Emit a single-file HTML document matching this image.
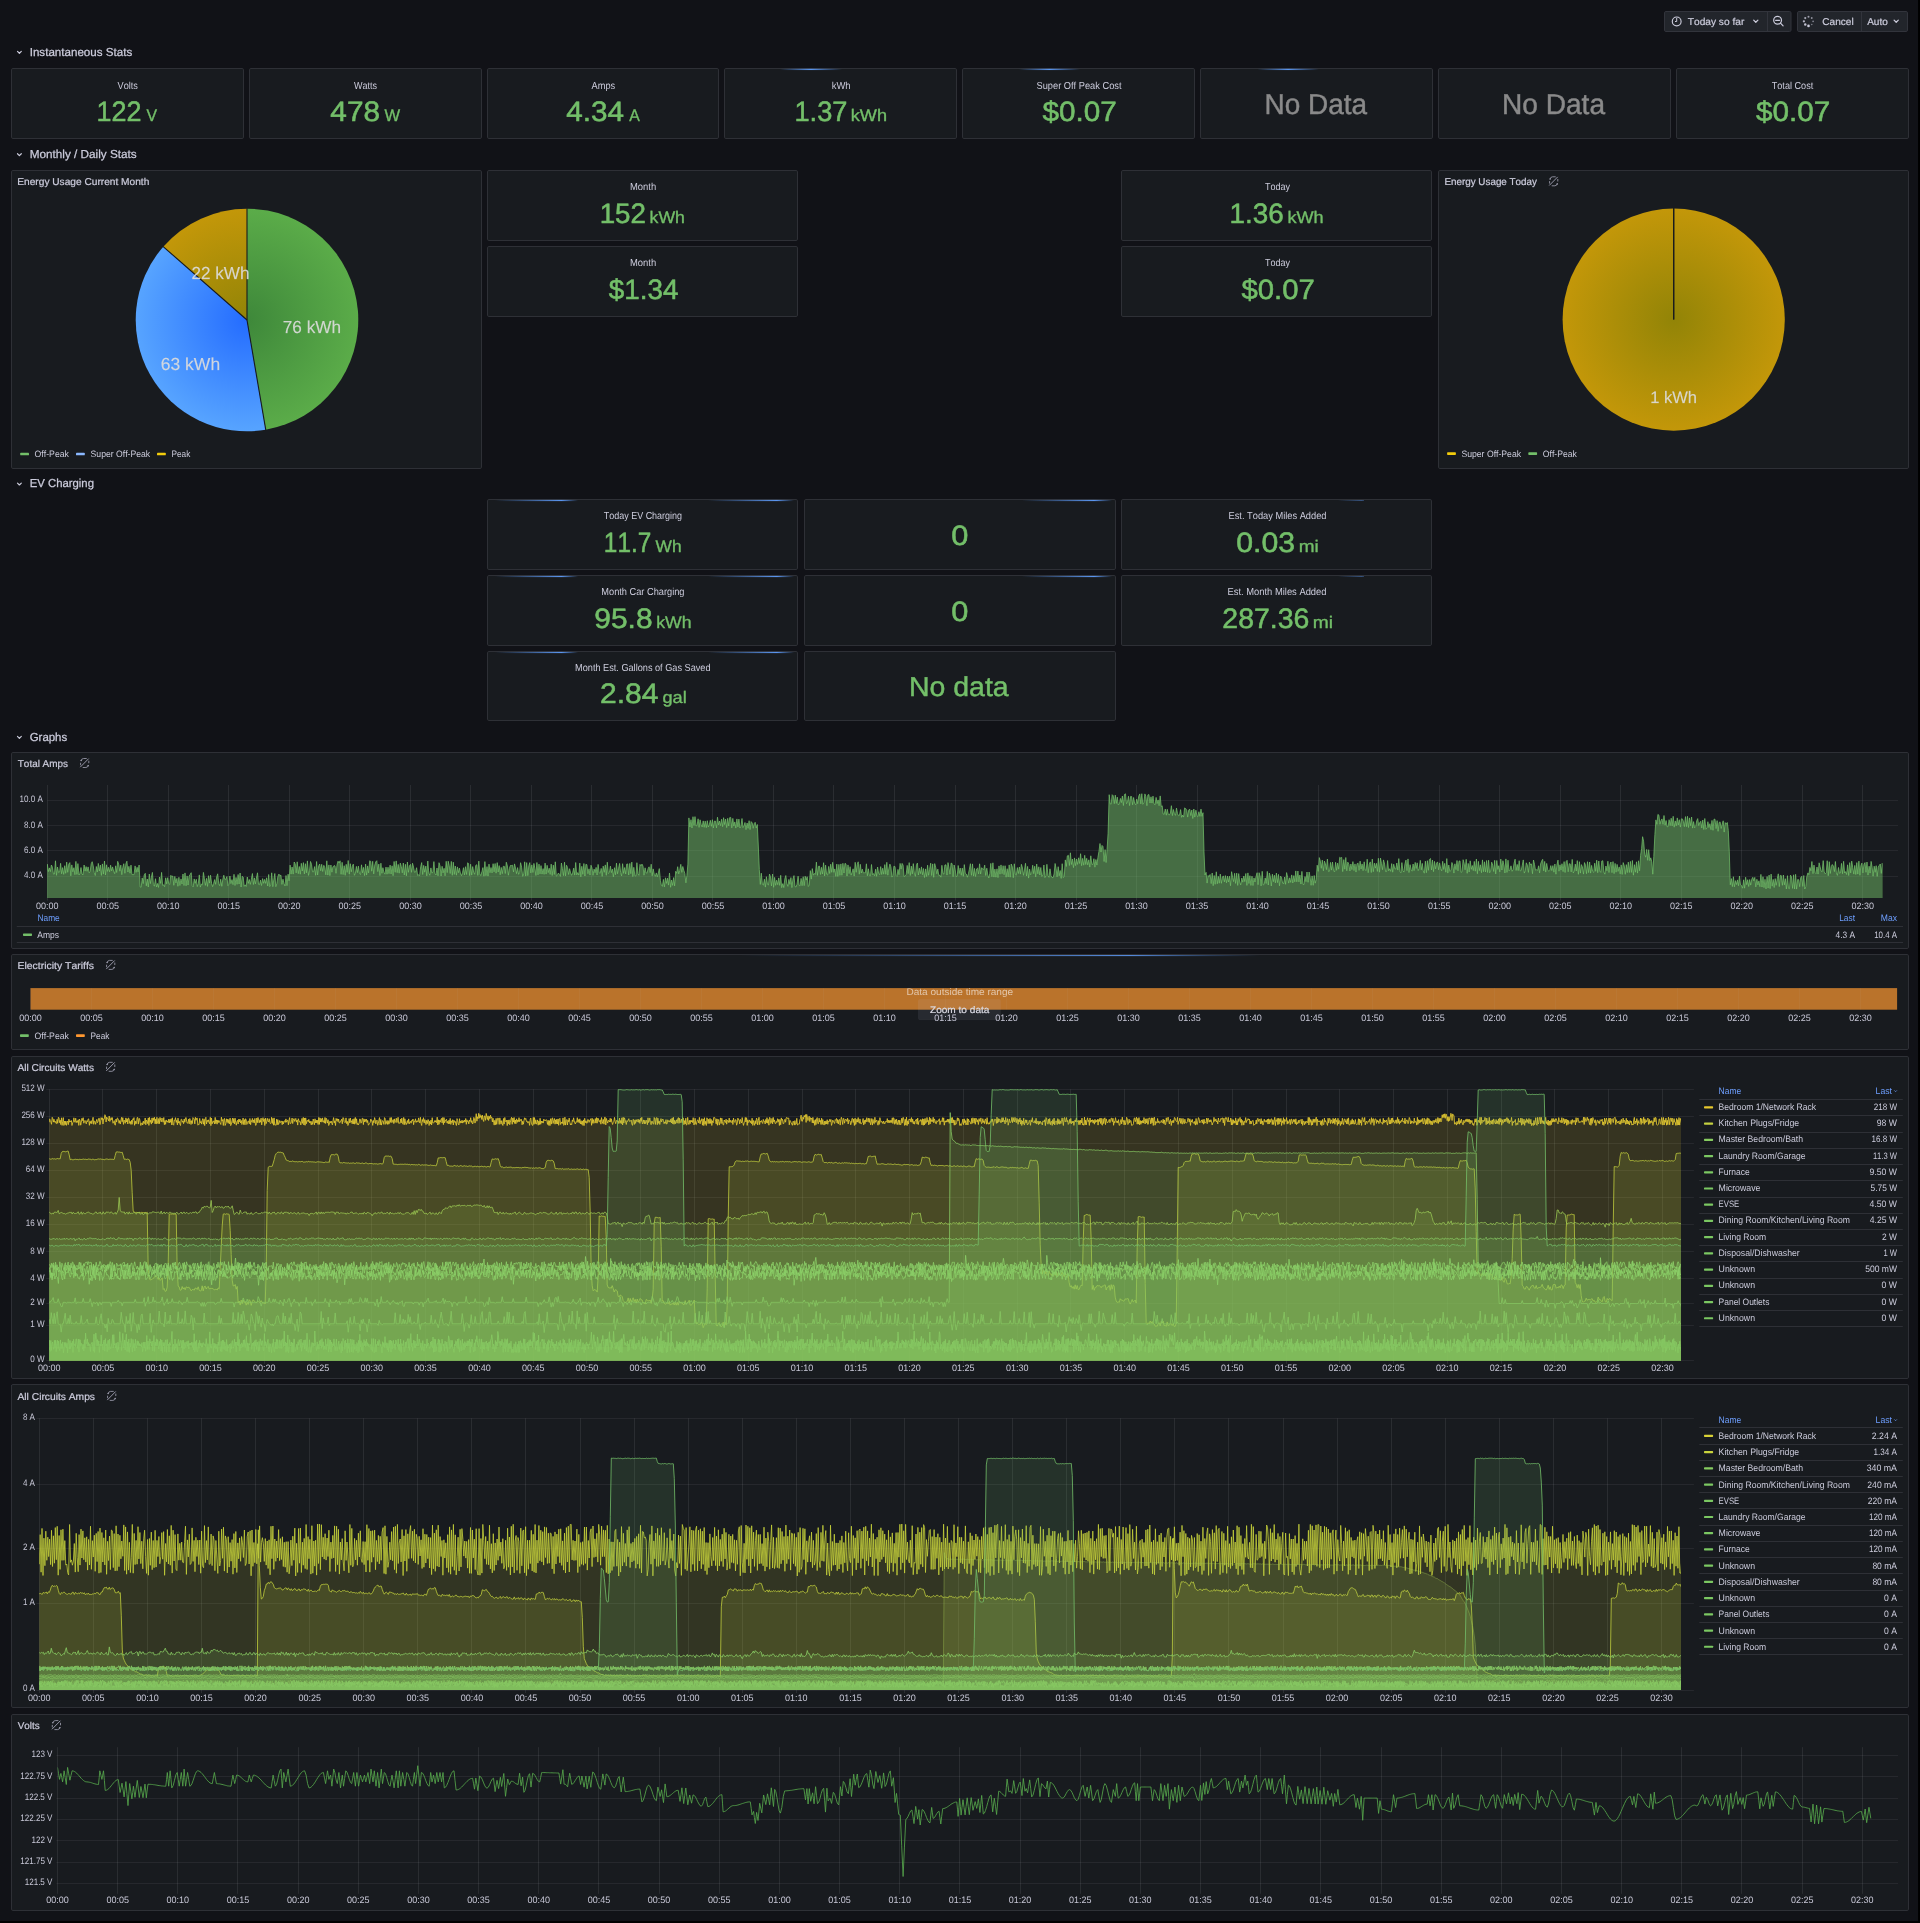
<!DOCTYPE html>
<html><head><meta charset="utf-8"><title>Energy Dashboard</title>
<style>
html,body{margin:0;padding:0;background:#111217;overflow:hidden}
body{width:1920px;height:1923px;position:relative;font-family:"Liberation Sans",sans-serif}
svg{display:block;position:absolute;left:0;top:0;will-change:transform}
svg text{font-family:"Liberation Sans",sans-serif;white-space:pre;text-rendering:geometricPrecision;font-kerning:none}
</style></head><body>
<svg width="1920" height="1923" viewBox="0 0 1920 1923">
<defs>
<linearGradient id="lb" x1="0" x2="1" y1="0" y2="0"><stop offset="0" stop-color="#5794f2" stop-opacity="0"/><stop offset="0.5" stop-color="#5b96f0" stop-opacity="1"/><stop offset="1" stop-color="#5794f2" stop-opacity="0"/></linearGradient>
<linearGradient id="lb2" x1="0" x2="1" y1="0" y2="0"><stop offset="0" stop-color="#5794f2" stop-opacity="0"/><stop offset="0.8" stop-color="#5b96f0" stop-opacity="1"/><stop offset="1" stop-color="#5794f2" stop-opacity="0"/></linearGradient>
<linearGradient id="lb3" x1="0" x2="1" y1="0" y2="0"><stop offset="0" stop-color="#5794f2" stop-opacity="0"/><stop offset="0.9" stop-color="#5b96f0" stop-opacity="0.45"/><stop offset="1" stop-color="#5794f2" stop-opacity="0.3"/></linearGradient>
<linearGradient id="lb4" x1="0" x2="1" y1="0" y2="0"><stop offset="0" stop-color="#5794f2" stop-opacity="0"/><stop offset="0.75" stop-color="#5b96f0" stop-opacity="0.9"/><stop offset="0.9" stop-color="#5794f2" stop-opacity="0.3"/><stop offset="1" stop-color="#5794f2" stop-opacity="0"/></linearGradient>
<linearGradient id="lb5" x1="0" x2="1" y1="0" y2="0"><stop offset="0" stop-color="#5b8fe8" stop-opacity="0.95"/><stop offset="0.45" stop-color="#5b8fe8" stop-opacity="0.95"/><stop offset="0.75" stop-color="#5b8fe8" stop-opacity="0.3"/><stop offset="1" stop-color="#5b8fe8" stop-opacity="0"/></linearGradient>
</defs>
<rect x="0" y="0" width="1920" height="1923" fill="#111217"/>
<rect x="1664.5" y="11.5" width="126.5" height="20" rx="1.4" fill="#22252b" stroke="#32343c" stroke-width="1"/>
<path d="M1767.5 11.5v20" stroke="#32343c" stroke-width="1"/>
<circle cx="1676.7" cy="21.4" r="4.4" fill="none" stroke="#ccccdc" stroke-width="1.15"/>
<path d="M1676.7 18.4v3.1h-1.3" fill="none" stroke="#ccccdc" stroke-width="1" stroke-linecap="round" stroke-linejoin="round"/>
<text x="1687.8" y="25" font-size="9.9" fill="#ccccdc" textLength="56.5" lengthAdjust="spacingAndGlyphs" stroke="#ccccdc" stroke-width="0.2">Today so far</text>
<path d="M1753.7 20.15 l2.1 2.1 l2.1 -2.1" fill="none" stroke="#ccccdc" stroke-width="1.25" stroke-linecap="round" stroke-linejoin="round"/>
<circle cx="1777.6" cy="20.3" r="3.9" fill="none" stroke="#ccccdc" stroke-width="1.2"/>
<path d="M1775.6 20.3h4M1780.5 23.2l2.6 2.6" fill="none" stroke="#ccccdc" stroke-width="1.2" stroke-linecap="round"/>
<rect x="1797.5" y="11.5" width="110" height="20" rx="1.4" fill="#22252b" stroke="#32343c" stroke-width="1"/>
<path d="M1861.5 11.5v20" stroke="#32343c" stroke-width="1"/>
<circle cx="1808.5" cy="25.9" r="1.3" fill="#ccccdc" opacity="1"/>
<circle cx="1805.25" cy="24.55" r="1.23" fill="#ccccdc" opacity="0.93"/>
<circle cx="1803.9" cy="21.3" r="1.16" fill="#ccccdc" opacity="0.86"/>
<circle cx="1805.25" cy="18.05" r="1.09" fill="#ccccdc" opacity="0.79"/>
<circle cx="1808.5" cy="16.7" r="1.02" fill="#ccccdc" opacity="0.72"/>
<circle cx="1811.75" cy="18.05" r="0.95" fill="#ccccdc" opacity="0.65"/>
<circle cx="1813.1" cy="21.3" r="0.88" fill="#ccccdc" opacity="0.58"/>
<circle cx="1811.75" cy="24.55" r="0.81" fill="#ccccdc" opacity="0.51"/>
<text x="1822.3" y="25" font-size="9.9" fill="#ccccdc" textLength="31.4" lengthAdjust="spacingAndGlyphs" stroke="#ccccdc" stroke-width="0.2">Cancel</text>
<text x="1867.2" y="25" font-size="9.9" fill="#ccccdc" textLength="20.6" lengthAdjust="spacingAndGlyphs" stroke="#ccccdc" stroke-width="0.2">Auto</text>
<path d="M1894.1 20.15 l2.1 2.1 l2.1 -2.1" fill="none" stroke="#ccccdc" stroke-width="1.25" stroke-linecap="round" stroke-linejoin="round"/>
<path d="M17.5 51.35 l1.9 1.9 l1.9 -1.9" fill="none" stroke="#ccccdc" stroke-width="1.2" stroke-linecap="round" stroke-linejoin="round"/>
<text x="29.7" y="55.5" font-size="11.6" fill="#ccccdc" textLength="102.5" lengthAdjust="spacingAndGlyphs" stroke="#ccccdc" stroke-width="0.25">Instantaneous Stats</text>
<path d="M17.5 153.75 l1.9 1.9 l1.9 -1.9" fill="none" stroke="#ccccdc" stroke-width="1.2" stroke-linecap="round" stroke-linejoin="round"/>
<text x="29.7" y="157.9" font-size="11.6" fill="#ccccdc" textLength="107" lengthAdjust="spacingAndGlyphs" stroke="#ccccdc" stroke-width="0.25">Monthly / Daily Stats</text>
<path d="M17.5 483.08 l1.9 1.9 l1.9 -1.9" fill="none" stroke="#ccccdc" stroke-width="1.2" stroke-linecap="round" stroke-linejoin="round"/>
<text x="29.7" y="487.23" font-size="11.6" fill="#ccccdc" textLength="64.3" lengthAdjust="spacingAndGlyphs" stroke="#ccccdc" stroke-width="0.25">EV Charging</text>
<path d="M17.5 736.42 l1.9 1.9 l1.9 -1.9" fill="none" stroke="#ccccdc" stroke-width="1.2" stroke-linecap="round" stroke-linejoin="round"/>
<text x="29.7" y="740.57" font-size="11.6" fill="#ccccdc" textLength="37.5" lengthAdjust="spacingAndGlyphs" stroke="#ccccdc" stroke-width="0.25">Graphs</text>
<rect x="11.5" y="68.5" width="232" height="70" rx="1.4" fill="#181b1f" stroke="#2e3036" stroke-width="1"/>
<rect x="249.5" y="68.5" width="232" height="70" rx="1.4" fill="#181b1f" stroke="#2e3036" stroke-width="1"/>
<rect x="487.5" y="68.5" width="231" height="70" rx="1.4" fill="#181b1f" stroke="#2e3036" stroke-width="1"/>
<rect x="724.5" y="68.5" width="232" height="70" rx="1.4" fill="#181b1f" stroke="#2e3036" stroke-width="1"/>
<rect x="962.5" y="68.5" width="232" height="70" rx="1.4" fill="#181b1f" stroke="#2e3036" stroke-width="1"/>
<rect x="1200.5" y="68.5" width="232" height="70" rx="1.4" fill="#181b1f" stroke="#2e3036" stroke-width="1"/>
<rect x="1438.5" y="68.5" width="232" height="70" rx="1.4" fill="#181b1f" stroke="#2e3036" stroke-width="1"/>
<rect x="1676.5" y="68.5" width="232" height="70" rx="1.4" fill="#181b1f" stroke="#2e3036" stroke-width="1"/>
<text x="127.75" y="89.3" font-size="10.2" fill="#ccccdc" text-anchor="middle" textLength="20.3" lengthAdjust="spacingAndGlyphs">Volts</text>
<text x="96.5" y="120.6" font-size="28.1" fill="#73bf69" textLength="44.9" lengthAdjust="spacingAndGlyphs" stroke="#73bf69" stroke-width="0.55">122</text>
<text x="146.48" y="120.6" font-size="16.8" fill="#73bf69" textLength="10.54" lengthAdjust="spacingAndGlyphs" stroke="#73bf69" stroke-width="0.35">V</text>
<text x="365.57" y="89.3" font-size="10.2" fill="#ccccdc" text-anchor="middle" textLength="23" lengthAdjust="spacingAndGlyphs">Watts</text>
<text x="330.39" y="120.6" font-size="28.1" fill="#73bf69" textLength="49.68" lengthAdjust="spacingAndGlyphs" stroke="#73bf69" stroke-width="0.55">478</text>
<text x="384.5" y="120.6" font-size="16.8" fill="#73bf69" textLength="15.63" lengthAdjust="spacingAndGlyphs" stroke="#73bf69" stroke-width="0.35">W</text>
<text x="603.39" y="89.3" font-size="10.2" fill="#ccccdc" text-anchor="middle" textLength="23.6" lengthAdjust="spacingAndGlyphs">Amps</text>
<text x="566.21" y="120.6" font-size="28.1" fill="#73bf69" textLength="57.75" lengthAdjust="spacingAndGlyphs" stroke="#73bf69" stroke-width="0.55">4.34</text>
<text x="629.36" y="120.6" font-size="16.8" fill="#73bf69" textLength="10.56" lengthAdjust="spacingAndGlyphs" stroke="#73bf69" stroke-width="0.35">A</text>
<text x="841.21" y="89.3" font-size="10.2" fill="#ccccdc" text-anchor="middle" textLength="18.8" lengthAdjust="spacingAndGlyphs">kWh</text>
<text x="794.49" y="120.6" font-size="28.1" fill="#73bf69" textLength="52.94" lengthAdjust="spacingAndGlyphs" stroke="#73bf69" stroke-width="0.55">1.37</text>
<text x="850.84" y="120.6" font-size="16.8" fill="#73bf69" textLength="36.19" lengthAdjust="spacingAndGlyphs" stroke="#73bf69" stroke-width="0.35">kWh</text>
<text x="1079.03" y="89.3" font-size="10.2" fill="#ccccdc" text-anchor="middle" textLength="85" lengthAdjust="spacingAndGlyphs">Super Off Peak Cost</text>
<text x="1042.46" y="120.6" font-size="28.1" fill="#73bf69" textLength="74.31" lengthAdjust="spacingAndGlyphs" stroke="#73bf69" stroke-width="0.55">$0.07</text>
<text x="1264.51" y="114.3" font-size="28.9" fill="#8a8a8a" textLength="102.49" lengthAdjust="spacingAndGlyphs" stroke="#8a8a8a" stroke-width="0.45">No Data</text>
<text x="1502" y="114.3" font-size="28.9" fill="#8a8a8a" textLength="103" lengthAdjust="spacingAndGlyphs" stroke="#8a8a8a" stroke-width="0.45">No Data</text>
<text x="1792.49" y="89.3" font-size="10.2" fill="#ccccdc" text-anchor="middle" textLength="41.5" lengthAdjust="spacingAndGlyphs">Total Cost</text>
<text x="1755.92" y="120.6" font-size="28.1" fill="#73bf69" textLength="74.31" lengthAdjust="spacingAndGlyphs" stroke="#73bf69" stroke-width="0.55">$0.07</text>
<rect x="780" y="68.75" width="62" height="1.3" fill="url(#lb)"/>
<rect x="1019" y="68.75" width="61" height="1.3" fill="url(#lb)"/>
<rect x="1257.5" y="68.75" width="61.3" height="1.3" fill="url(#lb)"/>
<rect x="11.5" y="170.5" width="470" height="298" rx="1.4" fill="#181b1f" stroke="#2e3036" stroke-width="1"/>
<text x="17.3" y="184.8" font-size="10" fill="#ccccdc" textLength="132" lengthAdjust="spacingAndGlyphs" stroke="#ccccdc" stroke-width="0.22">Energy Usage Current Month</text>
<radialGradient id="pa0" gradientUnits="userSpaceOnUse" cx="247" cy="320" r="111.3"><stop offset="0" stop-color="rgb(62,136,58)"/><stop offset="1" stop-color="rgb(91,172,73)"/></radialGradient>
<radialGradient id="pa1" gradientUnits="userSpaceOnUse" cx="247" cy="320" r="111.3"><stop offset="0" stop-color="rgb(36,108,255)"/><stop offset="1" stop-color="rgb(87,164,255)"/></radialGradient>
<radialGradient id="pa2" gradientUnits="userSpaceOnUse" cx="247" cy="320" r="111.3"><stop offset="0" stop-color="rgb(146,132,7)"/><stop offset="1" stop-color="rgb(195,151,9)"/></radialGradient>
<path d="M247 320 L247 208.7 A111.3 111.3 0 0 1 265.72 429.71 Z" fill="url(#pa0)"/>
<path d="M247 320 L265.72 429.71 A111.3 111.3 0 0 1 163.28 246.66 Z" fill="url(#pa1)"/>
<path d="M247 320 L163.28 246.66 A111.3 111.3 0 0 1 247 208.7 Z" fill="url(#pa2)"/>
<path d="M247 320 L247 208.2" stroke="#181b1f" stroke-width="1.1"/>
<path d="M247 320 L265.81 430.21" stroke="#181b1f" stroke-width="1.1"/>
<path d="M247 320 L162.91 246.33" stroke="#181b1f" stroke-width="1.1"/>
<text x="282.82" y="333.3" font-size="17.4" fill="#dcdcdc" textLength="58.3" lengthAdjust="spacingAndGlyphs" fill-opacity="0.92" stroke="#dcdcdc" stroke-opacity="0.5" stroke-width="0.25">76 kWh</text>
<text x="160.81" y="370" font-size="17.4" fill="#dcdcdc" textLength="59.33" lengthAdjust="spacingAndGlyphs" fill-opacity="0.92" stroke="#dcdcdc" stroke-opacity="0.5" stroke-width="0.25">63 kWh</text>
<text x="191.44" y="279" font-size="17.4" fill="#dcdcdc" textLength="57.97" lengthAdjust="spacingAndGlyphs" fill-opacity="0.92" stroke="#dcdcdc" stroke-opacity="0.5" stroke-width="0.25">22 kWh</text>
<rect x="20.2" y="452.65" width="8.8" height="2.7" rx="0.7" fill="#73bf69"/>
<text x="34.6" y="457" font-size="9.3" fill="#ccccdc" textLength="34.3" lengthAdjust="spacingAndGlyphs">Off-Peak</text>
<rect x="76" y="452.65" width="8.8" height="2.7" rx="0.7" fill="#8ab8ff"/>
<text x="90.6" y="457" font-size="9.3" fill="#ccccdc" textLength="59.6" lengthAdjust="spacingAndGlyphs">Super Off-Peak</text>
<rect x="157" y="452.65" width="8.8" height="2.7" rx="0.7" fill="#f2cc0c"/>
<text x="171.5" y="457" font-size="9.3" fill="#ccccdc" textLength="18.8" lengthAdjust="spacingAndGlyphs">Peak</text>
<rect x="487.5" y="170.5" width="310" height="70" rx="1.4" fill="#181b1f" stroke="#2e3036" stroke-width="1"/>
<rect x="487.5" y="246.5" width="310" height="70" rx="1.4" fill="#181b1f" stroke="#2e3036" stroke-width="1"/>
<text x="643.1" y="190" font-size="10.2" fill="#ccccdc" text-anchor="middle" textLength="26.2" lengthAdjust="spacingAndGlyphs">Month</text>
<text x="599.69" y="223" font-size="28.1" fill="#73bf69" textLength="46.31" lengthAdjust="spacingAndGlyphs" stroke="#73bf69" stroke-width="0.55">152</text>
<text x="649.61" y="223" font-size="16.8" fill="#73bf69" textLength="35.34" lengthAdjust="spacingAndGlyphs" stroke="#73bf69" stroke-width="0.35">kWh</text>
<text x="643.1" y="265.8" font-size="10.2" fill="#ccccdc" text-anchor="middle" textLength="26.2" lengthAdjust="spacingAndGlyphs">Month</text>
<text x="608.75" y="298.8" font-size="28.1" fill="#73bf69" textLength="69.61" lengthAdjust="spacingAndGlyphs" stroke="#73bf69" stroke-width="0.55">$1.34</text>
<rect x="1121.5" y="170.5" width="310" height="70" rx="1.4" fill="#181b1f" stroke="#2e3036" stroke-width="1"/>
<rect x="1121.5" y="246.5" width="310" height="70" rx="1.4" fill="#181b1f" stroke="#2e3036" stroke-width="1"/>
<text x="1277.5" y="190" font-size="10.2" fill="#ccccdc" text-anchor="middle" textLength="25" lengthAdjust="spacingAndGlyphs">Today</text>
<text x="1229.58" y="223" font-size="28.1" fill="#73bf69" textLength="54.14" lengthAdjust="spacingAndGlyphs" stroke="#73bf69" stroke-width="0.55">1.36</text>
<text x="1287.48" y="223" font-size="16.8" fill="#73bf69" textLength="36.19" lengthAdjust="spacingAndGlyphs" stroke="#73bf69" stroke-width="0.35">kWh</text>
<text x="1277.5" y="265.8" font-size="10.2" fill="#ccccdc" text-anchor="middle" textLength="25" lengthAdjust="spacingAndGlyphs">Today</text>
<text x="1241.44" y="298.8" font-size="28.1" fill="#73bf69" textLength="73.29" lengthAdjust="spacingAndGlyphs" stroke="#73bf69" stroke-width="0.55">$0.07</text>
<rect x="1438.5" y="170.5" width="470" height="298" rx="1.4" fill="#181b1f" stroke="#2e3036" stroke-width="1"/>
<text x="1444.4" y="185" font-size="10" fill="#ccccdc" textLength="92.6" lengthAdjust="spacingAndGlyphs" stroke="#ccccdc" stroke-width="0.22">Energy Usage Today</text>
<g fill="none" stroke="#9d9dae" stroke-width="0.85" stroke-linecap="round" stroke-linejoin="round">
<path d="M1549.5 185.2L1557.4 177.2" stroke-width="0.95"/>
<path d="M1550 178.9Q1550.5 176.9 1552.5 176.8H1555.3"/>
<path d="M1557.8 179.4V181.1"/>
<path d="M1557.4 183.7Q1556.9 185.7 1554.9 185.8H1552.1"/>
<path d="M1549.6 183.2V181.5"/>
<circle cx="1550.2" cy="178.9" r="0.75" fill="#9d9dae" stroke="none"/>
<circle cx="1557.1" cy="184" r="0.75" fill="#9d9dae" stroke="none"/>
</g>
<radialGradient id="pb0" gradientUnits="userSpaceOnUse" cx="1673.7" cy="319.6" r="111.1"><stop offset="0" stop-color="rgb(146,132,7)"/><stop offset="1" stop-color="rgb(195,151,9)"/></radialGradient>
<circle cx="1673.7" cy="319.6" r="111.1" fill="url(#pb0)"/>
<path d="M1673.7 319.6 L1673.7 208" stroke="#181b1f" stroke-width="1.1"/>
<path d="M1673.7 319.6 V208" stroke="#181b1f" stroke-width="1.2"/>
<text x="1650.24" y="402.5" font-size="16.7" fill="#dcdcdc" textLength="46.83" lengthAdjust="spacingAndGlyphs" fill-opacity="0.92" stroke="#dcdcdc" stroke-opacity="0.5" stroke-width="0.25">1 kWh</text>
<rect x="1447.1" y="452.35" width="8.8" height="2.7" rx="0.7" fill="#f2cc0c"/>
<text x="1461.4" y="456.7" font-size="9.3" fill="#ccccdc" textLength="59.7" lengthAdjust="spacingAndGlyphs">Super Off-Peak</text>
<rect x="1528.3" y="452.35" width="8.8" height="2.7" rx="0.7" fill="#73bf69"/>
<text x="1542.8" y="456.7" font-size="9.3" fill="#ccccdc" textLength="34" lengthAdjust="spacingAndGlyphs">Off-Peak</text>
<rect x="487.5" y="499.5" width="310" height="70" rx="1.4" fill="#181b1f" stroke="#2e3036" stroke-width="1"/>
<rect x="804.5" y="499.5" width="311" height="70" rx="1.4" fill="#181b1f" stroke="#2e3036" stroke-width="1"/>
<rect x="1121.5" y="499.5" width="310" height="70" rx="1.4" fill="#181b1f" stroke="#2e3036" stroke-width="1"/>
<rect x="487.5" y="575.5" width="310" height="70" rx="1.4" fill="#181b1f" stroke="#2e3036" stroke-width="1"/>
<rect x="804.5" y="575.5" width="311" height="70" rx="1.4" fill="#181b1f" stroke="#2e3036" stroke-width="1"/>
<rect x="1121.5" y="575.5" width="310" height="70" rx="1.4" fill="#181b1f" stroke="#2e3036" stroke-width="1"/>
<rect x="487.5" y="651.5" width="310" height="69" rx="1.4" fill="#181b1f" stroke="#2e3036" stroke-width="1"/>
<rect x="804.5" y="651.5" width="311" height="69" rx="1.4" fill="#181b1f" stroke="#2e3036" stroke-width="1"/>
<rect x="495" y="499.9" width="83" height="1.2" fill="url(#lb2)"/>
<rect x="708" y="499.9" width="86" height="1.2" fill="url(#lb2)"/>
<rect x="495" y="575.9" width="83" height="1.2" fill="url(#lb2)"/>
<rect x="708" y="575.9" width="86" height="1.2" fill="url(#lb2)"/>
<rect x="495" y="651.9" width="83" height="1.2" fill="url(#lb2)"/>
<rect x="708" y="651.9" width="86" height="1.2" fill="url(#lb2)"/>
<rect x="1022" y="499.9" width="90" height="1.2" fill="url(#lb2)"/>
<rect x="1338" y="500" width="26" height="1" fill="url(#lb3)"/>
<rect x="1022" y="575.9" width="90" height="1.2" fill="url(#lb2)"/>
<rect x="1338" y="576" width="26" height="1" fill="url(#lb3)"/>
<text x="642.9" y="519.2" font-size="10.2" fill="#ccccdc" text-anchor="middle" textLength="78.3" lengthAdjust="spacingAndGlyphs">Today EV Charging</text>
<text x="603.85" y="551.8" font-size="28.1" fill="#73bf69" textLength="47.38" lengthAdjust="spacingAndGlyphs" stroke="#73bf69" stroke-width="0.55">11.7</text>
<text x="655.62" y="551.8" font-size="16.8" fill="#73bf69" textLength="26" lengthAdjust="spacingAndGlyphs" stroke="#73bf69" stroke-width="0.35">Wh</text>
<text x="642.9" y="595.2" font-size="10.2" fill="#ccccdc" text-anchor="middle" textLength="83.2" lengthAdjust="spacingAndGlyphs">Month Car Charging</text>
<text x="594.35" y="627.8" font-size="28.1" fill="#73bf69" textLength="58.2" lengthAdjust="spacingAndGlyphs" stroke="#73bf69" stroke-width="0.55">95.8</text>
<text x="656.26" y="627.8" font-size="16.8" fill="#73bf69" textLength="35.34" lengthAdjust="spacingAndGlyphs" stroke="#73bf69" stroke-width="0.35">kWh</text>
<text x="642.8" y="671" font-size="10.2" fill="#ccccdc" text-anchor="middle" textLength="135.5" lengthAdjust="spacingAndGlyphs">Month Est. Gallons of Gas Saved</text>
<text x="599.99" y="703.3" font-size="28.1" fill="#73bf69" textLength="58.39" lengthAdjust="spacingAndGlyphs" stroke="#73bf69" stroke-width="0.55">2.84</text>
<text x="662.44" y="703.3" font-size="16.8" fill="#73bf69" textLength="24.28" lengthAdjust="spacingAndGlyphs" stroke="#73bf69" stroke-width="0.35">gal</text>
<text x="951.35" y="544.7" font-size="28.1" fill="#73bf69" textLength="17.1" lengthAdjust="spacingAndGlyphs" stroke="#73bf69" stroke-width="0.55">0</text>
<text x="951.35" y="620.5" font-size="28.1" fill="#73bf69" textLength="17.1" lengthAdjust="spacingAndGlyphs" stroke="#73bf69" stroke-width="0.55">0</text>
<text x="908.96" y="696.3" font-size="27.3" fill="#73bf69" textLength="99.74" lengthAdjust="spacingAndGlyphs" stroke="#73bf69" stroke-width="0.45">No data</text>
<text x="1277.5" y="519.2" font-size="10.2" fill="#ccccdc" text-anchor="middle" textLength="98" lengthAdjust="spacingAndGlyphs">Est. Today Miles Added</text>
<text x="1236.32" y="551.8" font-size="28.1" fill="#73bf69" textLength="58.81" lengthAdjust="spacingAndGlyphs" stroke="#73bf69" stroke-width="0.55">0.03</text>
<text x="1298.74" y="551.8" font-size="16.8" fill="#73bf69" textLength="20.04" lengthAdjust="spacingAndGlyphs" stroke="#73bf69" stroke-width="0.35">mi</text>
<text x="1277" y="595.2" font-size="10.2" fill="#ccccdc" text-anchor="middle" textLength="99" lengthAdjust="spacingAndGlyphs">Est. Month Miles Added</text>
<text x="1222.37" y="627.8" font-size="28.1" fill="#73bf69" textLength="86.98" lengthAdjust="spacingAndGlyphs" stroke="#73bf69" stroke-width="0.55">287.36</text>
<text x="1312.82" y="627.8" font-size="16.8" fill="#73bf69" textLength="20.27" lengthAdjust="spacingAndGlyphs" stroke="#73bf69" stroke-width="0.35">mi</text>
<rect x="11.5" y="752.5" width="1897" height="196" rx="1.4" fill="#181b1f" stroke="#2e3036" stroke-width="1"/>
<text x="17.8" y="766.7" font-size="10" fill="#ccccdc" textLength="50.2" lengthAdjust="spacingAndGlyphs" stroke="#ccccdc" stroke-width="0.22">Total Amps</text>
<g fill="none" stroke="#9d9dae" stroke-width="0.85" stroke-linecap="round" stroke-linejoin="round">
<path d="M80.5 766.9L88.4 758.9" stroke-width="0.95"/>
<path d="M81 760.6Q81.5 758.6 83.5 758.5H86.3"/>
<path d="M88.8 761.1V762.8"/>
<path d="M88.4 765.4Q87.9 767.4 85.9 767.5H83.1"/>
<path d="M80.6 764.9V763.2"/>
<circle cx="81.2" cy="760.6" r="0.75" fill="#9d9dae" stroke="none"/>
<circle cx="88.1" cy="765.7" r="0.75" fill="#9d9dae" stroke="none"/>
</g>
<path d="M47.5 785V900.6M107.5 785V900.6M168.5 785V900.6M228.5 785V900.6M289.5 785V900.6M349.5 785V900.6M410.5 785V900.6M470.5 785V900.6M531.5 785V900.6M591.5 785V900.6M652.5 785V900.6M712.5 785V900.6M773.5 785V900.6M833.5 785V900.6M894.5 785V900.6M955.5 785V900.6M1015.5 785V900.6M1076.5 785V900.6M1136.5 785V900.6M1197.5 785V900.6M1257.5 785V900.6M1318.5 785V900.6M1378.5 785V900.6M1439.5 785V900.6M1499.5 785V900.6M1560.5 785V900.6M1620.5 785V900.6M1681.5 785V900.6M1741.5 785V900.6M1802.5 785V900.6M1862.5 785V900.6" stroke="#ccccdc" stroke-opacity="0.1" stroke-width="1" fill="none"/>
<path d="M47.3 800.5H1898M47.3 825.5H1898M47.3 850.5H1898M47.3 876.5H1898" stroke="#ccccdc" stroke-opacity="0.08" stroke-width="1" fill="none"/>
<text x="19.47" y="802.18" font-size="9.3" fill="#c7c7d6" textLength="23.33" lengthAdjust="spacingAndGlyphs">10.0 A</text>
<text x="23.96" y="827.52" font-size="9.3" fill="#c7c7d6" textLength="18.84" lengthAdjust="spacingAndGlyphs">8.0 A</text>
<text x="23.96" y="852.86" font-size="9.3" fill="#c7c7d6" textLength="18.84" lengthAdjust="spacingAndGlyphs">6.0 A</text>
<text x="23.96" y="878.2" font-size="9.3" fill="#c7c7d6" textLength="18.84" lengthAdjust="spacingAndGlyphs">4.0 A</text>
<text x="47.3" y="908.8" font-size="9.3" fill="#c7c7d6" text-anchor="middle" textLength="22.52" lengthAdjust="spacingAndGlyphs">00:00</text>
<text x="107.81" y="908.8" font-size="9.3" fill="#c7c7d6" text-anchor="middle" textLength="22.52" lengthAdjust="spacingAndGlyphs">00:05</text>
<text x="168.33" y="908.8" font-size="9.3" fill="#c7c7d6" text-anchor="middle" textLength="22.52" lengthAdjust="spacingAndGlyphs">00:10</text>
<text x="228.84" y="908.8" font-size="9.3" fill="#c7c7d6" text-anchor="middle" textLength="22.52" lengthAdjust="spacingAndGlyphs">00:15</text>
<text x="289.36" y="908.8" font-size="9.3" fill="#c7c7d6" text-anchor="middle" textLength="22.52" lengthAdjust="spacingAndGlyphs">00:20</text>
<text x="349.88" y="908.8" font-size="9.3" fill="#c7c7d6" text-anchor="middle" textLength="22.52" lengthAdjust="spacingAndGlyphs">00:25</text>
<text x="410.39" y="908.8" font-size="9.3" fill="#c7c7d6" text-anchor="middle" textLength="22.52" lengthAdjust="spacingAndGlyphs">00:30</text>
<text x="470.91" y="908.8" font-size="9.3" fill="#c7c7d6" text-anchor="middle" textLength="22.52" lengthAdjust="spacingAndGlyphs">00:35</text>
<text x="531.42" y="908.8" font-size="9.3" fill="#c7c7d6" text-anchor="middle" textLength="22.52" lengthAdjust="spacingAndGlyphs">00:40</text>
<text x="591.93" y="908.8" font-size="9.3" fill="#c7c7d6" text-anchor="middle" textLength="22.52" lengthAdjust="spacingAndGlyphs">00:45</text>
<text x="652.45" y="908.8" font-size="9.3" fill="#c7c7d6" text-anchor="middle" textLength="22.52" lengthAdjust="spacingAndGlyphs">00:50</text>
<text x="712.96" y="908.8" font-size="9.3" fill="#c7c7d6" text-anchor="middle" textLength="22.52" lengthAdjust="spacingAndGlyphs">00:55</text>
<text x="773.48" y="908.8" font-size="9.3" fill="#c7c7d6" text-anchor="middle" textLength="22.52" lengthAdjust="spacingAndGlyphs">01:00</text>
<text x="833.99" y="908.8" font-size="9.3" fill="#c7c7d6" text-anchor="middle" textLength="22.52" lengthAdjust="spacingAndGlyphs">01:05</text>
<text x="894.51" y="908.8" font-size="9.3" fill="#c7c7d6" text-anchor="middle" textLength="22.52" lengthAdjust="spacingAndGlyphs">01:10</text>
<text x="955.02" y="908.8" font-size="9.3" fill="#c7c7d6" text-anchor="middle" textLength="22.52" lengthAdjust="spacingAndGlyphs">01:15</text>
<text x="1015.54" y="908.8" font-size="9.3" fill="#c7c7d6" text-anchor="middle" textLength="22.52" lengthAdjust="spacingAndGlyphs">01:20</text>
<text x="1076.05" y="908.8" font-size="9.3" fill="#c7c7d6" text-anchor="middle" textLength="22.52" lengthAdjust="spacingAndGlyphs">01:25</text>
<text x="1136.57" y="908.8" font-size="9.3" fill="#c7c7d6" text-anchor="middle" textLength="22.52" lengthAdjust="spacingAndGlyphs">01:30</text>
<text x="1197.09" y="908.8" font-size="9.3" fill="#c7c7d6" text-anchor="middle" textLength="22.52" lengthAdjust="spacingAndGlyphs">01:35</text>
<text x="1257.6" y="908.8" font-size="9.3" fill="#c7c7d6" text-anchor="middle" textLength="22.52" lengthAdjust="spacingAndGlyphs">01:40</text>
<text x="1318.12" y="908.8" font-size="9.3" fill="#c7c7d6" text-anchor="middle" textLength="22.52" lengthAdjust="spacingAndGlyphs">01:45</text>
<text x="1378.63" y="908.8" font-size="9.3" fill="#c7c7d6" text-anchor="middle" textLength="22.52" lengthAdjust="spacingAndGlyphs">01:50</text>
<text x="1439.14" y="908.8" font-size="9.3" fill="#c7c7d6" text-anchor="middle" textLength="22.52" lengthAdjust="spacingAndGlyphs">01:55</text>
<text x="1499.66" y="908.8" font-size="9.3" fill="#c7c7d6" text-anchor="middle" textLength="22.52" lengthAdjust="spacingAndGlyphs">02:00</text>
<text x="1560.17" y="908.8" font-size="9.3" fill="#c7c7d6" text-anchor="middle" textLength="22.52" lengthAdjust="spacingAndGlyphs">02:05</text>
<text x="1620.69" y="908.8" font-size="9.3" fill="#c7c7d6" text-anchor="middle" textLength="22.52" lengthAdjust="spacingAndGlyphs">02:10</text>
<text x="1681.2" y="908.8" font-size="9.3" fill="#c7c7d6" text-anchor="middle" textLength="22.52" lengthAdjust="spacingAndGlyphs">02:15</text>
<text x="1741.72" y="908.8" font-size="9.3" fill="#c7c7d6" text-anchor="middle" textLength="22.52" lengthAdjust="spacingAndGlyphs">02:20</text>
<text x="1802.23" y="908.8" font-size="9.3" fill="#c7c7d6" text-anchor="middle" textLength="22.52" lengthAdjust="spacingAndGlyphs">02:25</text>
<text x="1862.75" y="908.8" font-size="9.3" fill="#c7c7d6" text-anchor="middle" textLength="22.52" lengthAdjust="spacingAndGlyphs">02:30</text>
<clipPath id="cta"><rect x="47" y="783" width="1835.5" height="115"/></clipPath>
<path d="M45.3 901V865.7l1 8.7 1-10.2 1.1 7.4 1-3.7 1 3.7 1-6.6 1 2.2 1.1 7 1-.2 1-13.2 1 14.5 1-8.3 1.1 5.7 1-.6 1-8.8 1 10.5 1-6.2 1.1 6.8 1-8.7 1 7.6 1-11.2 1 10.2 1.1-8.2 1-1.5 1 13.2 1-10.9 1 6.9 1.1-4.1 1 7 1-13.3 1 13 1-10.8 1.1 11.4 1-1.7 1-5.8 1 6.6 1 .8 1.1-9.9 1 6.1 1-4.5 1 4.7 1-4.4 1.1 5.9 1-1.4 1-7.7 1-2 1 4.1 1.1 6.9 1 2.8 1-9 1 5.5 1-8.6 1.1 7.6 1-6 1 10.4 1-11.5 1 10.2 1.1-13.1 1 14 1-10.2 1 6.6 1-4.1 1.1 4.5 1-6.6 1 5.7 1-4 1 4.1 1.1 2.7 1-7.9 1 6.7 1-11.2 1 2.9 1.1 7 1-6.1 1 9.6 1-7.2 1-3.8 1.1 9.6 1-9.6 1-2.5 1 10.8 1-5.7 1.1 6.9 1-8.1 1 9.4 1 .2 1-.1 1.1-8.7 1 6.5 1-5.1 1 4.6 1-6.9 1.1 22.1 1 .1 1-9.3 1 5.7 1-8.7 1.1-1.6 1 12.5 1-6.8 1 8 1-13 1.1 9.6 1-6.5 1-4.7 1 12.2 1 1.6 1.1-7.5 1 8.3 1-3.5 1 3.9 1-10.4 1.1 6.4 1-11 1 12.9 1-.5 1 1.9 1.1-8.9 1 6.1 1-6.2 1 5.7 1 1.1 1.1-9.2 1 1.3 1-.6 1 9.3 1-8.9 1.1 6.5 1-4.5 1 7.9 1-9 1 8.2 1.1-6.6 1 5.1 1-10 1 11.5 1-12.6 1.1 12.9 1-9.9 1 9.1 1-8.8 1-1.6 1.1-1.9 1 12.9 1 1.3 1-8 1 4.4 1.1-4 1 7.3 1-2.9 1-8.8 1 12.2 1.1-3.1 1 .8 1-12.4 1 6.2 1 6.8 1.1-7 1 8 1-10.7 1 7.4 1-7.9 1.1 8.1 1 3.4 1-3.2 1-3.9 1 4.7 1.1-7.6 1-2.9 1 9.9 1 2 1-6.5 1.1 7.1 1-6.9 1-4.2 1 4.1 1 .1 1.1-2.9 1 9.2 1-1.4 1-8.3 1 7.6 1.1-4 1 5 1-10.3 1 11.2 1-8.1 1.1 6.9 1-9.8 1 9.5 1-11 1 14 1.1-10.7 1 .8 1 9.3 1-1.6 1 1.7 1.1-9.5 1 6.4 1-3.9 1 4.9 1-5 1.1-5.9 1 11 1-6.6 1 6 1-5.8 1.1-5.3 1 11.6 1 .3 1-4.6 1 5.4 1.1-6.9 1 4.7 1-3.9 1 4 1-5.6 1.1 8.2 1-11.5 1 12.1 1-1.5 1-12.3 1.1 13.9 1-6.9 1-6.3 1 13.2 1-2.8 1.1-7.5 1-2.3 1 1.7 1-.7 1 9.3 1.1-5.2 1 4.6 1 2.2 1-10.5 1 10.1 1.1-11.4 1 6.6 1-15.7 1 9 1-7.1 1.1 7.1 1-12.1 1 1.9 1 9 1-11.1 1.1 11.9 1-7.2 1 7.7 1-10.9 1 7.7 1.1-8.4 1 11.3 1-10.2 1 9.2 1-12 1.1 14.5 1-4.6 1-9.3 1 2.8 1 7.5 1.1 0 1-5.2 1 8.7 1-13.8 1 13.5 1.1-9.1 1-1.9 1 6.8 1-6.5 1 7.2 1.1-6.2 1 2.4 1 7.1 1-14 1 14.3 1.1-10.2 1 10.7 1-10.6 1 7.2 1-5.2 1.1-1.4 1 .3 1 7.4 1-8.3 1-3.8 1.1 1.9 1-2.3 1 13.5 1-12 1 12.2 1.1-8.8 1 9.6 1-11 1 8.1 1-11.9 1.1 13.6 1-10.4 1 8.1 1-5.5 1-2.2 1.1 11.2 1-2.2 1-6.7 1 6.2 1-6.5 1.1 7.6 1 .9 1-9.8 1 8 1-5.4 1.1 8.2 1-11.5 1 11 1-9.2 1 7 1.1-12.1 1 .6 1 9.8 1-9.9 1 12.6 1.1-8.9 1-3.2 1-1.1 1 10.9 1-7.5 1.1 11.5 1-12.4 1 10.1 1-5.6 1 4.5 1.1 2 1-7.1 1 7.1 1-7 1 6.4 1.1-8.5 1 8.9 1-8.2 1 9.9 1-14.2 1.1 10.8 1-11.4 1 11.8 1-8.3 1 8.8 1.1-10.1 1 3.3 1 6.4 1-9.8 1 12 1.1-10.7 1 11.5 1-13.8 1 10.3 1-6.4 1.1-1.5 1 7.9 1-9.1 1 3.9 1 5.2 1.1-.3 1-4.3 1 7.8 1-.7 1 .9 1.1-8.9 1-4.2 1 11.9 1-9.1 1 6.8 1.1-6.1 1 9.8 1-14.9 1 12.1 1 2.2 1.1-7.4 1 5.2 1-.8 1-10.7 1 11.7 1.1 1.7 1-7 1 7.8 1-13.1 1 3.1 1.1 10.2 1-9.7 1 6.6 1-4.6 1 7.5 1.1-14.5 1 11.3 1-11.4 1 4.3 1 8 1.1-12.1 1 13.9 1-13.1 1 12.2 1-8.4 1.1 9.2 1-8.3 1 5.8 1-4.6 1 5 1.1 2.6 1-2.9 1-5.1 1 7.2 1-8.2 1.1 7.8 1-11.7 1 .7 1 12 1-11.3 1.1 10.9 1-8.5 1 5.7 1 2 1-8.8 1.1-.8 1 10.7 1-14.3 1 12.8 1 1.7 1.1-3.8 1-4.2 1 8.6 1-14.6 1 14.1 1.1-9.1 1 9.5 1-12 1 8.6 1-5.2 1.1 5.4 1-9.2 1 8.1 1-8.3 1 9.7 1.1-10.6 1 9.4 1-6.4 1 9.2 1-7.4 1.1 6.3 1-7.4 1 0 1 7.2 1-11.3 1.1 3.7 1 9.3 1-6.6 1-3.1 1 .1 1.1-.4 1 6.7 1-8 1 4.1 1 5.6 1.1-6 1 6.7 1-1.9 1-9.7 1 4.5 1.1 9.1 1-2.2 1-12.3 1 14.3 1-13.5 1.1 13 1-9.9 1-3.1 1 10.3 1-8 1.1 7.6 1-9.1 1 5.1 1 7 1-13 1.1 12.3 1-10.7 1 9.8 1-8.3 1 8.5 1.1-5.5 1 5.7 1-11.2 1 11 1-8.8 1.1 7.3 1-4.4 1 6.2 1-10.3 1 11.4 1.1-10.4 1 9.3 1-12.6 1 14.3 1-.6 1.1-2.5 1 1.4 1 2 1-13.4 1 5.4 1.1 7.2 1-13.4 1 13.7 1-10.7 1 2.2 1.1 7.1 1-5.8 1 4.2 1 2.4 1-2.4 1.1-4.8 1 7 1-12.6 1 12.4 1-2.3 1.1 2.5 1-12 1 13.7 1-10.5 1 8 1.1-10.8 1 12.5 1-11.7 1 .4 1 9 1.1-4.9 1 6.3 1-9.9 1 2.9 1 7.2 1.1-6.2 1 3.6 1-5.3 1 7.6 1-10.6 1.1 8.5 1 .5 1-5 1 8 1-10.3 1.1 6.2 1-7.4 1 10.4 1-13.1 1 11.3 1.1-1 1-6.4 1 6.5 1-3.5 1 7.7 1.1-9.1 1 7 1-11.6 1 10.7 1-5 1.1-5.4 1 9 1 3.5 1-12.2 1 9.7 1.1-5.9 1 6.5 1-9.9 1-.2 1 11.1 1.1-11.6 1 10.3 1-11.6 1 14.5 1-9.3 1.1 8.6 1 .1 1-13.3 1 10.9 1 1.8 1.1-11 1 1.4 1-1.7 1 2 1 9.1 1.1-7.4 1 5.1 1 .3 1-4.6 1-1.8 1.1 5.8 1-8.4 1 11.6 1-6.9 1 5.3 1.1 2.2 1-3.5 1 4 1-3.8 1-4.5 1.1 11.8 1 5 1 .9 1-6.9 1 7.5 1.1-9.1 1 5.6 1-5.3 1 7 1-12.1 1.1 14.3 1-7.3 1 5.4 1-7.8 1 8.3 1.1-14.6 1 2 1-6.6 1 7.2 1-3.2 1.1-6.4 1 8.1 1-5.9 1 3.8 1 3.1 1.1 9.4 1-7.2 1-11.5 1-46.2 1 9.1 1.1-7.3 1 8.3 1-11.3 1 8.7 1-8.8 1.1 9.4 1-.6 1-6.6 1 8.6 1-7.6 1.1 5.2 1 2 1-6.1 1 6.4 1-6.2 1.1 6.6 1-7 1 6.3 1-2.1 1-4.6 1.1 6 1-6.6 1 8.2 1-6.8 1 0 1.1 6.8 1-10.7 1 7.7 1-3.9 1 4.6 1.1-6.4 1 7.5 1-9 1 6.9 1-5.5 1.1 8.5 1-9.3 1 7.7 1-8.4 1-.2 1.1 10.5 1-9.5 1 7.7 1-4.2 1 6.2 1.1-9.2 1 8 1-7.8 1 8.9 1-1.7 1.1-7.8 1 9.1 1-1.6 1-3.5 1 7.1 1.1-6.6 1 5.3 1-7.6 1 8.9 1-8 1.1 1.3 1 5.4 1-4.7 1-1.3 1 5.8 1.1-3.6 1 21.5 1 23.5 1 14.9 1-11.2 1.1 11.2 1 .8 1-6 1 7.9 1-10.4 1.1 7.7 1 .6 1-10.9 1 2.6 1 9.2 1.1-11.9 1 13.3 1-9.9 1 7.9 1-5.1 1.1 4.5 1-6.8 1 7.5 1-10.1 1 12.4 1.1-4.1 1 4 1-8.5 1-3.6 1 7.9 1.1 3 1-7 1 5 1-6.8 1 10 1.1-8.7 1-3.3 1 10.9 1 .5 1-2.7 1.1-8.1 1 9.2 1 .5 1-7.5 1 7.3 1.1-9 1 8.9 1-9.4 1 3.9 1-3.4 1.1 9.8 1-1.4 1-14.5 1 8.5 1-10.5 1.1 6.6 1-1.7 1 .9 1-12.3 1 13.3 1.1-9.1 1-.2 1 8.4 1-7.2 1 6.7 1.1-11.3 1 13.2 1-10.8 1 9.3 1 .7 1.1-8.7 1 7.1 1-9.3 1 8.1 1-10 1.1 10 1-3.4 1 7.5 1-12.3 1 12.3 1.1-12 1 11 1-11.5 1 11.4 1-12 1.1 9.7 1-9.7 1 .8 1 12 1-11.2 1.1 8.7 1-6.9 1 8.5 1-2.7 1-3.7 1.1 7.3 1-13.8 1 10 1-7.6 1-2.9 1.1 12.4 1-9.9 1 8.7 1-3.9 1 3.8 1.1-.2 1 .2 1-9.1 1 12 1-7 1.1 6.9 1 .1 1-11.3 1 10.1 1-1 1.1 2.2 1-6.6 1 7.1 1-9.3 1 6.2 1.1 1.5 1-8.1 1 7.9 1-6.3 1 6 1.1-9.6 1 9.7 1-12 1 12.9 1-6.3 1.1-4.8 1 2.8 1 10.2 1-1.7 1-9.2 1.1 .4 1 8.8 1 1 1-7 1 5.2 1.1-11.2 1 5.7 1-5.7 1 1.8 1 11.4 1.1-.7 1-1.6 1-8.9 1 8.2 1-11 1.1 12.9 1-9.4 1 7.8 1-10.3 1 9.5 1.1 3.2 1-11.1 1-2.2 1 12 1-6.8 1.1 5.4 1-6.7 1 7.8 1-6.2 1 9 1.1-8.6 1 7.6 1-11.3 1 10.1 1-5.9 1.1-6.2 1 12.3 1-11.6 1 13.4 1-13.7 1.1 4.2 1 6 1-4.7 1 6.4 1-.4 1.1 2.1 1-11.9 1 8.2 1 .6 1-9.1 1.1-.2 1 10.3 1-12.5 1 5.6 1 6 1.1-11.1 1 .5 1 13.1 1-11.7 1 4.4 1.1 7.2 1-.4 1-10.7 1 8 1-5.5 1.1 7.3 1-7.2 1 8.2 1-11.7 1 8.7 1.1 .8 1 3.1 1-3.4 1-4.6 1-5.5 1.1 11.6 1-11.4 1 12.2 1-7.7 1 8.1 1.1-7.6 1-.9 1 5.9 1-10.1 1 10.2 1.1-6.3 1 1.5 1 .5 1-4.6 1 10.4 1.1-7.3 1 6.8 1 3 1-4.3 1-10.3 1.1 13.3 1-13.9 1 14.3 1-8 1 8.1 1.1-8.4 1 8.8 1-11.7 1 8.3 1-9.3 1.1 8.8 1-8 1 9 1-9 1 11.5 1.1-8.5 1 8.2 1-12 1 12.3 1-13.2 1.1 2.6 1 11.1 1-13.9 1 10.5 1 .9 1.1-7.6 1 5.9 1-6.5 1 7.1 1-9.8 1.1 3.7 1 7.3 1-5.4 1-6.6 1 12.7 1.1-9.6 1 11.7 1-9 1 5.7 1-1.1 1.1-8.5 1 8.5 1-7.5 1 10.7 1-12.9 1.1 9.8 1-7 1 8.2 1-7.5 1 9 1.1-2.1 1-9.4 1 12.6 1-2.1 1-11.2 1.1 11.3 1 1.8 1-8.6 1 7 1 1.7 1.1 .1 1-3.6 1-10.5 1 5.3 1 8 1.1-10.1 1 9.1 1-5.3 1 7.9 1-14.7 1.1 13.9 1-1.1 1-16.6 1 6.6 1-10.6 1.1-.6 1 10.2 1-12.7 1 11.7 1-5.5 1.1 8.6 1-9.7 1 7.7 1-6.6 1 5.4 1.1-6.6 1 5.7 1-9.8 1 12 1-7.3 1.1 6.8 1-9.9 1 9.2 1-6.2 1 6.6 1.1-5.1 1 7.3 1-11.3 1 8.6 1 .1 1.1-5.8 1 8.5 1-7.7 1 5.6 1-7.5 1.1-6.4 1-7.7 1 8.6 1-6.7 1 1.1 1.1 15 1-11.9 1 12.9 1-13.3 1-16.1 1.1-38.4 1 9.1 1 .3 1-9.4 1 1 1.1 8 1-8.6 1 8.3 1-6.3 1 7.9 1.1-1.1 1-5.5 1 4.2 1-6.6 1 9.5 1.1-11.1 1-.6 1 9.9 1-1.6 1-5.9 1.1 9.4 1-9.2 1 .1 1 8.3 1-7.3 1.1 6 1 1.3 1-5.7 1 4.6 1-7.5 1.1-2.3 1 10 1-10.2 1 10.6 1-1.4 1.1-9 1 2.8 1 9 1-10.8 1-.4 1.1 8.5 1-6.2 1 6.3 1-7 1 7.7 1.1 1 1-7.4 1 6.2 1-3.7 1 5.8 1.1-9.8 1 10.6 1-.7 1 8.3 1 .2 1.1-5.3 1 6.2 1-5.9 1 5.2 1 .5 1.1-2 1-7.3 1 9.9 1-6.1 1 4 1.1 1.9 1-7.3 1 5.5 1 2.1 1-.4 1.1-5.7 1 7.7 1-2.2 1 2 1-9.2 1.1 .7 1 1.7 1 6.8 1-7 1-1 1.1 6.5 1-5.6 1 8.5 1-9.5 1 8.1 1.1-6.9 1 5.5 1 .9 1-4.9 1 4.7 1.1-7.3 1 7.2 1-3.6 1 39.2 1 23.1 1.1-2.7 1 10.8 1-7.6 1 1.2 1-2.2 1.1 9.1 1-10.6 1 12.7 1-10.2 1 8.8 1.1-12.5 1 12 1-7.5 1 6.9 1-9.1 1.1 9.2 1-6.3 1-1.1 1 6 1-6.3 1.1 7.2 1-6.8 1 6 1-5.8 1 9.5 1.1-14 1 5.6 1 4.3 1-8.3 1 10.1 1.1-10.3 1 12.3 1-11.8 1 8.4 1 2.9 1.1-6.9 1 4.2 1-6.2 1 5.6 1-8.1 1.1 11.9 1-12.5 1 10.6 1-7.8 1 9.7 1.1-9.2 1 9.3 1-7.6 1 4.1 1-5.3 1.1-4 1 12 1-12 1 3.5 1 9.7 1.1-14.6 1 13.6 1-.5 1-6.5 1 5.6 1.1-12.1 1 13.6 1-12 1 3.3 1 9.7 1.1-11.8 1 7.5 1-6.5 1 7.7 1-9.9 1.1 9.6 1-8.2 1 11.4 1-9.7 1 1.1 1.1 5.8 1 1 1-7 1 7.3 1-11.7 1.1 4.8 1 5.7 1-5.3 1 4.6 1-7.5 1.1 8.1 1-7.4 1 6.2 1-10.9 1 10.9 1.1-10.8 1 10.9 1-6.9 1 9 1-12.6 1.1 13 1 .1 1-8 1 5.1 1-9.6 1.1 10.3 1-10.3 1 5 1 8.3 1-9.4 1.1 9.4 1-9.8 1 7.7 1-3.7 1-14.3 1.1 6.2 1-13.8 1 3.1 1 7.6 1-8.2 1.1 10.7 1-9.7 1 2.7 1 5.8 1-10.6 1.1 12.6 1-.3 1-8.9 1 7.7 1-8.1 1.1 8.8 1 1.1 1-9.6 1 8 1-7.2 1.1 6.1 1-11.9 1 .8 1-.7 1 14.2 1.1-12 1 9.6 1-11.7 1 13.3 1-8.7 1.1 2.3 1 6.6 1-7 1 5.6 1-8 1.1 8.9 1-6.6 1 8.2 1-8.2 1-1 1.1 7.5 1-9.3 1 7.9 1-5.1 1 6.8 1.1-8.9 1 8.2 1 .6 1-11.4 1 13.5 1.1-8.6 1-2.2 1 10.6 1-13.4 1 12.6 1.1-8.6 1 5 1-4.8 1 8.1 1-13.1 1.1 13.9 1-14.1 1 5.6 1 6 1-9.8 1.1 4.2 1 7.5 1 0 1-11.1 1 10.3 1.1-2.1 1 2.7 1-7.8 1 8.6 1-8 1.1 4.6 1 .3 1-6.1 1 7.1 1-11.5 1.1 12.9 1 1.3 1-10.2 1 8.1 1 1.4 1.1-8.3 1-3.7 1 10.5 1-11.7 1 13.6 1.1-7.8 1 4.7 1 1.8 1-7.2 1 6.6 1.1-8.2 1 6.1 1-5.7 1 7.8 1-1.9 1.1-8.4 1 9.5 1-6.4 1 7.6 1 2.2 1.1-12 1 11.5 1-12 1 9.6 1-10.8 1.1-1 1 11.5 1-10 1 11.6 1-10.2 1.1 7.5 1-5.8 1-1.2 1 7.9 1-6.9 1.1 5.8 1 2.1 1-9.5 1 8.2 1-6.2 1.1 8.9 1-13.6 1 14.5 1-8.1 1 6.5 1.1-1 1-8 1 2.7 1 7.9 1-9.3 1.1 5.8 1-9.1 1 10.3 1-9.6 1-.3 1.1 11.5 1-.7 1-12 1 3.5 1 6.6 1.1-10.5 1 14 1-9.9 1 8.6 1-11.2 1.1 8.5 1-3.8 1 5.1 1-9.2 1 9.8 1.1-12.2 1 14.7 1-12.4 1 9.3 1-5.8 1.1 7.9 1-12.8 1 11.8 1-9.9 1 10.2 1.1-11.5 1 12 1-12.3 1 12.6 1-1.5 1.1-9.1 1 2.9 1 6.4 1-11.2 1 13.6 1.1-13.4 1 8.9 1-3.7 1 6.2 1-12.8 1.1 10.9 1-9.3 1 4.3 1 8 1-14.1 1.1 13.5 1-12.2 1 10.7 1-1 1-4.1 1.1 5.5 1-1.6 1-6.5 1-4 1 11.3 1.1-6.1 1 6.2 1-9.9 1 10.2 1-.4 1.1-5.3 1-5.3 1 13.2 1-2.2 1-8.1 1.1 2.4 1 7.2 1-10.3 1 2.8 1-1.1 1.1 9.9 1-13.7 1 4.3 1 5.9 1-.5 1.1 .7 1-4.6 1 7.1 1-8.9 1-2.8 1.1-1.9 1 11.5 1-9.4 1 10.7 1-8.7 1.1 6.4 1 1.5 1-1 1-4.7 1 5 1.1-5 1 6.6 1-8.2 1 10.2 1-9.1 1.1-5 1 11.1 1-6.4 1 5.3 1-6.4 1.1 7.9 1-10 1 10.9 1-10.9 1-1.3 1.1 11.5 1-8.1 1 .2 1 8 1-12.5 1.1 13.5 1-1.7 1-7.1 1 6.9 1-10.4 1.1 13.7 1-12.6 1 11.4 1-8.5 1 2.3 1.1 7.2 1-11.5 1 2.6 1 8.4 1-11.9 1.1 10.9 1-10.6 1 11.1 1-7.7 1 6 1.1 1 1-9.2 1 8.1 1-11.1 1 12.5 1.1-11.7 1 10.1 1 1.3 1-11.4 1-.3 1.1 11.4 1 2.1 1-8.2 1 4.8 1-9.6 1.1 11.3 1-8.2 1-2.3 1 10.6 1-11 1.1 12 1-10.2 1 8.8 1-7.8 1 7 1.1-4.5 1 7 1-9 1 9.5 1-11.8 1.1 3.3 1 8.4 1-9.7 1 8 1-10.5 1.1 10.4 1-11.1 1 11 1-11.9 1 14.7 1.1-10.5 1 7.5 1-10.4 1 11.3 1-12.3 1.1 10 1-15.5 1-6.6 1-12 1 4.5 1.1 13.1 1 2.9 1-7.8 1 10.9 1-10.6 1.1 10.9 1-2.8 1 4.1 1 12.3 1-17.6 1.1-22.2 1-14.5 1 4.5 1-10 1 .8 1.1 9.1 1-3.8 1-1.6 1 5.4 1-8.8 1.1 9.7 1-4.7 1 6.2 1 0 1-7 1.1 5.9 1-7.4 1 7.6 1-9.5 1 10.9 1.1-6.3 1 4.9 1-7.9 1 7.1 1-5.3 1.1 7.4 1-8.3 1 .1 1 2.4 1 5.4 1.1-10.1 1 10 1-10.3 1 11.2 1-9.6 1.1 7.8 1-8.7 1 11.1 1-6.5 1 6.2 1.1-1.3 1-5.5 1-2.4 1 7 1-2.9 1.1-1.4 1 6.7 1-8 1 9.5 1-11 1.1 10.8 1-1.4 1-6.2 1 5.8 1-3.8 1.1 6 1-9.3 1 9.9 1-11.1 1 0 1.1 9.4 1-8 1 10.7 1-8.8 1-.6 1.1 6.6 1-4.3 1-3.4 1 11.3 1-9.5 1.1 1.6 1-1.7 1 7.9 1 21.5 1 32.9 1.1-6.2 1 8 1-9.9 1 10.1 1-6.2 1.1 3.9 1-4.6 1 5.8 1-9.7 1 8.9 1.1 .7 1 2.6 1-8.4 1 8.4 1-11 1.1 7.5 1-5 1 6.8 1-7 1 5.6 1.1-5.9 1-1.9 1 3.6 1-3.5 1 9.5 1.1-7.6 1 5.6 1-4.1 1 5.9 1-12.3 1.1 12.6 1-10.3 1 10.9 1-8.3 1 9.6 1.1-12.4 1 11.6 1-13 1 13.5 1-14.5 1.1 12.1 1-6.8 1 8.1 1-8.9 1 6.7 1.1-6.6 1-4.9 1 12.8 1-11.2 1 .2 1.1 9.7 1-10.3 1 9.8 1-6.1 1 10.3 1.1-13.3 1 12.7 1 .3 1-13.6 1 1.8 1.1 11.5 1-13.6 1 14.2 1-14.7 1 14.8 1.1-9.6 1 .2 1 7 1-9 1-1.4 1.1 10.1 1-10.9 1 13.5 1-2.5 1-9.9 1.1-3.7 1 1.8 1-7.2 1 3.3 1-9.3 1.1 12.1 1-8.5 1 7.3 1 1.3 1-6.7 1.1 7.1 1-11.3 1 4 1 4.3 1 .7 1.1-11.2 1 11.4 1 1.8 1-1 1-12.1 1.1 15 1-14 1 11.8 1-6.9 1-2.1 1.1 1.6 1 5.5 1-10.1 1 11.4 1 2.5 1.1-7.9 1 5.8 1-.4 1-9.5 1 10.3 1.1-12.4 1 11.7 1-1.4 1 2.9 1-9.7 1.1 10.7 1-12.9 1 10.3 1-11.8 1 6.1 1.1 6.9 1-8.7 1 9.1 1-11.9 1 11.5 1.1-13 1 14.2 1-9.7 1-2.5 1 9.8 1.1-8.7 1-1.6 1 9.7 1-10.3 1 13.1 1.1-8.9 1 6.9 1-11.7 1 5.8 1 9 1.1-10 1 6.1 1-6.6 1 10.7 1-9.2 1.1-1.8 1-1.4 1 9.4 1-10.3 1 11.5V901Z" fill="#73bf69" fill-opacity="0.5" stroke="#73bf69" stroke-width="0.75" stroke-opacity="1" stroke-linejoin="round" clip-path="url(#cta)"/>
<text x="37.5" y="920.8" font-size="9.3" fill="#6e9fff" textLength="22.2" lengthAdjust="spacingAndGlyphs">Name</text>
<text x="1839.2" y="920.8" font-size="9.3" fill="#6e9fff" textLength="15.8" lengthAdjust="spacingAndGlyphs">Last</text>
<text x="1880.8" y="920.8" font-size="9.3" fill="#6e9fff" textLength="16.2" lengthAdjust="spacingAndGlyphs">Max</text>
<path d="M16.8 926.5H1903M16.8 942.5H1903" stroke="#ccccdc" stroke-opacity="0.12" stroke-width="1"/>
<rect x="23" y="933.4" width="9" height="2.6" rx="0.7" fill="#73bf69"/>
<text x="37.3" y="937.8" font-size="9.3" fill="#ccccdc" textLength="21.7" lengthAdjust="spacingAndGlyphs">Amps</text>
<text x="1835.5" y="937.8" font-size="9.3" fill="#ccccdc" textLength="19.5" lengthAdjust="spacingAndGlyphs">4.3 A</text>
<text x="1874.2" y="937.8" font-size="9.3" fill="#ccccdc" textLength="22.8" lengthAdjust="spacingAndGlyphs">10.4 A</text>
<rect x="11.5" y="954.5" width="1897" height="95" rx="1.4" fill="#181b1f" stroke="#2e3036" stroke-width="1"/>
<text x="17.5" y="968.6" font-size="10" fill="#ccccdc" textLength="76.5" lengthAdjust="spacingAndGlyphs" stroke="#ccccdc" stroke-width="0.22">Electricity Tariffs</text>
<g fill="none" stroke="#9d9dae" stroke-width="0.85" stroke-linecap="round" stroke-linejoin="round">
<path d="M106.5 968.8L114.4 960.8" stroke-width="0.95"/>
<path d="M107 962.5Q107.5 960.5 109.5 960.4H112.3"/>
<path d="M114.8 963V964.7"/>
<path d="M114.4 967.3Q113.9 969.3 111.9 969.4H109.1"/>
<path d="M106.6 966.8V965.1"/>
<circle cx="107.2" cy="962.5" r="0.75" fill="#9d9dae" stroke="none"/>
<circle cx="114.1" cy="967.6" r="0.75" fill="#9d9dae" stroke="none"/>
</g>
<rect x="740" y="955" width="520" height="1.1" fill="url(#lb4)"/>
<rect x="30.5" y="988.1" width="1866.6" height="21.6" fill="#ff9830" fill-opacity="0.7"/>
<path d="M30.5 988.1V1009.7M91.5 988.1V1009.7M152.5 988.1V1009.7M213.5 988.1V1009.7M274.5 988.1V1009.7M335.5 988.1V1009.7M396.5 988.1V1009.7M457.5 988.1V1009.7M518.5 988.1V1009.7M579.5 988.1V1009.7M640.5 988.1V1009.7M701.5 988.1V1009.7M762.5 988.1V1009.7M823.5 988.1V1009.7M884.5 988.1V1009.7M945.5 988.1V1009.7M1006.5 988.1V1009.7M1067.5 988.1V1009.7M1128.5 988.1V1009.7M1189.5 988.1V1009.7M1250.5 988.1V1009.7M1311.5 988.1V1009.7M1372.5 988.1V1009.7M1433.5 988.1V1009.7M1494.5 988.1V1009.7M1555.5 988.1V1009.7M1616.5 988.1V1009.7M1677.5 988.1V1009.7M1738.5 988.1V1009.7M1799.5 988.1V1009.7M1860.5 988.1V1009.7" stroke="#ccccdc" stroke-opacity="0.05" stroke-width="1" fill="none"/>
<text x="30.5" y="1020.9" font-size="9.3" fill="#c7c7d6" text-anchor="middle" textLength="22.52" lengthAdjust="spacingAndGlyphs">00:00</text>
<text x="91.5" y="1020.9" font-size="9.3" fill="#c7c7d6" text-anchor="middle" textLength="22.52" lengthAdjust="spacingAndGlyphs">00:05</text>
<text x="152.5" y="1020.9" font-size="9.3" fill="#c7c7d6" text-anchor="middle" textLength="22.52" lengthAdjust="spacingAndGlyphs">00:10</text>
<text x="213.5" y="1020.9" font-size="9.3" fill="#c7c7d6" text-anchor="middle" textLength="22.52" lengthAdjust="spacingAndGlyphs">00:15</text>
<text x="274.5" y="1020.9" font-size="9.3" fill="#c7c7d6" text-anchor="middle" textLength="22.52" lengthAdjust="spacingAndGlyphs">00:20</text>
<text x="335.5" y="1020.9" font-size="9.3" fill="#c7c7d6" text-anchor="middle" textLength="22.52" lengthAdjust="spacingAndGlyphs">00:25</text>
<text x="396.5" y="1020.9" font-size="9.3" fill="#c7c7d6" text-anchor="middle" textLength="22.52" lengthAdjust="spacingAndGlyphs">00:30</text>
<text x="457.5" y="1020.9" font-size="9.3" fill="#c7c7d6" text-anchor="middle" textLength="22.52" lengthAdjust="spacingAndGlyphs">00:35</text>
<text x="518.5" y="1020.9" font-size="9.3" fill="#c7c7d6" text-anchor="middle" textLength="22.52" lengthAdjust="spacingAndGlyphs">00:40</text>
<text x="579.5" y="1020.9" font-size="9.3" fill="#c7c7d6" text-anchor="middle" textLength="22.52" lengthAdjust="spacingAndGlyphs">00:45</text>
<text x="640.5" y="1020.9" font-size="9.3" fill="#c7c7d6" text-anchor="middle" textLength="22.52" lengthAdjust="spacingAndGlyphs">00:50</text>
<text x="701.5" y="1020.9" font-size="9.3" fill="#c7c7d6" text-anchor="middle" textLength="22.52" lengthAdjust="spacingAndGlyphs">00:55</text>
<text x="762.5" y="1020.9" font-size="9.3" fill="#c7c7d6" text-anchor="middle" textLength="22.52" lengthAdjust="spacingAndGlyphs">01:00</text>
<text x="823.5" y="1020.9" font-size="9.3" fill="#c7c7d6" text-anchor="middle" textLength="22.52" lengthAdjust="spacingAndGlyphs">01:05</text>
<text x="884.5" y="1020.9" font-size="9.3" fill="#c7c7d6" text-anchor="middle" textLength="22.52" lengthAdjust="spacingAndGlyphs">01:10</text>
<text x="945.5" y="1020.9" font-size="9.3" fill="#c7c7d6" text-anchor="middle" textLength="22.52" lengthAdjust="spacingAndGlyphs">01:15</text>
<text x="1006.5" y="1020.9" font-size="9.3" fill="#c7c7d6" text-anchor="middle" textLength="22.52" lengthAdjust="spacingAndGlyphs">01:20</text>
<text x="1067.5" y="1020.9" font-size="9.3" fill="#c7c7d6" text-anchor="middle" textLength="22.52" lengthAdjust="spacingAndGlyphs">01:25</text>
<text x="1128.5" y="1020.9" font-size="9.3" fill="#c7c7d6" text-anchor="middle" textLength="22.52" lengthAdjust="spacingAndGlyphs">01:30</text>
<text x="1189.5" y="1020.9" font-size="9.3" fill="#c7c7d6" text-anchor="middle" textLength="22.52" lengthAdjust="spacingAndGlyphs">01:35</text>
<text x="1250.5" y="1020.9" font-size="9.3" fill="#c7c7d6" text-anchor="middle" textLength="22.52" lengthAdjust="spacingAndGlyphs">01:40</text>
<text x="1311.5" y="1020.9" font-size="9.3" fill="#c7c7d6" text-anchor="middle" textLength="22.52" lengthAdjust="spacingAndGlyphs">01:45</text>
<text x="1372.5" y="1020.9" font-size="9.3" fill="#c7c7d6" text-anchor="middle" textLength="22.52" lengthAdjust="spacingAndGlyphs">01:50</text>
<text x="1433.5" y="1020.9" font-size="9.3" fill="#c7c7d6" text-anchor="middle" textLength="22.52" lengthAdjust="spacingAndGlyphs">01:55</text>
<text x="1494.5" y="1020.9" font-size="9.3" fill="#c7c7d6" text-anchor="middle" textLength="22.52" lengthAdjust="spacingAndGlyphs">02:00</text>
<text x="1555.5" y="1020.9" font-size="9.3" fill="#c7c7d6" text-anchor="middle" textLength="22.52" lengthAdjust="spacingAndGlyphs">02:05</text>
<text x="1616.5" y="1020.9" font-size="9.3" fill="#c7c7d6" text-anchor="middle" textLength="22.52" lengthAdjust="spacingAndGlyphs">02:10</text>
<text x="1677.5" y="1020.9" font-size="9.3" fill="#c7c7d6" text-anchor="middle" textLength="22.52" lengthAdjust="spacingAndGlyphs">02:15</text>
<text x="1738.5" y="1020.9" font-size="9.3" fill="#c7c7d6" text-anchor="middle" textLength="22.52" lengthAdjust="spacingAndGlyphs">02:20</text>
<text x="1799.5" y="1020.9" font-size="9.3" fill="#c7c7d6" text-anchor="middle" textLength="22.52" lengthAdjust="spacingAndGlyphs">02:25</text>
<text x="1860.5" y="1020.9" font-size="9.3" fill="#c7c7d6" text-anchor="middle" textLength="22.52" lengthAdjust="spacingAndGlyphs">02:30</text>
<rect x="20" y="1034.25" width="8.8" height="2.7" rx="0.7" fill="#73bf69"/>
<text x="34.6" y="1038.6" font-size="9.3" fill="#ccccdc" textLength="34.3" lengthAdjust="spacingAndGlyphs">Off-Peak</text>
<rect x="76" y="1034.25" width="8.8" height="2.7" rx="0.7" fill="#ff9830"/>
<text x="90.6" y="1038.6" font-size="9.3" fill="#ccccdc" textLength="18.8" lengthAdjust="spacingAndGlyphs">Peak</text>
<text x="906.5" y="995" font-size="9.6" fill="#e9d3c0" textLength="106.6" lengthAdjust="spacingAndGlyphs" fill-opacity="0.85">Data outside time range</text>
<rect x="918.5" y="999.4" width="81.9" height="20.3" rx="1.3" fill="#ccccdc" fill-opacity="0.09" stroke="#ccccdc" stroke-opacity="0.08" stroke-width="0.7"/>
<text x="930" y="1012.5" font-size="9.6" fill="#dcdce6" textLength="59.4" lengthAdjust="spacingAndGlyphs" stroke="#dcdce6" stroke-width="0.2">Zoom to data</text>
<rect x="11.5" y="1056.5" width="1897" height="322" rx="1.4" fill="#181b1f" stroke="#2e3036" stroke-width="1"/>
<text x="17.5" y="1070.5" font-size="10" fill="#ccccdc" textLength="76.5" lengthAdjust="spacingAndGlyphs" stroke="#ccccdc" stroke-width="0.22">All Circuits Watts</text>
<g fill="none" stroke="#9d9dae" stroke-width="0.85" stroke-linecap="round" stroke-linejoin="round">
<path d="M106.5 1070.7L114.4 1062.7" stroke-width="0.95"/>
<path d="M107 1064.4Q107.5 1062.4 109.5 1062.3H112.3"/>
<path d="M114.8 1064.9V1066.6"/>
<path d="M114.4 1069.2Q113.9 1071.2 111.9 1071.3H109.1"/>
<path d="M106.6 1068.7V1067"/>
<circle cx="107.2" cy="1064.4" r="0.75" fill="#9d9dae" stroke="none"/>
<circle cx="114.1" cy="1069.5" r="0.75" fill="#9d9dae" stroke="none"/>
</g>
<rect x="11.5" y="1385" width="710" height="1.2" fill="url(#lb5)"/>
<rect x="1285" y="1385" width="80" height="1.1" fill="#5b8fe8" fill-opacity="0.3"/>
<path d="M49.5 1089.3V1363.8M102.5 1089.3V1363.8M156.5 1089.3V1363.8M210.5 1089.3V1363.8M264.5 1089.3V1363.8M318.5 1089.3V1363.8M371.5 1089.3V1363.8M425.5 1089.3V1363.8M479.5 1089.3V1363.8M533.5 1089.3V1363.8M586.5 1089.3V1363.8M640.5 1089.3V1363.8M694.5 1089.3V1363.8M748.5 1089.3V1363.8M802.5 1089.3V1363.8M855.5 1089.3V1363.8M909.5 1089.3V1363.8M963.5 1089.3V1363.8M1017.5 1089.3V1363.8M1070.5 1089.3V1363.8M1124.5 1089.3V1363.8M1178.5 1089.3V1363.8M1232.5 1089.3V1363.8M1286.5 1089.3V1363.8M1339.5 1089.3V1363.8M1393.5 1089.3V1363.8M1447.5 1089.3V1363.8M1501.5 1089.3V1363.8M1554.5 1089.3V1363.8M1608.5 1089.3V1363.8M1662.5 1089.3V1363.8" stroke="#ccccdc" stroke-opacity="0.1" stroke-width="1" fill="none"/>
<path d="M46.2 1089.5H1693.9M46.2 1116.5H1693.9M46.2 1143.5H1693.9M46.2 1170.5H1693.9M46.2 1197.5H1693.9M46.2 1224.5H1693.9M46.2 1251.5H1693.9M46.2 1278.5H1693.9M46.2 1303.5H1693.9M46.2 1325.5H1693.9M46.2 1360.5H1693.9" stroke="#ccccdc" stroke-opacity="0.08" stroke-width="1" fill="none"/>
<text x="21.38" y="1091.2" font-size="9.3" fill="#c7c7d6" textLength="23.32" lengthAdjust="spacingAndGlyphs">512 W</text>
<text x="21.38" y="1118.2" font-size="9.3" fill="#c7c7d6" textLength="23.32" lengthAdjust="spacingAndGlyphs">256 W</text>
<text x="21.38" y="1145.2" font-size="9.3" fill="#c7c7d6" textLength="23.32" lengthAdjust="spacingAndGlyphs">128 W</text>
<text x="25.87" y="1172.4" font-size="9.3" fill="#c7c7d6" textLength="18.83" lengthAdjust="spacingAndGlyphs">64 W</text>
<text x="25.87" y="1199.4" font-size="9.3" fill="#c7c7d6" textLength="18.83" lengthAdjust="spacingAndGlyphs">32 W</text>
<text x="25.87" y="1226.4" font-size="9.3" fill="#c7c7d6" textLength="18.83" lengthAdjust="spacingAndGlyphs">16 W</text>
<text x="30.35" y="1253.6" font-size="9.3" fill="#c7c7d6" textLength="14.35" lengthAdjust="spacingAndGlyphs">8 W</text>
<text x="30.35" y="1280.6" font-size="9.3" fill="#c7c7d6" textLength="14.35" lengthAdjust="spacingAndGlyphs">4 W</text>
<text x="30.35" y="1305.2" font-size="9.3" fill="#c7c7d6" textLength="14.35" lengthAdjust="spacingAndGlyphs">2 W</text>
<text x="30.35" y="1327.4" font-size="9.3" fill="#c7c7d6" textLength="14.35" lengthAdjust="spacingAndGlyphs">1 W</text>
<text x="30.35" y="1361.8" font-size="9.3" fill="#c7c7d6" textLength="14.35" lengthAdjust="spacingAndGlyphs">0 W</text>
<text x="49.2" y="1370.8" font-size="9.3" fill="#c7c7d6" text-anchor="middle" textLength="22.52" lengthAdjust="spacingAndGlyphs">00:00</text>
<text x="102.98" y="1370.8" font-size="9.3" fill="#c7c7d6" text-anchor="middle" textLength="22.52" lengthAdjust="spacingAndGlyphs">00:05</text>
<text x="156.75" y="1370.8" font-size="9.3" fill="#c7c7d6" text-anchor="middle" textLength="22.52" lengthAdjust="spacingAndGlyphs">00:10</text>
<text x="210.53" y="1370.8" font-size="9.3" fill="#c7c7d6" text-anchor="middle" textLength="22.52" lengthAdjust="spacingAndGlyphs">00:15</text>
<text x="264.3" y="1370.8" font-size="9.3" fill="#c7c7d6" text-anchor="middle" textLength="22.52" lengthAdjust="spacingAndGlyphs">00:20</text>
<text x="318.07" y="1370.8" font-size="9.3" fill="#c7c7d6" text-anchor="middle" textLength="22.52" lengthAdjust="spacingAndGlyphs">00:25</text>
<text x="371.85" y="1370.8" font-size="9.3" fill="#c7c7d6" text-anchor="middle" textLength="22.52" lengthAdjust="spacingAndGlyphs">00:30</text>
<text x="425.62" y="1370.8" font-size="9.3" fill="#c7c7d6" text-anchor="middle" textLength="22.52" lengthAdjust="spacingAndGlyphs">00:35</text>
<text x="479.4" y="1370.8" font-size="9.3" fill="#c7c7d6" text-anchor="middle" textLength="22.52" lengthAdjust="spacingAndGlyphs">00:40</text>
<text x="533.18" y="1370.8" font-size="9.3" fill="#c7c7d6" text-anchor="middle" textLength="22.52" lengthAdjust="spacingAndGlyphs">00:45</text>
<text x="586.95" y="1370.8" font-size="9.3" fill="#c7c7d6" text-anchor="middle" textLength="22.52" lengthAdjust="spacingAndGlyphs">00:50</text>
<text x="640.73" y="1370.8" font-size="9.3" fill="#c7c7d6" text-anchor="middle" textLength="22.52" lengthAdjust="spacingAndGlyphs">00:55</text>
<text x="694.5" y="1370.8" font-size="9.3" fill="#c7c7d6" text-anchor="middle" textLength="22.52" lengthAdjust="spacingAndGlyphs">01:00</text>
<text x="748.28" y="1370.8" font-size="9.3" fill="#c7c7d6" text-anchor="middle" textLength="22.52" lengthAdjust="spacingAndGlyphs">01:05</text>
<text x="802.05" y="1370.8" font-size="9.3" fill="#c7c7d6" text-anchor="middle" textLength="22.52" lengthAdjust="spacingAndGlyphs">01:10</text>
<text x="855.83" y="1370.8" font-size="9.3" fill="#c7c7d6" text-anchor="middle" textLength="22.52" lengthAdjust="spacingAndGlyphs">01:15</text>
<text x="909.6" y="1370.8" font-size="9.3" fill="#c7c7d6" text-anchor="middle" textLength="22.52" lengthAdjust="spacingAndGlyphs">01:20</text>
<text x="963.38" y="1370.8" font-size="9.3" fill="#c7c7d6" text-anchor="middle" textLength="22.52" lengthAdjust="spacingAndGlyphs">01:25</text>
<text x="1017.15" y="1370.8" font-size="9.3" fill="#c7c7d6" text-anchor="middle" textLength="22.52" lengthAdjust="spacingAndGlyphs">01:30</text>
<text x="1070.92" y="1370.8" font-size="9.3" fill="#c7c7d6" text-anchor="middle" textLength="22.52" lengthAdjust="spacingAndGlyphs">01:35</text>
<text x="1124.7" y="1370.8" font-size="9.3" fill="#c7c7d6" text-anchor="middle" textLength="22.52" lengthAdjust="spacingAndGlyphs">01:40</text>
<text x="1178.48" y="1370.8" font-size="9.3" fill="#c7c7d6" text-anchor="middle" textLength="22.52" lengthAdjust="spacingAndGlyphs">01:45</text>
<text x="1232.25" y="1370.8" font-size="9.3" fill="#c7c7d6" text-anchor="middle" textLength="22.52" lengthAdjust="spacingAndGlyphs">01:50</text>
<text x="1286.03" y="1370.8" font-size="9.3" fill="#c7c7d6" text-anchor="middle" textLength="22.52" lengthAdjust="spacingAndGlyphs">01:55</text>
<text x="1339.8" y="1370.8" font-size="9.3" fill="#c7c7d6" text-anchor="middle" textLength="22.52" lengthAdjust="spacingAndGlyphs">02:00</text>
<text x="1393.58" y="1370.8" font-size="9.3" fill="#c7c7d6" text-anchor="middle" textLength="22.52" lengthAdjust="spacingAndGlyphs">02:05</text>
<text x="1447.35" y="1370.8" font-size="9.3" fill="#c7c7d6" text-anchor="middle" textLength="22.52" lengthAdjust="spacingAndGlyphs">02:10</text>
<text x="1501.13" y="1370.8" font-size="9.3" fill="#c7c7d6" text-anchor="middle" textLength="22.52" lengthAdjust="spacingAndGlyphs">02:15</text>
<text x="1554.9" y="1370.8" font-size="9.3" fill="#c7c7d6" text-anchor="middle" textLength="22.52" lengthAdjust="spacingAndGlyphs">02:20</text>
<text x="1608.68" y="1370.8" font-size="9.3" fill="#c7c7d6" text-anchor="middle" textLength="22.52" lengthAdjust="spacingAndGlyphs">02:25</text>
<text x="1662.45" y="1370.8" font-size="9.3" fill="#c7c7d6" text-anchor="middle" textLength="22.52" lengthAdjust="spacingAndGlyphs">02:30</text>
<clipPath id="cw"><rect x="49.2" y="1083.3" width="1631.8" height="277.5"/></clipPath>
<path d="M47.2 1364.8V1119.5l.6 5.8 .6-6 .7 2.9 .6-3.4 .6 2.2 .6 .8 .6 2.5 .7-7 .6 1.4 .6 3.4 .6-2.9 .6 3 .7-.9 .6 2 .6 .3 .6-4.3 .6 4 .7-6.1 .6 .7 .6 4.8 .6-2.5 .6 4.4 .7-6.8 .6 7.6 .6-4 .6-3.8 .6 7.9 .7-4.4 .6 3.6 .6-3.7 .6 4.4 .6-3.5 .7-.9 .6 3.7 .6-5.6 .6 3.1 .6-1.4 .7 1.1 .6-1.4 .6 5 .6-2.8 .6-.4 .7-4.5 .6 4 .6 .5 .6-4.1 .6 4.4 .7-1.6 .6 1.4 .6-2.6 .6 5.6 .6-6.4 .7 1.6 .6 4.6 .6-2.8 .6-4.1 .6 2.3 .7-2.9 .6 5.5 .6-2 .6-.8 .6 2.1 .7 1.4 .6-3.2 .6 1 .6-2.6 .6-.3 .7 6.5 .6-4 .6 2 .6-2.6 .6 3.1 .7-3.9 .6-2.6 .6 7 .6-3.5 .6 .7 .7 2.8 .6-2.8 .6-2.1 .6 3.3 .6-1 .7-3.4 .6 0 .6 6.4 .6-1.8 .6-5.3 .7 2 .6-1.8 .6 6.2 .6-5 .6 .2 .7-4.5 .6 1.1 .6 6.2 .6-5 .6 1.5 .7 .3 .6 2.1 .6-4.9 .6 5.5 .6-1.5 .7-2.4 .6 2.2 .6-2.2 .6 5.7 .6-.5 .7-2.2 .6 4.2 .6 .3 .6-6.1 .6 3 .7-4.1 .6 .5 .6 1.8 .6 3.1 .6-2.8 .7 3.5 .6-3.9 .6-2.8 .6 4.4 .6-4 .7 6.7 .6-4.3 .6 1.2 .6 2 .6-5.4 .7 4.1 .6-3.2 .6 5.2 .6-6 .6 .5 .7 4.9 .6-2 .6 3 .6-4.1 .6 4 .7-5.5 .6 .9 .6-2.1 .6 7.7 .6-4.4 .7 3.1 .6-1 .6-5.3 .6-.3 .6 6.7 .7-5.7 .6 .3 .6 3.6 .6 3.2 .6-1.8 .7-1 .6 2.3 .6-3.9 .6 2.6 .6-.3 .7-5.4 .6 6.8 .6-4.8 .6 .8 .6 2.8 .7-5.7 .6 7.5 .6-8 .6 4.9 .6-2.1 .7 3.9 .6-6.2 .6 4.8 .6-4.9 .6 2.7 .7-3.2 .6 6.5 .6-4.7 .6 4.8 .6-6.6 .7 5.8 .6 .7 .6-5.3 .6 5.2 .6-6.3 .7 2.9 .6 1.6 .6-3.9 .6 1.4 .6 2.8 .7-4.7 .6 7.2 .6-4.1 .6 3.7 .6-4.4 .7 1.9 .6-.9 .6 1.6 .6-3.3 .6 3.8 .7-3.8 .6 3.1 .6-3.6 .6 6.3 .6-7.2 .7 6.7 .6 .7 .6-5.1 .6 .4 .6-2.8 .7 4.7 .6-2.1 .6 4.6 .6-6.8 .6 5 .7-1.8 .6 3 .6 1.2 .6-6.2 .6 0 .7 2.9 .6-1.2 .6 2.7 .6-4.7 .6 3.2 .7-4.3 .6-.4 .6 4.2 .6 1.6 .6-.5 .7-3.6 .6 4.7 .6-5.4 .6 2.1 .6 3.9 .7-3.9 .6 3 .6-6 .6 .8 .6 .4 .7 5.1 .6-6.6 .6 3 .6-2 .6-.3 .7 7.2 .6-.9 .6 .3 .6-6.2 .6 4.4 .7-1.4 .6 2.7 .6-3.7 .6-1.8 .6 5.6 .7-5 .6 6.4 .6-7.1 .6-1.2 .6 6.7 .7-3.7 .6 1.3 .6-1.8 .6 2.7 .6 1.2 .7-6.4 .6 8.3 .6-7.6 .6 5.9 .6-2.3 .7 .5 .6-1.4 .6 3.3 .6-6.6 .6 6.2 .7-3.7 .6 4.3 .6-4 .6 2.4 .6-2.2 .7 1.7 .6 .9 .6 1.5 .6-7.3 .6 3.9 .7-1.5 .6 5.9 .6-6.3 .6-.8 .6 7.1 .7-1.6 .6-5.1 .6 3.5 .6-3.1 .6 4.1 .7-3.8 .6 4.3 .6-5.7 .6 7.5 .6-1.1 .7-3.6 .6-2.8 .6 4.8 .6-4.4 .6 5.4 .7-5.7 .6 4.2 .6 2.8 .6-3.6 .6-1.3 .7 3.7 .6-4.9 .6 2.7 .6-2.7 .6 3.9 .7-2.5 .6 4 .6-2.8 .6-3.7 .6 6.6 .7-5 .6 5.2 .6-6.1 .6 1.3 .6 4.5 .7-1.3 .6-2.2 .6 .1 .6 2.7 .6-5.3 .7 6.2 .6-4.2 .6 1.2 .6-3.3 .6 4.2 .7-2.7 .6 3 .6-4.5 .6 6.9 .6-.1 .7-7.2 .6 4.7 .6-5.2 .6 2.9 .6 2.5 .7-3.2 .6 2.5 .6-4.1 .6 6.8 .6-4.2 .7-3 .6 3.8 .6-2.4 .6 6.4 .6-7.5 .7 5.7 .6-1.9 .6-3.5 .6 2.7 .6 1 .7-3.3 .6 3.6 .6 1.3 .6-.5 .6-5.8 .7 6.2 .6-5.1 .6 6.8 .6-7.3 .6 7.1 .7-.1 .6 .5 .6-6.2 .6 5.6 .6-5.2 .7 4.9 .6-1.5 .6-2.5 .6 2.1 .6-1 .7-.7 .6 3.8 .6-3.6 .6 2.8 .6-2.3 .7-1 .6 1.8 .6-3.5 .6 3.3 .6-1.5 .7-.6 .6 4.7 .6-4.5 .6-2.7 .6 6.1 .7-.3 .6-2.2 .6-3.2 .6 5.6 .6-3.4 .7-1.6 .6 2.8 .6-1.6 .6-1.4 .6 3.7 .7-2.1 .6 5.1 .6-6.4 .6 1.6 .6 1.7 .7-.6 .6 3.6 .6-3.3 .6-3.3 .6 5 .7-6 .6 7.6 .6-6.9 .6 7.2 .6-7.4 .7 5.8 .6-3 .6-.6 .6 1.6 .6-2.3 .7 3.5 .6-1.9 .6 2.3 .6 1.6 .6-3.6 .7 3.1 .6-5.4 .6 2.4 .6 3.4 .6-6 .7 4.2 .6-2.9 .6 2.9 .6-2.7 .6 4.2 .7-7.1 .6 7 .6-6.5 .6 4.1 .6-3.4 .7 3.6 .6-4.3 .6 3.9 .6-1.1 .6 2.4 .7-5.6 .6 6 .6-5.3 .6 1.6 .6 3.3 .7-3.4 .6 5.8 .6-1.3 .6-2.9 .6 1.5 .7-1.8 .6 2.5 .6 1.4 .6-4.2 .6-3.1 .7 5.3 .6-2.1 .6 4.7 .6-7.1 .6 2.2 .7-1.8 .6 2.9 .6-2.7 .6 3.8 .6 .1 .7-2 .6-.1 .6-1.7 .6 4.7 .6-6.2 .7 .4 .6 3.9 .6 .7 .6-.2 .6-4.5 .7 5.8 .6-2.4 .6 4.2 .6-1.3 .6-5.6 .7 4.4 .6-5 .6 4.2 .6-1.4 .6 3 .7-4.6 .6 4.6 .6-5.1 .6 5.5 .6-6.8 .7 6 .6-4.6 .6 5.8 .6-1.2 .6 1.5 .7-1.8 .6-4.1 .6 .2 .6 4 .6-.5 .7-4.3 .6-.1 .6 6.3 .6-5.7 .6 3 .7-2.6 .6 2.3 .6-2.4 .6 3.5 .6-2.3 .7 4.8 .6-1 .6-1 .6-.9 .6-3.3 .7 2 .6-.1 .6 4.5 .6-5 .6 2.4 .7-5.2 .6 2.1 .6 4.2 .6-2.6 .6-1.2 .7 5.2 .6-1.9 .6-3.2 .6-2.6 .6 7.3 .7-5.5 .6 5.7 .6-2.9 .6-1.6 .6 .6 .7 3.2 .6-6.8 .6 .8 .6 5.9 .6-1 .7-2.8 .6 3.9 .6-3.8 .6 3.6 .6-1.2 .7-5.3 .6 4.7 .6-4.9 .6 5.1 .6-1.6 .7-1.4 .6 4 .6-4.7 .6 3.6 .6-.7 .7-3.6 .6 4.4 .6-2 .6-3.3 .6 6 .7-.3 .6 .5 .6-4.4 .6 3.8 .6-4.8 .7 5.4 .6 .8 .6-6.9 .6 7.3 .6-5.9 .7 4.4 .6 1.5 .6-2.3 .6-1.9 .6 3 .7-4.6 .6 4.9 .6-1.6 .6-.9 .6 1.9 .7-2.9 .6 .8 .6-2.1 .6 5.7 .6-3.9 .7 .8 .6-2.8 .6 3.7 .6-1.5 .6-.3 .7 1.4 .6-4.2 .6 3.2 .6 1.8 .6-5.6 .7 6.2 .6 2 .6-6 .6 2.1 .6-3.9 .7 5.4 .6-3.5 .6 1.9 .6 3.1 .6-4.2 .7 3.3 .6-4.2 .6 .4 .6 5.6 .6-4.3 .7 2.9 .6-4.1 .6 5 .6-7.3 .6 5.4 .7-.1 .6-.7 .6-1.7 .6 1.5 .6-1.6 .7 2.2 .6-5.5 .6 7.8 .6-5.2 .6 4.5 .7-4.1 .6 2 .6-2.5 .6-1.3 .6 4.5 .7-5.4 .6 7.1 .6-7 .6 5.2 .6-1.7 .7-1.1 .6-.8 .6 3.9 .6-1.9 .6 2.7 .7-3.8 .6 3.6 .6-5.3 .6 6 .6-3.6 .7 1.8 .6-2.9 .6 5.3 .6-4.8 .6 2.1 .7-1 .6 2.5 .6 1.7 .6-6.9 .6 1.9 .7 3.7 .6 .8 .6-6.3 .6 4.5 .6-2.1 .7 1.7 .6-2.6 .6 2.9 .6-2.4 .6 1.7 .7-2.4 .6 2 .6-3.5 .6 5.8 .6-4.5 .7 1.9 .6-.5 .6 2.7 .6-3.9 .6 1.5 .7-3.8 .6 4.8 .6-1.9 .6 3.4 .6-1.1 .7-5.5 .6 1.4 .6 4.3 .6-2.9 .6-6.5 .7 7.5 .6-4.4 .6 1.9 .6-5.4 .6 4.9 .7-3.7 .6 2.9 .6-1.7 .6 3.8 .6-4.4 .7 4.7 .6 1.7 .6-5.6 .6 .2 .6 4.2 .7-6.9 .6 3.3 .6 2.8 .6-3.7 .6 4.7 .7-4.1 .6 2.4 .6-3.6 .6 2.5 .6-.7 .7 4.9 .6-3.7 .6 3.9 .6 3 .6-4.8 .7 4.4 .6-6.3 .6 6 .6-4.4 .6-2.1 .7 1.1 .6 5.4 .6-6.5 .6 3 .6 3.3 .7-3.6 .6 3.3 .6 1.6 .6-7 .6 5.6 .7-6.6 .6 3.7 .6 .7 .6-1.7 .6 5.4 .7-5.6 .6 3.7 .6-3.9 .6 5 .6-2.2 .7-3.8 .6-1.5 .6 7 .6-6.3 .6 4.1 .7-4.6 .6 6 .6-3.5 .6 3.8 .6-5 .7 3.6 .6-2.5 .6 1.7 .6-3.9 .6 4 .7-2.3 .6 1.2 .6-1.2 .6 5.4 .6-3.6 .7 3 .6-4 .6-2.4 .6 1.7 .6-1.1 .7 3.1 .6-.6 .6 2 .6-.2 .6-1.3 .7 4 .6-6.2 .6-1.1 .6 5 .6 1.8 .7 .6 .6-8.1 .6 7 .6-6.8 .6 6.2 .7-4 .6 4.4 .6-1.3 .6-3 .6 5.3 .7-4.2 .6 3.5 .6-6.2 .6 6 .6-3.3 .7 1.9 .6-1.5 .6 1.7 .6-4 .6 1.4 .7-.4 .6 .8 .6-1.3 .6 .9 .6 3.9 .7-4.1 .6 5.1 .6-4.8 .6 5 .6-6.9 .7 5.4 .6-5.3 .6-1 .6 5.7 .6-2.6 .7-2.4 .6 5.7 .6-4.4 .6 4.1 .6-4.7 .7 4.8 .6-5.1 .6 6.4 .6-5.9 .6-1.1 .7 6.2 .6-1.4 .6-1.2 .6 1.6 .6-5.6 .7 7.4 .6-.5 .6-7.6 .6 7.9 .6-4.8 .7-.8 .6 5.5 .6-4.8 .6 1.5 .6-3.6 .7 4.3 .6 2.6 .6-1.3 .6 1 .6-4.8 .7 1.7 .6-3.8 .6 3.1 .6 2.1 .6 1 .7-2.3 .6 .6 .6-4.6 .6 4.5 .6-2.6 .7 3.2 .6-4 .6 5.1 .6-3.3 .6 3.7 .7-3.4 .6 4.5 .6-5.5 .6 5.7 .6-7.3 .7 4.4 .6-1.9 .6 2.4 .6-.1 .6-3.8 .7 .6 .6 2.5 .6-2.2 .6 0 .6-1.6 .7 6.7 .6-7 .6 5 .6-3.7 .6 3.7 .7-.7 .6-4 .6 4.5 .6-5.5 .6 5.6 .7-5.2 .6 .9 .6 2.9 .6 0 .6-2 .7 4.4 .6-6.6 .6 3.7 .6 2.1 .6-4 .7 4.8 .6-6.9 .6-.1 .6 7.7 .6-6.4 .7 2.6 .6 2 .6-2.6 .6 0 .6 1.5 .7-3.7 .6 3.8 .6-3.3 .6 3.7 .6 2 .7-2.6 .6-.6 .6-3.9 .6 3.9 .6 2.4 .7-2.8 .6-.8 .6 1.8 .6-1 .6 2.7 .7-5.5 .6 5 .6-2.6 .6 3.2 .6-5.9 .7 7.2 .6-7.7 .6 5.8 .6-5.3 .6 1.9 .7 2.3 .6 2.5 .6-3.8 .6 .8 .6-1.4 .7-1.4 .6 2.5 .6 .5 .6-.8 .6-.9 .7 4.1 .6 1.3 .6-6.1 .6 .4 .6 4.8 .7-4.6 .6 3.5 .6-3.8 .6 2 .6 .1 .7-2.6 .6 3.2 .6-2.5 .6 3.6 .6-5.1 .7 3.1 .6-4.1 .6 6.6 .6-1 .6-3 .7 4.1 .6-3.9 .6 3.5 .6-2 .6-1.3 .7 4.4 .6-6.9 .6 4.8 .6-1.6 .6-3.1 .7 4.8 .6 2 .6-3.5 .6 0 .6 2.5 .7 .4 .6-6.6 .6 1.5 .6 5.5 .6-6 .7-1 .6 7.2 .6-6.5 .6 5.1 .6-2.4 .7 3.6 .6-3.6 .6-2.3 .6 3.3 .6-1.8 .7-1.1 .6 1.5 .6 3.2 .6-1.8 .6 1.5 .7-3.8 .6 4.6 .6-.7 .6-3.7 .6 1.2 .7 1.1 .6-1.5 .6 1.5 .6-3.2 .6 4.1 .7-5.1 .6 6 .6-6.6 .6 7 .6-4 .7 3.5 .6-2.7 .6-1.3 .6 3.4 .6-4.2 .7-1.4 .6 5.8 .6-5.2 .6 4.5 .6-1.2 .7-2.5 .6 3.8 .6-5.4 .6 .6 .6 6.7 .7-4.1 .6 3.4 .6-5.8 .6 7 .6-.9 .7-6.9 .6 5.2 .6 1.9 .6-4.1 .6 3.3 .7-3.5 .6 1.8 .6-1.7 .6 2.3 .6-4.9 .7 7.3 .6-1 .6-5.7 .6 5.9 .6 .5 .7-3.5 .6-1.3 .6 .5 .6 2.6 .6-5.6 .7 6.4 .6-3.4 .6 .5 .6-2.3 .6 6.6 .7-6.2 .6 6.6 .6-7.9 .6 6.5 .6-2.9 .7 4.2 .6-7.7 .6 1.4 .6 4.4 .6-4.4 .7 4.3 .6-5.1 .6 5 .6-4 .6 6.1 .7-4.7 .6 2 .6-5.3 .6-.1 .6 .4 .7 3.5 .6 2.6 .6-5.1 .6 6.5 .6-6.1 .7 2.1 .6 3.8 .6-3.6 .6-3.6 .6 5.7 .7-5.4 .6 3.2 .6 3.3 .6 .2 .6-4.9 .7 1.5 .6 1 .6-3.3 .6 5 .6-3.8 .7 .3 .6 1.8 .6-4.4 .6 4.3 .6-2.1 .7 2.2 .6-.3 .6-2.1 .6 4.4 .6-6.4 .7 3.6 .6 .7 .6-2.7 .6 .1 .6 5.4 .7-2.2 .6-4.9 .6 1.9 .6-.2 .6 4.1 .7-4.5 .6 1.9 .6 1.7 .6-5.4 .6 4.7 .7 3.1 .6-2.6 .6-.8 .6-4.6 .6 4.6 .7-4.3 .6 7.7 .6-5.6 .6 2.7 .6-.8 .7-1.8 .6 2.8 .6-1.8 .6 2.8 .6-5.5 .7 7.2 .6-4.9 .6 2.2 .6 2.6 .6-4.6 .7 3.1 .6-5.7 .6 1.4 .6 5.5 .6-4.4 .7-3.3 .6 7.3 .6-3.4 .6 .9 .6-1.6 .7 1.8 .6 1.2 .6-4.1 .6 2.1 .6-.3 .7 2.8 .6-4.6 .6 3.3 .6-5 .6 5.5 .7-3.7 .6 5.7 .6-7.7 .6 .2 .6 5.8 .7-.9 .6-4.2 .6 5.5 .6-6.5 .6 4.4 .7-1.9 .6 3.6 .6 .1 .6-2.2 .6 1.1 .7-3.8 .6 3.1 .6-2.4 .6 6.1 .6-6 .7 5.3 .6-6.9 .6 2.4 .6-1 .6 4.4 .7-.2 .6-3.3 .6-.9 .6 2.9 .6-4.3 .7-.6 .6 1.2 .6-.1 .6-.4 .6 6.8 .7-4.4 .6 .9 .6 1.5 .6 1.2 .6 1.3 .7-4.2 .6 .8 .6 3.2 .6-4.5 .6 4 .7-.6 .6-5.7 .6 6.7 .6-.3 .6-.9 .7 .3 .6-4.3 .6-1.3 .6-3.4 .6 6 .7 .2 .6-4.2 .6 2.1 .6-3.7 .6 1.5 .7-2.4 .6 7.8 .6-8 .6 2.6 .6 3.6 .7-2.3 .6-2.1 .6 5.3 .6-3.9 .6 1.8 .7-1.3 .6 4.8 .6-5.5 .6 5.7 .6-2.7 .7 5 .6-5.8 .6 5 .6-5.9 .6-1.1 .7 6.1 .6-.1 .6-5.4 .6 3.8 .6-1.7 .7 4.2 .6-6.3 .6 6.2 .6-4.8 .6 3.8 .7 1.7 .6-4 .6 3.2 .6-3.4 .6 2.9 .7-4.1 .6 4.6 .6-3.1 .6 .7 .6-2.5 .7 2.3 .6-2.3 .6 6 .6-2 .6-3.3 .7 .8 .6 1.4 .6 1.2 .6-3.8 .6 .6 .7-1.9 .6 4.5 .6-3.4 .6 4.5 .6-3.9 .7-.6 .6 5.6 .6-5.3 .6-2.5 .6 2.4 .7 4.8 .6-6.1 .6 .2 .6 4.6 .6-2.7 .7-1.4 .6 .9 .6 1.5 .6-3.3 .6 5.8 .7-4.3 .6 .9 .6 .5 .6 3.7 .6-1.8 .7-4.6 .6-.1 .6 4.2 .6-3.5 .6 6.5 .7-7.4 .6 6.4 .6-1.9 .6-3.4 .6 2.9 .7-4.5 .6 5 .6 .6 .6-4.3 .6 4.7 .7 .2 .6-.9 .6-1.2 .6-3.2 .6 6.4 .7-4.6 .6 3.4 .6-3.9 .6 2.2 .6-4.3 .7 2.7 .6 1.5 .6-3.8 .6 4.4 .6-4 .7 6.3 .6-2.5 .6-3.8 .6 6.6 .6-5.7 .7 3.9 .6 .5 .6-6.5 .6 5 .6-1.5 .7-.8 .6 3.2 .6 2 .6-4.5 .6 3.7 .7-6.7 .6 2.7 .6 2 .6-1.2 .6 .5 .7 2 .6-2.7 .6 1.9 .6 1 .6-2.2 .7-.4 .6 .8 .6-3.5 .6 4.2 .6-2.6 .7 2.7 .6-2.5 .6 2.1 .6-2.4 .6 2.4 .7-4.7 .6 5.7 .6-5.8 .6 1.1 .6 5.5 .7-4.6 .6 3.8 .6-4.3 .6 5.5 .6-2.4 .7-2.2 .6 4.6 .6-4.5 .6 4.8 .6-.7 .7-6 .6 4.8 .6-5.4 .6-.2 .6 3.6 .7 4.4 .6-6.3 .6 5.8 .6-7.8 .6 8.4 .7-4.8 .6 3.3 .6-5.1 .6 .6 .6-.7 .7 3.2 .6-4.5 .6 4.7 .6-3.2 .6 4.7 .7-2.5 .6 2.9 .6-3.1 .6-1.1 .6-.9 .7 5 .6-6.1 .6 6.6 .6-3.3 .6-.5 .7 .7 .6-2.1 .6 .7 .6 4.8 .6-6.2 .7 6.6 .6-6.3 .6 5.9 .6-6.5 .6 5.1 .7-1.1 .6-4.9 .6 4.2 .6-1.3 .6 4.5 .7-7.6 .6 6.7 .6-5.6 .6 3.2 .6-1.8 .7 1.8 .6-4.3 .6 5.5 .6-3.9 .6 1.7 .7 2.9 .6 .3 .6-3.2 .6 1.1 .6-.2 .7-2.1 .6-.6 .6 5.8 .6-3.4 .6-.4 .7 .8 .6-3.9 .6 4.1 .6-4 .6 7.4 .7-4.3 .6 1.3 .6-1.6 .6 1.5 .6-2.9 .7 2.8 .6-2.7 .6 4.1 .6-4.6 .6 4 .7-5.1 .6 5.3 .6-5.5 .6 5.5 .6-3.2 .7 5.4 .6-5 .6 4.4 .6-.3 .6-2.1 .7-4.4 .6 3.1 .6-2.6 .6 1.6 .6 5.5 .7-1.6 .6 1.8 .6-1.4 .6-2.2 .6-3 .7 5.7 .6-5.9 .6 4 .6-2.2 .6 4.4 .7-2.5 .6-4 .6 6.5 .6-5.9 .6 2.3 .7 0 .6 1.2 .6 1.5 .6-5.7 .6 5 .7-5.6 .6 1.8 .6 3.5 .6-4.8 .6 6 .7-6.2 .6 2.4 .6 1.6 .6-2.4 .6 4.8 .7-5.9 .6 2.6 .6 .4 .6-3.7 .6 5.8 .7-.7 .6-4.3 .6 3.7 .6-1.7 .6 2.9 .7-4.7 .6 1.1 .6 4.2 .6-6.5 .6 6.1 .7 .4 .6-1.6 .6 1.5 .6-2.7 .6 1.1 .7-3.2 .6 2.3 .6-2.7 .6 6.7 .6-3 .7-3.3 .6 .4 .6-.3 .6 4 .6-6.2 .7 5.9 .6-4.5 .6 3.4 .6-3.1 .6 .6 .7 3.4 .6-.6 .6-4.6 .6 4.3 .6-4.3 .7 4 .6-1.2 .6 3.4 .6-6.4 .6 4.5 .7-.1 .6-3.2 .6 6.5 .6-2.9 .6-3.4 .7 3.8 .6-.4 .6-1.2 .6-3.7 .6 5.3 .7-5.1 .6 3.6 .6 .8 .6-4.6 .6 3 .7 2.3 .6-4.4 .6 1.7 .6 4.3 .6-4.8 .7 2.3 .6-3.9 .6 6.2 .6-4.2 .6 5.6 .7-4.6 .6 3 .6-5.7 .6 6.9 .6-2 .7-3.3 .6 3.1 .6-3 .6 5.1 .6-.8 .7-1.2 .6-2.7 .6 1.5 .6 3.5 .6-5.5 .7 2.2 .6-4.3 .6 4.8 .6-.2 .6 .6 .7-2.3 .6 2.6 .6-4.9 .6 5.8 .6-1.3 .7-1.9 .6 3.8 .6-3.4 .6 2.6 .6-2.6 .7 1.6 .6 0 .6 2.1 .6-4.1 .6 .1 .7 .8 .6-2.1 .6 5.9 .6-8 .6 .6 .7 5.2 .6 .8 .6-5 .6 4.4 .6-5.1 .7 6.2 .6-2.9 .6-.6 .6 4.2 .6-5.8 .7 4.2 .6-5.7 .6 6.9 .6-3.6 .6-.4 .7 .1 .6 3.5 .6-6 .6 5 .6-4.1 .7 4.7 .6-3.4 .6 2.8 .6-2.2 .6-3.5 .7 4.2 .6 3.4 .6-7.3 .6-.7 .6 4.4 .7-1.5 .6-2.8 .6 4.3 .6-1.5 .6 4 .7-1.2 .6-3.8 .6 3.9 .6-4.9 .6 5.4 .7-2.6 .6 1.7 .6-1.8 .6 4.3 .6-3.9 .7-1.6 .6 2.1 .6-4.1 .6 4.2 .6-.8 .7-.9 .6 4.3 .6-4.1 .6 4 .6-4.5 .7 2.8 .6-4.8 .6 6.7 .6-.9 .6 1.4 .7-8.1 .6 7.6 .6-4.7 .6 4.8 .6-4.4 .7-2.7 .6 3.8 .6-1.4 .6 5.2 .6-7.4 .7 4.4 .6-2.4 .6 1.7 .6-2 .6 3.4 .7-2.9 .6 4 .6-4.9 .6 3.2 .6-2.3 .7 1.7 .6-2.5 .6 5.7 .6-5.6 .6 2 .7-3.4 .6 5.4 .6-5.3 .6 6.5 .6 .5 .7-6.6 .6 5 .6-4.4 .6-1.4 .6 6.8 .7-5.7 .6 2.3 .6 1.8 .6-.9 .6-1.3 .7-1.5 .6 3.4 .6-1.3 .6-3.1 .6-.2 .7 3.6 .6-3.4 .6 7 .6-4 .6 1.5 .7-5.1 .6 3.2 .6 1.6 .6-1.6 .6 2.2 .7-3.5 .6 5.7 .6-.1 .6-2.8 .6-2.9 .7 4.4 .6-6.7 .6 4.3 .6-1 .6 4.4 .7-4.5 .6 4.3 .6-2.2 .6-5.2 .6 1.1 .7 6.1 .6-1 .6-4.3 .6 3.6 .6-2 .7-.3 .6 4.9 .6-.1 .6-.3 .6-1.2 .7-5.5 .6-.4 .6 3.8 .6-2.3 .6-2.2 .7 7 .6-5.7 .6 5.6 .6-6.5 .6 7.2 .7-4.3 .6 3.8 .6-3.4 .6 2.2 .6-2.7 .7 2.7 .6-5.5 .6 3.9 .6 2.5 .6-5.2 .7 4 .6-4.2 .6 5.7 .6-.1 .6-6.2 .7 0 .6 1.5 .6 4.5 .6-6.2 .6 5.1 .7-5 .6 7.6 .6-7.7 .6-.6 .6 8 .7-3.8 .6 1.5 .6 .2 .6-4.6 .6 4.2 .7-1.8 .6 2.3 .6-.4 .6-.6 .6-1.8 .7 2.3 .6-.1 .6-3.4 .6 4.4 .6-3.7 .7 4.9 .6-.5 .6-6.5 .6 3.8 .6-3.3 .7-1.1 .6 3.5 .6 3.3 .6-3.2 .6-1.5 .7 6.2 .6-4.4 .6 1.4 .6-2.4 .6 2.6 .7-5.1 .6 .1 .6 2.6 .6 .7 .6 .7 .7-4.3 .6 7 .6-3 .6-.3 .6-3.1 .7 5.3 .6-4.8 .6 5.1 .6 .6 .6-5.8 .7 4.4 .6 1 .6-4.6 .6 3.4 .6 .3 .7 0 .6-1.5 .6-3.2 .6 .7 .6 3.2 .7-3.3 .6 6.6 .6-5 .6 1.6 .6-2.7 .7 3.6 .6-.2 .6 .9 .6-2.3 .6 3.8 .7-6.6 .6 5.8 .6 .2 .6-3.8 .6-3.1 .7 1.5 .6 3.8 .6-1.2 .6-.5 .6-1.3 .7 3 .6-3.3 .6 4.6 .6-5 .6 4.1 .7-.8 .6-.1 .6-4.3 .6 5.6 .6-5.3 .7 .1 .6 3.7 .6-2 .6 1.6 .6-2.1 .7 2.2 .6 3.1 .6-2 .6-.9 .6-4.7 .7 4 .6-.4 .6-2.1 .6 3 .6-1.1 .7 3.1 .6-5.9 .6 2.8 .6 1.2 .6-.7 .7-2.8 .6 .8 .6-1.4 .6 .1 .6 4.9 .7-4.7 .6 7.3 .6-5.9 .6-2.3 .6 .4 .7 2.6 .6 1.4 .6-4.3 .6 4.6 .6-.9 .7 .6 .6-3.7 .6 7 .6-5.5 .6 5.2 .7-5 .6 3.6 .6-2.4 .6 2.3 .6-5.3 .7 7.1 .6-4.3 .6 4.2 .6-6.2 .6 2.9 .7-2 .6-2.2 .6 5.1 .6-3.4 .6 6.2 .7-4.8 .6 1 .6 3.6 .6-3.8 .6 1.1 .7-4.8 .6 5 .6-2.4 .6 .1 .6-1.7 .7 1.3 .6-.9 .6 5.1 .6-3.2 .6 3.1 .7-3 .6-.2 .6-.5 .6 5 .6-.4 .7-1 .6 .1 .6-4 .6 3.8 .6-5.1 .7-.3 .6 3.1 .6-1.9 .6-.5 .6 4.8 .7-5.3 .6 5.1 .6-2.8 .6 4.2 .6-2.5 .7-3.4 .6 2.9 .6-.3 .6-1.6 .6 2 .7-3 .6 4.9 .6-5.3 .6 5.2 .6-4.5 .7 2.8 .6-3.4 .6-.1 .6 5.8 .6-4.8 .7 4.7 .6-3.9 .6-3.3 .6 8.3 .6-5.8 .7 1.7 .6-3.1 .6 6.3 .6-6.4 .6 5.8 .7-5.5 .6 3.2 .6-3.4 .6 7.1 .6-4.8 .7 2.2 .6-5.2 .6 6.7 .6-5.2 .6 1.8 .7 .4 .6-3.8 .6 6.5 .6-3.4 .6 2.6 .7-1.4 .6-2.5 .6 5.3 .6-4.7 .6-1.1 .7 4.8 .6-2.1 .6-2.2 .6 2.7 .6-2.5 .7 4.3 .6-5.1 .6 5.9 .6-2.3 .6 1.3 .7-3.4 .6 2.9 .6-2.9 .6 0 .6-.7 .7 4.2 .6-4.7 .6 6.3 .6-4.4 .6 .3 .7 3.5 .6-3.5 .6 2.2 .6-2 .6-.2 .7 1.4 .6-5.4 .6 7.7 .6-7.4 .6 4.8 .7-3 .6 5.9 .6-4.7 .6 4.2 .6-5.9 .7 3.5 .6-3.1 .6 3.1 .6-3.5 .6-1.7 .7 8.4 .6-6.3 .6 2.5 .6-.8 .6 .8 .7-1.2 .6 4 .6-3.8 .6 4.8 .6-6.1 .7 4.9 .6 .3 .6-6.6 .6 3.8 .6-1.3 .7 2 .6 .6 .6 2.2 .6-7.2 .6 4.9 .7-4.5 .6-.1 .6 5.1 .6-3.8 .6 1.6 .7 2.1 .6-5.2 .6 4.8 .6-4.2 .6 5.4 .7-6.2 .6 3.7 .6-1.5 .6 5.1 .6-7.1 .7 5.7 .6-3.5 .6 1 .6 4 .6-4.2 .7 2.9 .6-6 .6 4.2 .6 2.2 .6-5.3 .7-.4 .6 3.3 .6-1.6 .6 3.3 .6-5.2 .7 5.4 .6-6.2 .6 7.2 .6-.2 .6-.6 .7-3.9 .6 3.8 .6-5.4 .6 5.2 .6-3.6 .7 3.9 .6-1.6 .6-3.2 .6 4.6 .6 .5 .7-.2 .6-1.1 .6-4.6 .6 6.2 .6-5.8 .7 3.8 .6-2.7 .6 5.2 .6-7.8 .6 .5 .7 3.4 .6 .2 .6-4.2 .6 7.4 .6-2.8 .7-1.1 .6 2.5 .6-.9 .6-1.8 .6 .8 .7-2.7 .6 4.3 .6 1.2 .6-6.7 .6 4.9 .7-3.7 .6-.4 .6 6.9 .6-4.9 .6-1.7 .7 .3 .6 4.3 .6-3.5 .6 2.1 .6-1.1 .7 2.7 .6-3.9 .6-.9 .6 3.8 .6 .3 .7-.5 .6 1.9 .6-6 .6 4.7 .6-3 .7 2.1 .6-1.1 .6-1.1 .6 3.3 .6 1.9 .7-7.2 .6-.4 .6 6.4 .6-4 .6 4.1 .7-5.8 .6 5 .6-5.3 .6 4.1 .6-1.6 .7 2.7 .6 .2 .6-3.2 .6-.2 .6 3.7 .7-6.2 .6 5.4 .6-3.5 .6 4.9 .6-3 .7 1.5 .6-2.5 .6 1.3 .6-3.3 .6 3.6 .7-.7 .6 2.4 .6-5.4 .6 5.5 .6-2.3 .7-1.5 .6 1.2 .6 2.7 .6-2.6 .6-3.6 .7 1.6 .6 4.8 .6-3.2 .6 2.6 .6-2.1 .7 .7 .6 1.5 .6-5.3 .6 4.5 .6-1.2 .7 .2 .6 3.5 .6-7.7 .6 6.9 .6-4.7 .7 3.5 .6-3.1 .6 2.3 .6-2.7 .6 2 .7-3.2 .6 5 .6 .6 .6-5.8 .6 1.6 .7 4.8 .6-5.2 .6 4.3 .6-5.9 .6 6.5 .7-5.7 .6 .2 .6 4.7 .6-2.9 .6 4.1 .7-3.5 .6 3.7 .6-4.3 .6 0 .6 2.7 .7-3 .6 1.8 .6-3.4 .6 3.8 .6 .7 .7-5.7 .6 5.9 .6-5.1 .6 3.4 .6-3.4 .7 3.6 .6-1.2 .6-5.9 .6 2.9 .6-3.4 .7 3.3 .6-3.8 .6 4.6 .6-4.5 .6 .6 .7 6.1 .6-3.9 .6 4.7 .6-4.7 .6 3.9 .7-3.5 .6-3.8 .6 1.7 .6 5.5 .6-6.6 .7 1.4 .6 .2 .6 8.6 .6-.2 .6-1.4 .7 2.6 .6-3.8 .6 2.7 .6-.3 .6-5.5 .7 6 .6-3.7 .6 2.4 .6-3.8 .6 2.5 .7 3 .6 .1 .6-4.5 .6 2.4 .6-.3 .7-2.8 .6 2 .6-2.6 .6 2.8 .6-2.5 .7 3.1 .6-2.9 .6 4.5 .6-3.7 .6 2.3 .7-2 .6 4 .6-.9 .6 1.9 .6-2.6 .7-4.1 .6 3.3 .6-3.4 .6 6.6 .6-1.7 .7-3.5 .6 1.8 .6 .8 .6-5.4 .6 7.4 .7-7.4 .6 6.1 .6-2.1 .6-1.3 .6 1.7 .7-.7 .6-3.6 .6 1.8 .6 5.5 .6-6.6 .7 5.7 .6-3 .6 2.4 .6-5.8 .6 7.2 .7-3.6 .6-.5 .6 3.4 .6-4 .6 4.4 .7-5.4 .6 2.2 .6 1.8 .6 1.1 .6-4.5 .7 4.1 .6-2.8 .6 2.9 .6-4.8 .6 5.5 .7-6.5 .6 4.2 .6-3.3 .6 6.4 .6-5.5 .7 3.6 .6-1.1 .6-3.1 .6 2.9 .6-3.1 .7 2.6 .6-3.7 .6 0 .6 4.9 .6-3.9 .7 4.9 .6-3.3 .6 1.2 .6-.6 .6-3.6 .7 8.1 .6-4.1 .6 1.5 .6-1.8 .6 .4 .7-2.1 .6 5.9 .6-1.8 .6-.6 .6 1.8 .7-6.4 .6 3.8 .6-1.2 .6 1.6 .6-4.5 .7 7.2 .6-6.7 .6 5.8 .6-.4 .6-4.8 .7 6.3 .6-4.8 .6 2.1 .6-4 .6 3.6 .7-2.6 .6 3.7 .6-4.9 .6 2.5 .6 3 .7-4.7 .6 6.3 .6-2.4 .6 1 .6 1.4 .7-5.1 .6 4.3 .6-2.4 .6-4.7 .6 6.2 .7 1.4 .6-8 .6 6.7 .6-1.4 .6-5 .7-.3 .6 6.7 .6-6.6 .6 5.2 .6-1.9 .7 3.1 .6-3 .6 3.5 .6-2.4 .6-4.6 .7 6.3 .6-2.1 .6 3.2 .6-4.7 .6 5.4 .7-4.3 .6 4.3 .6-4.8 .6 4.1 .6-6.1 .7 3.6 .6-3.8 .6 3.4 .6-2.1 .6 2.4 .7-3.4 .6 0 .6 2.2 .6 2 .6 1 .7-6.3 .6 3.2 .6 1 .6-1.3 .6 2.4 .7-5.2 .6 4.8 .6-1.3 .6-2.8 .6 5.6 .7-4.8 .6 3.4 .6-3.5 .6 6.2 .6-5.4 .7 4.6 .6-4 .6 2.7 .6 0 .6 .2 .7-3.1 .6 4.1 .6-4.9 .6 3.1 .6-2 .7 1 .6-1.3 .6 4.6 .6-7.2 .6 4.5 .7-2.9 .6-1.4 .6 3.4 .6 1.5 .6-1.4 .7 .5 .6 .4 .6-1.6 .6 .2 .6 1.4 .7-5.1 .6 7.3 .6-7.2 .6 1.4 .6 2.9 .7-2.2 .6-2.2 .6 3.2 .6-1.6 .6 3.5 .7 2.4 .6-6.1 .6 6.7 .6-7.1 .6 5.3 .7-6 .6 2.2 .6 1 .6 2 .6-3 .7 5.8 .6-2.1 .6-3.1 .6-.1 .6 3 .7-2.3 .6 2.8 .6-4 .6 .6 .6 .8 .7-2 .6 5.7 .6-2.9 .6 3.5 .6-7.3 .7 5.7 .6-3.7 .6-2 .6 3 .6 3.3 .7-3.1 .6-3.2 .6 4.7 .6-4.8 .6 6.4 .7-4.9 .6-.8 .6 1.9 .6 2 .6-4.4 .7-.6 .6-.3 .6 7.2 .6-4.8 .6 2.1 .7 1.2 .6-1.9 .6 1.7 .6 1.3 .6-3.4 .7 3.6 .6-5 .6 3.8 .6-1.5 .6-3.5 .7 4.7 .6-2.6 .6 .8 .6 3.4 .6-6.1 .7 5.7 .6-3.9 .6 3.9 .6-2.8 .6 3.8 .7-4.5 .6 1.9 .6-1.3 .6 4 .6-1.2 .7 1.1 .6-5.2 .6-2.4 .6 6.6 .6-3 .7 1.4 .6-3.8 .6 6.6 .6-4.7 .6 2.5 .7 .4 .6-1.2 .6-4.2 .6 6.5 .6-5.9 .7 4.3 .6 .1 .6-5.8 .6 7.1 .6-5.5 .7 3.8 .6-2.2 .6 1.4 .6-2.5 .6-1.2 .7 6.4 .6-5.2 .6 4.3 .6-2.7 .6 2 .7-2.4 .6 1.4 .6 3.6 .6-3.5 .6-4.3 .7 4.3 .6-4.7 .6 .6 .6 6.6 .6 .7 .7-.6 .6-.3 .6-5.3 .6 0 .6 4.3 .7 1.1 .6-6.9 .6 3 .6 4.6 .6-7.6 .7 7.5 .6-4.9 .6 2.2 .6-4.2 .6 7.1 .7-5 .6 4.5 .6-7.5 .6 2 .6 5.6 .7-6.3 .6-.6 .6 3.6 .6-3.5 .6 7 .7-2.9 .6-3.5 .6 3.5 .6 .2 .6 3.1 .7-6.9 .6 6.7 .6-5.5 .6 5.3 .6-7.4 .7 7.5 .6-6.7 .6 1.6 .6 3.1 .6-5.2 .7 6.9 .6-4.1 .6 4.1V1364.8Z" fill="#e3c931" fill-opacity="0.15" stroke="#e3c931" stroke-width="0.85" stroke-opacity="1" stroke-linejoin="round" clip-path="url(#cw)"/>
<path d="M47.2 1364.8V1158.3l1 .4 1 0 1 .4 1 .1 1-.7 1 .5 1-.3 1 .4 1-.1 1-.6 1 .4 1-.1 1 .1 1-5.4 1-1.7 1-.3 1 .1 1 .3 1-.1 1-.5 1-.1 1 3.8 1 4.9 1-.6 1 .5 1 .1 1-.3 1-.3 1 .3 1-.2 1 .5 1-.5 1 .1 1 .1 1-.1 1-.4 1 .4 1-.2 1 .3 1 .1 1-.6 1 .2 1-.1 1 .7 1-.5 1-.1 1 .6 1-.2 1 .1 1-.4 1-.4 1 .3 1-.3 1 .3 1 .1 1 0 1 .5 1-.5 1-.3 1 0 1 .5 1-.2 1-.1 1 .1 1-.1 1 .3 1-.1 1-4 1-3.4 1-.2 1 .3 1-.1 1 .3 1 .2 1-.3 1 3.3 1 3.8 1-.3 1 .6 1-.5 1 .2 1 .3 1 2.7 1 8.1 1 22.4 1 18.4 1 .8 1 .5 1-.2 1 .3 1 0 1 0 1 .3 1-.5 1 0 1 .3 1-.1 1-.3 1 .6 1-.7 1 56.8 1 8.7 1 2.3 1-.4 1-.2 1-1.2 1-.6 1-1.4 1-.7 1 1.7 1 2.3 1-1.7 1 2.6 1-1.1 1-1.5 1 11.7 1-1 1 2.9 1-.4 1-3.9 1-22.7 1-50.2 1-.3 1 .3 1-.3 1 .3 1-.2 1 .1 1 .3 1 56.6 1 15 1 1 1 3.3 1-.3 1-3.5 1 2.5 1-1.4 1 2.2 1-3 1 .8 1-.3 1 .1 1 1.7 1 1.8 1-1.4 1 0 1 .7 1-2.2 1 .2 1 1.3 1-2.7 1 3.2 1 1 1-.3 1-4.9 1 5.1 1-4.2 1-.6 1 2.9 1-1.6 1-1 1 2.5 1-.4 1-.1 1-.1 1 .6 1 .9 1-.4 1-.1 1 .7 1-2.1 1 .9 1-19.9 1-22.1 1-20.8 1-11.8 1-.5 1 .8 1-.7 1 .2 1 0 1 .5 1 16 1 24.1 1 25.6 1 5.7 1-.1 1-1.3 1 4.7 1-2.8 1 16.6 1-2 1 4.1 1-5 1 3.6 1-3.8 1 2.8 1-1.2 1 3.7 1-3.1 1 2.4 1-4.8 1 1.2 1 4.5 1-3.7 1-2 1 1.4 1 .6 1 1 1-.9 1-.5 1 1 1 0 1-1.7 1 2 1 .4 1-.1 1 1 1-33.6 1-79.7 1-23.3 1-.9 1 0 1 0 1-.1 1-3.2 1-3.4 1-4.3 1-1.8 1-1 1-.5 1 .3 1-.3 1 .4 1 .2 1 .2 1 2.5 1 2 1 2.6 1 .6 1 0 1 .9 1-.2 1 .4 1-.8 1 .4 1 .3 1 .2 1-.3 1 .4 1-.1 1-.3 1 .3 1-.2 1-.3 1 .8 1-.1 1 .1 1-.6 1 .6 1-.8 1 .5 1-.1 1 .2 1-.1 1 .2 1-.1 1 .4 1-.1 1-.4 1 0 1 .1 1 .1 1 .1 1 .1 1 .3 1 .2 1-.7 1 .1 1 .3 1-.5 1 .6 1-5.4 1-2.4 1 0 1-.2 1 .6 1-.7 1-.3 1 .1 1 2 1 5.3 1 1.5 1-.4 1 .6 1-.7 1 .1 1 .3 1 0 1 .3 1-.5 1 .7 1-.3 1 .1 1-.1 1-.3 1 .4 1 .4 1-.9 1 .3 1 0 1 0 1 .5 1-.1 1-.5 1 .6 1 .2 1-.7 1-.1 1 .6 1 .4 1-.4 1 0 1 0 1 .1 1 .4 1-.3 1 .2 1-.2 1 .4 1-.1 1-.2 1-.2 1 0 1 .7 1-1.3 1-5.4 1-1.5 1-.1 1 .2 1-.3 1 .6 1-.4 1 .3 1 2.3 1 5.4 1 .1 1 .1 1-.1 1 .5 1-.3 1 0 1-.2 1 .1 1-.1 1 .2 1-.2 1-.1 1 .3 1-.3 1 .6 1-.5 1 .8 1-.5 1 0 1 .3 1-.3 1 .5 1-.4 1 .6 1-.8 1 0 1 .9 1-.2 1-.4 1 .4 1-.2 1 .1 1-.2 1 .3 1 .2 1 .2 1-.6 1 .4 1 0 1 .3 1-.3 1 .4 1 .1 1-3 1-4.9 1 .1 1-.4 1 0 1 .2 1-.2 1 0 1 .1 1 3.9 1 3.9 1-.3 1 .7 1 .2 1-.1 1 .3 1-.2 1-.7 1 .3 1 .6 1-.8 1 .8 1 0 1-.7 1 .1 1 .6 1-.1 1-.6 1 .6 1-.3 1 .6 1-.2 1-.5 1 .4 1-.4 1 .9 1 0 1-.1 1-.7 1 1 1-.7 1 .4 1 .2 1-.2 1-.4 1 .1 1 .6 1-.6 1 .3 1 .5 1-.5 1-.2 1 .5 1-.2 1-4.5 1-3.3 1 .4 1 0 1-.6 1 .4 1-.1 1-.4 1 2.7 1 4.2 1 1.7 1-.5 1 .9 1 .1 1-.3 1-.5 1 .6 1-.2 1 0 1-.2 1 0 1 .7 1-.2 1 .1 1 0 1-.3 1 .2 1-.2 1 .4 1-.2 1 .4 1-.5 1 .1 1-.3 1 0 1 .2 1-.1 1 .4 1 0 1 .5 1-.8 1 1 1-.9 1 .8 1-.5 1-.1 1 .4 1-.2 1-.3 1 .1 1 .6 1 .1 1 .3 1-.8 1-.4 1-5.3 1-1.8 1-.2 1 .1 1 .5 1-.6 1 .1 1 .5 1 2.4 1 5.2 1 .2 1-.2 1 .4 1 0 1-.3 1 .7 1-.9 1 .8 1-.1 1 0 1-.2 1 .3 1-.7 1 .7 1 .2 1-.5 1 .4 1 0 1-.2 1 .3 1-.2 1-.4 1 .4 1 .3 1-.6 1 .4 1 .4 1-.8 1 .8 1-.4 1 0 1 .4 1-.1 1 7.9 1 35 1 57 1 16.3 1 5 1-1.2 1 .3 1 .4 1 1.8 1-16.4 1-59.8 1 .7 1-.8 1 .5 1-.1 1 .5 1-.3 1 20 1 48.5 1 2.5 1 .6 1-.4 1 .8 1-2.8 1 2.7 1 3.7 1-2.3 1 .3 1 .9 1 5.5 1 .5 1-1.9 1 .5 1 1.1 1 4 1 1.1 1 1 1-.5 1-1 1-3.3 1 5.1 1-4.6 1 3.5 1-2.2 1-1.9 1 3.8 1-2.3 1 3.8 1-4.1 1 2.9 1-1.3 1-2.2 1 1.4 1 .3 1 2.8 1 .1 1 1.1 1-4.6 1 .4 1 1 1-.2 1-.7 1 3.4 1-4.4 1-9.8 1-65.6 1-6.3 1 0 1 .2 1 .4 1-.2 1-.3 1 28.9 1 54.7 1-.4 1 2.7 1 .8 1-.3 1-1.3 1 1.3 1-2.3 1 3.7 1-1.3 1 .4 1-1.6 1 2.3 1-2.7 1 2.9 1-3 1 3 1-3.8 1 1.2 1 .3 1-.1 1 1.8 1 0 1-4 1 3.1 1-1 1-.8 1-1.7 1 4.8 1 .4 1-1.6 1-.9 1-2.9 1 17.2 1 6.8 1-1.5 1 1.8 1-.1 1 .3 1-2.1 1 .4 1 4.9 1-2.4 1-1.9 1 1.3 1-35.9 1-70 1-.3 1 .5 1 .2 1-.3 1 .4 1-.2 1 57.1 1 48.9 1 1 1-1.9 1-1.7 1 2.2 1 2.2 1-.9 1-3.8 1 4.8 1-4.7 1 2.8 1-19.6 1-86 1-52.8 1 .1 1-.1 1 0 1-.5 1-1.3 1-3.1 1-.9 1 0 1 .1 1 .1 1-.1 1 .7 1-.5 1 .1 1 .3 1-.6 1 .3 1-.5 1 .5 1 .4 1-.3 1-.3 1 .3 1-.1 1 0 1 .1 1 .1 1 .2 1 .1 1 0 1-4.9 1-2.9 1 .1 1-.6 1 0 1 .6 1-.4 1-.4 1 2.6 1 4 1 1.5 1 .6 1-.7 1 .7 1-.6 1 .6 1-.4 1 .2 1 .1 1 .1 1-.5 1 .4 1-.5 1 .1 1 .6 1-.6 1 .3 1-.3 1 .4 1-.3 1 .2 1 .6 1-.5 1 0 1-.4 1 .2 1-.1 1 .5 1-.4 1 0 1 0 1 .6 1-.1 1-.3 1 0 1 0 1 .3 1 0 1-.4 1 0 1 .5 1-.3 1 .4 1-1.4 1-4.8 1-1.9 1 .8 1-.3 1-.6 1 .4 1 .2 1-.4 1 3.4 1 3.8 1 1 1 0 1-.3 1 .8 1-.4 1-.4 1 .7 1-.7 1 .6 1 .2 1-.2 1-.5 1 0 1 .8 1 .1 1-.6 1 .7 1-.1 1-.7 1 .8 1-.8 1 .3 1-.1 1 .1 1 .3 1-.4 1 .9 1-.7 1 .5 1-.3 1 .6 1-.4 1 0 1 .3 1-.2 1-.1 1-.2 1 .6 1-.1 1-.2 1 .6 1-.5 1 .3 1-2.9 1-4.5 1-.2 1-.4 1 .8 1 0 1-.4 1 .1 1-.5 1 4.7 1 3.7 1-.3 1 .1 1 .1 1-.4 1-.1 1 .1 1 .4 1 .1 1 .3 1-.6 1-.1 1 .3 1-.2 1 .1 1 .3 1 .2 1-.6 1 .1 1 .4 1 0 1-.3 1 .5 1 0 1 .4 1 0 1-.3 1-.5 1 .4 1-.2 1 .1 1-.2 1 .6 1 0 1-.3 1-.1 1 .8 1-.4 1 .2 1-.4 1 .7 1-.2 1-.2 1-.4 1-2.9 1-4.6 1 .1 1 .6 1-.7 1 .1 1 .2 1 .6 1-.3 1 4.8 1 2.9 1-.5 1 .6 1-.5 1 .3 1 0 1 .7 1-.5 1-.1 1 0 1 0 1-.1 1 .2 1 .4 1-.3 1-.1 1-.2 1 .8 1-.5 1 0 1 .6 1 .2 1-.4 1-.5 1 .8 1 0 1-.7 1 .3 1 .5 1-.3 1-.3 1 .9 1-.8 1 0 1 .5 1 .4 1-.3 1-.6 1 0 1 .2 1 .5 1 .3 1-.8 1 .6 1-4.7 1-3.5 1 .9 1-.6 1 .1 1 .4 1-.3 1 .1 1 1.3 1 5.1 1 1 1 .7 1-.1 1-.1 1 .1 1 .3 1-.1 1-.1 1-.3 1-.3 1 1 1-.9 1 0 1 .6 1 .4 1-.5 1-.3 1-.1 1 .2 1 .2 1 0 1-.1 1 .7 1 .1 1 0 1-.7 1 .5 1-.5 1 .3 1 .1 1-.2 1 .5 1-.5 1 .6 1 0 1-.1 1-.6 1 .1 1 .7 1 .2 1-.7 1 .5 1 .1 1 .1 1-4 1-4.1 1-.2 1 .7 1-.4 1 .4 1-.6 1 .5 1 .1 1 4.7 1 37.4 1 41.9 1 20.9 1 8.5 1-4.3 1 .8 1 3.2 1-3.6 1 4.6 1 .3 1-4 1 3 1-.3 1 2.1 1-2.9 1-.7 1 3.1 1-3.6 1 4 1-3.3 1 .3 1 2.7 1-.5 1-3.3 1 2.9 1 2 1-3.5 1 1 1 .7 1 .4 1 7.5 1 4 1-1.2 1 2.7 1-1.8 1 2.7 1-4.4 1 4.3 1-3.6 1 4.2 1-.3 1-2.8 1-1.5 1 .7 1-44.7 1-25.6 1-.2 1-.8 1 0 1 .6 1-.1 1 .1 1 24.4 1 50 1-4.2 1 5 1-3 1 0 1-1.9 1 .5 1-.3 1 .6 1 1.6 1-1.8 1 .1 1-.9 1-.3 1 5.1 1-2.9 1 .1 1-1.9 1 5.1 1-5.8 1 4.6 1-4.4 1 1.4 1 10.9 1 3.9 1 1.5 1-.8 1 .8 1-3.8 1 1.4 1-.2 1 1.3 1-.4 1-1.9 1 .2 1-.4 1-.1 1 3.6 1 1.9 1-2.2 1-2.4 1 2.5 1-.7 1-1.3 1 3.1 1-55.7 1-30.6 1-.3 1 .2 1 .7 1-.4 1 .2 1-.2 1 66.6 1 39.3 1 1 1-1.2 1 1.2 1-2.9 1 2.1 1-1.6 1 2.2 1 .3 1 2.3 1-.3 1 .2 1-2.7 1-.9 1 3.3 1-4.4 1 1.6 1-1.9 1 4.5 1-.4 1 1.1 1-4.5 1 3.9 1-.8 1-.9 1-.6 1 2.1 1-2 1 2.9 1-.1 1-3.4 1-72.1 1-83.5 1 .3 1-.3 1-.6 1-.3 1-.9 1-3.1 1-1 1-.1 1-.1 1 .2 1-.7 1 .5 1-5.2 1-2.2 1 .1 1-.6 1 .7 1 .1 1-.4 1 .2 1 2.2 1 4.6 1 .5 1 .3 1 .4 1-.6 1 .6 1-.1 1-.8 1 0 1 .9 1-.5 1 .3 1 .1 1-.6 1-.3 1 .9 1 0 1-.5 1 .2 1-.6 1 .9 1-.3 1 .3 1-.3 1-.3 1-.2 1 .3 1 .4 1-.4 1 0 1-.3 1-.1 1 .1 1 .1 1 .1 1 .5 1-.7 1 0 1 .5 1 .2 1-.7 1 0 1 .1 1-.3 1 0 1-3.9 1-3.6 1 0 1 .6 1-.3 1 .1 1 .1 1 0 1 2.1 1 4.7 1 .5 1 .7 1-.7 1 .1 1 .2 1-.1 1 0 1 .1 1 .6 1 .1 1-.3 1 .1 1 .2 1-.1 1-.5 1 .4 1-.2 1 .3 1 .5 1-.8 1 .2 1 .3 1 .1 1-.3 1 .1 1 .1 1 .5 1-.9 1 .9 1-.3 1 .4 1-.5 1 .2 1-.6 1 .3 1 .4 1-.3 1 .2 1 .5 1-.4 1 .2 1-.1 1-.3 1-1.4 1-6 1-.4 1 .4 1 0 1-.2 1 .2 1-.3 1 .8 1 4.2 1 3.1 1 .3 1 .1 1-.2 1 .4 1-.3 1 .5 1-.1 1 0 1-.5 1 .5 1 .4 1-.2 1-.7 1 .3 1-.3 1 .7 1 .3 1-.2 1 0 1-.1 1 .3 1-.2 1 .3 1-.6 1 .3 1 .2 1-.5 1 .5 1 .4 1-.8 1 .7 1 0 1 .2 1 .2 1-.3 1 0 1-.1 1 0 1 .2 1-.3 1 .5 1-.2 1-.1 1-4.2 1-3.1 1 .1 1 0 1-.1 1-.4 1-.3 1 .1 1 1.8 1 5.1 1 1 1 .4 1 .4 1-.3 1 .4 1-.4 1 .1 1-.2 1-.1 1 .5 1-.4 1 .1 1 .1 1 .5 1 .3 1-.7 1 0 1 .8 1-.4 1 .3 1 .2 1-.3 1-.3 1 .7 1 0 1-.9 1 1 1-.3 1-.4 1 .3 1-.1 1 .5 1-.3 1-.3 1 .8 1-.5 1-.1 1 .5 1-.5 1 .5 1-.1 1-.3 1 .9 1-5.7 1-2.8 1 .8 1-.2 1 .1 1 0 1-.6 1 .1 1 2.7 1 5.3 1 .6 1-.4 1 .2 1 .3 1-.4 1 0 1-.2 1 .8 1-.9 1 .1 1 .7 1-.7 1 .2 1 .3 1-.2 1 .1 1-.3 1 .7 1-.6 1 .3 1-.2 1 .7 1-.5 1 .4 1-.5 1 .6 1-.2 1 .6 1-.7 1 .2 1 .6 1-.8 1 .5 1 0 1-.2 1-.1 1 .4 1-.4 1 0 1 .3 1 .1 1-.1 1 .5 1-.2 1-4.2 1-3.3 1 .2 1 .2 1-.4 1 .1 1-.1 1-.5 1 2.6 1 4.4 1 .9 1 .8 1-.1 1 .5 1-.5 1 .1 1 19.1 1 43.4 1 42.6 1-1.7 1 .2 1 2.1 1 1.3 1-2.4 1 1.8 1-.6 1 .2 1-1.7 1 .7 1 .1 1 4.7 1-5.5 1 1.5 1 .2 1 3.9 1-.6 1-1.9 1-.9 1 3.7 1 .7 1-.3 1 .7 1-.4 1-3.1 1 4.8 1 .8 1-4 1 1.6 1 3.9 1 .3 1-.7 1 .4 1-7.9 1-17.5 1-29.3 1-14.8 1 .7 1-.1 1 .1 1 0 1-.8 1 .1 1 24.8 1 46.1 1 1.1 1 2.6 1 .3 1-2.6 1 .1 1 1.7 1 1.8 1-2.2 1-1.7 1-.7 1-.3 1 2.6 1 .6 1-3 1 3.2 1-.9 1-.2 1-.2 1-.7 1-2.4 1 3.1 1 .8 1 1.3 1 .5 1-1.9 1-2.9 1 4.2 1-2.7 1 3.3 1-.1 1-5.2 1-.2 1 0 1 3.8 1-1.1 1 .7 1-1.8 1 1.7 1-3 1 .6 1 3.2 1-3 1-.7 1-57 1-12.8 1-.1 1 0 1-.2 1-.7 1 .2 1 .4 1-.1 1 67.8 1 1.8 1 3.6 1-3.4 1 4.1 1-4 1 11.1 1 5.4 1 1.3 1-1.1 1-.1 1-2.9 1 2 1-.6 1-.2 1 .6 1-.9 1-.4 1 2.3 1-.7 1 2 1-.3 1-.8 1-4.1 1 2.3 1 0 1 1.7 1 .8 1-4.3 1-1.1 1 5.1 1 .7 1-3.9 1 1.6 1-1.3 1 0 1 1.5 1 .4 1-72.3 1-61.7 1 .1 1 0 1 .5 1-.5 1-1.4 1-9.1 1-3.7 1 .8 1-.7 1 .4 1 .1 1-.5 1 .5 1 1.1 1 4.8 1 1.7 1-.1 1-.2 1 .1 1 .7 1-.3 1-.1 1 .3 1 0 1-.1 1-.3 1 .1 1-.2 1-.2 1 .8 1-.8 1 .3 1 .5 1-.6 1 .6 1-.8 1 .1 1 .3 1 .2 1 .2 1 .1 1-.1 1-.6 1 .8 1-1 1 .5 1-.1 1-.4 1 .2 1 .8 1 0 1-.6 1 .6 1-.2 1-.7 1 .6 1-.4 1 .1 1 .4 1-.5 1-1 1-6.1 1-.3 1 0 1-.2 1 0 1 .3 1-.3 1 .8V1364.8Z" fill="#bfcb3d" fill-opacity="0.15" stroke="#bfcb3d" stroke-width="0.8" stroke-opacity="1" stroke-linejoin="round" clip-path="url(#cw)"/>
<path d="M47.2 1364.8V1212.4l1-.5 1 .3 1 .5 1 1.4 1-.9 1 .8 1-1.7 1-.2 1 .3 1 0 1-2 1 3.4 1-.8 1-.6 1 .4 1 .8 1-.3 1 .9 1-.4 1-.6 1-.1 1-.7 1 .1 1-.4 1 1.9 1-1.8 1 1.2 1 .1 1-.2 1-.2 1-1.4 1 2.5 1-.5 1-1.9 1 2.5 1-1.8 1 .9 1 .5 1-1 1-.4 1-.5 1 .6 1 .7 1 0 1 .7 1 0 1-.3 1-1.5 1-.3 1 1.8 1-.8 1 .5 1-1.5 1 2.1 1 .1 1-2.4 1 2 1 .2 1-2 1 .7 1-.9 1 1.2 1 .3 1-1.5 1 1.1 1 1.2 1-.4 1-1.3 1 2 1-2 1-2.3 1-12.6 1 12.8 1 1.7 1 0 1 .4 1-.5 1 2.4 1-1.6 1-.3 1 1.9 1-2.4 1 2 1-.6 1 .3 1-.5 1-.8 1 1.1 1 1 1-1.9 1 .7 1-1.2 1 2.2 1-.1 1-1 1 1.7 1-.5 1-1.6 1 1.4 1-.8 1 .8 1-.9 1-.5 1 .8 1-1.5 1-.1 1 .4 1 .1 1 .5 1-.4 1-.4 1 .8 1 .9 1-2.7 1 3.1 1-1.3 1-.9 1 2 1-1.4 1 0 1 1.2 1-1.3 1-.2 1 .8 1 .1 1 .6 1-.9 1 1.2 1-1.4 1-.2 1 1.7 1-.2 1-.9 1-1 1 1.9 1-1.5 1-.3 1 1.6 1-1.2 1 .1 1 1.2 1-.1 1-1.3 1 1 1-.6 1-.9 1 1.2 1-1.3 1 .1 1 1.8 1-1.4 1 .2 1-2.1 1-.6 1-2.6 1 1 1-1.9 1 .7 1-.5 1-.5 1 1.2 1 .6 1-.4 1-7 1 12.1 1-1.8 1-3.5 1-1.1 1 1.7 1-1.4 1 .9 1-1.1 1 1.3 1-.4 1-.5 1 1.7 1-.4 1-1.5 1 .3 1 .4 1-1.1 1 1.7 1 .6 1-.5 1-2 1 4.4 1 4.3 1-.6 1-1.5 1-.2 1 1.6 1 .5 1-4.2 1 2.5 1 1.1 1-1 1-.6 1 .1 1-.4 1 2.5 1-1.4 1 1 1 .2 1-1.7 1 1.8 1 .1 1-.8 1-.7 1-.5 1 .5 1 1 1-.2 1 .2 1-1.2 1 .3 1 .3 1-1.1 1 0 1 .2 1 0 1 1.5 1-1.8 1 1.6 1 .6 1-1.6 1 0 1-.6 1 1.7 1 .6 1-1.6 1-.2 1 .5 1 .8 1-1.9 1 .8 1 1.4 1-1.9 1 .4 1-.8 1 1.1 1-.6 1 1.8 1-1.5 1 .1 1 .9 1-.4 1-.5 1 .2 1 1.3 1-.6 1-1.4 1 1.6 1 .4 1-1 1 0 1-.3 1 .2 1 .6 1 .1 1-.3 1 .3 1 1.8 1-2.1 1-.1 1-.1 1 .8 1-.6 1-.3 1-1.3 1 2.5 1-2.1 1 0 1 1.6 1-2 1 1.8 1-1.5 1 1.6 1-1.5 1 0 1 0 1-.2 1 .6 1-.4 1-.3 1 0 1 .2 1 0 1 2.2 1-2.3 1 .2 1-.2 1 1.8 1-.9 1-.2 1 .3 1-.1 1 .4 1-.4 1 1.3 1-1.4 1 .6 1 .1 1-1 1-.5 1 0 1 1.6 1-.3 1-.3 1-.3 1 .6 1 1 1-.9 1-.1 1 .7 1-1.2 1 1.3 1-2.1 1 .9 1 1.1 1-1.7 1 .2 1 .5 1 .4 1 .6 1 1.7 1-1.9 1-.1 1-1.3 1 1.5 1-.7 1-.8 1 .4 1 .6 1-1.5 1 .3 1 1.7 1-.8 1 .4 1-.2 1-1.3 1 1.2 1 1 1-2.3 1 1.7 1-.6 1 .6 1 .3 1-.9 1 .5 1-.4 1-.8 1 1.5 1-1.6 1 1.3 1 .5 1-.1 1 .4 1-1.1 1-.5 1-.1 1-.2 1 .9 1 .7 1 .3 1-2.1 1 2.1 1-3.7 1 3.8 1-4.1 1 2.3 1-3 1-.4 1 1.3 1-1.3 1 1.7 1 .4 1 2.1 1 0 1-.5 1 1.5 1-.8 1-1 1-.5 1 2.2 1-1.4 1 0 1 .8 1 .7 1-1.8 1 1.7 1-.2 1-2.1 1 .5 1 1.2 1-2.9 1-1.4 1 .1 1-1.5 1-.4 1 1.1 1-1.4 1-.9 1-.6 1 1.8 1-1.8 1 .1 1-.3 1 .3 1 .6 1-1.7 1 1.2 1-1.5 1 1.6 1-.5 1-.3 1 .3 1-.4 1 .2 1 1 1-1.2 1 .1 1 .5 1-1 1 1.4 1 .1 1-.8 1-.6 1 .3 1-.4 1 .1 1 0 1 .7 1-.5 1 0 1 1.2 1 .4 1-1.5 1 2.2 1 .2 1-2 1 2.1 1-2 1 1.9 1-.4 1-.1 1 2.5 1 2.8 1 0 1 .4 1-.9 1 2.6 1-2 1-.7 1 1.5 1 .4 1-1.6 1 1.8 1-.4 1-1.2 1 1.4 1-.5 1 1.2 1-1.5 1 1.5 1-1.3 1 .1 1-.7 1-.6 1 2.3 1-.1 1-1.3 1-.8 1 .8 1 .9 1 .7 1-.1 1-1.9 1 .2 1 1.4 1-.4 1 .3 1-.5 1-.4 1-.2 1 .4 1 .1 1 .4 1 .9 1-.2 1-1.3 1 .8 1-1.1 1-.5 1 .5 1 .6 1-1.2 1 .3 1 .2 1-.1 1 1.3 1 0 1 .4 1-1.3 1-.9 1 .5 1 1.3 1 0 1-.3 1-1.7 1 2.3 1 0 1-1.6 1 .4 1-.8 1 2.2 1-1.4 1 .2 1 .3 1 0 1-.9 1 .8 1 .8 1-1.1 1 .8 1-1.7 1 0 1 1.7 1-1.9 1-.1 1 2 1-.1 1-1.5 1 .2 1 1.8 1-1.2 1-.2 1 1 1 0 1-1.4 1-.3 1 1 1 1.2 1-1.6 1-.2 1 .6 1-.1 1-.3 1 .4 1 .3 1-.7 1-.4 1-.2 1 1.9 1-.4 1-1.2 1 1.6 1-1.9 1-.1 1 .7 1 3.2 1 7.4 1 .3 1 .3 1 .2 1-1.4 1 .2 1-.5 1-.3 1 2.1 1-1.7 1-.5 1 1.9 1-1.1 1 .8 1 2.8 1-3.5 1 .2 1 1.1 1-1 1 .3 1-1.4 1 .3 1 .1 1-.2 1 .6 1 .7 1 .3 1 .1 1-1.2 1 1.4 1-1 1-.8 1 .2 1 .2 1 1.3 1-2.3 1 1.5 1-5.7 1-1.7 1 .5 1-1.5 1 .3 1 4.1 1 4.6 1-.7 1 .9 1-2 1 .1 1 .5 1-.7 1 .7 1-.4 1 1.4 1-.6 1-1.2 1 1.9 1-1.8 1 2.1 1-.7 1 .1 1-.5 1 .8 1-1.3 1 .4 1-.1 1-.4 1-.6 1 .3 1 .8 1-.8 1 1.8 1-.2 1 .2 1-1.3 1 1.2 1 .2 1-.6 1 .7 1-1.9 1 .7 1-.3 1 0 1 1.5 1-.8 1-1.1 1 .1 1 1.7 1-1 1 1.2 1-.2 1-.9 1-.6 1 .2 1 1.1 1-.5 1 0 1-.8 1-.5 1 .9 1 .7 1-.8 1 1.5 1-.4 1-.8 1-1.2 1 2.5 1-1.1 1-1.2 1 .7 1-1 1 2.4 1-1.1 1 .6 1-.1 1-1.3 1 1 1-.3 1-2.5 1 .1 1-3.1 1-1.2 1 1.2 1-.5 1 1.2 1 .4 1 .2 1-1.5 1 0 1 1.2 1 .1 1-.7 1 1.4 1-1.7 1-1 1-1.2 1 .3 1-.5 1 .3 1-.3 1-.1 1-1 1 .3 1 .1 1-.9 1 0 1 .6 1 .1 1-1.8 1 1.8 1-2.3 1 .3 1-.1 1-.3 1-.5 1 1.5 1-1.6 1-.2 1 2.1 1-1.5 1 .3 1 2.9 1 5.9 1 1.9 1 .7 1-.8 1 .4 1-.4 1 1.4 1 .4 1 0 1-1.7 1 .9 1-.7 1 .6 1-1.7 1 2.3 1-.1 1 0 1 0 1-1.7 1 .1 1 1.9 1-2.1 1 1.6 1-2 1 .5 1 1.8 1-2 1 2.2 1-.1 1 0 1-.6 1 .3 1 .1 1 .2 1-.1 1-1.4 1-.9 1 2.3 1-1 1-1 1 2.1 1-.7 1-.5 1 .7 1-1 1-7.9 1-.3 1-1.2 1 .3 1 .3 1-.7 1 1.3 1-.4 1 .6 1 .2 1-2.4 1 1.9 1 3.3 1 6.3 1 .2 1-1.9 1 1.8 1 0 1-1.3 1-.5 1-.2 1 .1 1-.3 1 1.5 1-1 1 .7 1-1.2 1 1.1 1-.7 1 .9 1-1.3 1 1.1 1-.5 1-.6 1 1.2 1 1.2 1-1.3 1 .2 1-.2 1 1 1-2 1 .6 1 .3 1-.1 1 1.4 1-.1 1-2.1 1 .5 1 1.6 1-.5 1-.3 1 .9 1-1.9 1 1.1 1 .9 1-.2 1-1.7 1-.5 1 .7 1 .8 1 .5 1 0 1-1 1 .1 1 .2 1 .5 1-1.8 1 1 1 3 1-3.2 1 .7 1 .9 1-1.3 1 1.1 1-1.5 1 1.4 1-.6 1 .3 1 0 1-1.8 1 1.4 1-.7 1-.4 1 .8 1 .7 1-.9 1-1 1 1.9 1-1.9 1 .9 1-.7 1 1.7 1-.4 1-.6 1 0 1 1.5 1-.6 1-4.7 1-6.5 1 2.2 1-1.2 1 .3 1-.3 1 .5 1-1.4 1 1 1-.7 1 4.9 1 4.9 1-.2 1-.1 1 1.7 1-.9 1-.4 1-.6 1 .8 1-.8 1 .2 1-.3 1 0 1 1.1 1 .4 1 .3 1-.3 1 .1 1-1.3 1 1.6 1-2 1 1.2 1 .7 1 .1 1-1.4 1 .5 1 1.1 1-.9 1 1.6 1-1.6 1 .9 1-.9 1-.7 1 .1 1 .9 1-1.3 1 .8 1 1.3 1-2.2 1 2.2 1-1.3 1 .5 1-1.5 1 1.2 1 .8 1-.5 1-1.6 1 .5 1 .1 1 0 1-.1 1 1.1 1-1.2 1 1.3 1-.2 1-.1 1-.5 1-.8 1 2.3 1-.6 1-.9 1 .2 1-1.1 1 .5 1 1.5 1-1.1 1-.9 1 .3 1 .9 1-1.1 1 1.8 1 .5 1-.9 1 .7 1-1 1-.3 1-.7 1 1.1 1-.9 1 .5 1 0 1 .7 1 1 1-2.6 1 1.9 1 .4 1-2.1 1 2.3 1-.6 1-1.9 1 .8 1-.6 1-.1 1 1.1 1 1.4 1-.8 1-.3 1 .4 1-.2 1-.3 1 .9 1-1.3 1 .6 1 0 1-1.4 1 1.2 1-.4 1 1.5 1-2 1 .4 1 1.2 1 .3 1-2.3 1 1.7 1-.1 1 1.1 1-2.3 1 2 1-2.3 1 1.9 1-.7 1 .3 1-1.3 1 .9 1-1 1 2.3 1-1.8 1 1.8 1-1 1-1.2 1 .6 1-.5 1 .9 1-1 1 .7 1 1.4 1-2 1 .1 1 .5 1 .3 1-.2 1-1 1 2.2 1-.5 1-.6 1-.4 1 .3 1-.2 1 .7 1-.4 1-1 1 .1 1 .8 1-.4 1-.1 1-.5 1 .6 1 .8 1-.1 1-.7 1 1 1-1 1-.3 1-.4 1 1.1 1 1.4 1-.8 1 .8 1-.3 1-1 1 .7 1-1.1 1-.8 1 0 1 2.3 1-2.3 1-.3 1 1.2 1-.8 1 .4 1-.5 1 2.4 1 .1 1-1.7 1-.8 1 .1 1 .5 1-.5 1 0 1 2.1 1-2 1 .2 1-.3 1 1 1 .2 1 1 1-.9 1-.8 1-.1 1 2 1-2.2 1 .8 1-.2 1-.1 1 .5 1 .3 1 .8 1-2 1 1.5 1 .4 1-1 1 .1 1-1.4 1 2.3 1-1.1 1-1.1 1-1.2 1 3.2 1-.4 1 .7 1-1.5 1 0 1 .1 1 1 1-.4 1 .1 1-1.2 1-.2 1 1.5 1-.6 1 .5 1-.6 1 .3 1-1 1 .9 1-.5 1 1.1 1-.6 1-.4 1 .4 1-1.2 1 0 1 1 1-.2 1 .4 1 1 1-2.1 1 2.2 1-.2 1 0 1-1.4 1 1.3 1-.5 1 .2 1 .7 1-2.2 1 .7 1 1.4 1-.6 1-.4 1 .8 1-1 1-.9 1 1.2 1 .3 1 .6 1-1.4 1-.4 1 .2 1-.7 1 .2 1 0 1 0 1 1.3 1 .2 1 0 1-.6 1-.9 1 1 1-1.1 1 .5 1 .3 1-.1 1 .2 1 .8 1-.7 1 .4 1-1.3 1 1.9 1-1.8 1 .5 1 .4 1 .2 1-.6 1 1.5 1-.6 1-.5 1 .4 1 .5 1-2 1 .3 1-.2 1 1 1 .9 1 .1 1-1.9 1 1.2 1-.6 1-.3 1 1.3 1-1.3 1-1.4 1-9.9 1-.5 1 .7 1-2.2 1 1.6 1 0 1 .1 1 .9 1 2.6 1 6.5 1-3.6 1-1.8 1-2.5 1-.3 1 .7 1-.6 1-.3 1 1.5 1 .5 1-.4 1-.1 1-.4 1 1.5 1-1.5 1 4 1 1.3 1-1.6 1-1.8 1-.8 1-2.4 1 .4 1 1.2 1-.1 1-1.3 1 .7 1 .5 1 1.9 1-1.6 1 0 1-1 1 1.7 1 0 1-1.2 1 .5 1-1.7 1 .3 1 9.4 1 2.3 1-2 1 1.4 1-1.4 1 1.9 1-.3 1-1.7 1 .5 1 .4 1 1.1 1 .3 1-.3 1 .3 1-1.6 1-.6 1 1.7 1-2 1 2.1 1 .6 1-1 1-.5 1 1.3 1-.2 1-1.5 1-.7 1 .6 1 1.4 1-.3 1-1.3 1-.1 1 .3 1 1.3 1 .4 1-.7 1-1.2 1 .3 1 .3 1 .6 1-.8 1 1.3 1-1.1 1-.7 1 .2 1 1.7 1-1.5 1 .7 1-1.3 1 .2 1 .5 1 1.2 1-.4 1-.6 1-.6 1 1.3 1 .4 1-1.5 1-.5 1 .8 1-.4 1 .7 1 .1 1 .4 1-.3 1-.4 1 1.1 1-2.1 1 0 1 .9 1 .1 1 .6 1-.7 1-.1 1 1.5 1 1.1 1-3.5 1 .9 1-.3 1 .7 1 1.1 1-1.9 1-.3 1 1.8 1 .3 1-.9 1 .4 1-1 1 .7 1-1 1 1.2 1 .7 1 0 1-.2 1-2.2 1 2.1 1-1.9 1 .2 1 .4 1-.1 1 .4 1-1.1 1 2.3 1-2.3 1 .4 1 1.8 1-2.1 1 .7 1-.6 1 .9 1-1.1 1 .2 1 2 1-1.4 1 .6 1 .1 1 .6 1-.7 1-1.4 1 1 1 1.1 1-2 1 .3 1-.2 1 1.4 1 .5 1-1.9 1 .9 1-.8 1 1.6 1-1 1-.3 1 .3 1-.7 1 3.1 1-1.2 1-1.9 1-3.1 1-8.9 1-2.3 1 2.2 1 2.3 1-.8 1 1 1 .3 1-1.4 1 .8 1-.2 1-.6 1 .1 1-1 1 2.1 1-1.1 1 2.1 1 3.7 1 3.6 1 1.5 1 2 1-1.5 1 .7 1 .3 1-1.2 1 0 1 1.4 1-1.7 1-.2 1-.1 1 2.1 1 0 1-.8 1-2.5 1 2.3 1-.9 1-2 1 4 1-1.8 1 .4 1-.5 1 .5 1 0 1-.9 1 1.2 1 1.1 1-2 1 2 1-1 1-.7 1-.3 1 1.5 1 .2 1-.1 1 .2 1-1.5 1 1.1 1 .6 1 .1 1-1.3 1 1.2 1-.2 1-1.3 1-.7 1 .8 1-.6 1-.4 1 .3 1 .3 1-.5 1-.2 1 .8 1 1.6 1-.2 1 0 1-1.2 1 0 1 1.6 1-1.5 1 .8 1 .6 1-2.3 1 0 1 .6 1 .2 1 .2 1 .2 1-1.3 1 .3 1 2.1 1-1.3 1-1.1 1 .4 1 1.6 1 .2 1-.8 1 .5 1-1.1 1 .2 1 1.5 1-.8 1 .8 1-.9 1-.2 1-.2 1 1.2 1-.9 1-.8 1-.8 1 .6 1-.5 1 1.4 1 1 1-1.4 1 1.3 1-1.7 1-.6 1 1.3 1-1.1 1 .6 1 1.3 1 0 1-1.5 1-.1 1-.4 1 .2 1 .3 1 .7 1-.3 1 1.1 1-.6 1-.7 1 .5 1-.9 1 .3 1 1.2 1-1.6 1 1.1 1-.4 1 1.3 1-1.6 1-4.6 1-8.5 1 0 1 3 1-.2 1 1 1-2 1 .7 1 1.5 1 .2 1 7.3 1 2.8 1-1.4 1 .3 1-.6 1 0 1 0 1 1.3 1-1.4 1-.1 1 .6 1 .2 1 .3 1 .9 1-.5 1-1.4 1 .7 1-.8 1 1.8 1 .3 1-1.7 1 1 1-1.4 1 .9 1 1.1 1 1 1-.9 1-2.1 1 2.5 1-1.8 1 .5 1 .8 1-.5 1-1.3 1 .8 1 1.3 1-1.2 1-.3 1 1.2 1 2.8 1-4.1 1 1.6 1-1.2 1 2.2 1-3.2 1 .9 1 .8 1 .3 1-1.4 1 .3 1-1 1 2.5 1-.1 1-2 1 1.6 1-1.4 1 1.1 1 .4 1 .2 1-.9 1 0 1-1.4 1 2.2 1-1.3 1-1.9 1-3.1 1 4.4 1 .6 1 .5 1 .8 1-1.7 1 .9 1-1 1 0 1 .8 1 .4 1-1.7 1 1.2 1 .4 1-1.4 1 .1 1 0 1 .9 1 .6 1-1.7 1 .5 1 .4 1 0 1 1 1-1 1 0 1 .1 1-1.3 1 2.3 1-.9 1-.9 1 .4 1 .3 1-.1 1-.6 1 2.1 1-.8 1-.3 1-.8 1 .1 1 .1 1-.2 1 .4 1-.4 1 0 1 .2 1-.4 1 .4 1 .3 1 .4 1-.8 1-.1 1 .3V1364.8Z" fill="#9bc653" fill-opacity="0.15" stroke="#9bc653" stroke-width="0.8" stroke-opacity="1" stroke-linejoin="round" clip-path="url(#cw)"/>
<path d="M47.2 1364.8V1238.6l1 .7 1-.7 1 .6 1 .2 1-.4 1-.4 1-.2 1 1.2 1-.9 1-.1 1 .9 1-1 1 .8 1 0 1-.5 1 .6 1-1.3 1 1.4 1-1.1 1 .2 1 .7 1 0 1-.9 1 .4 1 .5 1-.7 1-.3 1 2.5 1-1.8 1 .4 1-.9 1-.5 1 1.7 1-.7 1 .8 1-.3 1-1.4 1 1.3 1 .3 1-1.2 1 .5 1-.9 1-.1 1 .2 1 .6 1-.2 1 .1 1-.1 1-.2 1 1.3 1-.9 1 .6 1 .3 1-.2 1-.6 1-.2 1 1 1 0 1-1.2 1-.1 1-.5 1 1.2 1-1.3 1 0 1 1 1-.8 1 .1 1 1.4 1 .1 1 0 1-1.8 1 0 1 .9 1-.1 1 0 1 .2 1 .4 1-.7 1 1 1-1.6 1 1.4 1-1.2 1 .5 1-.1 1 .1 1 1.9 1-1.9 1-.1 1 .2 1 .6 1-.5 1-.9 1 .1 1 .5 1 1.3 1-1.5 1-.1 1 .6 1-.1 1-.6 1 .5 1-.7 1 .4 1 1.4 1-1.8 1 1.1 1-.1 1-.6 1 1 1-.1 1-.8 1 .9 1 0 1-.3 1 .7 1-.9 1-.7 1-.1 1 .9 1 .8 1-.2 1 .6 1-.6 1-.4 1-.7 1 .9 1-1.1 1 .9 1 .3 1-1.5 1 .1 1 .2 1-.2 1 .8 1 .4 1-1.1 1 .1 1 .5 1 .2 1 0 1-.1 1 0 1-.2 1 .4 1-.3 1-.8 1 .4 1 .8 1 .3 1-.9 1 .3 1-.7 1 1.1 1-.1 1-1.2 1 1.2 1-1 1 .4 1 .4 1 .5 1-1 1-.1 1 1.5 1-.7 1 .6 1-.7 1 .6 1-1 1 1.1 1-.8 1 1.3 1-.6 1-.9 1 .2 1 .4 1-1.1 1-.1 1 .8 1-.6 1 .7 1-1 1 0 1 1.5 1-.4 1-1 1 1.6 1 0 1-.3 1-1.5 1 1.4 1-1.1 1 1.3 1-.9 1 .8 1-.4 1 0 1 .4 1-1.4 1 .8 1-.6 1 .5 1 1 1-1.3 1-.2 1 .9 1-.9 1 .2 1 0 1 1.1 1-1 1-.1 1 .9 1-.1 1-.5 1-.7 1 .8 1-.5 1 .6 1 .7 1-.7 1 .5 1-1 1 1.2 1-.1 1-.2 1 .2 1-.7 1-.4 1-.4 1 .1 1 1.3 1 .2 1-.1 1-.2 1-.7 1 1 1-.3 1 .4 1 .6 1-.8 1-1 1 .5 1-.8 1 .2 1 1.1 1-.4 1-.2 1-.2 1-.6 1 .6 1 .9 1-1.7 1-.1 1 .3 1 1 1 .2 1 .2 1-.1 1-1.6 1 1 1 .5 1-.6 1 .2 1-.9 1 .2 1-.3 1 .9 1 .2 1-.3 1-.4 1-.4 1 .5 1-.4 1 1.1 1-1.1 1 1.3 1-.4 1 .8 1-.9 1-.8 1 1.1 1-.1 1-.5 1 .8 1 .3 1-1.6 1 1.7 1-.4 1 .4 1-1.8 1-.1 1 1.5 1-.6 1-.2 1-.6 1 0 1 1.7 1 .2 1 0 1-1.1 1 .8 1-1.2 1 1.2 1-.5 1 .1 1 .2 1 .1 1-.3 1-1.2 1 .7 1 .1 1-.9 1 1.2 1-.8 1 .5 1 .9 1-.3 1 .2 1-.8 1-.5 1-.2 1 .7 1 0 1 .5 1 .6 1-1.6 1 .1 1 1.4 1-1.5 1 1.5 1-1 1-.5 1 1.5 1-1.3 1 .8 1-.2 1 .5 1-1.4 1 .1 1 .2 1-.1 1 .1 1 1 1-1.1 1 .8 1 0 1-1.1 1 1.5 1-1.1 1-.2 1 1 1-.1 1-.2 1 0 1-.6 1 1.3 1-1 1-.3 1 .7 1 .1 1 .6 1-1.8 1 1.7 1-1.7 1 1.3 1-1.2 1 1.7 1 0 1-1.2 1 .9 1-1.2 1-.4 1 1.1 1-.1 1 1 1-.4 1-1.5 1 .1 1 .3 1 .1 1 .3 1 .1 1-.8 1 1.8 1-1.8 1 1 1-.8 1 .9 1-1 1 1.2 1-.9 1 1 1-1.1 1 .1 1 1.2 1-.4 1-1.3 1 1.1 1-.6 1-.2 1 1.1 1-1.1 1 .9 1 .2 1-.8 1-.6 1 .4 1 .2 1 .3 1-.4 1-.2 1 .1 1 1.4 1-.6 1-.2 1-.8 1 1.4 1-1.6 1 1.3 1 .5 1 0 1 0 1 .7 1-2 1-.4 1 .9 1 .9 1-1 1 .4 1 .3 1 0 1-.9 1-.5 1 1.4 1 .2 1-1.7 1 .9 1 .4 1-.4 1-.8 1-.2 1 .5 1 .3 1-.6 1 1 1-.7 1 1.4 1 0 1-1.5 1 .3 1 0 1-.1 1-1 1 2.2 1-1.1 1-.2 1 .1 1 1.2 1-.9 1 .2 1-.3 1 .7 1 .1 1-.2 1-1.1 1 .8 1-.8 1 .2 1 1.2 1-.3 1-.2 1 .2 1 .2 1 .2 1-.4 1-1 1 1.2 1-.1 1 0 1 .3 1-.4 1-1.1 1 1.4 1-1.2 1 .4 1-.1 1 .8 1-.1 1-1.5 1 1.5 1-1.3 1-.1 1 .2 1 1.2 1-.2 1 .6 1-.9 1-.7 1 .4 1-.1 1 .1 1 .6 1-1.1 1-.3 1 1.8 1-.4 1-.2 1 .4 1-.2 1-1.2 1-.1 1 1.1 1 .1 1 .4 1-.8 1-.1 1-.2 1 1.2 1-1.7 1 1.4 1-.5 1 .5 1 .5 1-.6 1-.4 1-.8 1-.6 1 .9 1 .7 1-.4 1 1 1-1.1 1 .4 1-1 1 .1 1 .7 1-.1 1 .2 1-.4 1 .9 1 0 1-.7 1 .7 1 0 1-.7 1-.3 1 1.3 1-.4 1-.6 1 .9 1 0 1-.5 1 .2 1 .5 1-1.1 1 .2 1 .4 1-.1 1-1.1 1 1.6 1-1.2 1 .9 1-1.3 1 1.5 1-.5 1 0 1-.5 1 1.7 1-1.7 1 1 1-.8 1-.8 1 .8 1-.2 1 1.1 1-.1 1 0 1-1 1 .6 1-1.1 1 1.6 1-1.2 1 .7 1-.1 1-.1 1-.4 1 .4 1 .2 1-.3 1 1 1-1.2 1 .9 1 .6 1-1.8 1 1.4 1-.6 1 .1 1 .3 1 0 1-.9 1 .1 1-.8 1 .1 1 2.8 1-1.8 1-.2 1-.4 1 1.4 1-.2 1-1.5 1 0 1 1.3 1-1.1 1-.4 1 1.1 1-1 1 1.1 1-.7 1-.4 1 .5 1 .8 1-.9 1 1.3 1-1 1 .5 1 .4 1-.8 1-.4 1 .7 1 .6 1-1.1 1 .7 1-1.1 1 1.3 1 .5 1-1.5 1-.5 1 .4 1 .2 1-.9 1 1.7 1-.8 1 1.1 1-1.8 1 1.7 1-1.3 1 1.4 1-.4 1-1.4 1 .7 1 .7 1-.8 1 .1 1-.5 1 .6 1 .4 1-.4 1-.4 1-.2 1-.2 1 .4 1 .9 1 .6 1-.5 1-.4 1-.3 1-.7 1 1.7 1-.9 1 .6 1-.7 1 1.1 1-.2 1-1.2 1 .3 1-.1 1 .6 1-1.1 1 1.6 1 0 1-.6 1-.8 1 .2 1 .2 1 .6 1 .4 1-1.5 1 1 1-1.4 1 1.8 1-1.3 1-.3 1 .8 1-.3 1 .3 1 .5 1 .1 1-.5 1-.4 1-.5 1 1.9 1-.8 1-.9 1 .1 1 1.4 1-.9 1 1 1-.2 1 .9 1-.6 1-.7 1 .5 1 .2 1-1.6 1-.4 1 .1 1 .1 1 .2 1 .3 1 .7 1 .3 1-1.4 1 1.6 1-1.7 1 1.3 1-.7 1-.7 1 0 1 1.8 1-1 1 .1 1-.2 1 .8 1-1 1 .3 1 .3 1 .7 1-1.4 1 .7 1-.7 1 .4 1-.3 1-.2 1 1 1 .2 1 0 1 .1 1-.9 1-.3 1 1.3 1-.7 1-.4 1 1.1 1-1.3 1 0 1-.5 1 .7 1 .5 1-.4 1 .3 1-.7 1 .9 1-.2 1-.7 1 1 1-.6 1-.5 1-.3 1 1.4 1 .2 1-.4 1-.3 1-.4 1 1.1 1-1.5 1 .9 1 .2 1-.5 1 1.2 1-1.6 1 .1 1 1 1-.2 1 .3 1 .2 1-.6 1 .1 1-.6 1 .1 1 0 1 0 1 .5 1 .3 1-1.4 1 .9 1 .7 1-1.3 1-.5 1 1.6 1 0 1-1.2 1 .6 1-.2 1-.5 1 .7 1-.3 1-.2 1 .4 1-.1 1 1.3 1-1.3 1-.7 1 .1 1 1.2 1 .2 1-.5 1-.6 1 .7 1 .9 1-.6 1-.5 1-.2 1-.1 1 .6 1 .5 1 0 1-1 1 0 1-.2 1 1.5 1-1.5 1 .4 1 .4 1-1.1 1 .6 1 .1 1-.2 1-.5 1 .1 1-.1 1 1 1-1 1 .6 1 .4 1-.1 1 .5 1-.5 1 .7 1-1.7 1 .1 1 0 1 .6 1-.8 1 1.2 1-.5 1 .3 1 .8 1 .2 1-.7 1-1.3 1 1.4 1-.9 1 .9 1-.2 1-.9 1 1.5 1-1.6 1 .2 1 1.1 1-.2 1-.8 1 .1 1 .3 1 .7 1 .3 1-1.4 1 1.3 1 0 1 .1 1-1.5 1 1.4 1 .1 1-.7 1 .7 1-.8 1-.6 1-.3 1 1.4 1 0 1-1 1-.4 1 1.4 1 0 1-.4 1-.9 1-.2 1 1.4 1-1 1-.1 1 1.1 1-1.1 1 .8 1-.4 1 .4 1 .7 1-.6 1 .4 1-.3 1-1.1 1 1.6 1-.4 1 0 1-.9 1-.5 1 1.8 1-.9 1 .2 1-.4 1 .4 1-.8 1 .7 1-.7 1 1.3 1-.1 1-1.5 1 1.3 1 .3 1-.8 1 1 1-.7 1-.2 1-.2 1 .7 1-.5 1 .7 1 0 1-1 1 .2 1-.7 1 .2 1 .3 1 0 1-.6 1-.1 1 1.2 1 .6 1-1.1 1 .3 1 .1 1 .6 1 0 1-1 1 1.1 1-1.7 1 1.3 1-.3 1-.2 1-.7 1 .3 1 .7 1-.1 1 0 1 .7 1-.8 1-.4 1-.5 1 1.3 1 .1 1-1.2 1 .7 1 .5 1-.8 1 .3 1 .8 1-.4 1-1.3 1-.9 1 1.4 1 .8 1 .6 1-.4 1-.3 1 .5 1-.6 1-.9 1 .5 1-.1 1 .2 1 .4 1-1.3 1 0 1 .9 1 .2 1-.2 1 .2 1-.9 1 1.4 1-.1 1 .4 1-.2 1-1.3 1 0 1 .7 1-.2 1-.2 1-.3 1 1.5 1-1.3 1 .2 1 .1 1 0 1-.2 1 .1 1 .1 1 .4 1-.6 1-.4 1 1.3 1-1.1 1 .3 1 .9 1 .1 1-.7 1 .4 1 .5 1-.7 1-1.2 1 .8 1-.9 1 .9 1 1.1 1-1.2 1-.2 1-.4 1 .4 1 1 1 .1 1-1.7 1 .5 1 .7 1-.9 1 1.3 1-1.1 1 .4 1-.3 1-.4 1 .6 1 .2 1 .2 1 .1 1-.7 1 .8 1-.6 1 .7 1-1.2 1 .4 1-.3 1 .7 1 0 1 .8 1-1.2 1-.1 1 .6 1-.2 1-.7 1-.1 1-.1 1 1.4 1-.2 1-.7 1 .8 1 .3 1-1.6 1 .2 1-.2 1 .4 1-.2 1 1 1-1 1 1.4 1 0 1-.9 1-.3 1 1.3 1-1.1 1 .4 1-.7 1 1.3 1-.1 1-.2 1 .2 1-1.5 1 1.7 1 0 1-1.5 1 1.1 1-.6 1 .5 1-1.2 1 1.9 1-1.8 1 1.3 1-1.5 1 1.4 1-.1 1 .7 1-.3 1-.6 1-.9 1-.1 1 1.5 1-.3 1-.4 1 .3 1-.6 1 1.1 1 .2 1-1.9 1 1.4 1 .1 1 .3 1-.1 1-1.4 1 .2 1 .7 1 .5 1-.5 1-1.1 1 .3 1 .3 1 .9 1-.3 1-1.1 1 0 1 1.1 1-.3 1 .2 1 .3 1-1.2 1 1.3 1-.8 1-.7 1 1.5 1-.9 1 .7 1-.2 1 .3 1-.4 1 0 1-.9 1-.1 1 .4 1-.3 1 1.4 1-.9 1 0 1 .9 1-.6 1-.3 1-.6 1 .1 1 1.2 1-1 1-.4 1 1.5 1-1.1 1 .7 1-.6 1-.3 1 1.7 1-.6 1 .4 1-.6 1-.8 1 .6 1 1 1-1.8 1 .9 1-.9 1-.1 1 2 1-1.6 1 .8 1 2.1 1-1.8 1-1 1-.4 1 .7 1 .5 1 .6 1-.1 1-.2 1-1.3 1 1.3 1-.3 1 .6 1-1.1 1-.1 1 .2 1 .1 1-.5 1 .5 1-.9 1 1.1 1 .7 1-1.3 1-.1 1 .3 1 1 1-.6 1 .6 1-.4 1-1 1 1.4 1-1.1 1-.4 1 .8 1-.1 1-.7 1 .2 1 1.5 1-1.6 1 1.4 1-1.5 1 1.4 1-1.7 1 2 1-.9 1-.5 1 1.1 1-1.5 1 1.3 1 .7 1-2.1 1 1.4 1 0 1 .5 1-1.2 1 1.2 1-1.1 1-.8 1 1.8 1-1 1 0 1-.4 1-.5 1 1.2 1-1.1 1 .7 1 .2 1 .5 1-.9 1 .7 1-1.2 1 .4 1 1.1 1-.1 1 .3 1-1.3 1 .6 1-1 1 1.8 1-.9 1 .7 1-1.2 1-.4 1 .3 1 .8 1 .6 1-1.2 1 1.2 1-1.4 1-.2 1 1 1-1.2 1 .8 1 .8 1-.7 1-.8 1 1.3 1-.1 1 .2 1 .1 1-1.2 1 1 1-.9 1 .9 1 .6 1-.9 1 .6 1-1 1 .7 1-.9 1 .3 1-.5 1 1.7 1-1 1-.6 1 1 1 .3 1-.4 1-.1 1 .3 1-.7 1 .7 1-.8 1 .9 1-1.4 1 .5 1-.3 1 1.1 1-1.3 1 1.8 1-1.6 1-.1 1 0 1 .8 1-.1 1 .9 1-.3 1-1.5 1 1 1-.1 1-.3 1-.5 1 1.1 1-.6 1 .3 1 0 1-.7 1-.2 1 1.2 1-.5 1-.7 1-.1 1 1.2 1-1.1 1 1.6 1-1.5 1 .8 1 .3 1 .2 1 .4 1-.2 1-1.1 1-.5 1 0 1 .1 1 0 1 .8 1 .1 1-.5 1 1.3 1-1.4 1 1 1-1 1-.9 1 .6 1 .8 1 .3 1 .4 1-1.6 1 1.7 1 .2 1-.1 1-.4 1-1.1 1 1.2 1-.3 1-.8 1 1.3 1-1.4 1 .4 1 .3 1-.7 1-.2 1 1.2 1-.5 1 .3 1-.7 1 .9 1 0 1-.5 1-.7 1 .1 1 1 1 .6 1-1.8 1 .4 1-.1 1 0 1 1.2 1-.3 1 .1 1-.9 1 .1 1 1.2 1-1.7 1 .9 1 0 1-.5 1 1.1 1-1.2 1 .7 1-.7 1 1.3 1 .1 1-.7 1-.5 1-.5 1 1.6 1-.8 1 1.1 1-1.1 1-.3 1-.1 1 .6 1-.3 1 .4 1-.1 1 .1 1-.9 1-.1 1-.1 1 1.2 1-1 1 .4 1-.3 1 1 1-.3 1 .8 1-.1 1-1.7 1 1.1 1 .5 1-.7 1 .9 1-1.3 1-1.2 1 2.5 1-.7 1-.1 1-.7 1 .1 1 .3 1 .6 1-.8 1-.5 1 1.9 1-1.8 1 .4 1 .4 1-1 1 .1 1 1.7 1 .2 1-1.5 1-.3 1 0 1 1.6 1-.4 1-.5 1 .5 1-1 1 1.3 1-1.3 1 .8 1-.4 1-.2 1-.3 1 1.1 1 0 1-1.4 1 .7 1 .4 1 .1 1 .2 1-.1 1 .4 1 .2 1-.2 1-1.1 1-.2 1-.3 1 .3 1-.2 1 .7 1-.5 1 .3 1-2.1 1 2.4 1 .8 1-.6 1 .4 1-.3 1-.3 1-1 1 2 1-.5 1-1.1 1 1.5 1-.4 1-.2 1 .5 1-1.2 1 .9 1-.8 1 .3 1 .1 1 .6 1-1 1 1 1-1.7 1 .6 1-.6 1 .1 1 1 1-1.1 1 1 1 .2 1 .7 1-1.8 1 .7 1 1.2 1-1.2 1-.1 1 .6 1-.9 1 1 1 .1 1-.5 1 .2 1-.9 1 1.6 1-1.4 1 .2 1 .1 1 1 1-1.7 1 1.4 1 .1 1-.2 1-1.1 1 1.4 1-.2 1 .3 1-.5 1-.5 1 .5 1 .4 1-.7 1-.4 1 .3 1-.4 1-.1 1 1.3 1-1 1 .7 1 .1 1 .3 1-.2 1-.5 1 .6 1-.4 1-.4 1 .5 1-1.3 1 0 1 0 1-.1 1 .1 1 1.3 1-1.2 1 1.7 1-1 1 .1 1 .2 1-.1 1-.1 1-.1 1-.2 1-.6 1 .3 1 .6 1 .7 1-1.5 1 .5 1 1 1 .2 1-1.8 1 .5 1 .1 1-.1 1 .7 1 .3 1-1 1 1.2 1-.7 1-.8 1 .3 1 .2 1-.3 1-.3 1 1.2 1-.1 1-.1 1-.5 1-.5 1 1.5 1-1.3 1-.2 1 1.8 1-.7 1-.2 1-.5 1-.3 1-.2 1 1.7 1-1.5 1 .5 1 .8 1-1.6 1 .5 1 .9 1-1.1 1 .5 1-.4 1-.3 1 .2 1 .4 1 .4 1 .7 1 .2 1-1.2 1 .6 1-1.2V1364.8Z" fill="#86c762" fill-opacity="0.15" stroke="#86c762" stroke-width="0.8" stroke-opacity="1" stroke-linejoin="round" clip-path="url(#cw)"/>
<path d="M47.2 1364.8V1245.7l1-.3 1-.5 1 1.2 1-.6 1-.3 1 .9 1 .3 1-.9 1 .1 1 .2 1 .4 1-.3 1-.4 1-.3 1 .4 1-.5 1 0 1-.2 1 1.1 1-.8 1 .2 1-.4 1 1 1-.6 1 .6 1 0 1-1.6 1 1.4 1-1.4 1 .7 1-.5 1-.3 1 1.8 1 0 1-1.3 1 .5 1-.4 1 0 1 1.1 1-1.2 1 1.1 1-1.1 1 .6 1-.4 1 1.3 1-1.1 1 .2 1 .1 1-1.3 1 2 1-.8 1 .6 1-.2 1-.7 1 .8 1 .3 1-.3 1 .4 1-1.6 1-.4 1 1.7 1 .4 1-.3 1 .2 1-.1 1-1.8 1 1.7 1-1 1 .9 1-1.3 1 .4 1 .4 1-.5 1 0 1 1.2 1-.3 1 .4 1-2 1 .7 1 1.4 1 0 1-.1 1-1.6 1 .5 1 1.2 1-1.4 1 .1 1 .8 1 .4 1-1.5 1 .3 1-.6 1 1.2 1 .1 1-.3 1 .5 1-.7 1 1.1 1-.7 1-1.3 1 .7 1-.7 1 .8 1-.8 1 .2 1 1.2 1 .2 1-.9 1 1.1 1-1.1 1-.2 1 .5 1 .7 1-1.6 1 1.9 1-2 1 .5 1-.2 1 1.6 1-1 1 .1 1 .5 1 .5 1-1.6 1 .5 1 .5 1-.4 1 .9 1-.5 1 0 1-1.3 1 .5 1-.6 1 0 1 .9 1 1 1 .1 1 0 1-2 1 1.9 1 .1 1-1.6 1 .4 1 .1 1-.5 1-.1 1-.1 1 1.4 1-.7 1 .8 1 .3 1-.8 1-.1 1-.5 1-.6 1 0 1 2.1 1-1.7 1-.4 1 0 1 1.5 1 0 1 .3 1-.9 1 1 1 .2 1-1.1 1-1.1 1 2.1 1-1.2 1 .3 1-.4 1 .9 1-.3 1-1.2 1 .3 1 1.1 1-.8 1 1.1 1-1.7 1 1.7 1-1.4 1 .5 1 .4 1-.7 1 1.2 1 0 1 0 1-1.5 1 .6 1-.9 1 .6 1 .8 1-.1 1-.1 1-.2 1 .2 1-1.3 1 .1 1 1.6 1-.7 1-.6 1 .5 1 .3 1 .3 1 .2 1-1.6 1 1.2 1-.4 1-.1 1 1.1 1-.6 1 .3 1-.5 1 .5 1-.7 1 .3 1-.7 1-.3 1-.2 1 .6 1 .4 1-.8 1 1.8 1-.7 1-.7 1 1.2 1-1.3 1 1 1 .3 1 0 1-.2 1-.3 1 .9 1-2.1 1 .1 1 .5 1 0 1 .6 1 .1 1 .6 1-1.8 1 .8 1 .9 1-.8 1-.8 1 .7 1-.7 1-.3 1 .7 1-.4 1 .6 1 1.1 1-.6 1 0 1 .8 1-.9 1-.2 1 .6 1-.8 1-.3 1 .5 1 .1 1-.5 1 1.1 1-.9 1 .7 1-1.4 1 .8 1-.3 1-.2 1 .3 1 .6 1-.5 1 1.2 1-.6 1-1 1 0 1 1.3 1-1.2 1 1.4 1-1.3 1-.4 1 .8 1 .3 1 .3 1-1.3 1 .9 1 .2 1-1.1 1 .4 1 1.2 1 .2 1-2 1 1.8 1-1.4 1 .8 1 .4 1-.1 1 .2 1-.3 1 .3 1-.4 1-.5 1 1 1-.5 1-.8 1-.6 1 1.8 1 .3 1-.5 1 0 1 .3 1 .2 1-.8 1 .7 1-.9 1-.1 1 .9 1-.1 1 .3 1-1.3 1 .9 1 .4 1-.4 1-1.3 1 .1 1 1.3 1-.7 1-.8 1 1.7 1-1.7 1-.2 1 .7 1-.1 1 1.3 1-1.3 1 .6 1 .7 1-1.9 1 .3 1 1.2 1 .4 1-1.2 1 1.2 1-.6 1 0 1-1.1 1 1.4 1-.7 1-.7 1 0 1 .2 1 .6 1-.9 1 .2 1 1.3 1 0 1 .1 1-.4 1 0 1-1 1 1.3 1 .1 1-.5 1-.1 1-1.1 1 0 1 .7 1 1.2 1-1.2 1 1.2 1 .1 1-1.5 1 .4 1 .9 1-.5 1-.1 1-.7 1-.3 1 .9 1 0 1 .4 1-1.1 1 .5 1-.6 1 1.1 1 0 1-.9 1-.2 1-.3 1-.1 1 2.1 1-.5 1-.6 1 .8 1-1.5 1 1.8 1-1.6 1 .9 1-.1 1-.2 1-.6 1 .7 1 1 1-.6 1-.2 1 .6 1-1.5 1-.4 1 .4 1 .2 1 .7 1 .5 1-.3 1 0 1-.2 1-.2 1-.7 1 .8 1-.9 1 0 1 .8 1-.8 1 .7 1 .2 1-.7 1 1.4 1-.9 1-1 1 .2 1 .1 1 .9 1 .5 1-1.4 1 .3 1 1.2 1 0 1-.3 1-.1 1 .7 1-.5 1-1.2 1 .6 1 1.1 1-1.6 1 1.3 1-.2 1-.2 1-1.2 1-.2 1 1.3 1 .4 1-.6 1-.7 1 1.5 1-.7 1-.8 1 1.3 1-.4 1 .1 1-.6 1-.2 1 .2 1 .6 1-.1 1-.5 1-.4 1 .3 1 .5 1-1 1 .1 1 1.6 1-1.2 1 .2 1-.8 1 1 1-.8 1-.2 1 1 1-.1 1 .3 1-.5 1-.3 1 1.4 1-.1 1-1.6 1 1.7 1-.4 1 .4 1-.8 1-.6 1 1.4 1-.3 1-1.1 1 .1 1-.3 1 .5 1 1.3 1-1.2 1 .2 1 .7 1-.9 1-.3 1 .4 1-.3 1-.1 1 .7 1-1.3 1 .4 1-.3 1 .5 1 .4 1-.6 1-.4 1 1.3 1 .8 1-1.9 1 .7 1-.5 1 .8 1-.1 1 .7 1-1.5 1 .7 1-.8 1 1.1 1-.7 1 .8 1-.1 1-.7 1 1.5 1-.4 1 .3 1-.4 1-1.1 1 .3 1 .3 1 .6 1-.5 1 .9 1-.9 1-1.2 1 1.9 1-.5 1 .7 1-.4 1-.7 1 0 1-.7 1 .7 1 .8 1-.9 1-.1 1 1.3 1-1.7 1-.2 1 0 1 1.3 1-11.4 1-57 1-51.1 1 1.9 1 9.1 1 10.5 1 3.4 1-.2 1 .2 1-.3 1-10.2 1-51.3 1 .1 1-.1 1 .1 1 .2 1 .1 1 0 1 0 1-.4 1 .1 1 .1 1 .1 1 .1 1-.4 1 .3 1-.1 1 .1 1-.1 1-.2 1 .1 1 .3 1-.4 1 .4 1 0 1-.2 1-.2 1 .4 1-.3 1 0 1-.1 1 .1 1 .3 1 0 1-.4 1 .3 1-.2 1 .2 1-.2 1 .3 1-.4 1 .1 1-.1 1 .1 1 .3 1-.1 1 2 1 2.5 1 .2 1-.2 1 .2 1-.4 1 .2 1-.1 1 .2 1-.3 1 0 1 .3 1-.3 1 .1 1 .2 1 0 1 0 1-.2 1 .3 1 7.2 1 57.4 1 86.9 1-1.4 1 .4 1 .6 1 .9 1-1.2 1-.2 1 1.4 1 0 1-1.9 1 1.7 1-.4 1-.4 1-.2 1-.2 1-.1 1-.1 1-.5 1 .1 1 .4 1-.2 1 .8 1-.8 1 .6 1-.3 1-.3 1 .7 1 .6 1-1 1 .2 1-.2 1 .3 1-.5 1 0 1 .4 1-.1 1 .9 1-.8 1 1 1-1.4 1 .9 1-.6 1-.4 1 .9 1-.5 1 .3 1 .6 1-1 1 .7 1 .7 1-.1 1-1.8 1 1.3 1 0 1 .4 1-.1 1-1.6 1 1.9 1-.9 1 .8 1 .1 1-1.6 1-.3 1 0 1 1.7 1-1.1 1-.2 1-.3 1 .2 1 .9 1-.9 1 .9 1 .2 1-1.2 1 .2 1 .2 1 .2 1 .3 1-.1 1 .3 1-.4 1-.1 1 .1 1 0 1-1 1 1.5 1-.9 1 1.4 1-.8 1-1 1 1.9 1-.1 1-.8 1-1.3 1 2.2 1-.3 1-.9 1 .1 1 .8 1-1.8 1 .2 1-.1 1 1.4 1-1.2 1 1.7 1-1.5 1 0 1 1.5 1-1.1 1-.6 1 1 1-.4 1 .4 1-1 1 .6 1-.7 1 .1 1 0 1 1.4 1-1.3 1-.3 1 .4 1 .2 1 .7 1 .1 1-.4 1-.1 1 .1 1-.2 1-.6 1-.4 1 .7 1 .7 1-1.3 1 .6 1 1.4 1-1.2 1-.5 1 .8 1-1.2 1 .3 1 .8 1 .3 1-.6 1 0 1-.5 1-.2 1 .8 1 .7 1-1.2 1 1.2 1 .2 1 .2 1-1.8 1 1.9 1-2 1 1 1 .4 1-.6 1-.4 1 .8 1-1.2 1 .3 1 1.3 1-1 1 .2 1 .9 1-.8 1 0 1 1 1-.9 1-.1 1-.2 1 .3 1-.9 1 1.9 1-2 1 .2 1 1.5 1-.4 1 .7 1-.6 1 .2 1-1 1 .9 1-.6 1-1.1 1 .7 1 .3 1 .9 1 .1 1 .2 1-1.1 1 .2 1 .6 1-1.5 1-.2 1 .6 1 .5 1-.6 1-.4 1 .8 1 .1 1 .8 1 .1 1 0 1-2 1 .1 1 .7 1-.8 1 .9 1-.1 1 1.1 1 .1 1-.1 1-1.2 1-.4 1 .6 1 .4 1-1.4 1 .1 1 .5 1 .2 1-.2 1 .8 1 .1 1-1 1-.3 1 1 1 .1 1 .4 1-1.2 1 .2 1 .7 1-1.3 1 .4 1 .8 1-.2 1 .7 1-.9 1-.1 1-.6 1 1.7 1 0 1-1.8 1 2 1-.9 1-.4 1 0 1-.5 1 .9 1-.1 1 .4 1-.7 1-.7 1 1.5 1-.6 1 .3 1 .3 1-.9 1 1.3 1-.4 1 .2 1-.8 1-.2 1-.5 1 1.4 1 .1 1-.6 1 .6 1-.8 1 1.1 1-2 1 1.9 1-.4 1-1.5 1 1.4 1-.2 1 .4 1-1.4 1-.1 1 .7 1 .3 1-.4 1 1.2 1-1.2 1-.1 1-.1 1 0 1 1.1 1-.1 1-1.6 1 .2 1 .5 1 .1 1-51 1-56.5 1-10.9 1 .7 1 .4 1 1.3 1 10.5 1 10.8 1 1.1 1-.1 1 0 1-6.4 1-30.6 1-24.8 1 .4 1-.1 1 .1 1-.1 1 .1 1 0 1-.2 1-.2 1 .3 1-.3 1 0 1 .2 1 .2 1-.1 1 .1 1 0 1 0 1-.4 1 .1 1 0 1 .1 1 0 1-.1 1 .2 1-.3 1 .2 1 .2 1-.4 1 0 1 .3 1 0 1-.1 1 .2 1-.1 1-.3 1 .3 1-.1 1 .1 1-.3 1 .3 1 .1 1-.1 1-.3 1 .1 1-.1 1 .3 1 .1 1-.2 1-.2 1 0 1 .4 1-.2 1 0 1-.2 1 .1 1 .1 1 .2 1-.3 1-.1 1 .3 1-.3 1 .1 1 .3 1 0 1-.4 1 2.3 1 2.4 1 .1 1 .1 1-.3 1 .1 1-.1 1 .3 1-.2 1-.1 1 0 1 .3 1-.1 1 0 1 0 1-.2 1 .2 1 0 1-.1 1 37.1 1 70.3 1 44.3 1-.1 1-.7 1 .1 1-.5 1 .2 1 .7 1 .4 1-1.7 1 2 1-1.6 1 1 1-.1 1-.8 1 1.1 1 .2 1-.6 1 .3 1 .3 1-.1 1-1.6 1-.2 1 .2 1 0 1-.2 1 1.1 1-.3 1-.7 1 .1 1 .3 1 1.6 1-.8 1 .2 1 .4 1 .1 1-1.6 1 1.4 1-.6 1 .3 1-1.2 1 1 1 0 1 .2 1-1.2 1-.2 1 .8 1 1.1 1-1.4 1 1.5 1-1.7 1 .8 1 .2 1-.9 1-.1 1 .2 1 1.4 1-.4 1-1.3 1 1.5 1-1.7 1 1.5 1-.2 1-1.3 1 .4 1 1.6 1-.1 1-1.7 1 1.3 1-1 1 .4 1 .8 1-1.5 1 .3 1 1.4 1-1.6 1 .2 1 1.1 1 .1 1-.2 1-1.6 1 .1 1 1.6 1-.7 1-.1 1 .1 1 1 1-1.5 1 .6 1 .8 1-.5 1 .6 1-1.8 1 .1 1-.4 1 .6 1 .7 1-.7 1 1.5 1-.9 1 .7 1-.3 1-1.1 1 .8 1 .8 1-.4 1-1 1 1.5 1-.2 1-.2 1-.8 1-.3 1 1.2 1-.8 1-.1 1-1 1 .3 1 0 1 1.3 1-1 1 .2 1-.7 1 1.3 1 .7 1-.2 1 .2 1-.3 1-1.4 1 .3 1-.3 1 1.8 1-1.7 1 .7 1-.2 1 .8 1-.4 1 .8 1-1.4 1 .7 1 .4 1-1.9 1 1.6 1-.7 1 .1 1-.3 1 .3 1 1.2 1-.9 1-1.3 1 .7 1 .6 1-.7 1 .5 1-.1 1 .2 1-1 1 .5 1 .9 1-.5 1 .8 1 .1 1-1.7 1 1.9 1-1.4 1 .2 1 .9 1-.1 1-1.1 1 1.1 1-1.5 1 1.5 1-.5 1-1.1 1 1.3 1 .5 1-1.5 1 1.4 1-1.5 1 .9 1 .3 1-.6 1 .5 1 .4 1-.4 1 .5 1-1.5 1 1.2 1-.8 1-.7 1 1.6 1-1.8 1 .8 1-.5 1 .8 1 .8 1-.9 1 .8 1-.8 1 .4 1-1 1-.1 1 .9 1-.7 1 1.2 1-1.4 1 .5 1 .5 1-.4 1-.7 1 1.3 1-.9 1 1.5 1-.3 1-1.5 1-.2 1 .2 1 .4 1 .3 1 .5 1-.4 1-.1 1 .8 1 .2 1-1.8 1 .8 1-.2 1 1.1 1 .1 1-.8 1-.3 1 .4 1 .2 1 .5 1-1.1 1-.4 1 1.5 1-.6 1-.2 1-1.2 1 1.4 1-1.4 1 .1 1 .8 1 1 1 .1 1 0 1-.6 1-.4 1-.2 1-.4 1 .8 1-.2 1-.1 1 1 1-.2 1 .5 1-.4 1-.6 1 .7 1 .2 1-1.4 1-.5 1 .7 1 .7 1-.1 1 .3 1-.6 1-1 1 .4 1-.1 1-.2 1 1.6 1-1.4 1 .9 1 .7 1-1.5 1 1.3 1-.5 1-.7 1 .4 1-.3 1 0 1-.8 1 1.7 1 .3 1-1 1 1 1-.2 1-1.1 1-.2 1 .1 1 .5 1 .5 1-.2 1-1.1 1 1.3 1 .5 1-1.8 1 0 1 .8 1-.6 1 .8 1-.9 1 1.6 1-1.5 1-.4 1 2 1-1.1 1 .4 1 .4 1 .3 1-.2 1-1 1 .6 1-1.3 1 1 1 .4 1 0 1-1.5 1 1 1 .1 1 .5 1-.7 1-.9 1 .9 1 1.1 1-1.2 1-.4 1 1 1 .6 1-1.8 1 .4 1 0 1 1 1-1.3 1 .4 1 0 1 .3 1-.5 1 1.1 1 .2 1 .2 1-1.1 1-.2 1 .2 1-.3 1-.7 1 .3 1 .8 1-.7 1 0 1 .9 1-.1 1 .9 1-1.2 1-.2 1 .7 1-1.3 1 1.3 1-.9 1 1 1 0 1-.7 1 1 1-1.6 1 1.6 1-1.1 1 1.5 1-.5 1-1.4 1 .8 1 1.1 1 0 1-1.5 1-.3 1-.2 1 .5 1-.3 1 1 1-1.2 1 1.5 1-.5 1 .8 1-.7 1-.4 1-.3 1 1.4 1-.2 1-49.4 1-54.4 1-10.4 1 .3 1 .8 1 .5 1 4.1 1 8.2 1 5.4 1 .2 1 .1 1-29 1-32.4 1-.3 1 .3 1 0 1 0 1-.3 1-.1 1 .2 1 .2 1-.3 1 .1 1 0 1-.2 1 .4 1-.2 1 0 1 .1 1-.3 1 .2 1 .1 1-.2 1 0 1 .3 1-.2 1 .2 1-.1 1 0 1-.2 1-.1 1 .4 1-.3 1 .1 1-.1 1 .3 1-.4 1 .2 1 .2 1-.2 1-.1 1 .3 1-.2 1 0 1 .2 1-.4 1 .1 1-.1 1 .3 1-.2 1 2.7 1 2.2 1 0 1-.4 1 .4 1-.1 1-.3 1 .3 1-.1 1 .2 1-.3 1 .2 1 0 1-.3 1 .2 1-.2 1 .2 1-.2 1 .1 1 39.2 1 93.2 1 19.2 1-.4 1-1 1-.2 1 0 1 1.9 1-.8 1 .1 1-.7 1 1.4 1 .1 1-1.4 1 .1 1 .4 1-.8 1-.2 1 .8 1-.7 1-.1 1 1.8 1-.2 1-1.4 1 1.2 1-.2 1 .4 1-.6 1 .7 1-1.7 1 .2 1 .9 1-1 1 .2 1 1.2 1-.1 1-1.1 1 .6 1-1.1 1 1 1 1 1-.1 1-1.8 1 1.1 1-.8 1-.1 1 1.7 1-.1 1-1.8 1 1.2 1 .1 1-1.4 1 1.1 1-.3 1-.6 1 .8 1-.4 1 .7 1-.3 1-.8 1 1.8 1-.5 1-1 1 .2 1-.5 1 1.4 1-.8 1 1.2 1-1.3 1 .4 1-.3 1-.6 1 .6 1 1.3 1-1.5 1 1.2 1-1.5 1 .6 1 .3 1 .5 1-1.6 1 .8 1-.4 1 1.2 1 .2 1-1.7 1 1.4 1-.9 1-.4 1 0 1 1 1-1.2 1 .5 1-.5 1 2.1 1-1.5 1 .7 1-.7 1 .8 1-1.2 1 1.5 1-1.3 1 .1 1 1 1-.1 1-.1 1-.2 1-.8 1 .2 1-.2 1-.2 1 .3 1 .3 1 1 1-.5 1-.9 1 .2 1-.3 1 1.4 1-.4 1 .6 1-.4 1-.4 1-.2 1-.6 1-.3 1 1.3 1-.5 1 .5 1-.7 1-.2 1 .3 1-.4 1 1 1-.1 1 .9 1-1.1 1 0 1 0V1364.8Z" fill="#73bf69" fill-opacity="0.15" stroke="#73bf69" stroke-width="0.8" stroke-opacity="1" stroke-linejoin="round" clip-path="url(#cw)"/>
<path d="M47.2 1364.8V1266l.7 1.6 .7-2.5 .7-.4 .7 .2 .7 2.7 .7-4.4 .7 4.4 .7-3.7 .7-1.1 .7 6.8 .7-4.3 .7-3.1 .7 5.5 .7 2.3 .7-1.3 .7 3.2 .7-1.9 .7-8.2 .7 4.3 .7 3.6 .7-6.5 .7 1.3 .7 3 .7 2.9 .7-6 .7-1.7 .7 7.6 .7-1.6 .7-4.4 .7-2.3 .7 7.7 .7-4.5 .7 2.9 .7-4.9 .7 4.7 .7-6.1 .7 .9 .7 5.9 .7-4 .7 2.1 .7 3.5 .7-2 .7 1.6 .7-2.7 .7-2.7 .7-2.4 .7 6.5 .7-5.9 .7 5.2 .7 2.4 .7-.4 .7-6.1 .7 2.6 .7-3.4 .7-.5 .7 .3 .7-1 .7 3.2 .7-3.2 .7 1 .7 .4 .7-.8 .7 .2 .7 7.1 .7 .2 .7-5.7 .7 5.8 .7-4.2 .7 1 .7-4.5 .7 4.3 .7 3.1 .7-4.8 .7 1.2 .7-4.4 .7 .1 .7 2.5 .7 4.2 .7-3.3 .7 1.8 .7-2.7 .7 1.3 .7 .8 .7 0 .7 1.4 .7-1.4 .7-2.4 .7 4.3 .7-3.7 .7-2.9 .7 1.5 .7 6.9 .7-7.6 .7 2.5 .7 6.2 .7-6.5 .7 5.8 .7-.1 .7-7.2 .7 .9 .7 2.4 .7-1 .7-.7 .7 1.2 .7-2.1 .7 5.8 .7-5.9 .7-.6 .7-.3 .7-.8 .7 4.3 .7-.6 .7-1.3 .7 5 .7-6.2 .7 9 .7-7 .7 1.4 .7-.8 .7-2.6 .7-.2 .7 6.7 .7-1.6 .7-3.4 .7-2.9 .7 3.9 .7 .8 .7 2.6 .7-3 .7 2.6 .7-.9 .7 2.1 .7-7.8 .7 3.8 .7 2.6 .7-1.3 .7 1.9 .7-6.4 .7-.9 .7-.1 .7 6.7 .7-6.1 .7 8 .7-4.6 .7 4 .7-3.5 .7-1.6 .7 1.9 .7 .5 .7 3.4 .7-1.3 .7-3.1 .7 1.8 .7-4.1 .7-.2 .7-.4 .7 6.9 .7-6.2 .7 5.1 .7-3.1 .7 1.4 .7-1.8 .7-1.1 .7 5.4 .7-.9 .7-3.5 .7 4.4 .7-6.1 .7-.1 .7-.1 .7 1.8 .7 3.2 .7-5.4 .7 6.6 .7-.8 .7-4.1 .7 5.5 .7-1.5 .7-5.8 .7 4.2 .7-4.4 .7 2.6 .7-3.3 .7 7.4 .7-3 .7 3.3 .7-4 .7-2.7 .7-.8 .7 2.3 .7 4.2 .7-.4 .7-3.5 .7-1.9 .7 6.5 .7-7.1 .7 4.9 .7 1.1 .7-6.5 .7 2.5 .7 .3 .7 1.8 .7 .5 .7-2.2 .7 1.9 .7 2 .7-2.5 .7-2.5 .7-.4 .7 5.3 .7-5.2 .7 .2 .7 5.9 .7-2.1 .7-4.3 .7 5.8 .7-1.9 .7 1.3 .7-5 .7-1.4 .7 6.3 .7-2.2 .7-1.4 .7 .7 .7 4.4 .7-4.7 .7-1.1 .7 4.5 .7 1.6 .7-7.2 .7-1 .7 6.3 .7-2.6 .7 3.9 .7 .4 .7 .3 .7-4.3 .7-2.4 .7 3.6 .7 2.3 .7 .3 .7-5.2 .7 3.6 .7-5.8 .7 5.1 .7 .6 .7-5.6 .7-.4 .7 3.4 .7-2.9 .7 1.1 .7 6.6 .7-8.5 .7 4 .7-1 .7 5.3 .7-1.2 .7 1.8 .7-8.7 .7 6.3 .7 1.4 .7-.3 .7 1.1 .7-6.6 .7 6 .7-3.4 .7 3.4 .7-5.1 .7-6.5 .7 7 .7 4.1 .7-6.6 .7-.2 .7 6.2 .7-5.6 .7 6.4 .7-2.4 .7-3.6 .7 .7 .7 5.1 .7-.1 .7-2.5 .7-2.8 .7 4.4 .7-5.1 .7 3.3 .7 .9 .7-5.3 .7 7.7 .7-7.8 .7 4.6 .7-.7 .7 1.5 .7-1.1 .7-3.5 .7 0 .7 5.7 .7-.6 .7-.4 .7 .8 .7-3.9 .7 1 .7 .5 .7 1.4 .7 2.5 .7-3.5 .7 .1 .7-3.8 .7 6 .7-5.2 .7 1.8 .7-2.1 .7-.9 .7 7.3 .7 .6 .7-2.4 .7-1.7 .7 .6 .7-.3 .7-.3 .7-.1 .7 3.4 .7-7.1 .7 6.8 .7 .6 .7 1 .7-1.4 .7-5.5 .7 2.2 .7-2.3 .7 .8 .7 1.1 .7 2.6 .7-3.8 .7 2.8 .7 .7 .7 1.3 .7 .5 .7 .4 .7-.3 .7-.6 .7-1.1 .7-4.6 .7 4.1 .7 2.4 .7-4.1 .7-2 .7 .1 .7-1.6 .7 3.3 .7 0 .7-3.5 .7 0 .7 3.8 .7-.4 .7 1.2 .7-2 .7-.7 .7 1.7 .7 1.9 .7-3 .7 1.6 .7-4.2 .7 8.5 .7-7.3 .7 1.1 .7 4.9 .7-6.9 .7 .8 .7-1 .7 7.8 .7-3.5 .7 3.1 .7 0 .7-5.2 .7 .2 .7 2.2 .7 2.7 .7-1.3 .7 .4 .7-1.3 .7-1.2 .7 4.5 .7-6 .7 5.8 .7-1.7 .7-1.5 .7 1.2 .7-2.3 .7-.6 .7-.2 .7 3.7 .7-4.5 .7 1.5 .7-4.1 .7 7.5 .7 1.4 .7-7 .7 6.4 .7-5.4 .7 2 .7 2.7 .7-2.8 .7-3.7 .7 6.3 .7-6.7 .7-.2 .7 2.9 .7-.6 .7 3.7 .7-3 .7-1.2 .7 2.8 .7 3.1 .7-1.2 .7-5.2 .7 .2 .7 3.6 .7 1.1 .7-2.6 .7 .5 .7-1 .7 3.3 .7 1.3 .7-1.2 .7-3.5 .7-2.7 .7 3.1 .7 4.8 .7-.6 .7-5.3 .7 .4 .7 5.5 .7-2.2 .7-5.1 .7 4.9 .7-.9 .7-5.4 .7 3.4 .7 3.1 .7 1.8 .7-4.8 .7 5.2 .7-.2 .7-2.7 .7-.7 .7 3.5 .7-7.9 .7 5.6 .7 2.3 .7-3.8 .7-1.1 .7 1.9 .7 2.3 .7-2.3 .7-5.2 .7 2.2 .7 5.4 .7-1 .7-1.8 .7 3.1 .7-4.5 .7-1.8 .7 6.4 .7-2.8 .7-3.4 .7 1.5 .7 3.6 .7-3.4 .7-3.1 .7 4.4 .7-4 .7 .9 .7 5.5 .7-7.5 .7 1.1 .7-.3 .7-.9 .7 5.5 .7-.1 .7 .1 .7-3.2 .7-.7 .7 5.7 .7-6.1 .7 3.3 .7 3.2 .7-7.4 .7 8.3 .7-2.1 .7-3.5 .7 1.9 .7 0 .7 2.7 .7-5.7 .7 2.6 .7 .9 .7-.4 .7-4.1 .7 1.2 .7 5.9 .7-2.1 .7-3.2 .7 2.9 .7 2 .7-5.5 .7 1 .7-2.2 .7 1.3 .7 .3 .7-1 .7 3.9 .7-2.7 .7 1.7 .7 .5 .7 .4 .7-4.6 .7 6.9 .7-.9 .7-1.2 .7-3.2 .7-.1 .7 1.8 .7-.2 .7 .4 .7 2.1 .7 1.2 .7 .5 .7-7.5 .7 3.9 .7-1.9 .7 2.6 .7 .6 .7-.3 .7-4.4 .7 6.2 .7-5.9 .7-1.4 .7 4.5 .7 4.3 .7-2 .7-1.5 .7 1.1 .7-6.2 .7 8.5 .7-7.4 .7-.4 .7 4.9 .7-.6 .7-1.9 .7-1.6 .7-.5 .7 .7 .7 6.9 .7-7.4 .7 6.5 .7-3.7 .7 1.7 .7 7.6 .7-6.4 .7-2.2 .7-.7 .7 .9 .7 3.3 .7-7.6 .7 7.5 .7-3.1 .7 3.5 .7-8.3 .7 3.7 .7-3.9 .7 2.2 .7 1.3 .7-3.4 .7 1.8 .7-1.8 .7 8.4 .7-4.5 .7-2.1 .7-1.7 .7 1.5 .7 2.7 .7-2.2 .7-1.7 .7 6.7 .7-2.7 .7-2.3 .7 6.3 .7-1.8 .7 .6 .7-1.6 .7-2.8 .7-1.1 .7 4.8 .7 1.9 .7-6.9 .7-1.1 .7 2.7 .7 3.8 .7-3 .7 4.2 .7-1.7 .7 1.5 .7-6.2 .7 1.4 .7 1.6 .7-.3 .7-3 .7-1.6 .7 4.7 .7 .7 .7-2.6 .7 1.7 .7 3.9 .7-5.3 .7-1.5 .7 2.9 .7 3 .7-6.1 .7 2.2 .7-1.6 .7 2.6 .7-3.3 .7-3.9 .7 9.3 .7-3.2 .7 2.5 .7 1.5 .7-6.7 .7 7.4 .7-3.6 .7 2.3 .7-.6 .7 .4 .7-2.8 .7-.8 .7 2.1 .7-2.8 .7-1.2 .7 4.8 .7-1.6 .7-4.3 .7 1.1 .7 6 .7 1.5 .7-7.1 .7 5.8 .7-1.8 .7-4.9 .7 7 .7-2.9 .7-1.5 .7 2 .7 2.2 .7-2.7 .7-4.7 .7 6.2 .7-3.9 .7 5.5 .7-1.1 .7 .9 .7-5.5 .7-2.1 .7 5.5 .7 .5 .7 .5 .7-5.2 .7 1 .7 .1 .7-1.6 .7 1.3 .7 .4 .7-2 .7 .7 .7-.3 .7 6.1 .7-6.8 .7 6.9 .7-1.7 .7-1.3 .7-2.7 .7 6 .7-5.1 .7 5.1 .7-7.2 .7 6 .7-1.5 .7-3.4 .7 5.2 .7-.2 .7-5.7 .7 3.2 .7 1.4 .7-.4 .7 1.9 .7-1.1 .7-.8 .7-3.1 .7 4.4 .7-1.7 .7 .2 .7-1.3 .7 2.1 .7 .4 .7 2.6 .7-5.7 .7-2.3 .7 12.4 .7-7.3 .7-5.5 .7 5.8 .7-3.6 .7 5.4 .7-.3 .7-2 .7-3.6 .7 2.7 .7-2.4 .7 2.2 .7-3.6 .7 4.7 .7 2.7 .7-4.5 .7-3.1 .7 .5 .7 2.5 .7 1.8 .7-1.3 .7 1.2 .7-.7 .7 1.2 .7-5.3 .7 5.7 .7 2.4 .7-3.5 .7-3.5 .7-1.3 .7 8 .7-5.4 .7-.4 .7 1.5 .7-2 .7 6.1 .7-2.2 .7-5.4 .7 1.6 .7 5.4 .7 .2 .7-7.5 .7 6 .7-4.1 .7 5.6 .7 1.2 .7-2.5 .7-1 .7-2.3 .7-.3 .7-.8 .7 5.2 .7-.1 .7-4.1 .7-1.6 .7 5.3 .7-6.5 .7 6.5 .7-6.2 .7 8.4 .7-2.1 .7-11.8 .7 5.7 .7 7.6 .7-8.5 .7 7.3 .7-.6 .7-.4 .7-4.6 .7 2.9 .7 3.8 .7-6.9 .7 5.8 .7-6.5 .7 1.7 .7 5.1 .7 .2 .7-2.4 .7-5 .7 .8 .7-.6 .7 6 .7-2.7 .7-1.1 .7 0 .7 5.7 .7-4.1 .7-2.4 .7 3.2 .7-4.8 .7 5 .7 3 .7-7 .7 4.1 .7 1.8 .7 .7 .7-.6 .7-3.1 .7-4.7 .7 1.7 .7 3 .7-1.5 .7 6.9 .7-9.3 .7 4.9 .7-.9 .7 4.2 .7-4.2 .7-1.4 .7-1.5 .7 5.6 .7 .2 .7-7 .7 5.4 .7 2.2 .7-3.8 .7 3 .7-4.7 .7 2.5 .7 2.6 .7-2.9 .7-.7 .7-1.3 .7 6.2 .7-1.4 .7 1.3 .7-1.7 .7-4 .7-.8 .7 3.5 .7-1.3 .7 .2 .7 4.3 .7-6 .7-1.1 .7 2.8 .7-3.3 .7 2 .7-1.9 .7 6.3 .7-3.6 .7-2 .7 5.8 .7-.5 .7-1.3 .7-4.7 .7 5.5 .7-1.6 .7-5.1 .7 3.7 .7-2.9 .7 5.4 .7 2.3 .7-7.6 .7 7.3 .7-1.7 .7-6.1 .7-.3 .7 4.8 .7 .8 .7-1.1 .7 2.2 .7-2.6 .7-3.9 .7 7.2 .7-5.2 .7 4.4 .7-1.4 .7 2.4 .7-7.4 .7 5.8 .7-2.7 .7-.7 .7-.7 .7 4.9 .7-5.2 .7 .1 .7 6.9 .7-2.6 .7-.1 .7-4.8 .7 2.7 .7 1.4 .7-2.6 .7 3.7 .7 2.1 .7-5.3 .7 4.2 .7-3.2 .7 0 .7-.6 .7 1.6 .7 .5 .7-.5 .7-2 .7-2.4 .7 3.9 .7-.2 .7 2.2 .7-3 .7-2.9 .7 3.8 .7-.9 .7 1.2 .7-.5 .7-.6 .7 4.5 .7-.6 .7-.8 .7 .2 .7-5.6 .7 2.8 .7 1.2 .7-.3 .7-2.4 .7-.7 .7 5.1 .7-2 .7 3.1 .7-1.9 .7-4.8 .7 3.5 .7-3.2 .7 3.7 .7-4 .7 6 .7-4.6 .7 5.6 .7-.1 .7-1.9 .7-1 .7 1.2 .7-1.7 .7-3.7 .7 4 .7 1.7 .7-4.6 .7 2.3 .7 1.6 .7 0 .7-2.8 .7 4.6 .7-3.9 .7 2.8 .7-.3 .7-3.9 .7 4.9 .7-1.9 .7-3.1 .7-.4 .7 2.7 .7 3.6 .7-4.5 .7-.2 .7 0 .7 3.9 .7-1.5 .7-1.9 .7-2.6 .7 0 .7 11.7 .7-7.3 .7 1.2 .7-8.9 .7 2.8 .7 .1 .7-.8 .7 3.6 .7-2.9 .7 4 .7-1 .7-4.3 .7 1.7 .7 2.6 .7 .9 .7 3.3 .7-1.3 .7-2.7 .7 2.2 .7 .3 .7-6.8 .7 7.3 .7-1.5 .7-5.1 .7 1.2 .7-1.7 .7 3 .7 3.6 .7 1.8 .7-2.7 .7-.4 .7 2 .7-2.6 .7-.4 .7 2.7 .7-2.6 .7-.9 .7-3.9 .7 4.2 .7 .7 .7-1.7 .7 2.2 .7-3.5 .7-.1 .7-1.9 .7 .3 .7 1.7 .7 2 .7 4.2 .7-.8 .7-.5 .7 .6 .7-3.2 .7-.8 .7 4.7 .7-.1 .7-6.7 .7 7 .7-5.4 .7-2.1 .7 1.8 .7 1.8 .7 .3 .7 1.8 .7-1.7 .7 1.8 .7 3.1 .7-7.5 .7 1.5 .7-3.3 .7 6.2 .7 .2 .7 .8 .7-3.8 .7-2.8 .7 1.2 .7 2.6 .7 3.1 .7-5.5 .7-2 .7 3.3 .7 .3 .7 5.7 .7-2.6 .7-1.1 .7-1 .7-1.7 .7 .2 .7-.7 .7-1.8 .7 2.3 .7-1.7 .7 7.2 .7-4.6 .7 .2 .7 2.6 .7 .7 .7-7.2 .7 6.6 .7 .1 .7-1.8 .7 1.2 .7-5.1 .7 1.2 .7 3.9 .7-3.4 .7 2.7 .7-3 .7 4.1 .7-1.6 .7-2.7 .7-.6 .7 3 .7 3.5 .7-8.8 .7 4.1 .7-2.6 .7 6.1 .7 1.3 .7-2.2 .7-3.7 .7 3.5 .7-2.9 .7 .1 .7 .4 .7-.6 .7-.1 .7-3.3 .7 8.5 .7-8.5 .7-4.1 .7 7.2 .7 3.1 .7-2.6 .7 0 .7-.8 .7 5.3 .7-1 .7-4.3 .7-.3 .7 4.7 .7-3.5 .7-.6 .7 1.2 .7 .8 .7 .2 .7 .3 .7-2.4 .7-2.7 .7 6.2 .7-4 .7 3.8 .7-.6 .7-3.9 .7 6.2 .7-4.5 .7 1.6 .7 3.3 .7-4.3 .7 1.1 .7 2.2 .7-7.2 .7 6.5 .7-.9 .7 .9 .7 1.5 .7-4.7 .7-2.3 .7-1.4 .7 .8 .7 3.3 .7-3.8 .7 2.3 .7 4.3 .7-.7 .7-4.8 .7 3.8 .7 2 .7-6.9 .7 .9 .7 4.2 .7-4.1 .7-.8 .7 5.5 .7-1.2 .7-4.1 .7 4.9 .7-3.2 .7 6.4 .7-2 .7-8.1 .7 8.2 .7-5.6 .7-.3 .7 4.6 .7-4.1 .7 6.1 .7-.3 .7-.5 .7-.8 .7-1 .7-4.8 .7 5.4 .7-5.4 .7 1 .7 7 .7-2.6 .7 2.6 .7-1.8 .7-6 .7 2.9 .7-1.9 .7 .8 .7 1.1 .7 3.2 .7-5.9 .7 3.1 .7 1.4 .7-3.4 .7 3.8 .7-2.8 .7-2.1 .7 8.3 .7-3 .7-.9 .7 3.9 .7-6.4 .7 2.9 .7-2.9 .7-.4 .7 4.9 .7-5.1 .7-.8 .7 .9 .7 4.8 .7-5.6 .7 6.2 .7 1.5 .7-4 .7 .6 .7 1 .7-.6 .7-5.6 .7 8.5 .7-2.2 .7-1.8 .7 .6 .7-2 .7 2.1 .7-.5 .7-.2 .7-2.9 .7 3.1 .7-.6 .7 3.7 .7-1.7 .7-1.9 .7 1.9 .7 1.6 .7 .3 .7-3 .7-1.2 .7 4.7 .7-1.4 .7-2.7 .7-2.9 .7 4.7 .7-4.5 .7 .6 .7 4.9 .7 .9 .7-1.3 .7-3.4 .7 3.4 .7-5.1 .7 .3 .7 4.6 .7-6.6 .7 8.2 .7-7.1 .7 10.6 .7-9.5 .7-.2 .7 5.7 .7-1.8 .7-5.6 .7 1 .7 4 .7-4.6 .7 3.3 .7-.1 .7-2.2 .7 3.8 .7-2.5 .7 4.7 .7-2 .7-2 .7 3.3 .7-6.5 .7 3.2 .7 1.4 .7 3.1 .7-5.1 .7 1.7 .7 3.1 .7 .6 .7-5.8 .7 5.6 .7-5 .7 3.2 .7-3.4 .7 1.2 .7 3.8 .7-4.5 .7-.9 .7-.6 .7 6.3 .7-7.4 .7 5.1 .7-3.8 .7 .4 .7 4.5 .7 1 .7-3.8 .7-1.1 .7-3 .7 .6 .7-.5 .7 0 .7 7.8 .7-3.2 .7 2.3 .7-5.1 .7-1.4 .7 5.9 .7-4.4 .7 1.6 .7 2.6 .7-5.8 .7 1.7 .7-.8 .7 3.8 .7-.3 .7 .9 .7-12.5 .7 7.2 .7 7.8 .7-1.6 .7-5.9 .7 6.7 .7-3.6 .7-.5 .7-2 .7-1.5 .7 3.6 .7-2.5 .7 2.3 .7 1.1 .7 2.2 .7-4.4 .7 5 .7-7.6 .7 1.6 .7 2.6 .7 1.4 .7-2.5 .7 .7 .7 3.7 .7-2.9 .7-4.6 .7 5.1 .7 2.3 .7-3.5 .7 2 .7 2.8 .7-3.1 .7-1.3 .7 4.5 .7-8.2 .7 5.1 .7-.5 .7 2.9 .7-6.2 .7-1 .7 7.6 .7-8.2 .7 7.4 .7-1.7 .7 1.8 .7-6.7 .7-.3 .7 1.8 .7 5.9 .7-2.4 .7-4.7 .7-.2 .7 7 .7-6.5 .7-5 .7 4.2 .7 5.9 .7-1.1 .7-2.6 .7-.8 .7 .7 .7 2.1 .7 3.3 .7-1.1 .7-4.6 .7 2.3 .7-2.6 .7 2.2 .7 3.3 .7-3 .7-3.9 .7 .9 .7 0 .7 4.6 .7 .8 .7-.4 .7-4.2 .7 .8 .7-3.5 .7 3.8 .7 2.8 .7-6.2 .7-.3 .7 6.9 .7-1 .7-4.6 .7 6.2 .7-2.6 .7-6.7 .7 2.5 .7 4.6 .7 3.1 .7-.5 .7-4.9 .7-1.9 .7 .1 .7 2.1 .7 1.2 .7-.9 .7 .1 .7-.1 .7 4.1 .7 .1 .7-7.4 .7 1.6 .7 .7 .7 5.5 .7-1.5 .7-4.4 .7 5.5 .7-5.7 .7 2.7 .7 1.7 .7-4 .7 4.7 .7 1.3 .7-14.9 .7 7.2 .7 4.2 .7 2.2 .7-2.9 .7-1.7 .7-2.1 .7 .8 .7 5.7 .7-5 .7-1.7 .7 .7 .7 2.6 .7-2.3 .7 3.1 .7-3.2 .7 6.4 .7-5.3 .7 5 .7-1.7 .7-3.4 .7 1.7 .7 3.9 .7-3.9 .7 4.8 .7-7.6 .7 2.2 .7 4.8 .7-6.2 .7-1.7 .7 1.6 .7 5.6 .7-6.9 .7 4.1 .7-2.6 .7 .5 .7 1.7 .7 3.3 .7-7.2 .7 7.1 .7 .5 .7-8 .7 .7 .7 1.3 .7 1.8 .7-1.8 .7 1.5 .7-3.4 .7 4.2 .7-1.5 .7 4.9 .7-1.3 .7-3.1 .7-.4 .7 5.9 .7-2.7 .7-2.9 .7 2.7 .7-1 .7 1.7 .7-4 .7 3.5 .7 1.7 .7 .7 .7-.7 .7 .2 .7-.1 .7-4.7 .7 3.5 .7-5.9 .7 8 .7-7.1 .7 1.1 .7 .9 .7 3.1 .7-6 .7 7.4 .7-7.2 .7 6.2 .7-3 .7 1.2 .7 3.2 .7-5.2 .7-.4 .7 2.3 .7-1.4 .7-.4 .7-1.2 .7 5.8 .7-4.1 .7 2.9 .7-6 .7 5.4 .7-1.7 .7 2.7 .7 1.1 .7-2.5 .7 1.4 .7 1.1 .7-4.9 .7-.2 .7 4.4 .7 .5 .7 .3 .7-4 .7-4 .7 4.4 .7-1.4 .7 1.7 .7-5 .7 3.8 .7-.7 .7 3.3 .7 1.5 .7-8.2 .7 7.8 .7-4 .7 2.1 .7-1.1 .7 3.9 .7-3.8 .7 3.8 .7-4.4 .7-1.3 .7-1.2 .7 5.2 .7-2.4 .7-.9 .7 4.1 .7-7.9 .7 6.8 .7-2.8 .7-1.9 .7 .4 .7-.4 .7 4.3 .7 .8 .7 .1 .7 1.4 .7-3.2 .7 2.2 .7-.7 .7 .9 .7-3.1 .7-2.6 .7 .9 .7 5.6 .7-1.2 .7-.5 .7-2.5 .7-3.3 .7-.3 .7 3.3 .7 8.8 .7-10.2 .7 2.7 .7 .5 .7-3.7 .7 .5 .7 .4 .7 1.1 .7-4.1 .7 4.2 .7 3.9 .7-2.6 .7-1 .7 .5 .7 2.1 .7-3.5 .7 1.3 .7 3.6 .7-3.8 .7-.4 .7 3.6 .7-.1 .7-4 .7-1.2 .7 2.1 .7 1.9 .7-5.2 .7 0 .7 1.8 .7-1 .7 2.5 .7 .5 .7 3.5 .7-6.4 .7 1.4 .7-5.7 .7 8.2 .7 .6 .7-5.7 .7 1.2 .7-.4 .7-.6 .7 3.2 .7 4.1 .7-3.4 .7 1 .7-.1 .7-.2 .7-4.1 .7 .1 .7 1 .7 .6 .7 .2 .7 2.8 .7-5.1 .7 .8 .7-1.5 .7 7.4 .7 .4 .7-8 .7 7.1 .7-2 .7 2.8 .7-11.7 .7 8.2 .7 3.8 .7-2.8 .7 1.9 .7-5.4 .7-.3 .7 5.7 .7-3.4 .7-3.6 .7 6.2 .7-6.5 .7 1.7 .7 5.2 .7-6.8 .7 3.2 .7 1.5 .7-3.1 .7 4 .7-1.4 .7 3.8 .7-3.4 .7-3.3 .7 4.7 .7-5.5 .7 .5 .7 3 .7 1.3 .7 .3 .7-2.6 .7 1.5 .7-4.5 .7 1.6 .7 5.4 .7-3 .7 1.3 .7 .8 .7-1.5 .7-2.8 .7 .1 .7-1.5 .7 4.5 .7-3 .7-1.9 .7 3.8 .7-1.5 .7 4.6 .7-3 .7 .2 .7 5.5 .7-6.6 .7 3.2 .7-5.3 .7-1.2 .7 5.8 .7-4.7 .7 .9 .7 3.6 .7-.5 .7-4.3 .7 5.9 .7-4.6 .7 .7 .7 .8 .7 1.7 .7-5.5 .7 .6 .7 .8 .7 .8 .7 5.7 .7-7.3 .7 7.3 .7-5.2 .7-.3 .7 1.1 .7-1.5 .7 1.8 .7 2.5 .7-3.9 .7-.1 .7-2.4 .7 2.5 .7-2.3 .7 4.4 .7 3.9 .7-.3 .7-5.7 .7 1.4 .7 .5 .7 1.6 .7-5.8 .7 7.1 .7-2.2 .7-2.4 .7 1.7 .7-3.7 .7 5.3 .7 .5 .7 1 .7-6.2 .7 2 .7 .1 .7 4.5 .7-.6 .7-1.3 .7 2.3 .7-2.2 .7-3.8 .7 6.3 .7-6.7 .7 3.9 .7-2.3 .7 4.9 .7-6 .7 2.8 .7-1.8 .7 1.8 .7 .3 .7 0 .7-2.6 .7 4 .7-1.1 .7 2.5 .7-3 .7 .3 .7-.6 .7-3.4 .7 1.6 .7 2.6 .7 1.8 .7-10 .7 5.9 .7 2.5 .7-2.2 .7 2.8 .7 .8 .7-1.9 .7-1.4 .7 4.2 .7-5.2 .7 4.4 .7-.4 .7-5.3 .7 5.6 .7-4.3 .7 2.6 .7 .3 .7 1 .7-6 .7 7.3 .7-.7 .7 .8 .7-6.5 .7 .7 .7 5.9 .7-5.1 .7 2 .7-1.3 .7-3.5 .7 5 .7-2.7 .7 .6 .7-.2 .7-.3 .7 0 .7-.4 .7 5.9 .7 .2 .7-1.1 .7-1.5 .7 1.3 .7-7.5 .7 2.6 .7 5.5 .7-1.6 .7-2 .7 4.3 .7-1.4 .7 1.1 .7-7.2 .7-.9 .7-.1 .7 .9 .7 7.3 .7-1.4 .7 .1 .7-.2 .7 1.7 .7-6.1 .7 .1 .7 .7 .7 5.5 .7-8.1 .7 2.5 .7-.9 .7 .5 .7 4.3 .7-1.8 .7-3.6 .7-.2 .7 3.9 .7-3.8 .7 4.3 .7-2.3 .7 .7 .7-.4 .7-.7 .7-2.9 .7 1.9 .7 3.3 .7-.8 .7 2.9 .7-2.5 .7-4 .7 0 .7 1.4 .7-2.1 .7 8.1 .7-1 .7-2.7 .7-2.3 .7 2.3 .7-.4 .7 1.9 .7 .8 .7-2.2 .7-1.9 .7 2.5 .7 3.1 .7-3.1 .7-1.2 .7-1.2 .7 3.5 .7 2 .7-1.8 .7-.7 .7 .3 .7-.9 .7 .9 .7 1.2 .7-1.9 .7-1.8 .7-.9 .7-1.3 .7-1 .7 1.1 .7 1.2 .7 .9 .7 2.6 .7-1.4 .7-4.7 .7 8.1 .7-4.1 .7-3.1 .7 1.2 .7-1 .7 5.8 .7-5.4 .7 6.6 .7-2.9 .7 2.5 .7-.1 .7-5.9 .7 6.2 .7-6.8 .7 6.7 .7-1.2 .7 .2 .7-3.6 .7 5 .7-3.6 .7-2.6 .7 4.1 .7-5.6 .7 6.3 .7 .9 .7-3.9 .7-3.9 .7 3 .7 0 .7 3.7 .7-6.8 .7 4.5 .7-3.1 .7 6 .7-3.7 .7-1.3 .7-.2 .7-2.4 .7 5.9 .7 1.6 .7-9.8 .7 9.8 .7 2.9 .7-5.1 .7-3.3 .7-.2 .7-.2 .7 3.3 .7-2.3 .7 7.1 .7-4.9 .7-2.2 .7 6 .7-3.8 .7-4.6 .7 3 .7 .1 .7 4.7 .7-.3 .7-6.8 .7 7.9 .7-.7 .7 .4 .7-7.5 .7 .4 .7 4.6 .7 .6 .7 2.1 .7-5.9 .7-1.3 .7 2.6 .7-1.8 .7-1 .7 7.3 .7-8.7 .7 6.2 .7 1.7 .7-5.4 .7 4.2 .7 1.7 .7-7.8 .7 .9 .7 6 .7-3.5 .7-2 .7-1.7 .7 7.7 .7-6.8 .7 7.5 .7-6.5 .7-2 .7 3.3 .7-1.1 .7 5.4 .7-7.4 .7 .6 .7 7.8 .7-2.7 .7 2.4 .7-6.9 .7-.2 .7 0 .7 5.7 .7-1.8 .7 2.7 .7-1.9 .7-2.4 .7 4.2 .7-4.8 .7-6.2 .7 5.3 .7 1.7 .7-2.3 .7 2.5 .7-.9 .7-.2 .7 3.3 .7-1.9 .7 2.5 .7 1.3 .7-3.2 .7-4.2 .7 7 .7-.1 .7-2 .7 .9 .7 1.2 .7-4.4 .7 4.2 .7-6.9 .7 2.6 .7-.9 .7 1.7 .7 .1 .7-2.3 .7 1.5 .7-2.7 .7 3.6 .7-.3 .7 3.1 .7-4.3 .7 1.8 .7 1.8 .7-8.2 .7 5 .7 1.8 .7-3.1 .7 1.3 .7 3.3 .7-6 .7 5.3 .7-3.6 .7 1.2 .7 2 .7-3.7 .7-.4 .7 5.4 .7-4.1 .7-.2 .7 1.7 .7 .3 .7-.4 .7-3.7 .7-1.1 .7 5.6 .7 1.6 .7 2.1 .7-3 .7-1.6 .7-1 .7 2.3 .7 1.2 .7-5 .7 3.5 .7-2.9 .7 2.5 .7-3.1 .7 6.4 .7-3.1 .7 2.8 .7-2.3 .7 3 .7-4.7 .7-.3 .7-1.9 .7-.1 .7-.6 .7 .6 .7 2.4 .7-.6 .7 3.1 .7-6.1 .7 4.3 .7 .8 .7-4.3 .7 1.9 .7 5 .7-6.1 .7 0 .7 1.6 .7-2.8 .7 7.7 .7-8.3 .7 3 .7 3 .7 6.6 .7-8.6 .7 2.3 .7 .5 .7 1.3 .7-4.9 .7 1.2 .7-3.7 .7 2.1 .7 4.1 .7-4.1 .7 .9 .7-.5 .7 2.7 .7-2.6 .7 3.7 .7-4 .7 .2 .7 5.7 .7-1.7 .7 0 .7-2.8 .7-1.9 .7-.8 .7 2.5 .7 2.2 .7-5.6 .7 1.5 .7 3.6 .7 .3 .7-1.6 .7-3.6 .7 2.6 .7-2.8 .7 2.3 .7 5.8 .7-5.9 .7-1.5 .7 3.9 .7-2.8 .7 2.2 .7 3.3 .7-4.3 .7 .2 .7-1.5 .7 3 .7-1.8 .7 3.7 .7-7.1 .7 6.7 .7-4.3 .7 5.9 .7-3.9 .7-1.6 .7 3.6 .7-4.3 .7 4.3 .7-.9 .7-4.1 .7 6.3 .7-7 .7 .3 .7 6.3 .7-2.8 .7-2 .7 0 .7-.9 .7 3.9 .7 .5 .7-4.8 .7 4.7 .7 2.7 .7-8.1 .7 1.1 .7 1.2 .7-.3 .7 4.8 .7-.8 .7-3.2 .7 2.9 .7-6.2 .7-2.4 .7 6.6 .7-4.7 .7 1.4 .7 5.2 .7-2.2 .7-1.6 .7 5 .7-.5 .7 .1 .7 1.4 .7-.8 .7-2.8 .7-4.7 .7 7.2 .7-.5 .7 1.6 .7-3.7 .7 3.4 .7-.2 .7-1.1 .7-1.1 .7-2.9 .7 5.5 .7-3.8 .7 2.5 .7 .5 .7-.2 .7 1.2 .7-7.3 .7 .9 .7 .7 .7-.3 .7 3.1 .7-2.2 .7-1.8 .7 5.5 .7-2.4 .7-3.3 .7 5 .7 1.2 .7-4.2 .7 .6 .7 4.3 .7-6 .7 .6 .7-2 .7-.7 .7 3.6 .7 2.6 .7-3.2 .7 5.8 .7-2.4 .7 4.5 .7-9.2 .7-1 .7 2.1 .7 3.1 .7-5.3 .7 8.1 .7-6.4 .7-2.2 .7 .2 .7 4.7 .7 2.9 .7-5.6 .7-.3 .7-1.9 .7 5 .7-1.3 .7-3.1 .7-.1 .7 .1 .7 2.9 .7 2 .7-.3 .7 1.6 .7-.4 .7-1 .7-5.6 .7 6.3 .7-4 .7 5.7 .7-8 .7 .5 .7 3.9 .7-2.7 .7 2.2 .7-.2 .7 2.3 .7-5.7 .7 4.4 .7 2.1 .7-4.3 .7-2.4 .7 6.1 .7-1.4 .7-.4 .7 1.9 .7-3.6 .7 .2 .7 6 .7-3.3 .7 .3 .7-3.1 .7 5.8 .7-7.2 .7 6.3 .7-2.5 .7-1.8 .7-2.9 .7 5.2 .7 .8 .7-2.6 .7-.4 .7 2.3 .7-2.9 .7 2.3 .7-.7 .7-.1 .7-3.4 .7 2.9 .7-1.5 .7 5.9 .7-5.4 .7 4.9 .7-5.2 .7-1.1 .7 1.6 .7 .4 .7-1.8 .7 3.3 .7-1.2 .7 3.2 .7-3.8 .7 2.6 .7-5.4 .7 2 .7 1.9 .7-1 .7-2.2 .7 5.2 .7-6.4 .7 6.2 .7-1.3 .7 .5 .7 1.5 .7-.4 .7-5.1 .7-1.2 .7 1.4 .7 5.8 .7-3.1 .7-2 .7 5.5 .7-1.7 .7 0 .7-3.9V1364.8Z" fill="#8ccf68" fill-opacity="0.15" stroke="#8ccf68" stroke-width="0.8" stroke-opacity="1" stroke-linejoin="round" clip-path="url(#cw)"/>
<path d="M47.2 1364.8V1273.9l.7-8 .7 9.4 .7-6 .7-2 .7 7.2 .7-1.8 .7 7.2 .7-5.3 .7-9.2 .7 10.3 .7-3.4 .7-7 .7 10.9 .7-11.5 .7 5.1 .7-2.6 .7 2 .7 2 .7 .2 .7-2 .7 6.3 .7-5 .7 2.8 .7-1.7 .7-4.6 .7 7.3 .7-9.3 .7 1.3 .7-.2 .7 5.7 .7-4.3 .7 3.1 .7-3.2 .7 6.5 .7-1.1 .7-4.2 .7-2.5 .7 7.2 .7-8.2 .7 10.9 .7-9.3 .7-1.4 .7 .4 .7-.2 .7 3.3 .7-1.3 .7-.7 .7 5 .7 1.4 .7-7.9 .7 10.5 .7-3.5 .7-4 .7 1.1 .7 4.3 .7-6.3 .7-1.4 .7 2.3 .7 5.7 .7-5.1 .7-4.1 .7 11.1 .7-10.8 .7 2.6 .7 6.7 .7-9 .7 9.9 .7-8.3 .7-1.5 .7 9.3 .7-7.7 .7 4.5 .7-1.4 .7-2 .7 .9 .7 .6 .7-4 .7 3.8 .7 1.6 .7-5.4 .7 1.8 .7-.7 .7 5.2 .7-7.2 .7 6 .7-5.9 .7 4.4 .7-3 .7-1.9 .7 .4 .7 13.8 .7-10.4 .7 8.6 .7-9.8 .7-1.5 .7-.7 .7 8.6 .7-.5 .7 1.6 .7 .2 .7-7 .7 1.7 .7-1.1 .7 0 .7 8 .7-11 .7 5.8 .7-1.7 .7-4.6 .7 1.3 .7-1.7 .7 10 .7-4.4 .7-.3 .7 5.8 .7-6.7 .7 4.7 .7-8.5 .7 9.5 .7 1.6 .7 .1 .7-5.8 .7 5.3 .7-8.1 .7 4 .7 3.7 .7-2.9 .7 2 .7-3.3 .7-1.5 .7-2.1 .7 7.7 .7-9.5 .7-1 .7 10.7 .7-10 .7 10.1 .7-4.5 .7 .3 .7 3.8 .7-.3 .7-3.3 .7-7.1 .7 11.6 .7-3 .7 .2 .7-7.6 .7 5.2 .7 1.5 .7 2.4 .7-2.5 .7 1.2 .7-5.4 .7 .6 .7 4.3 .7-6.4 .7 8.2 .7 .8 .7-6.9 .7-2.3 .7-1.6 .7 11.3 .7-5.8 .7 3.4 .7-5.6 .7-.1 .7 6.8 .7-.5 .7-6.1 .7 7.7 .7-10.8 .7 10.5 .7-8.7 .7 1.3 .7 2.9 .7-4.9 .7 7 .7-1.1 .7 .5 .7-3.2 .7-3.3 .7 1.4 .7 1.2 .7-3 .7 3 .7 6.3 .7-2.4 .7-4.5 .7-.5 .7 8.3 .7 .2 .7-1.7 .7 .3 .7-6.1 .7-4.1 .7 7.7 .7-2.1 .7-5.1 .7 10.6 .7-2.8 .7 .2 .7 1.3 .7-3.4 .7-5 .7 2.9 .7 3.9 .7-2.5 .7 1.4 .7-4.8 .7 .1 .7 4 .7-.9 .7 4.3 .7-4.9 .7 6.2 .7-10 .7 10.1 .7-5.5 .7-4.9 .7 11.1 .7-8 .7 2.6 .7 5.2 .7-.7 .7-6.7 .7 2.3 .7 2.5 .7-2.5 .7-6 .7-.5 .7 10 .7-6.9 .7 4.1 .7 3.3 .7-9.4 .7 4.2 .7-3 .7 2.2 .7 2.3 .7 .9 .7 2.7 .7-.8 .7-.4 .7-2.1 .7-2.2 .7 4.7 .7 1.8 .7-5 .7 2.9 .7-5.7 .7 3.1 .7 4.5 .7-3.4 .7 3 .7-2.3 .7-8.3 .7 8.7 .7-1.6 .7 .3 .7-4 .7-2.7 .7 8.8 .7-8 .7 3.6 .7-4.1 .7 4.7 .7-3.8 .7 8 .7-9.3 .7 .6 .7 1.5 .7 3.5 .7-6.5 .7 9.8 .7-5.2 .7 5.2 .7-8.4 .7 1.5 .7 6.6 .7 1.3 .7-7.2 .7 .1 .7-1 .7 6.2 .7-5.5 .7-2.5 .7-.6 .7 2.8 .7-1 .7 1.9 .7-3.9 .7 2.8 .7 2.7 .7 1.8 .7-3.2 .7 .9 .7 2.5 .7-.9 .7 2.3 .7 .2 .7-7.6 .7-.5 .7 3.4 .7 3.9 .7 3.2 .7-9.5 .7 2 .7 6 .7-2.5 .7 1.8 .7-8.8 .7 2.7 .7-.9 .7 3.5 .7-.1 .7-2.7 .7 7.9 .7-1 .7-1.5 .7-.3 .7 2.4 .7-4.6 .7-.4 .7 1.6 .7 2.6 .7 1.2 .7-9 .7 9.3 .7-5.5 .7-.7 .7-3.5 .7 9 .7-7.3 .7 7.6 .7-.9 .7-7.4 .7 8.1 .7 .1 .7-8.5 .7 5 .7 3.9 .7-2.2 .7-4.4 .7-4.7 .7 5.2 .7-4.3 .7 6.9 .7-.7 .7-5.2 .7 2.2 .7 4.1 .7 .2 .7-2.5 .7 .8 .7-1.5 .7 3.1 .7-7.3 .7 7.7 .7-2.6 .7 10.7 .7-14.8 .7 6.1 .7-1 .7-3.6 .7 7.4 .7 .1 .7-4.1 .7-5.2 .7 3 .7 .2 .7-4.1 .7 1.6 .7 7.6 .7-7.9 .7 3.1 .7-1.1 .7 4.9 .7 .1 .7-4.7 .7-3.3 .7-.8 .7 4.7 .7-2.1 .7 1.8 .7-3.2 .7 2.6 .7 4.4 .7-3.8 .7 5.6 .7-9.2 .7 1.5 .7 8.9 .7-9.3 .7-.8 .7 2.5 .7 7.8 .7-2.9 .7-10.3 .7 3 .7 9.7 .7-8.1 .7 .7 .7 4.4 .7-3.5 .7-2.3 .7 8.5 .7-2.9 .7-2 .7 8.7 .7-10.1 .7 5.2 .7-.9 .7-1.6 .7-.9 .7-.3 .7-3.6 .7-1 .7 7.6 .7-6.2 .7 6.1 .7-3.1 .7-4.3 .7 5.9 .7-3 .7-2.6 .7-.9 .7 8 .7-4.5 .7-2.4 .7 4.3 .7 1.1 .7-5.6 .7-1.7 .7 5.1 .7 5.4 .7-3.6 .7-5 .7 2.3 .7 4.8 .7-6.3 .7 6.7 .7-8.7 .7 10.6 .7-3.6 .7 .8 .7 .4 .7 .9 .7-1.4 .7 .3 .7 4.3 .7-11 .7 1.6 .7 4.9 .7-4.2 .7-.9 .7-2.8 .7 6.4 .7 1.5 .7-1.1 .7 3.4 .7-.7 .7-1.5 .7 2.6 .7-11.2 .7-3.3 .7 6.8 .7 .9 .7-3.9 .7 5.1 .7-3.7 .7 .1 .7 4.4 .7-.7 .7 2 .7 1.5 .7-1.1 .7-7.9 .7 10.7 .7 0 .7-7.8 .7-3 .7 8.6 .7-4.1 .7-3.4 .7 6.7 .7-5.1 .7 6 .7-5.4 .7 4.9 .7-6.5 .7 2.1 .7 4.3 .7-5.7 .7 5.5 .7-.9 .7 2.9 .7-1.9 .7 2.7 .7-6.1 .7-.6 .7 4.5 .7 1.5 .7-.2 .7 1 .7-1.9 .7-3.6 .7 2.8 .7-2.5 .7 .4 .7-.1 .7-1.8 .7 4.4 .7 2.9 .7-8.5 .7 0 .7 6.5 .7 1.7 .7-1.7 .7-8.1 .7 8.5 .7-6.5 .7-.1 .7-3.2 .7-2 .7 4 .7 9.7 .7-9.3 .7 4.9 .7 2.5 .7 .7 .7-6.6 .7 7 .7-1 .7-10.2 .7 1.8 .7 5.6 .7-2.1 .7 4.6 .7-.7 .7-2.9 .7 .5 .7-1.3 .7-4.7 .7 4.6 .7 4.2 .7-6.6 .7 5.5 .7-4.6 .7 2.7 .7-3.8 .7 7.4 .7-7.2 .7 5.3 .7 0 .7 1.9 .7-10.2 .7 9 .7-5.7 .7 6.8 .7 .9 .7-5.8 .7 5.9 .7-1.9 .7-.8 .7 3.5 .7-6.2 .7-1.3 .7-1.1 .7-3.2 .7 7.8 .7-5.2 .7 1.1 .7-4.2 .7 2.5 .7 6.6 .7-1.5 .7-2.4 .7 4.9 .7-2.2 .7 3 .7 .7 .7-1.9 .7 1.4 .7-6.9 .7 .9 .7-.2 .7 7.1 .7-5.7 .7 3.4 .7 2.5 .7-.8 .7-10.8 .7 3.5 .7 2.5 .7-3.5 .7 2.6 .7 6.6 .7-5.7 .7 3.9 .7-5.6 .7-1 .7 5.7 .7 1.1 .7-3.4 .7-5 .7 7.8 .7-3.5 .7 4.4 .7-9.1 .7 7.4 .7-5.9 .7 6.3 .7-7 .7 6.8 .7 .8 .7-1.9 .7-4.9 .7 5.2 .7 2 .7-3.4 .7-6.4 .7-2 .7 9 .7 3.4 .7-8.6 .7 7.9 .7 .8 .7-5.7 .7 .5 .7-5.4 .7 8.1 .7-7.8 .7 0 .7 1.2 .7-.8 .7 5.1 .7-5 .7-.3 .7 6.3 .7-5.3 .7 4.1 .7-4.5 .7 8.2 .7-7.1 .7 4.4 .7-3 .7 7.3 .7-4.4 .7 2 .7 2.8 .7-7.1 .7 4.9 .7-8.1 .7 5.4 .7-3.2 .7-1.9 .7 8.5 .7-2.9 .7-3.2 .7 .8 .7 .5 .7-.1 .7-2.7 .7 6.5 .7-7.3 .7 2.6 .7-.7 .7-1 .7 5.5 .7 2.7 .7-4.8 .7 4.2 .7-6.1 .7 3 .7-.9 .7-4.1 .7 5.6 .7 2 .7-.8 .7-6.7 .7 6.6 .7 1.3 .7-2.2 .7 1.8 .7-4.4 .7 1 .7-.3 .7 1.3 .7-2.5 .7 1.2 .7-3.3 .7 1.9 .7 1 .7 1.4 .7 1.4 .7-3.5 .7-2.7 .7 1.7 .7 6.1 .7-6 .7 3.6 .7 3.4 .7-.3 .7-3.3 .7-1.8 .7-3.8 .7 6.7 .7-4.6 .7 2.4 .7-3.8 .7 8.6 .7-.6 .7-5.7 .7 .2 .7 5.4 .7-.1 .7-7.9 .7 8.8 .7-3.5 .7-5.1 .7 7.7 .7-9.8 .7 10.3 .7-4.6 .7-2.2 .7 5 .7 .7 .7 1.6 .7-4.1 .7-5.8 .7 .7 .7 3.4 .7-4.3 .7 5.3 .7-5.6 .7 1.9 .7-2.7 .7 4.1 .7-2.9 .7 7.7 .7-9 .7 9.7 .7-3.5 .7 4.2 .7-2.4 .7 1.7 .7-.7 .7 .9 .7 2 .7-10.4 .7 4.4 .7 .3 .7-3.2 .7 7.4 .7-10.3 .7 10.2 .7-7 .7 1.3 .7-3.4 .7 .3 .7 8.4 .7-8.6 .7 .2 .7-1.2 .7 2 .7 6.1 .7-8.5 .7 10.7 .7-6.3 .7 5.5 .7 1.8 .7-8.8 .7-1.8 .7 6.5 .7 1.4 .7 2.8 .7-9.6 .7 1.3 .7 7.7 .7 .5 .7-8.1 .7-2.6 .7 3.2 .7-4 .7 5.1 .7-2.7 .7 4.7 .7-4.2 .7 7.2 .7-2.2 .7 3 .7-6.4 .7-1.5 .7-2.6 .7 11.3 .7-3.9 .7-7.9 .7 .3 .7 6 .7 2.6 .7-2.2 .7-4.3 .7-.3 .7 6.4 .7-14.7 .7 14.4 .7-6.2 .7 7.1 .7 1.4 .7-10.6 .7 9.4 .7 .9 .7-10 .7 5 .7-2.5 .7-.3 .7 7.8 .7-6.2 .7 5.4 .7-7.1 .7-1.9 .7 .1 .7 3.8 .7 5.2 .7-7.2 .7 .8 .7 4.9 .7-1.7 .7-3.6 .7-.7 .7 .2 .7 .3 .7 3.5 .7 .7 .7-3.9 .7 5.5 .7-6.1 .7 3.2 .7 6.3 .7-5.1 .7-2.2 .7 7.1 .7-2.6 .7-.2 .7 2.6 .7-4 .7 3 .7-.6 .7-5.8 .7-.9 .7-2.6 .7 2.6 .7 7 .7-7.8 .7 6.4 .7-4.7 .7-2.4 .7 9.7 .7-.5 .7-7 .7 7.2 .7-7 .7-.9 .7 8.2 .7-2.4 .7 1.3 .7-.4 .7-1.8 .7 6.8 .7-8.3 .7 1.6 .7-2.3 .7-4 .7 9.6 .7-.1 .7-10.6 .7 2 .7 2.8 .7-3.2 .7-1 .7 2.3 .7-3 .7 7.6 .7 1 .7 .9 .7-3.7 .7-4.5 .7 5.2 .7-.3 .7-3.6 .7 5 .7-5.2 .7-.6 .7 10.4 .7-9.7 .7 8 .7-3.7 .7 2.9 .7-7.5 .7 1.3 .7 1.1 .7-1.8 .7 6.1 .7-5.7 .7-2.8 .7 7.8 .7-2.4 .7 1.3 .7-7.1 .7 1.1 .7 .9 .7 7.9 .7-.5 .7 1.5 .7-7.8 .7 2.7 .7 1.9 .7-7.7 .7 5.4 .7-2.6 .7 7.1 .7-8.3 .7 6.4 .7 1.7 .7-4.4 .7-1.1 .7-.8 .7 3.9 .7 1 .7-7.1 .7 7.4 .7-3 .7-4 .7 2.9 .7 1.7 .7 3.7 .7-4.7 .7-4.5 .7 8.8 .7 .3 .7-9.6 .7 2.5 .7 2 .7-4.7 .7 8.2 .7-4.6 .7-3.3 .7 6.1 .7-6.6 .7 8.2 .7-4.4 .7-.9 .7-2.7 .7 5.4 .7-2.4 .7 3.6 .7 2.6 .7-1.9 .7 .9 .7-4.4 .7-2.4 .7 9.2 .7-5.8 .7-2 .7 2.1 .7-.6 .7 6.9 .7-10.6 .7 .6 .7 2.5 .7 1 .7-.7 .7 3.5 .7-2.7 .7 1.4 .7 5 .7-8.7 .7-2.7 .7 2.5 .7-2.9 .7 2.6 .7 8.4 .7-9.7 .7 4.3 .7-.8 .7 6 .7-10.5 .7 .2 .7 6 .7-1.1 .7 2.6 .7 .2 .7-.1 .7 .9 .7-5.5 .7 3.3 .7-5.4 .7 6.4 .7-5.5 .7-2.3 .7 2.3 .7-.1 .7 2.7 .7 5.4 .7-5 .7-1.5 .7 .8 .7 6.8 .7 .5 .7-10.4 .7 9.7 .7-.2 .7-3.2 .7-5.4 .7 8.3 .7-7.9 .7-2.7 .7 11.6 .7-3.5 .7 3.6 .7-3.6 .7-6.4 .7 .4 .7 4.7 .7-2.1 .7-.2 .7-3.6 .7 10.5 .7-11.5 .7 3.2 .7 2.7 .7-4.6 .7 4.8 .7 5.7 .7-7 .7 .6 .7 4 .7-5.3 .7-2.4 .7 9.5 .7 .5 .7-6.8 .7 2.4 .7-2.4 .7 5 .7-1.1 .7 7.3 .7-5.8 .7 1.7 .7-3.2 .7-.1 .7 1.9 .7-6.9 .7 7.8 .7-10.8 .7 7.5 .7-2.3 .7 3.5 .7 2.5 .7-4.6 .7-4.7 .7 8.7 .7-3.6 .7 2.7 .7-5.6 .7 4.9 .7-8.3 .7 9.1 .7-6.6 .7 5.3 .7-2.2 .7 3.1 .7-1.6 .7 .6 .7 2.4 .7-7.9 .7 13.4 .7-13.8 .7 1.9 .7 3.2 .7 2.3 .7 .4 .7-4.1 .7-3.7 .7 5 .7 0 .7-2.6 .7-2 .7 .2 .7 1.1 .7 5.3 .7-7.3 .7 3.8 .7-5 .7 9.4 .7-6.6 .7 .3 .7 6.2 .7-8.9 .7 .7 .7-2.5 .7 9.5 .7-.6 .7-2.5 .7-6.5 .7 5.8 .7 1.4 .7-4 .7-1.4 .7 6.4 .7-4.2 .7 3.6 .7-3.5 .7 2.3 .7 4 .7-4.5 .7-.1 .7-3.3 .7 4.2 .7 .3 .7-2.3 .7 6.7 .7-3.8 .7-2.4 .7 5.9 .7-3.9 .7 .3 .7-6.5 .7 .5 .7-1.4 .7 2.6 .7-1.4 .7 6.4 .7 1.3 .7-8 .7-.6 .7 9.2 .7-7.9 .7 8.7 .7-8.7 .7 7.2 .7 2.5 .7-6.7 .7 1 .7 .3 .7-1.9 .7 4.2 .7 1.5 .7-8.3 .7 4.7 .7-2.4 .7-2.9 .7 5.9 .7-3.2 .7 7.6 .7-5.5 .7 .6 .7-.2 .7-5.3 .7 1.2 .7 2.7 .7-.3 .7 11.3 .7-10.6 .7-4.4 .7 6 .7-6.2 .7 1.2 .7-1.7 .7 3.5 .7 5.7 .7 .8 .7-7.8 .7 .1 .7 .9 .7 1.2 .7-3.7 .7 4.7 .7-1.2 .7 6.1 .7 1.4 .7-4.9 .7-5.9 .7 6 .7-6.4 .7 8.9 .7-3 .7 4.7 .7-3 .7 1 .7-8.7 .7 8.5 .7-6.8 .7-1.3 .7 4.2 .7 2.7 .7-3.7 .7 3.3 .7-6.2 .7 1.1 .7 9.5 .7-.5 .7-6.3 .7-2.2 .7 5.3 .7-5.5 .7 6.3 .7-4.5 .7-1.5 .7 6.5 .7-3.6 .7-.3 .7-4.2 .7-.7 .7 4.2 .7 1.7 .7 4.9 .7-1.8 .7-5.5 .7-1.9 .7 4.9 .7-1.1 .7 .7 .7-3.1 .7 3.6 .7 1.7 .7 .4 .7-5.6 .7 .9 .7 2.1 .7-1.6 .7 1.4 .7-1.4 .7 6.2 .7-5.3 .7 5.1 .7-10.3 .7 11 .7-1.2 .7 .3 .7 .3 .7-3.5 .7-3.4 .7 .4 .7-1.1 .7 5.1 .7-8.7 .7 5.3 .7-.5 .7 5.5 .7-7.8 .7 4.8 .7 .8 .7-7.1 .7 9.6 .7 .4 .7-5.4 .7 1.4 .7-3.1 .7 4.2 .7-2.4 .7-3.5 .7 6.8 .7-7.1 .7 3.5 .7 4.1 .7-8.9 .7 4.7 .7-1.3 .7-.9 .7-2.2 .7 1.4 .7 2.6 .7 5.3 .7 1.1 .7-4 .7-6.3 .7 6.3 .7 2.1 .7 1 .7-8.6 .7 7.6 .7-1.3 .7-7.6 .7-.5 .7 .6 .7 9.4 .7 .8 .7 .5 .7-10.5 .7 3.5 .7-.1 .7 2 .7-4.9 .7-.1 .7 2 .7 5.5 .7-5.9 .7-2.9 .7 9.1 .7 1.4 .7-5.5 .7 3.4 .7-.5 .7-3.2 .7 7 .7-9.3 .7 9.3 .7-6.3 .7 6.5 .7-4 .7-2.7 .7-4.3 .7-1.4 .7 4.3 .7 2.3 .7-4 .7 1.2 .7 4.3 .7 1.7 .7 2.4 .7-11 .7 4.8 .7-3.7 .7 .1 .7 4.2 .7 1.7 .7 3.6 .7-1.8 .7-.5 .7-3 .7-2.4 .7 5.3 .7 0 .7-7.6 .7 7 .7-6.4 .7 6.6 .7-7.3 .7 6.9 .7-2.5 .7-4.3 .7 8 .7-6 .7 2.3 .7 5.6 .7-1.8 .7-1.8 .7 4.2 .7-4.1 .7 .8 .7-8.5 .7 9.7 .7-5.6 .7 6.5 .7-6.8 .7-2.7 .7 .3 .7 .7 .7 8.2 .7-10.7 .7 2.5 .7 6.7 .7-.1 .7-5.5 .7-1.8 .7 7.4 .7 2.4 .7-10.8 .7 2.4 .7 .4 .7 6.9 .7-1 .7-3.4 .7 .4 .7 3.1 .7-7.2 .7 4.8 .7-2.3 .7 3.2 .7-7.3 .7 4 .7-1.1 .7-2 .7 4.2 .7-2 .7-2.6 .7 .2 .7 4.6 .7 2.5 .7-7.8 .7 5.3 .7-.9 .7 3.2 .7-6.6 .7-3.8 .7 13.7 .7-4.6 .7 7.5 .7-6.6 .7-5.2 .7 8.8 .7-.2 .7-4.2 .7-.3 .7-9.2 .7 13.6 .7 .7 .7-.1 .7-.7 .7-5.3 .7-.7 .7-4 .7 6.6 .7 1.3 .7-4 .7 .5 .7-.5 .7-1.9 .7 6 .7-6.8 .7-1.3 .7 5.3 .7 1.8 .7-.7 .7-1.9 .7 2.1 .7-3.2 .7 2.6 .7 .5 .7 0 .7-4.2 .7 .7 .7 2.4 .7 1 .7-5 .7 .2 .7 4.6 .7 2.9 .7-5.3 .7 5.8 .7-6.9 .7 2.6 .7-3.3 .7 8.3 .7-2.4 .7 1.7 .7-5.1 .7 2.5 .7-3.3 .7 4.4 .7 .7 .7 .5 .7-5.7 .7 6.3 .7-8.7 .7 4.2 .7 2.1 .7 2.9 .7-.3 .7-10.7 .7 5.6 .7 1.9 .7-.1 .7 1.7 .7 .7 .7-3.4 .7-4.6 .7 1.8 .7-2.9 .7 9 .7-2.5 .7 .1 .7 4.2 .7-7.7 .7-.5 .7 5.1 .7-3.9 .7 2 .7-.6 .7-4.9 .7 3 .7 5.6 .7 1.7 .7-1 .7-6.6 .7-1.8 .7 6.4 .7-7.9 .7 8.9 .7-7.1 .7 1.4 .7 7.6 .7-5.3 .7-3.9 .7 6.9 .7-1.3 .7-5 .7 7.9 .7 6.1 .7-7 .7 .6 .7 1.4 .7-1.4 .7-6.3 .7-3.5 .7 8.4 .7-3.5 .7-.6 .7-4.7 .7 .8 .7 .8 .7 10.2 .7-6.1 .7 4.8 .7-9.1 .7 7.1 .7-6.6 .7 8.6 .7-1.3 .7-1.2 .7-6.3 .7 9.3 .7-2 .7-1.2 .7 1.4 .7-4.9 .7-1.7 .7 5.9 .7 2.3 .7-8 .7 3.8 .7-3.4 .7 1.7 .7-1.8 .7 3.6 .7-2.1 .7-.1 .7 .2 .7-4.8 .7 5.2 .7 2.3 .7-6.5 .7 1.1 .7 1.5 .7 4.2 .7-5.1 .7 3.6 .7-.5 .7-2.3 .7 .2 .7 4.6 .7 2.2 .7-7.6 .7 2.4 .7 4.7 .7-8.7 .7 4.1 .7 4.5 .7-5.2 .7 3.9 .7 .8 .7-7.8 .7 6 .7-3.3 .7 3.9 .7-1.9 .7-.6 .7 3.9 .7-7.6 .7 8 .7-9.2 .7 7.7 .7-.4 .7 3 .7-2.6 .7 2.1 .7 .6 .7-.8 .7-2.2 .7-3.2 .7-.3 .7-.9 .7-2.3 .7 2.3 .7-3.7 .7 3 .7 1 .7 3.8 .7-7.5 .7 4.1 .7-2.1 .7 7.1 .7 2.3 .7-5.1 .7-4.9 .7 3.5 .7 1.5 .7-4.1 .7 4.9 .7-1.5 .7-4.2 .7-.3 .7 2.3 .7-.9 .7-.2 .7 4.6 .7-5.2 .7 .1 .7 7.6 .7-.2 .7 .5 .7-5.5 .7 3.6 .7 1.9 .7-10.3 .7 1.3 .7 4.4 .7-4.7 .7 1.5 .7 3.1 .7-4.9 .7 3.7 .7 .7 .7 5.7 .7-7.5 .7 8.4 .7-9.9 .7-.8 .7-.3 .7 10.5 .7-11.1 .7 4.2 .7 7.6 .7-5.3 .7-6.1 .7 1.6 .7 3 .7 5.6 .7-1.4 .7-8.5 .7 1.4 .7 4.3 .7-.5 .7-.4 .7 3 .7 1.8 .7-.2 .7-5.3 .7 2 .7 2.9 .7 1.8 .7-10.5 .7 8 .7-.8 .7-5.7 .7 12.5 .7-10.2 .7 1.9 .7 4.8 .7-17.1 .7 12.6 .7-6.6 .7 8.2 .7 .4 .7 1.4 .7-.4 .7 .3 .7-6.3 .7-.8 .7 .7 .7-1.9 .7-.7 .7 6.9 .7-6.7 .7 .8 .7 4.5 .7-3.2 .7 4.3 .7-5.2 .7 4.6 .7-4.7 .7 3.5 .7 5.7 .7-6.9 .7 5.2 .7-3.9 .7 .5 .7-2.1 .7 3 .7 .1 .7-6.2 .7 7.2 .7 5.8 .7-13.4 .7-1.2 .7 4.1 .7 6.6 .7-12.5 .7 11.5 .7-2 .7 1.3 .7-8 .7 9.7 .7-2 .7-2.9 .7-4.7 .7 4.5 .7 2.7 .7-7.4 .7 3.4 .7 1 .7-3.8 .7 6.9 .7 2.1 .7-8.5 .7 9.8 .7-1.6 .7-7.4 .7-2.5 .7 2.1 .7 .5 .7 .3 .7 4.8 .7-6.6 .7 6.1 .7-.5 .7-2.9 .7 2.2 .7 8.3 .7-5.3 .7-8.1 .7 6.6 .7 2.4 .7-10.1 .7 11.4 .7-8.1 .7 5.5 .7 1.6 .7 1.4 .7-3.4 .7-5.7 .7 2.1 .7 4.1 .7-7.4 .7-.6 .7 5.3 .7 5.2 .7-.5 .7-9.5 .7 2.1 .7 11.5 .7-5.3 .7-6.6 .7 .4 .7 1 .7-1.4 .7 6.1 .7 .1 .7-1.5 .7-5.5 .7 4.6 .7 4.3 .7-1.8 .7-8.4 .7 8.9 .7-7.9 .7 3.4 .7-1.1 .7 5.1 .7-3.3 .7 2.7 .7-7.3 .7 9.4 .7-2.2 .7 .1 .7 1.5 .7 1.5 .7-3.9 .7-4.6 .7-2.6 .7 .3 .7 10.3 .7-7.1 .7-2.8 .7-.7 .7 8.6 .7-6.1 .7 8.3 .7-.7 .7-7.1 .7-1.6 .7 5.9 .7 .3 .7 2.6 .7-7.1 .7 3.7 .7 3.6 .7-6.2 .7-2.1 .7-.2 .7-1.2 .7 3.3 .7-3 .7 .3 .7 2.6 .7 2.4 .7-6.6 .7 6.9 .7-.2 .7 4.8 .7-7.8 .7 .7 .7 2.4 .7-3.1 .7 3.3 .7-.5 .7 .5 .7 4.5 .7-2.3 .7 .2 .7 1.4 .7-10 .7 6.3 .7 3.7 .7-5.2 .7 4.2 .7-3.9 .7-3.2 .7-3 .7 2.4 .7 7.5 .7-.2 .7 2 .7-6.7 .7 6.6 .7-4.1 .7-4.4 .7 .9 .7-1.1 .7 5.6 .7-.2 .7-.7 .7-3.6 .7-3.7 .7 2.1 .7 8.8 .7-8.8 .7-2.1 .7 1.3 .7 1.5 .7 8 .7-9.9 .7 4.3 .7-3.7 .7 6.8 .7-2.8 .7 4.2 .7-10 .7 5.8 .7 .5 .7 3.9 .7-.7 .7-1.7 .7-1.1 .7 .3 .7 3 .7-3.5 .7 4.1 .7-3.7 .7 .7 .7-.5 .7-6.9 .7 8.9 .7-2.7 .7 5 .7-3.8 .7-4 .7-3.5 .7 5.9 .7 .4 .7-4 .7 7 .7-8.8 .7 10.5 .7-3.7 .7 3.7 .7-.9 .7 4.4 .7-12.3 .7 3.1 .7 4.6 .7-4.1 .7 .5 .7-1.1 .7 3.4 .7 2.7 .7-1.1 .7-6 .7 6.1 .7-9.9 .7 4.3 .7 6 .7-2.9 .7 1.5 .7-5.3 .7 2.5 .7 .2 .7 1.1 .7-7 .7 5.1 .7-5 .7 9.7 .7-2.2 .7 2.2 .7-3.7 .7 3.9 .7-7.7 .7-1.9 .7 6.6 .7 1.8 .7-9.9 .7 11.7 .7-2.9 .7-2.6 .7-1.6 .7 1.5 .7-2.9 .7 3 .7-.6 .7 2 .7 2 .7-2.6 .7-4.1 .7 2.4 .7-4.4 .7 5.9 .7-10.5 .7 8.6 .7 4.9 .7-2.5 .7-3.9 .7 7 .7-.4 .7-5.5 .7-3.2 .7-1 .7 3.5 .7 6.6 .7-6.9 .7-.1 .7 2.8 .7 .6 .7 .3 .7-1.7 .7 1.4 .7 2.6 .7-3 .7 3.7 .7-.5 .7-7.4 .7 6.5 .7-6.6 .7 7.8 .7-1 .7-2.6 .7-6 .7 7.6 .7-1 .7 1.4 .7-6.3 .7 2.8 .7-.1 .7-.5 .7 5.6 .7 .5 .7-2 .7-4.7 .7 5.4 .7 1 .7-15.8 .7 12.3 .7-3.2 .7-2.5 .7 7.5 .7-1.9 .7-1.9 .7 4.9 .7-5 .7 1.2 .7 4.9 .7-3.8 .7-3.1 .7 4.7 .7-1.4 .7-.8 .7 2.6 .7 1.4 .7-4.8 .7-4.9 .7 9.9 .7-.9 .7-7.9 .7 .9 .7 .3 .7-.9 .7 8.2 .7-5.7 .7 4.3 .7 4.5 .7-2.1 .7-1.2 .7-.5 .7-.7 .7-5.8 .7-1.9 .7 10.3 .7-.2 .7 .4 .7-4.9 .7-.4 .7 .4 .7-.8 .7-3.5 .7 8.9 .7-9.2 .7-1.8 .7 1 .7 3.2 .7 4 .7-5.5 .7 .5 .7 6.7 .7-1.6 .7 .4 .7-7.9 .7 5.4 .7-2.7 .7 8.2 .7-5.8 .7 2.8 .7-1.2 .7 2.3 .7-.6 .7-4.8 .7-2.4 .7-1 .7 2 .7 .5 .7-2.6 .7 10.9 .7-.8 .7-6.1 .7 4.9 .7 1.8 .7-4 .7 .9 .7 .7 .7-7.4 .7 8.8 .7-2.5 .7-.3 .7-3.5 .7 4.1 .7 1.7 .7-.9 .7-8 .7 2.5 .7 7.4 .7-13.9 .7 12.7 .7-7.6 .7 3.6 .7 1.3 .7 6.1 .7-10.2 .7 .5 .7 .5 .7 .2 .7-.1 .7 .4 .7 6.6 .7-9.2 .7 2 .7 1.2 .7 1.5 .7 4.1 .7-10.7 .7 6.8 .7 3.7 .7-10.1 .7 .6 .7 5.8 .7-.8 .7 5.5 .7-1.3 .7-10.3 .7 7.8 .7 2.7 .7 1.1 .7-11.4 .7 3.1 .7 6 .7-.2 .7-4.7 .7 1.2 .7 1.6 .7 1.1 .7-4.4 .7 .7 .7-.1 .7-4.4 .7 6.1 .7 2.1 .7 0 .7-3.8 .7 3.1 .7-5.1 .7 2 .7-3.2 .7 9.1 .7-3.8 .7 2 .7-.1 .7-6.1 .7-.4 .7-.7 .7 2.9 .7 3.9 .7 .7 .7-8 .7 1.2 .7 3.4 .7 5.3 .7 4.3 .7-8 .7-1.1 .7 3 .7 1.6 .7-5.5 .7 2.6 .7-.5 .7-4.5 .7 3.2 .7-5.7 .7 5.2 .7 2.3 .7-3.6 .7 2.7 .7-.7 .7-.4 .7-2.1 .7 5.4 .7 .5 .7-5.6 .7-3.1 .7 3.9 .7-2.3 .7-.1 .7-.1 .7 8.6 .7-6.9 .7 7.2 .7-6.3 .7-3.5 .7 3.6 .7 .8 .7-1.3 .7 4.8 .7 .9 .7-1.4 .7-2.7 .7 .9 .7-2.7 .7 3.2 .7 .2 .7 3.2 .7 0 .7-3.1 .7-2.9 .7 .1 .7 6.9 .7-8.4 .7 5.3 .7 1.3 .7-8.4 .7 8.7 .7 .5 .7-.6 .7-8.5 .7-1.4 .7 .6 .7 .8 .7 3.7 .7-.2 .7-.7 .7 3.6 .7-4.9 .7 6.5 .7 .7 .7-2.4 .7 3.9 .7-12.5 .7 6.5 .7 5.6 .7-7.2 .7 .8 .7 6.6 .7-9.1 .7-2.5 .7 .2 .7 5.5 .7 5.4 .7-4.2 .7 2.4 .7-3.8 .7 1.4 .7 .5 .7-14.3 .7 8.7 .7 9.8 .7-9.7 .7 7.2 .7-8.3 .7 7.8 .7-5.9 .7 3.1 .7-4.8 .7 4.1 .7 4.9 .7-5.7 .7-3.2 .7 9.2 .7-2.2 .7 1.7 .7-6.3 .7-3.1 .7 3.2 .7 4.1 .7-4.3 .7-3.1 .7 8.7 .7-8 .7 2.7 .7 6.9 .7-6.4 .7 1.5 .7 2.8 .7-3.6 .7-.7 .7 .1 .7-.4 .7 4.6 .7-5.1 .7-1.2 .7 5 .7-2.4 .7 4.7 .7-5.4 .7 4.4 .7-2.2 .7 2.2 .7 0 .7 .5 .7-12.8 .7 8.9 .7-2 .7 5.1 .7-5 .7 1.3 .7 1.7 .7-1.3 .7 1.1 .7 4.9 .7-7.9 .7 3.3 .7 4.9 .7-2.7 .7 3.1 .7-3.3 .7-6.4 .7 6.3 .7-4.4 .7-1.9 .7 6.8 .7-5.3 .7 4.3 .7-.4 .7-6.8 .7 8.2 .7-7.9 .7 9.9 .7 .8 .7-4.7 .7-4 .7 3.8 .7-2.1 .7 6.6 .7-4.6 .7 .3 .7-3.6 .7 4.1 .7-2.1 .7-.4 .7-2.3 .7 4.2 .7 2.1 .7-1.7 .7-5.1 .7-1.1 .7 5 .7-4.6 .7 6.7 .7 2 .7-7.4 .7 2 .7 3.6 .7 1.9 .7-7.6 .7-2.4 .7 1.3 .7 8.4 .7-4.2 .7 1.6 .7-3 .7 5.9 .7-7.7 .7 0 .7 9.1 .7-8.8 .7 7.9 .7-9.1 .7 9.1 .7-1.4 .7 1.5 .7-8.9 .7 3.2 .7 7.5V1364.8Z" fill="#8ccf68" fill-opacity="0.15" stroke="#8ccf68" stroke-width="0.8" stroke-opacity="1" stroke-linejoin="round" clip-path="url(#cw)"/>
<path d="M47.2 1364.8V1272.3l.7-.4 .7-1.4 .7 1.1 .7-1.4 .7 7.4 .7-4.7 .7 5.4 .7-5.3 .7 2.4 .7 .1 .7 3.5 .7-2.7 .7 0 .7 .4 .7 1.2 .7 5.6 .7-13.2 .7 .4 .7 2 .7 2.3 .7 3.6 .7 1.4 .7-5.1 .7-1.3 .7 5.5 .7-7.7 .7 1.1 .7 .6 .7-1.3 .7 .9 .7-1.2 .7 4.3 .7 1.4 .7-2.4 .7-1.5 .7 .5 .7-.7 .7 4.7 .7-3.8 .7-2.4 .7 4.5 .7-2.7 .7 .7 .7 3.9 .7-.1 .7 1.3 .7-3.1 .7-.1 .7-1.8 .7 2.2 .7-3.5 .7 7.4 .7-3.6 .7-.3 .7-2.4 .7-.5 .7-.9 .7-2.1 .7 .4 .7 13.4 .7-6.2 .7 2.1 .7-5 .7 5.6 .7-3.8 .7-7 .7 8.1 .7-3.3 .7 5.1 .7-10.2 .7 3.1 .7 2 .7 .9 .7-4 .7 8.8 .7-9.1 .7 1.3 .7 2.9 .7 4.8 .7-2.8 .7-.2 .7-7.4 .7 1.1 .7 .2 .7 3.8 .7-.6 .7 1.4 .7 .2 .7 3.4 .7-.5 .7-4.7 .7 5.1 .7-1.2 .7 .6 .7 .2 .7-2.9 .7-4.2 .7 4.3 .7-2.3 .7 4.5 .7-2.7 .7 3.3 .7-1 .7 1.9 .7-3.1 .7-.9 .7-1.1 .7-4.8 .7 8.6 .7-8.7 .7 9.4 .7-8.4 .7 5.5 .7 2.5 .7-1.8 .7-1.2 .7-2.9 .7 6 .7-2.7 .7 1.2 .7-3.1 .7-2.8 .7 1.6 .7-.1 .7-1.1 .7 6.4 .7 1.5 .7-1.9 .7-7.3 .7 5.1 .7 4 .7-1.4 .7-5.6 .7-2.2 .7-.6 .7 3.8 .7-1.6 .7-2.1 .7 3.3 .7-.9 .7 7.3 .7-.9 .7-1.1 .7-1.1 .7-1.4 .7-.4 .7 3.8 .7-1.2 .7-1.4 .7-6 .7-.1 .7 3.6 .7-3.7 .7 6.9 .7 0 .7-2.4 .7-2.2 .7-2.4 .7 8.6 .7-3.9 .7-2.1 .7 5.2 .7-2.1 .7-2.6 .7 1.7 .7-1.7 .7 1.2 .7 4.3 .7 .3 .7-.8 .7-8.2 .7-.1 .7 2.9 .7 5.6 .7 1.4 .7-7.9 .7-.6 .7 7.6 .7 1.8 .7-2.2 .7 .4 .7-7.1 .7 .5 .7 .5 .7-1.7 .7 .5 .7 5.3 .7 2.8 .7-.5 .7-5.6 .7 6.6 .7-9.1 .7 4.1 .7-.8 .7 2.8 .7-5.9 .7 3 .7-.5 .7 3.8 .7 2.8 .7-7.5 .7 1.6 .7 4.2 .7-8.9 .7 4.3 .7-4.2 .7 8 .7-2.5 .7 1.9 .7-1.9 .7-2.6 .7 6.7 .7-1.9 .7-5.2 .7-2.3 .7 9.6 .7-8.1 .7 3.1 .7-.3 .7-3.3 .7 6.2 .7 3.5 .7-3.4 .7-5.4 .7 6.8 .7 1.4 .7-2.4 .7-6.9 .7 3.7 .7 2.3 .7 3.6 .7-4.1 .7-4.2 .7 7.4 .7 5.5 .7-15.1 .7 10.6 .7-1.7 .7-7.7 .7 9.5 .7-.6 .7-4.2 .7 2.1 .7-7.9 .7 .8 .7-.4 .7 1.9 .7-1.3 .7 2.8 .7 .3 .7 3.2 .7-6.5 .7-.6 .7 7.1 .7-3.4 .7 3.9 .7-1.4 .7 2.2 .7-.7 .7-.4 .7-.1 .7-1.6 .7-.5 .7-.3 .7 3.4 .7-3.1 .7 1.2 .7-6.3 .7 4.6 .7-3.5 .7 5.7 .7-.1 .7-6.2 .7 .5 .7-.8 .7 2.4 .7 2 .7 2.1 .7 1 .7-.7 .7-2.8 .7 6.2 .7-8.2 .7-.6 .7 4.2 .7 .1 .7-4.1 .7 1.3 .7 4.7 .7-.1 .7-.8 .7-5.5 .7 .5 .7 2.8 .7-2.8 .7 3 .7-3.8 .7 3.7 .7-3.2 .7 5.1 .7-.2 .7 8.8 .7-10 .7 3.8 .7 .3 .7-7.4 .7 7.8 .7-8.7 .7 9.4 .7-6.9 .7 3.2 .7-7.2 .7 3.4 .7 6.8 .7-1.2 .7-1.1 .7-1.2 .7 2.5 .7-5.5 .7 3.1 .7-4.1 .7 3.4 .7 4.8 .7-4.1 .7-6 .7-.4 .7 9.3 .7-6.1 .7 3.5 .7 3.2 .7-7 .7-1.7 .7 3.1 .7-1.1 .7 5.1 .7-8 .7 1.3 .7 .2 .7 1.2 .7 .2 .7 2 .7-5.4 .7 7.6 .7-4.8 .7-.3 .7 1.5 .7 .2 .7 3.4 .7-5.1 .7 7.6 .7 .4 .7-10.5 .7 8.6 .7-1.2 .7-4.9 .7 5.8 .7-1.5 .7-1 .7-1.9 .7-3.2 .7 6.7 .7-2 .7-9.8 .7 14.2 .7-3.9 .7 1.6 .7-4.4 .7 .4 .7 4.6 .7 1.4 .7-3.2 .7 .9 .7-1.8 .7 2.4 .7-6 .7 7.1 .7-3.7 .7 5.2 .7-1.9 .7-1.9 .7 .1 .7-3.1 .7 6.3 .7-2.9 .7-6.3 .7 6.5 .7-4.8 .7 6.5 .7 1.3 .7-9.8 .7 4.8 .7-.7 .7-1.7 .7 6.5 .7-7.2 .7 4.3 .7-.6 .7-1.3 .7-2.3 .7 8.2 .7-5 .7-1.5 .7-3.5 .7 5.7 .7-1.9 .7 2.3 .7-3.6 .7-2.4 .7 6.4 .7-5.7 .7 4.3 .7 3 .7-5.8 .7 10.3 .7-3.3 .7-6.5 .7-3.2 .7 8.9 .7-.3 .7-1.6 .7-2.8 .7-1.5 .7 2.1 .7-1.1 .7 11.4 .7-8.6 .7-3.4 .7 5.9 .7-7.1 .7-.5 .7 4.9 .7-5.5 .7 7.2 .7-1.2 .7-7 .7 8 .7 1.5 .7-1.4 .7-6.7 .7 5.9 .7 2.4 .7-.8 .7-7 .7 1.5 .7-1 .7 6.5 .7-6.7 .7-.7 .7 5.7 .7 .8 .7 1.7 .7-4.4 .7 1 .7 1.7 .7 0 .7-2.7 .7-3.6 .7 9 .7-.5 .7-3.4 .7-5.5 .7 5.8 .7-5.4 .7 .3 .7 8.1 .7-9.5 .7 6.6 .7-2.8 .7 6 .7-6.8 .7 4.2 .7 .8 .7-6 .7 3 .7-2.9 .7 8.1 .7-9.3 .7 4.3 .7 .5 .7 1.4 .7-4.7 .7-1.6 .7 3.8 .7-2.8 .7 .6 .7 .1 .7-.5 .7-1.1 .7 11.2 .7-2.1 .7-10.6 .7 10 .7-4.2 .7-.6 .7 .2 .7 2.7 .7 .7 .7 1.8 .7-4.3 .7 3.8 .7-1.3 .7-6.8 .7 2.7 .7-4.7 .7 8.3 .7-1.5 .7-3.4 .7-1.7 .7 3.4 .7 4.6 .7-1.7 .7-2.3 .7 1.8 .7 3.3 .7-8.1 .7 2.8 .7 2.7 .7-6.8 .7 4.7 .7 4.3 .7-5.8 .7 .8 .7 2 .7 2.9 .7-4.9 .7-4.5 .7 3.3 .7 2 .7-3.2 .7 .9 .7-1.3 .7-2.4 .7 7 .7 .5 .7-2.2 .7-3.1 .7-1.1 .7 4.7 .7 2 .7-.5 .7-2.4 .7-2.3 .7 1.1 .7 5.3 .7-6.5 .7 1.2 .7-1.7 .7 7.4 .7-3.4 .7 .5 .7-5.7 .7 5.2 .7-3.8 .7 7.5 .7 0 .7-8.8 .7 5.5 .7-4.5 .7 8.5 .7-3 .7 .2 .7 2.6 .7-1.9 .7-7.2 .7 7.9 .7-.5 .7-4.2 .7-2.5 .7 1 .7 4.8 .7-6.1 .7 4.1 .7-.2 .7-1.4 .7 .1 .7 1 .7-.6 .7 5.9 .7-5.3 .7 1 .7 1.2 .7-6.6 .7 5.2 .7 .8 .7 3.9 .7-.8 .7 .4 .7-5.8 .7-1.2 .7 3 .7 1.2 .7 1.2 .7-3.9 .7 3.3 .7 2.6 .7-1 .7-1.6 .7-4.5 .7 2.8 .7-1.2 .7-1.7 .7-1.4 .7 4.9 .7-3.8 .7 .3 .7 5.3 .7-6.3 .7 5.2 .7-.1 .7-1 .7-3.3 .7 3.3 .7-4.7 .7 5.2 .7-1.4 .7 3.6 .7-3.7 .7 3.2 .7-3.8 .7-.1 .7-3.3 .7 1.4 .7-.4 .7 4.3 .7-.1 .7 0 .7 .5 .7-2.9 .7-4.2 .7 8 .7-1.1 .7-7 .7 2.1 .7-.9 .7 4 .7-3.5 .7 7.7 .7 1.2 .7-4.7 .7 4.1 .7-8.6 .7 .1 .7 7.3 .7-6.1 .7 2.6 .7 1.5 .7 .4 .7-3.2 .7 5.2 .7 .3 .7-4.1 .7-1.8 .7 2.5 .7-6.1 .7 8.4 .7-.5 .7-3.8 .7-1.7 .7-1.6 .7 2.2 .7-2.5 .7 7.9 .7 2 .7-5.5 .7-9.4 .7 19 .7-8 .7 .2 .7-4.6 .7-.7 .7 0 .7 .6 .7 4.2 .7 .2 .7 2 .7-6.5 .7-1 .7 5.7 .7-5.8 .7-.2 .7 6 .7-.1 .7-4 .7-2.1 .7 7.7 .7-5.2 .7-.2 .7-2.6 .7 7.8 .7-7.5 .7 3.6 .7 4.2 .7-1.1 .7-5.4 .7 3.6 .7-3.2 .7 4.5 .7 4.6 .7-8.8 .7 5.2 .7-4.2 .7 2 .7 4 .7-6.3 .7 4.4 .7-2 .7 .7 .7-4.1 .7 8 .7-4.1 .7-3.6 .7 5.3 .7-2.5 .7-4.2 .7 5.2 .7-1.7 .7 1.4 .7-.6 .7 3.5 .7-1.4 .7 .8 .7 .8 .7-2.9 .7-1.5 .7-4.6 .7 1.5 .7-1.3 .7 6.8 .7-3.1 .7-1.5 .7 7.4 .7-3 .7-2 .7-.5 .7 .6 .7-.2 .7-2.8 .7-.5 .7 4.3 .7 3.3 .7 .1 .7-8.4 .7 8.2 .7-3 .7 4.1 .7-7.2 .7 4.8 .7 .3 .7 .4 .7-6.6 .7-.6 .7 .9 .7-.8 .7 7.9 .7 1.5 .7-5.6 .7 5.2 .7-8.7 .7 6.2 .7-9.7 .7 4 .7 2.7 .7 4 .7 .2 .7-3 .7-1.5 .7 4 .7-2.7 .7-2 .7-.7 .7 3.5 .7 3.1 .7-7.2 .7-1.5 .7-.4 .7 2.2 .7 7.6 .7-10 .7 5.2 .7-2.6 .7 1.9 .7-5.1 .7 4.3 .7 4.8 .7-1.2 .7 2.3 .7-4 .7-1.3 .7-1 .7-2.5 .7 .5 .7 2 .7 4.6 .7 .4 .7-11.8 .7 12.8 .7-6.8 .7-3 .7 5.9 .7 2.6 .7-4.9 .7 1.6 .7 5.2 .7-.5 .7-6.3 .7 4.6 .7-4.4 .7 6.8 .7-1.1 .7-5.8 .7 1.9 .7 3.8 .7 1.5 .7-10.1 .7 .5 .7 8.2 .7-4.4 .7-.1 .7 5 .7-2.7 .7-1.5 .7-1.7 .7 3.6 .7-7.4 .7 3 .7-1.7 .7-.5 .7 5.7 .7-.9 .7-1.4 .7-3.7 .7 6.9 .7-.9 .7 2.7 .7-7 .7 .3 .7-1.8 .7 .4 .7 6.7 .7-5.9 .7 3.1 .7 2.1 .7-5.1 .7 8.4 .7-7.3 .7 2.8 .7-6 .7 5.5 .7 .4 .7-4.6 .7 9.3 .7-7.1 .7 1.6 .7 4.8 .7-1.4 .7-6.9 .7 8.7 .7-14.2 .7 5.2 .7 .9 .7 7.7 .7-9.2 .7-.6 .7-.2 .7 3.6 .7 .5 .7 .2 .7 1 .7-.6 .7-2 .7 3.9 .7-5.7 .7-.7 .7 10.1 .7 0 .7-3.1 .7-3 .7-3.7 .7 7.9 .7-3 .7-3.5 .7 1.2 .7 1.7 .7 3.3 .7-2.6 .7-4.5 .7 8.8 .7-5.3 .7-.3 .7-.3 .7-3 .7 8.7 .7-8 .7 4.4 .7 3.7 .7-5.9 .7-1.1 .7-.9 .7 2 .7-.9 .7 4.5 .7 2.5 .7 .2 .7-5.6 .7 3.5 .7-5.9 .7 2.9 .7-3.8 .7 3.8 .7 1.9 .7 .9 .7-.6 .7-2.7 .7 1.5 .7 3 .7 1.6 .7-.5 .7-6.8 .7-.1 .7-2.3 .7 .3 .7 3.1 .7-3.8 .7 .8 .7 4.9 .7 5.1 .7-6.1 .7 2.8 .7-1.7 .7-1.9 .7 1.6 .7 4.1 .7-9.1 .7 2.2 .7-2.6 .7 0 .7 .3 .7 6.4 .7 2.2 .7-4.9 .7 1.2 .7 1.9 .7-6.2 .7 1.3 .7 3.4 .7 .8 .7-3.6 .7 1.6 .7-4.2 .7 8.1 .7-1.3 .7-1 .7-6.2 .7 3.4 .7 2.8 .7-.3 .7 1.8 .7-5.8 .7-1.2 .7 3.3 .7-1.1 .7-3.2 .7 7.4 .7 2 .7 1.3 .7-6 .7 2.1 .7 .1 .7-4.4 .7 2.6 .7 2 .7 1.1 .7-7.1 .7 7.1 .7 1.2 .7 1.1 .7-7.3 .7 3.9 .7 3.4 .7-2.6 .7 1.7 .7-6.5 .7-2.1 .7 9.1 .7-5.8 .7-2.5 .7 2.1 .7-3.2 .7 9.4 .7-1.5 .7-.2 .7-.7 .7 .7 .7-6.7 .7 1.5 .7-.1 .7 2.1 .7-1.5 .7 4.6 .7-2.1 .7 .5 .7-2.4 .7 4.5 .7-7.6 .7 8.7 .7-4.2 .7 3.7 .7 .3 .7-6.9 .7 4.5 .7 1.1 .7-7 .7 .3 .7 4.7 .7-1.6 .7 3 .7-1.7 .7 1.1 .7 1.1 .7-.7 .7-6.2 .7 2.4 .7-2.4 .7 8.6 .7-7.5 .7 6.8 .7-5.8 .7 2 .7-5.1 .7 2.5 .7-.2 .7 4.1 .7-3.6 .7-1.8 .7 .1 .7-1.6 .7 3.8 .7 2.8 .7 2.6 .7-3.1 .7 .5 .7-1.4 .7 2 .7-6.8 .7 9.7 .7-2.7 .7 .4 .7-8 .7 2.9 .7 .2 .7 4.8 .7-.9 .7-4.7 .7 4.2 .7-6.2 .7 9.3 .7 .3 .7-1.5 .7 1.3 .7 .3 .7-8.9 .7-3.6 .7 3.1 .7 .4 .7 2.9 .7-3.3 .7 15.2 .7-6.9 .7-.4 .7-7.8 .7 9.5 .7-3.6 .7-3.5 .7 3.3 .7-2.4 .7-5 .7 5 .7-1.5 .7-2.4 .7 4.1 .7 2.9 .7 3.9 .7-10.7 .7 3.1 .7-1.6 .7 6.5 .7-7.2 .7 1.3 .7 3.3 .7 5.2 .7-8.7 .7 6.4 .7-3.8 .7-1.4 .7-.2 .7 5.7 .7-5.1 .7 2.1 .7-4 .7 2.3 .7-2.7 .7 9.3 .7-10.8 .7 3.8 .7-.8 .7 0 .7-1.7 .7-1 .7 1.8 .7 5 .7 2.2 .7-8.5 .7 9.7 .7-9.8 .7 4.3 .7 0 .7-.9 .7 6.1 .7-8.2 .7-.9 .7 9.2 .7-6.7 .7 2.4 .7-4.4 .7 7.9 .7-7.2 .7 2 .7-3.9 .7 9.4 .7-.8 .7-1.5 .7-7.3 .7 4.9 .7-3.2 .7 2.5 .7 5.2 .7-9.6 .7 .3 .7 8 .7 2.3 .7-9.3 .7 2.1 .7-1 .7 3.5 .7-4.1 .7 .3 .7 7.7 .7-5.9 .7-3.1 .7 .5 .7 .4 .7 5.5 .7-3.3 .7 .8 .7 3 .7-3 .7 4.5 .7-5.7 .7 4.1 .7-3.8 .7 .1 .7 4.6 .7-2.2 .7 2.4 .7 .3 .7 .9 .7-8.4 .7 .1 .7 1.3 .7 2.8 .7 3 .7 2.3 .7-9.8 .7 6.3 .7-1.5 .7-.1 .7 4.1 .7-1.6 .7 2.5 .7-3.1 .7-2.1 .7-4.7 .7 3.3 .7 6.2 .7-6.3 .7-1.2 .7-1.3 .7 6.9 .7-6 .7 3.7 .7-6 .7 7.5 .7-5 .7 3 .7-3.6 .7 3 .7-1.2 .7 2.4 .7 2.1 .7-7.1 .7 6.4 .7-2 .7 0 .7 0 .7-5 .7 6.6 .7 2.8 .7-4.3 .7-5.6 .7 2.7 .7 3.4 .7 1 .7-4.4 .7 6.1 .7-5.1 .7 2.7 .7-5.7 .7 2.3 .7-1.9 .7 4.2 .7 .6 .7 .6 .7 3 .7-.9 .7-1.7 .7 .7 .7-7.3 .7-.5 .7 5.4 .7 1.7 .7-2.2 .7 2.4 .7-2.1 .7-1.1 .7 1.7 .7-5.7 .7 6 .7-3.3 .7 .2 .7 7.5 .7-9.8 .7 2.3 .7-.3 .7 0 .7 4.9 .7-5.6 .7 4 .7-2 .7-.6 .7 4 .7-2.2 .7-2.3 .7 2.8 .7 4.5 .7-3.3 .7-1.9 .7 3.3 .7-5.4 .7 7.1 .7-2.7 .7 3.3 .7-4.2 .7 2.1 .7 1.7 .7-2.7 .7-3.9 .7 2.6 .7-3.4 .7 .6 .7 7.1 .7 .4 .7-8.3 .7-.6 .7-1.4 .7 5.2 .7 3.9 .7 .2 .7-6.7 .7 .8 .7-2 .7-.3 .7 7.1 .7-5.3 .7 3.7 .7 2.8 .7-.5 .7-9.3 .7 8.6 .7-5.3 .7 5.8 .7-8.8 .7 11.5 .7-3.1 .7 1.1 .7-.9 .7-8.2 .7 1.4 .7 5.9 .7-3.2 .7-1.6 .7-1.7 .7-.1 .7-1.5 .7 8.6 .7-4.9 .7 4.1 .7-.7 .7-3.8 .7 7.1 .7-9.2 .7 3.4 .7-.7 .7 1.1 .7 5.2 .7-5.2 .7-.9 .7 1.9 .7-5.4 .7 8.9 .7-3.9 .7-4.6 .7 1.2 .7 7.6 .7-.2 .7-5.3 .7 6.2 .7-5.5 .7 5.2 .7-.6 .7-2.1 .7-6.7 .7 5.6 .7-.2 .7 .4 .7-4.8 .7 .7 .7 3.4 .7-6 .7 4.2 .7 6.6 .7-4.7 .7 4.7 .7-8.9 .7 6.2 .7-1.4 .7-6.3 .7 4.5 .7-2.1 .7-4.1 .7 11.5 .7-1.4 .7-.4 .7-6.1 .7 .7 .7-2.9 .7 10.1 .7-2.1 .7-4.1 .7 5.6 .7-2.9 .7-4 .7 2.8 .7-.8 .7-2.6 .7-.4 .7 6.5 .7 2 .7 .5 .7-1.2 .7-3.8 .7-1.6 .7 5.3 .7-8.3 .7 3 .7 2.8 .7 2.4 .7 .1 .7-8.4 .7 .8 .7 8.2 .7-9.8 .7 .1 .7 2.6 .7-1.2 .7 .7 .7 .2 .7 1.7 .7-1.9 .7 6.1 .7 1.2 .7-2.8 .7-.1 .7-3.3 .7-2.5 .7 6.6 .7-6.4 .7 7.5 .7-3.5 .7 1.9 .7 .5 .7-2.6 .7 5.4 .7-10.4 .7 .1 .7 .3 .7 6.8 .7 2.7 .7-1.8 .7-1.7 .7 1.4 .7-7.6 .7 10.1 .7-8.6 .7 1.5 .7-2.5 .7 2.3 .7 6.7 .7-4.8 .7-2.8 .7 .9 .7 2.3 .7 3.3 .7-6.7 .7-.7 .7 4.3 .7 3.4 .7-3.9 .7-.4 .7-3.3 .7 1.9 .7 6.3 .7-.6 .7 1.2 .7-2.6 .7 2.8 .7-9.4 .7 6.1 .7-5 .7 1.3 .7-.7 .7-.8 .7 6.2 .7-1.2 .7 .2 .7-6.6 .7 4.5 .7 .8 .7-.1 .7-.8 .7 4.9 .7-5.3 .7 .2 .7-4.1 .7 5.5 .7 4.4 .7-4.4 .7 2.1 .7-5.1 .7 2.5 .7-.2 .7 1.6 .7 1 .7-7.4 .7 9.2 .7-9.4 .7 3.9 .7-4 .7 4.4 .7-3.5 .7 9.5 .7-7.6 .7-2.4 .7 6.8 .7 0 .7-5.3 .7 8.5 .7-1.2 .7-1.4 .7-7.5 .7 .9 .7 1.2 .7 3.1 .7-.5 .7 5.6 .7-1.7 .7-9.1 .7 2.9 .7 .7 .7 1.6 .7 1.6 .7 2.2 .7-2.5 .7-2 .7 3.5 .7-1.7 .7 2.2 .7-5.4 .7 .6 .7-2.6 .7 7.9 .7-6.9 .7-.9 .7 7.1 .7-11.2 .7 5.2 .7 .9 .7-.6 .7-2.7 .7 2.9 .7 2.1 .7-4.7 .7 2 .7 .3 .7 5.7 .7 2.6 .7-2.3 .7-3.9 .7-3 .7 8.3 .7-5.6 .7 1.2 .7-4.7 .7 7.3 .7 1.1 .7-1.2 .7-.5 .7-5.4 .7 2.2 .7 1.4 .7 2.3 .7-3.7 .7-4.2 .7 2 .7 7.5 .7-2.7 .7 1 .7-.1 .7-1.9 .7-1.5 .7 5.6 .7-6.1 .7-1.2 .7-1.7 .7 4.9 .7-3.7 .7 2.9 .7 2.7 .7-2.5 .7-2.3 .7 7.6 .7-6.5 .7 .1 .7-.1 .7-3.3 .7 7.1 .7-.5 .7 1.7 .7-1.5 .7-5.6 .7 3.2 .7 2.3 .7-6 .7-1.2 .7 .8 .7 1.2 .7 4.4 .7-2.2 .7 5.2 .7-6 .7-3.7 .7 .9 .7-2.2 .7 2.4 .7 1.9 .7-2.9 .7 .6 .7 8.5 .7 .5 .7-7.1 .7 8 .7-6.5 .7-2.3 .7 2.5 .7 1.6 .7 2.6 .7 1.3 .7-9.4 .7 2 .7 3.6 .7 .8 .7-3 .7 1.2 .7 4.7 .7-9.6 .7 8.2 .7-6.3 .7-2.1 .7 9.3 .7-2.3 .7-4.5 .7 1.7 .7-3.6 .7 7.3 .7 .3 .7 1.9 .7-5.4 .7-1.7 .7-.8 .7 1.9 .7-1.7 .7 .8 .7 6.5 .7-8 .7 3.9 .7 2.2 .7-7.6 .7 .4 .7 9.8 .7-1.3 .7 .1 .7-2.7 .7-5.7 .7 .5 .7 8.8 .7-.7 .7-.3 .7-6.6 .7 6.2 .7-6.9 .7 3.8 .7 2.2 .7-4.6 .7 7.5 .7-.7 .7-9 .7 4.4 .7 2.2 .7-1.5 .7 4.5 .7-8.4 .7 4.7 .7-6.8 .7 6.6 .7 .8 .7-7.2 .7 7.9 .7-7.4 .7 5.2 .7 3.5 .7-8.9 .7 1.8 .7-2.2 .7 8.7 .7-3.4 .7-3.9 .7 3.4 .7 4.4 .7-.6 .7 .5 .7-8.9 .7 2.2 .7-2.2 .7 3.7 .7 2.5 .7-4.7 .7 1.9 .7 6.4 .7-5.4 .7-4 .7 8 .7-1.9 .7 8.5 .7-9.2 .7-.7 .7-.1 .7-2 .7-3.5 .7 1.1 .7 3.1 .7 5.4 .7-8.8 .7 3.9 .7 4.7 .7 1.3 .7-3.1 .7-6 .7 2.5 .7-.1 .7 3.9 .7-4.6 .7 1.3 .7-3 .7 3.3 .7 3.6 .7 2.5 .7-8.6 .7 8.3 .7-.2 .7-6 .7 1.2 .7-1.4 .7 6.7 .7-4.7 .7-.7 .7 .6 .7-.7 .7-1.6 .7-2.7 .7 3.3 .7-1.2 .7 5.9 .7-6.2 .7 4.6 .7-1.9 .7-1.5 .7 4.4 .7-7.5 .7-.8 .7 8.3 .7-6 .7 4 .7 .6 .7-3.9 .7-.8 .7 6.9 .7 1.5 .7-9.3 .7 1 .7 7.8 .7-3.4 .7-2.3 .7-4 .7 6 .7 2.8 .7-4.2 .7-2 .7 .9 .7 6.8 .7-8.8 .7-2 .7 2.1 .7 3.8 .7 4.8 .7-1.5 .7-2.9 .7 3.9 .7-9.5 .7 2.3 .7 6.5 .7-4.7 .7 .1 .7-4.8 .7 .3 .7 9.1 .7-3.5 .7-3.7 .7 3 .7-4 .7 7.3 .7-6.3 .7 4.3 .7-1.8 .7 2.2 .7 2.3 .7-4.6 .7 3.5 .7-6 .7 1.5 .7 6.6 .7-5.8 .7-.2 .7-1.6 .7-.4 .7 4.7 .7-2.4 .7 5.9 .7-5.9 .7 4.9 .7-2.5 .7-2.3 .7 4.4 .7-6.3 .7 3.4 .7-.3 .7 1.9 .7 .3 .7-5.7 .7 3.6 .7 4.1 .7-6 .7 4 .7 1.5 .7 .9 .7 .3 .7-.4 .7-.4 .7 .8 .7-1.1 .7-6.9 .7 4.8 .7 2.3 .7 1 .7-2.6 .7-4.7 .7 5.3 .7-8.6 .7 .7 .7 6.5 .7-5.4 .7-1 .7 4.9 .7 1.1 .7 .8 .7 3 .7-3 .7-3.3 .7 6.1 .7-6.3 .7 6.3 .7-7.6 .7 3 .7-3.9 .7 .1 .7 3.9 .7 .5 .7 .4 .7-2.6 .7 5.5 .7 .5 .7-4.6 .7-1.4 .7 2.6 .7 1.8 .7-4.6 .7-1.3 .7-3.1 .7 7.9 .7-5.6 .7 5.6 .7-2.8 .7-4.6 .7 5.3 .7-1.2 .7-1.1 .7 5.2 .7-6.5 .7 3.6 .7 0 .7 4 .7 1.1 .7-4.4 .7-.8 .7 2.4 .7-3.4 .7 0 .7-1.6 .7 4.9 .7-2.5 .7 .6 .7-4.2 .7 8.6 .7-6 .7-2 .7 2.5 .7 1.6 .7 .1 .7 .9 .7 1.2 .7-2.5 .7-.3 .7 1.7 .7-5.7 .7 3.6 .7-2.5 .7 .7 .7-1.5 .7 .4 .7 .5 .7 1.7 .7 2.2 .7 3.5 .7-2.3 .7-2.4 .7-3.1 .7-1.3 .7 3.2 .7 3.3 .7-5.2 .7 8.1 .7-.1 .7-3.8 .7-1.8 .7-1.3 .7 2.7 .7-1.7 .7 6 .7-1.8 .7-3 .7 4 .7-2.9 .7-1.3 .7-2.5 .7-1.3 .7 7.9 .7-6.5 .7-3.3 .7 5 .7 .1 .7-2 .7 4.4 .7-4.2 .7 2.9 .7 1.8 .7 2.1 .7-3.6 .7-.7 .7 .4 .7 3.3 .7-9.4 .7 5 .7-.8 .7 .5 .7 5.2 .7 .4 .7-5.6 .7-2.3 .7 2.5 .7 0 .7-4.6 .7 .2 .7-.4 .7 1.6 .7 5.7 .7-4.3 .7 3.8 .7-5.3 .7 7.5 .7-6.5 .7 7.9 .7-1.6 .7-.2 .7-4.8 .7-4 .7 3.8 .7-2 .7-1.6 .7 2.3 .7 6.6 .7 1.6 .7-2.9 .7-.7 .7 2.3 .7-9.4 .7-.1 .7 10.1 .7-9.3 .7 10 .7-9.9 .7 3.4 .7-1.9 .7-2.4 .7 10.7 .7-10.4 .7 1 .7 3.8 .7 2.6 .7 .5 .7 1.5 .7-7.1 .7 7.7 .7-1.8 .7-.2 .7-3.4 .7-4.9 .7 7.3 .7-6.7 .7 5.2 .7 3 .7-5.2 .7-2.8 .7 3.4 .7 2.7 .7-6.6 .7 3.4 .7 4.5 .7 .4 .7-1.4 .7-1.2 .7 2.2 .7 2.1 .7-4.5 .7 4.6 .7-7 .7-2.8 .7 7.2 .7-7.8 .7 4.6 .7-3.4 .7 5.7 .7-4.1 .7-.2 .7 7.7 .7-8.6 .7 2 .7 4.4 .7 2.4 .7-1.9 .7-2.1 .7 3.4 .7-9.6 .7 1 .7 .5 .7 1.7 .7 .5 .7 .6 .7 2.6 .7 .3 .7 2.4 .7-8.3 .7 5.1 .7 2.8 .7-9.4 .7 9.2 .7-5.6 .7-2.9 .7 6.4 .7-4.8 .7 3.6 .7-3.3 .7-2.7 .7 3.7 .7-2.6 .7 2.4 .7 5.7 .7-9.1 .7 6.2 .7-4.8 .7 1.7 .7 2.7 .7-4.8 .7 5.2 .7-3.4 .7-.7 .7 .1 .7-.5 .7 5.1 .7 .9 .7 2 .7-3.6 .7-2.7 .7-.5 .7 1.8 .7-4 .7 5.3 .7-.2 .7-3 .7 6.4 .7-8.9 .7 2.6 .7 7.5 .7-6.4 .7-3.5 .7 8.5 .7 1.1 .7-5.3 .7-4.7 .7 4 .7 6.2 .7-2.9 .7 2.6 .7-7.9 .7-1.7 .7-.2 .7 10.2 .7-10.4 .7 4.2 .7 6.3 .7-6.5 .7 1 .7-3.1 .7 7 .7-5.1 .7 1 .7 1.6 .7-2.5 .7 .9 .7-4.5 .7 8.2 .7-8.4 .7 2.6 .7 3.1 .7-4 .7-1.8 .7 6.5 .7 2.6 .7-4.5 .7-3.6 .7 .5 .7 3.1 .7-3.9 .7 1.3 .7 6.8 .7-1.2 .7 .8 .7-7.5 .7 4.6 .7 4 .7-7.6 .7 2.4 .7-2.9 .7 9.3 .7-1.8 .7-2.6 .7-1.7 .7 5.8 .7-3.9 .7-11.6 .7 6.4 .7 9.4 .7-10.4 .7 4 .7 1.8 .7 3.3 .7-3.6 .7-4.4 .7 8.4 .7-4.6 .7-1.1 .7-3 .7 2.4 .7 3 .7-4.4 .7 .9 .7-.9 .7 7.7 .7-3.7 .7-3.6 .7 8.1 .7-9.6 .7 8.8 .7-5.4 .7-4.6 .7 6.7 .7 1.1 .7 2.4 .7 .5 .7-3.2 .7-2.8 .7 3.6 .7-3.2 .7-2.6 .7 6 .7 .9 .7-1.5 .7 2.4 .7-2.5 .7 .2 .7-3.4 .7-3.8 .7 4.6 .7 4.4 .7-.1 .7-5.4 .7 .3 .7-1 .7-1.5 .7 2.2 .7-1.9 .7 .8 .7 4.2 .7-3.9 .7-3 .7 3.1 .7 7.3 .7-6.6 .7 .8 .7 2.3 .7-5.2 .7 .5 .7 6.7 .7-6.8 .7 7.1 .7 .2 .7-9.4 .7 .7 .7 3.5 .7-2 .7 3.1 .7-2 .7 5.7 .7-5 .7 3.1 .7-7.6 .7 6.8 .7-4.2 .7 6.7 .7 .2 .7-3 .7 3.8 .7-2.9 .7 2.9 .7-5.1 .7 2.9 .7-4.6 .7 1.6 .7 3.5 .7-5.2 .7 .1 .7-3.5 .7 9.6 .7-5.5 .7 4.9 .7-3.1 .7-5.3 .7 5.8 .7 1.4 .7-2.8 .7 .4 .7 5.5 .7-4.2 .7-4.3 .7 5.9 .7-5.8 .7-1.3 .7 3.9 .7 3.6 .7-1.2 .7-2.6 .7 .7 .7 4.4 .7-8.1 .7 5.3 .7 1.6 .7-.9 .7-5.6 .7 4.9 .7 .9 .7-3.4 .7-1.3 .7 2.6 .7 .6 .7 2.1 .7-6.2 .7 7 .7-3.3 .7-5.5 .7-.2 .7 6 .7-5.5 .7 3.3 .7-2.4 .7 3 .7 3.4 .7-3.1 .7-.7 .7 4.2 .7-3.1 .7-2.8 .7 6.1 .7-4.9 .7-3.1 .7 2.5 .7 4 .7 2.4 .7-4.6 .7 5.4 .7-.4 .7-.8 .7-6.5 .7 4.6 .7-.1 .7-5.7 .7 5 .7-5.7 .7 2.3 .7 4.4 .7-2.3 .7-1.6 .7 3 .7 2.3 .7-.7 .7-8 .7 1.8 .7 1.9 .7 1.7 .7 3.4 .7-.6 .7 .3 .7 2 .7-.1 .7-7.1 .7 4 .7-7.3 .7 5.9 .7 1.9 .7-4.2 .7 0 .7 2 .7 3.1 .7-5.8 .7-2.6 .7 4 .7 3.5 .7-3 .7 1.1 .7-.4 .7-2.5 .7-3 .7 7.1 .7-4.2 .7 2.4 .7-1.7 .7 4.9 .7-3.1 .7-3.5 .7-1.4 .7 7.9 .7 1.6 .7-2.2 .7-6.5 .7 1.4 .7 5.2 .7-1.4 .7-1.3 .7-3 .7-2 .7 2.2 .7-2.2 .7 2.7 .7 6.5 .7-9.8 .7 9.6 .7-1.4 .7-.9 .7-1.7 .7-4.7 .7 1 .7-.1V1364.8Z" fill="#8ccf68" fill-opacity="0.15" stroke="#8ccf68" stroke-width="0.8" stroke-opacity="1" stroke-linejoin="round" clip-path="url(#cw)"/>
<path d="M47.2 1364.8V1302.3l1-3.2 1 3.2 1 0 1-1.7 1-.8 1-2.3 1 4.8 1 0 1 0 1 0 1-3.6 1 3.6 1 1.3 1 2.9 1 .2 1-4.4 1 0 1 0 1 .9 1-.9 1 0 1 0 1 0 1 .6 1-.6 1 0 1 0 1-4.5 1 5.8 1-1.3 1-.1 1 .1 1 0 1 0 1 0 1-4 1 4 1 0 1 0 1 0 1 0 1 0 1-3.7 1 3.7 1 4.4 1-4.4 1 0 1 1.6 1-1.6 1 0 1 3.6 1-3.6 1 0 1 2.6 1-2.6 1 0 1 0 1 0 1 0 1 0 1 0 1 0 1 0 1 4.1 1-4.1 1 0 1 0 1 0 1 0 1-.1 1-2 1 2.1 1 0 1 0 1 3.6 1-3.6 1 0 1 0 1 0 1 0 1 0 1 0 1 0 1 0 1 0 1 0 1 0 1-3 1 3 1 0 1 0 1 0 1 0 1 0 1 0 1 0 1-4.6 1 8.6 1-4 1 0 1-5.7 1 6.9 1-1.2 1 0 1 0 1-5.4 1 5.4 1-1.7 1 1.7 1 0 1 0 1 0 1 0 1-1.6 1-3.8 1 5.4 1 3.2 1-3.2 1 0 1-3.6 1 5.3 1-1.7 1 0 1 0 1-3.7 1 3.7 1 0 1 0 1 0 1 0 1 1.2 1-2.9 1 1.7 1 0 1 2.6 1-2.6 1 0 1 0 1 0 1-5 1 5 1 0 1 0 1 0 1 0 1 0 1 0 1 0 1 0 1-.8 1 .8 1 0 1 1 1 3 1-4 1 4.1 1-4.1 1 4.1 1-2.5 1-1.6 1 0 1 0 1 0 1 0 1 0 1 0 1 0 1 2.2 1-.6 1-1.6 1 0 1 0 1 0 1-4 1 4 1 0 1 0 1 0 1 0 1 0 1 0 1 0 1 0 1 0 1 0 1 0 1 4.8 1-4.8 1 0 1 0 1 0 1 0 1 0 1 0 1 0 1-4.4 1 2.5 1 1.9 1 0 1-3.2 1 3.2 1 0 1 0 1 0 1 0 1 0 1 0 1 0 1 0 1 0 1-5.7 1 2.3 1 3.4 1 3.9 1-3.9 1 0 1 0 1 0 1 0 1 0 1 0 1-4.4 1 4.4 1 0 1 0 1-3.5 1 3.5 1-3.4 1 3.4 1 0 1 0 1 1.9 1-4.1 1 2.2 1 0 1 3.6 1-6.9 1 3.3 1 0 1 0 1-3.3 1-.8 1 4.1 1 4.4 1-4.4 1 0 1-3.3 1 3.3 1 0 1 0 1 0 1 4 1-4 1 0 1 0 1 0 1 0 1 1.3 1-6.2 1 4.9 1 0 1 0 1 0 1-.6 1 4 1-3.4 1 0 1-2.9 1 3.7 1-.8 1 0 1 0 1 0 1 0 1 0 1 0 1 0 1-3.9 1 3.9 1 0 1 0 1 4.8 1-7.7 1 2.9 1 0 1 0 1 0 1 0 1-2.4 1 2.4 1 0 1-1.2 1 3.8 1-2.9 1 .3 1 0 1 0 1 0 1-.5 1 .5 1 1.3 1-4.8 1 3.5 1-3.9 1 3.9 1 2 1-2 1 0 1 0 1 0 1 0 1 0 1-4.8 1 1.3 1 3.5 1 0 1 0 1-4.5 1 4.5 1-4.1 1 4.9 1-.8 1 0 1 0 1 0 1 0 1 0 1 3.6 1-3.6 1-3.3 1 8.1 1-4.8 1 1.2 1-7 1 5.8 1 0 1 0 1 0 1 0 1-2 1 2 1 0 1 2.5 1-2.5 1 0 1-1.9 1 1.9 1 0 1 1.8 1-1.8 1 2.4 1-2.4 1 0 1 0 1-1.6 1 5.4 1 .5 1-4.3 1 0 1 0 1 0 1 0 1 0 1 0 1 0 1 1.8 1-1.8 1 0 1 0 1 0 1 0 1 2.9 1-2.9 1 0 1 0 1 4.7 1-4.7 1 0 1 0 1-2.6 1-1.6 1 4.2 1 0 1 0 1 0 1 0 1-.8 1 .8 1-1.8 1 2.4 1-.6 1 0 1 0 1 0 1-1.7 1-2.6 1 5.6 1-4 1 2.7 1-1.1 1 1.1 1-1.4 1 1.4 1 0 1 4.5 1-4.5 1 0 1 0 1 1.1 1 2.2 1-3.3 1 0 1 0 1 0 1 0 1 0 1 0 1 0 1-5.9 1 5.9 1 0 1 1.8 1-1.8 1 0 1 0 1 0 1 0 1-3.7 1 3.7 1 0 1 0 1 0 1 0 1-.3 1 .3 1 0 1 4.4 1-.5 1-3.9 1-.6 1 3.2 1-7.6 1 5 1 0 1 0 1 0 1 0 1 1.1 1-1.1 1 0 1 0 1 0 1 0 1 0 1-5.6 1 4.7 1 .9 1 0 1 0 1 0 1 0 1 0 1 .1 1-.1 1 0 1-3.8 1 3.8 1 0 1 0 1 0 1 0 1 0 1 0 1 .1 1-.1 1 0 1 0 1 0 1-5.2 1 5.2 1 0 1 0 1 0 1 0 1 0 1 0 1 0 1 0 1 0 1 0 1 4.4 1-3.4 1-1 1 2.5 1-2.5 1 0 1-2.7 1 2.7 1 0 1 0 1 0 1-5.5 1 5.5 1 4.9 1-4.9 1 4.2 1-4.2 1-4.4 1-.6 1 5 1-5.9 1 5.9 1 0 1 0 1 0 1 0 1 0 1-.4 1 .4 1 0 1 0 1 0 1 1.5 1-1.5 1 0 1-3.1 1 3.1 1 0 1 1.9 1-1.9 1 0 1-2.5 1-1.8 1 7.4 1-3.1 1 0 1 0 1 0 1 0 1 1.7 1-1.7 1 0 1 3.3 1-3.3 1 0 1 0 1 0 1 4.4 1-4.4 1 0 1-5.1 1 5.1 1 0 1 0 1-2.4 1-1.2 1 1.7 1 1.9 1 0 1 4.8 1-4.8 1 0 1 4.6 1-4.6 1 0 1 0 1 0 1 0 1 1.5 1-1.5 1 0 1 0 1-5.6 1 5.6 1 0 1 4.3 1-4.3 1 0 1 0 1 2.3 1-2.3 1 0 1 0 1 2.8 1-4.5 1 1.7 1 0 1 0 1 0 1 0 1 0 1 0 1 0 1 2.7 1-2.7 1 0 1 .5 1-.5 1 1.7 1-1.7 1 0 1 0 1 0 1 0 1-5.9 1 2.6 1 3.3 1 2.9 1-2.9 1 3.9 1-3.9 1 0 1-4.1 1 4.1 1 0 1 0 1 0 1-.3 1 .3 1 .9 1-4.9 1 3 1 1 1 0 1-2 1 2 1 0 1 0 1-2.1 1-3.7 1 1.4 1 4.4 1 0 1 0 1 0 1 0 1 0 1 0 1 2.3 1-1.7 1-.6 1 0 1 0 1-1.8 1 1.8 1 0 1 0 1-.6 1 0 1 .6 1 0 1 0 1 0 1 0 1 0 1 0 1 0 1 0 1 0 1 0 1 1.5 1-1.5 1 0 1 0 1 0 1 0 1 0 1 1.4 1-1.4 1-3.8 1 3.8 1-4.4 1 4.4 1 0 1 0 1 0 1-2.5 1 4.3 1-2.9 1-4.6 1 5.7 1 0 1-5.2 1 5.2 1 4.1 1-4.1 1 0 1 .9 1-1 1 .1 1 0 1 0 1 0 1 0 1 2.7 1-2.7 1 0 1 0 1 0 1 0 1 0 1 0 1 0 1 0 1 0 1 0 1 0 1 0 1-2.8 1 2.8 1 0 1 .5 1-.5 1 0 1 0 1-5.3 1 4.7 1 .6 1-1.6 1 1.6 1 3.6 1-.1 1-.4 1-3.1 1 0 1 0 1 0 1 0 1 0 1 0 1 0 1 0 1 0 1-4.7 1 4.7 1-4.3 1 2.2 1 2.1 1 0 1-2.1 1 2.1 1 1.4 1-1.4 1 0 1 0 1-3.9 1 3.9 1 0 1 0 1 0 1 0 1 0 1 0 1 0 1 0 1 0 1-2.3 1 2.3 1 0 1 0 1 0 1 4.4 1-4.4 1 0 1 2 1-4 1 2 1 4.2 1-6.1 1 5 1-3.1 1 0 1 0 1 0 1 0 1 0 1 0 1-2.7 1 2.7 1 0 1 0 1 0 1 0 1 0 1 0 1 0 1 0 1 0 1 0 1 0 1-1.7 1 1.7 1 0 1 0 1-5.3 1 5.3 1 0 1-5.6 1 6.7 1-1.1 1 0 1 0 1 0 1 0 1-2.8 1 2.8 1 0 1 0 1-3.2 1 2.4 1 .3 1 .5 1 0 1 0 1 0 1 0 1 0 1-.3 1 .3 1 0 1 0 1 0 1-.4 1 .4 1 0 1 0 1 0 1 0 1 0 1 0 1 0 1 0 1-3.7 1 8.6 1-10.7 1 5.8 1 0 1 0 1-.2 1 .2 1 0 1 0 1 0 1 0 1 0 1-3.3 1 3.3 1 3.2 1-3.2 1 0 1 0 1 0 1 0 1 0 1 2.1 1-2.1 1 0 1-3.5 1 3.5 1 0 1 0 1-4 1 4 1 0 1-4 1 4 1 0 1 0 1 0 1-2 1 2 1 0 1 1.5 1-6 1 4.5 1 0 1-2.7 1 2.7 1 0 1 0 1 0 1-5.7 1 8.6 1-2.9 1 0 1 4.6 1-4.6 1 0 1 0 1 0 1 0 1 2.5 1-1.8 1-.7 1 0 1 4.5 1-4.5 1 4.3 1-4.3 1-3.7 1 3.7 1 0 1-189.7 1 19 1 7.5 1 1.2 1 .5 1 1.3 1 1.2 1-.1 1 .6 1 .4 1 .6 1 .3 1-.2 1-.1 1 .4 1-.5 1 .3 1-.1 1 .3 1-.4 1 .7 1 0 1-.6 1 0 1 .1 1-.1 1 .4 1 .1 1 .2 1 0 1-.1 1 .1 1-.1 1 .1 1 .3 1-.4 1 .2 1-.2 1 .5 1-.5 1 .3 1 .4 1-.5 1 .2 1 .3 1-.1 1 .3 1 .1 1-.4 1 .4 1-.4 1 .2 1 .1 1 .3 1 0 1-.2 1-.1 1 .4 1-.1 1-.2 1 .1 1 .5 1 .1 1-.1 1-.5 1 .2 1 0 1 0 1 .2 1 0 1 .3 1-.1 1 .2 1-.3 1 .5 1-.2 1-.3 1 .2 1 .5 1-.6 1 .4 1-.2 1 .5 1 0 1-.4 1 .6 1 0 1-.4 1 .2 1 .2 1 .1 1 0 1-.4 1 .1 1 .2 1-.2 1 .4 1 .2 1-.3 1 .2 1 0 1 .3 1 0 1-.3 1 .3 1 0 1 0 1 .1 1 .1 1 0 1 .1 1-.1 1 .3 1-.6 1 .2 1 .3 1-.2 1 .2 1 0 1 .3 1-.1 1 .1 1 .2 1-.3 1 .1 1 .1 1 .2 1-.3 1 .4 1-.5 1 0 1 .1 1 .5 1-.4 1 .1 1 .5 1-.2 1 .1 1 .1 1-.5 1 .2 1-.1 1 .4 1-.2 1-.1 1 .5 1-.1 1-.1 1-.1 1 .4 1 .1 1-.5 1 .4 1 .2 1-.1 1-.3 1 0 1 .3 1 .4 1 0 1-.1 1-.2 1 .3 1 .1 1 .1 1-.1 1 .1 1 0 1-.4 1 .6 1-.5 1 .6 1-.6 1 .1 1 .3 1 0 1 .3 1-.4 1 0 1 .5 1 0 1 0 1-.1 1-.2 1 .1 1 .2 1 .1 1 .1 1-.3 1 .3 1 .1 1-.1 1-.3 1 .3 1-.1 1 .1 1 .1 1-.2 1 .1 1 .1 1 .3 1-.2 1 .2 1 .1 1-.1 1 .3 1 .1 1 0 1 0 1-.1 1 .2 1-.6 1 .4 1 .2 1 .2 1-.4 1 .3 1 .1 1-.3 1 .4 1 .1 1-.4 1 0 1 .4 1-.2 1 .1 1 .2 1-.4 1 .1 1 .4 1-.2 1 0 1 .1 1 .1 1-.3 1 .4 1-.4 1 .3 1 .1 1-.3 1-.2 1 .5 1-.6 1 .4 1-.2 1 .3 1-.4 1 .3 1-.2 1 0 1 .2 1-.1 1 .1 1 0 1-.3 1 .3 1-.4 1 .3 1 .3 1-.4 1-.2 1 .5 1 .1 1-.3 1 .2 1-.3 1 .1 1-.3 1 .6 1-.2 1 0 1 .2 1 0 1-.4 1 .3 1-.5 1 .1 1 .5 1-.3 1-.3 1 .2 1-.2 1 .1 1 .3 1-.4 1 .5 1 .1 1-.3 1-.3 1 .6 1-.3 1 .2 1-.2 1-.3 1 .6 1 0 1-.3 1 0 1 0 1 .3 1-.6 1 .3 1 0 1 .3 1-.1 1-.5 1 .4 1-.3 1-.1 1 .2 1 .2 1-.4 1 .5 1-.2 1 .2 1-.1 1-.4 1 .2 1 .4 1-.5 1 .4 1-.4 1 .3 1-.4 1 .2 1-.1 1 0 1-.1 1 .6 1-.6 1 0 1 .3 1 0 1-.3 1 .6 1-.2 1-.2 1-.2 1 .6 1-.6 1 0 1 .6 1 0 1-.6 1 .1 1 .2 1-.3 1 .6 1-.6 1 .3 1-.3 1 .5 1-.4 1 .2 1-.3 1 .1 1 0 1-.1 1 0 1 .1 1 .5 1-.1 1-.1 1 .1 1-.5 1 .5 1-.3 1 .3 1 0 1-.4 1 .4 1-.1 1-.4 1 0 1 .1 1 .3 1-.1 1-.3 1 .3 1 0 1-.3 1 .3 1 .1 1-.4 1 .2 1 .2 1-.2 1-.2 1 .5 1-.4 1 .2 1-.2 1 0 1-.1 1 .6 1-.6 1 .4 1-.2 1 .4 1-.6 1 .2 1 .2 1 .1 1-.4 1 .2 1-.3 1 .2 1 .4 1-.4 1-.1 1 .1 1 .4 1-.1 1 .1 1-.2 1-.4 1 .4 1-.3 1-.1 1 0 1 .5 1-.4 1 .4 1-.1 1 0 1-.1 1-.2 1 .2 1 .3 1-.5 1 .4 1 .1 1-.3 1 0 1-.1 1 .2 1 0 1-.1 1-.2 1 .2 1 .1 1-.2 1-.2 1 0 1 .5 1-.2 1 .1 1-.2 1 .1 1 .2 1 .1 1 0 1-.2 1-.4 1 .6 1-.2 1-.2 1-.2 1 .6 1-.5 1 .3 1 .1 1 0 1-.3 1-.2 1 .2 1 .2 1-.4 1 .5 1-.1 1 0 1 .1 1 0 1-.4 1 .3 1 .1 1-.1 1 0 1-.3 1 .3 1 0 1 .2 1-.6 1 .3 1 .2 1-.5 1 .2 1 .2 1-.1 1 0 1-.1 1 0 1-.1 1 .3 1 .2 1-.3 1-.3 1 .2 1-.1 1 .2 1-.2 1 .5 1 0 1-.2 1 .2 1-.1 1-.5 1 .4 1 0 1-.2 1 .4 1 0 1-.3 1-.2 1 0 1-.1 1 .3 1 .3 1-.6 1 .5 1-.5 1 .2 1 .1 1-.1 1 .2 1-.2 1-.2 1 46.9 1 63.7 1 3.1 1 4.5 1-5.3 1 .2 1-1.6 1-.8 1-.1 1 7.4 1-1.6 1-5.6 1 5.3 1-3.5 1 2.3 1 1.9 1-3.5 1 3.5 1 1 1-4.9 1-.3 1 17.8 1 20.3 1 0 1 0 1-5.9 1 5.9 1 0 1-4.1 1 4.1 1 0 1 0 1 0 1 0 1 0 1 0 1 0 1 0 1 0 1 0 1 0 1 0 1 0 1 0 1 0 1-3 1 3 1 0 1 0 1 0 1 0 1 0 1 0 1 0 1 0 1 0 1 0 1 0 1 0 1-1.4 1-4.6 1 6 1 0 1 0 1-4.1 1 4.1 1 0 1 0 1 3.8 1-7.2 1 3.1 1 3.8 1-3.5 1 0 1 0 1 0 1 0 1 0 1 4.9 1-4.9 1 0 1 0 1 0 1 0 1-1.9 1 .4 1 1.5 1 4.4 1-4.4 1 0 1 0 1 0 1 0 1-3 1 3 1-3.1 1 3.1 1 2.7 1-2.7 1 0 1 4.5 1-2.1 1-2.4 1-3.8 1 3.8 1 0 1 0 1 0 1 0 1 0 1 0 1 4.8 1-4.8 1 0 1-2.6 1 2.6 1 0 1 0 1 0 1 0 1 0 1-3.9 1 3.9 1-1.3 1 1.3 1 0 1 0 1 0 1 0 1 0 1 0 1-2.9 1 2.9 1 3.4 1-1 1-2.4 1 0 1 3.1 1-3.1 1 0 1 0 1 0 1 1.8 1-1.8 1 0 1 0 1 0 1 0 1-4.6 1-.6 1 5.9 1-2.4 1 5.8 1-4.1 1 0 1 0 1 0 1 0 1 0 1 .2 1-.2 1 0 1-2.8 1-1.3 1 4.8 1-2.5 1 1.8 1-3.9 1 8.3 1-4.4 1 0 1-3 1 3 1 1 1-2.3 1 1.3 1 0 1 0 1-3.2 1 3.2 1 0 1 0 1 0 1 0 1-.1 1 .1 1 0 1 0 1-5.5 1 8.6 1-3.1 1 0 1 0 1 0 1 1.5 1-1.5 1 4.9 1-4.9 1 0 1 0 1 0 1-2.8 1 2.8 1 0 1 3.1 1-3.1 1 0V1364.8Z" fill="#86c762" fill-opacity="0.15" stroke="#86c762" stroke-width="0.8" stroke-opacity="1" stroke-linejoin="round" clip-path="url(#cw)"/>
<path d="M47.2 1364.8V1323.8l1 2.6 1-6.9 1 4.3 1-11.2 1 6 1 5.2 1-10.6 1 10.6 1-7.9 1-4.2 1 12.1 1 .8 1-.8 1 8.4 1-8.4 1 0 1-4.7 1-5.9 1 10.6 1 0 1-5.5 1 5.5 1-8.7 1 8.7 1-1.1 1 1.1 1 0 1 0 1-2.3 1 2.3 1 0 1 0 1 0 1-8.3 1 8.3 1 0 1 0 1-1.6 1-.8 1-2.3 1 4.7 1 0 1 0 1 0 1 0 1 0 1 0 1 0 1-7.1 1 7.1 1 1.1 1-1.1 1-5.7 1-4.4 1 10.1 1 0 1 0 1 4.3 1-4.3 1 8.1 1-13.6 1 5.5 1 0 1 0 1-4.5 1 1.3 1 3.2 1 0 1 0 1 0 1 0 1 0 1 0 1-11.6 1 7.4 1 4.2 1 0 1 8.5 1-15.9 1 7.4 1-3.2 1 3.2 1-10.5 1 18 1-7.5 1-11.4 1 11.4 1 0 1 .6 1 8.4 1-9 1 6.1 1-6.1 1-8.9 1-1 1 9.9 1 0 1 0 1-.2 1 .2 1 0 1 0 1-10.5 1 19.1 1-8.6 1-4 1 4 1 0 1 0 1 0 1 0 1-12.8 1 11.1 1 1.7 1 0 1 0 1 3.1 1-14.9 1 11.8 1 0 1-3 1 3 1-8.8 1 8.8 1 0 1 0 1 0 1 0 1 .4 1-.4 1-12.1 1 12.1 1-1.9 1 1.9 1-5.2 1 5.2 1 0 1-13 1 13 1 0 1 0 1 0 1 0 1-8.6 1 2.2 1 12.7 1-12.4 1 5.1 1 1 1 0 1 0 1 0 1 0 1 0 1 0 1 0 1-10.8 1 10.8 1 0 1-1.4 1 1.4 1 0 1 0 1 0 1 0 1 0 1 0 1 0 1 0 1 0 1 0 1-8.2 1 8.2 1-5.7 1 5.7 1 0 1 0 1 0 1 0 1 0 1 0 1 0 1 0 1 0 1 0 1-11.4 1 11.4 1-4.1 1 4.1 1 0 1-11.4 1 11.4 1 0 1-9.6 1 9.6 1-12.9 1 4 1 8.9 1 0 1-3.7 1 3.7 1 6.4 1-6.4 1-9.9 1 2.3 1 5.5 1 2.1 1 6.9 1-19.1 1 3.4 1 8.8 1-8 1 6.9 1 4.5 1-9.2 1 5.8 1 0 1 7.7 1-7.7 1-4.3 1 1.9 1 2.4 1 0 1 1.7 1-1.7 1 2.3 1-2.3 1 0 1-6 1-2 1 .1 1 4.7 1 3.2 1 0 1 0 1-11 1 11 1-7.8 1 7.8 1 0 1 0 1-6.2 1 6.2 1-10.6 1 10.6 1 0 1 0 1 6.8 1-6.8 1-4.8 1 12.6 1-7.8 1-11.9 1 1.9 1 10 1 0 1 0 1 0 1 0 1 0 1 0 1 0 1 0 1 0 1 0 1 0 1 0 1 0 1 0 1 0 1 0 1 0 1 0 1-12.4 1 17.3 1-10.9 1 6 1 0 1 0 1 0 1-6.7 1 8.6 1-1.9 1 0 1 0 1 0 1 0 1-10.9 1 10.9 1 0 1 0 1 0 1 0 1 0 1 0 1 0 1 0 1 0 1 0 1-3.1 1 11.6 1-8.5 1-6.5 1 6.5 1 0 1 0 1-7.6 1 7.6 1 0 1 0 1-.6 1 .6 1 7.1 1-11.1 1 4 1-4.9 1 4.9 1 0 1 0 1 8.4 1-8.4 1-4.9 1 4.9 1 0 1 0 1 0 1 0 1 0 1 0 1 0 1 1.6 1-5.1 1 3.5 1 0 1 .9 1-.9 1 0 1 0 1 0 1 0 1 0 1 0 1 0 1 0 1 0 1 0 1 0 1-11.1 1 11.1 1 0 1 0 1 0 1-9.3 1 9.3 1 0 1-4.9 1 4.9 1-3.9 1 3.9 1 0 1-9.5 1 8.1 1-5.7 1 7.1 1 0 1 0 1-2.1 1 2.1 1 0 1 0 1-10.2 1 10.2 1 5.8 1-5.8 1 0 1 0 1 0 1-1.7 1 1.7 1 0 1 0 1 0 1 0 1-8.6 1 8.6 1 0 1 0 1-4.2 1 4.2 1 0 1 4 1-4 1-5.3 1-6.5 1 6.3 1 5.5 1 .8 1-.8 1 0 1 0 1 2.4 1-2.4 1-2.7 1-9.9 1 12.6 1 0 1 0 1 0 1 0 1 0 1 0 1 0 1 0 1 0 1-10.3 1 6.8 1 11.2 1-7.7 1-1.1 1 1 1 .1 1 4.4 1-4.4 1-9.2 1 9.2 1 0 1 0 1-7.4 1 7.4 1 0 1 0 1 0 1 0 1-9.2 1-3.1 1 12.3 1 0 1 0 1-5.3 1 5.3 1 0 1-11.8 1 0 1 11.8 1 0 1 0 1 0 1 0 1 0 1 0 1-2.9 1 2.9 1 0 1 0 1 0 1 0 1-7.2 1 7.2 1 0 1-12 1 12 1-11.8 1 11.8 1-.5 1 .5 1-8 1 8 1 0 1 0 1 0 1 0 1 0 1 0 1 0 1-2.4 1 2.4 1-10.6 1-1.7 1 12.3 1 0 1 0 1 0 1 0 1 0 1 0 1 0 1 0 1 0 1 0 1-2.1 1 3.1 1-11.1 1 10.1 1 0 1 0 1-2.9 1 11.7 1-8.8 1 0 1-12 1 12 1 0 1 0 1 0 1 0 1 0 1-.4 1 .4 1 0 1 0 1 6.1 1-6.1 1-11.9 1 6.7 1 5.2 1 0 1 6.9 1-6.9 1 0 1 0 1 0 1-8.6 1 8.6 1 0 1-12.8 1 12.8 1 0 1 0 1 5.5 1-18.5 1 13 1-6.8 1 6.8 1 0 1 0 1 0 1 0 1-10.2 1 17.7 1-19 1 11.5 1 0 1 0 1-.6 1 .6 1 0 1-7.1 1 7.1 1 0 1 0 1 0 1 0 1 0 1 0 1-.4 1 .4 1 0 1 0 1 0 1 0 1 0 1 0 1 0 1 0 1 0 1 0 1-9 1 14.8 1-6.6 1-4.6 1 5.4 1 0 1 0 1-1.3 1 1.3 1 0 1 0 1 0 1 0 1 0 1 0 1 0 1 0 1 0 1 0 1-12.7 1 12.7 1 0 1 0 1 0 1-4.5 1 4.5 1 0 1 0 1-3.3 1 3.3 1-12.7 1 12.7 1 0 1 0 1 0 1 0 1 0 1 0 1-8.6 1 8.6 1-.1 1 2.6 1-2.5 1-6.1 1 6.1 1 0 1 0 1 0 1 0 1 0 1 7.4 1 1.1 1-8.5 1 0 1 0 1 0 1-7.5 1 12.8 1-5.3 1 0 1-7.1 1 7.1 1 0 1 0 1 0 1-4.3 1 4.3 1 0 1-.5 1-11.1 1 11.6 1 0 1 0 1 0 1-.4 1 .4 1 0 1 0 1 0 1 0 1 0 1-10.6 1 10.6 1 0 1-1.2 1-11.3 1 12.5 1 0 1-8.8 1 8.8 1 0 1 0 1-11.5 1 11.5 1-12.4 1 12.4 1-3.3 1 3.3 1 0 1 0 1-.5 1 .5 1 0 1 0 1 0 1 0 1 2.5 1-2.5 1 0 1 0 1 4.2 1-16 1 11.8 1 0 1 0 1-7.4 1 7.4 1 2.4 1-2.4 1 0 1 0 1 0 1 2.7 1-2.7 1 0 1 0 1 5.5 1-6.1 1 .6 1 0 1 0 1 7.1 1-7.1 1-12.3 1 9 1 3.3 1 0 1 0 1-10.6 1 10.6 1 0 1 0 1 0 1 0 1 0 1 0 1-12.6 1 17.1 1-9.9 1 5.4 1 0 1 8.8 1-10.1 1-5.7 1 7 1 5.3 1-13.3 1 8 1 0 1 0 1-6.2 1 3.4 1 2.8 1 0 1 0 1-2.2 1 2.2 1 0 1-6.4 1 6.4 1 8 1-8 1 0 1 0 1 0 1 8.9 1-8.9 1 0 1 0 1 0 1-7.1 1 7.1 1-4.4 1 12.7 1-18.1 1 9.8 1 0 1 0 1 0 1 0 1 0 1 0 1 4.2 1-4.2 1 0 1 0 1 0 1 0 1 0 1-4.6 1 4.6 1-5.6 1-6.9 1 12.5 1-1.8 1 1.8 1-10.5 1 10.5 1 0 1 0 1 5.8 1-10.9 1 5.1 1 0 1-3.6 1 2.1 1 1.5 1 0 1 0 1 0 1 0 1 0 1-1.1 1 1.3 1-.2 1 0 1 0 1 0 1-8.8 1 8.8 1 5.5 1-1.5 1-12.4 1 8.4 1-8.9 1 8.9 1-8.9 1 8.9 1 0 1 0 1-8.4 1 8.4 1 0 1 4.9 1-7.9 1 4.2 1-1.2 1-11.4 1 1.3 1 10.1 1 0 1-9.1 1 6.5 1 2.6 1-9 1 9 1-12.4 1 12.4 1-3.2 1 3.2 1 0 1 0 1-4 1 6.9 1 .1 1-3 1 0 1-11.9 1 11.9 1 0 1 0 1-.7 1 .7 1-10 1 10 1 0 1-8.3 1 8.3 1 0 1 0 1 0 1-10.7 1 10.7 1 1.7 1-11.3 1 9.2 1 .4 1 0 1-1.7 1 1.7 1 .4 1-.4 1 0 1-6.3 1 6.3 1 0 1 0 1 0 1 0 1 5.8 1-15.7 1 9.9 1 0 1 0 1 0 1 0 1 0 1-7.2 1 7.2 1 0 1-9 1 9 1 0 1-12.2 1 17.2 1-5 1-2.9 1 2.9 1 0 1 0 1 0 1 0 1 0 1-7.5 1 7.5 1 0 1-8.1 1 8.1 1-5.3 1 5.3 1 0 1 0 1 0 1 0 1 0 1-5.6 1-2.7 1 8.3 1 6.5 1-6.5 1-12.3 1 12.3 1 6.3 1-5.4 1-4.2 1 3.3 1 0 1 0 1 0 1 0 1-10.2 1 9.6 1 .6 1-11.6 1 11.6 1 .8 1-.8 1 0 1 0 1 3.6 1-14.2 1 10.6 1 0 1 0 1-4.4 1 4.4 1 0 1-9.7 1 7.3 1-6.7 1 9.1 1 0 1 0 1 0 1 0 1 0 1 0 1-5.2 1 4.3 1 .9 1 0 1 0 1 0 1 0 1 0 1 0 1-12.4 1 12.4 1 0 1 0 1 0 1 0 1 0 1 0 1 0 1 0 1-3.4 1 3.4 1 0 1 0 1-12.3 1 12.3 1 0 1 0 1 0 1-5.4 1 5.4 1 0 1 0 1 0 1-12 1 12 1 0 1 0 1 0 1-11.4 1 15 1-15.8 1 12.2 1 0 1 4.4 1-4.4 1 0 1 0 1 0 1 0 1 0 1 0 1 0 1 0 1 0 1 0 1 0 1 0 1 0 1-11 1 11 1 0 1 0 1-10 1 10 1 0 1 0 1 0 1 3.4 1-11.9 1 8.5 1 0 1 0 1 0 1 0 1-1.4 1 9.7 1-8.3 1 0 1-7.1 1 4.6 1-2.6 1 5.1 1-6.4 1 6.1 1 .3 1-5.3 1 2.1 1 3.2 1-9.1 1 9.1 1 7 1-7 1-1.1 1 1.1 1 0 1 0 1 0 1 0 1-10.1 1 10.1 1-10.1 1 9.3 1 .8 1 0 1 3.5 1-3.5 1 0 1 0 1-12.6 1 12.6 1 0 1 0 1-10.9 1 3.8 1 3.7 1 3.4 1 0 1 0 1 0 1 0 1 0 1-9.2 1 9.2 1 0 1-11.4 1 11.4 1 0 1 0 1 0 1 0 1 0 1 0 1 0 1 2.5 1-2.5 1 0 1-1.9 1 1.1 1 .8 1 0 1 0 1-10.8 1 10.8 1 0 1 0 1 0 1 0 1 0 1 0 1 0 1 0 1 0 1 0 1 0 1 0 1 0 1 1.1 1-1.1 1 0 1 0 1 0 1 0 1 0 1-12.4 1 7 1 5.4 1-8.7 1 8.7 1 0 1 0 1 0 1-5.3 1 5.2 1 .1 1 0 1 0 1 0 1 0 1 0 1 0 1-9.1 1 4.6 1 4.5 1 0 1-11.1 1 11.1 1-2.1 1 2.1 1 0 1 0 1 0 1-1.3 1 1.3 1 0 1 0 1 0 1-2.8 1 2.8 1-10.2 1 14.9 1-4.7 1 0 1 0 1 0 1 0 1 0 1 0 1-7.4 1 9.9 1-2.5 1 0 1 0 1 0 1 0 1 0 1-9.5 1 9.5 1-3.6 1 3.6 1-1 1 2.5 1-1.5 1-1.7 1 1.7 1-7 1 2.3 1 4.7 1 0 1 0 1-3.7 1-2.2 1 5.9 1-10.4 1 10.4 1 2.6 1-2.6 1 0 1 1.6 1-12.8 1 11.2 1-5.9 1 5.9 1 0 1-.7 1 .7 1 0 1 0 1 0 1 1.7 1-1.7 1 0 1 0 1 0 1 0 1 0 1 0 1-10.9 1 10.9 1 0 1 0 1-10.5 1 10.5 1-8.5 1 7.2 1 1.3 1-11.5 1 11.5 1 0 1 0 1 0 1-4.2 1 4.2 1 5.4 1 3 1-8.4 1 0 1 0 1 0 1 0 1-11.4 1 11.4 1 0 1 0 1 4.5 1-4.5 1 0 1-1.1 1 1.1 1 0 1 0 1 8.2 1-11.5 1-1.3 1-7.1 1 11.7 1 0 1 0 1-6.7 1 12.3 1 .6 1-6.2 1 0 1 5.9 1-5.9 1 0 1 0 1 0 1 0 1 0 1 0 1 5.8 1-5.8 1 0 1 1.4 1-1.4 1 0 1 0 1 3.2 1-14.9 1 11.7 1 0 1 0 1-3.5 1-4.2 1 6.8 1 7.4 1-6.5 1-9.2 1 9.2 1 0 1 0 1-.5 1-.7 1 1.2 1 0 1 5.5 1-11.1 1 5.6 1 0 1-.9 1 .9 1 0 1-8 1 8 1 0 1 0 1-11.9 1 11.9 1 4.7 1-4.7 1 0 1 0 1 0 1-4.1 1 4.1 1 0 1 0 1 2.7 1-2.7 1 0 1 0 1 0 1-9.3 1-1.5 1 10.8 1 0 1 0 1-12.4 1 12.4 1 0 1 0 1 0 1 0 1 0 1 0 1 0 1 0 1-10.4 1 8.4 1 2 1-9.9 1 9.9 1 0 1 0 1-2.5 1 2.5 1 0 1 8.1 1-8.1 1 0 1 0 1 0 1 0 1 0 1-6.5 1 6.5 1 3.8 1-3.8 1 0 1 0 1 2.2 1-2.2 1 0 1-4.6 1 4.6 1 0 1 0 1 0 1 0 1 0 1 0 1 8.3 1-8.3 1 0 1 0 1 0 1 0 1 0 1 0 1 0 1 0 1 0 1-3.1 1 3.1 1-.1 1 .1 1 0 1 0 1 0 1 0 1 0 1 0 1 0 1-4.9 1 4.9 1 0 1 0 1 7.2 1-7.2 1 0 1 0 1 4.4 1-7.7 1 3.3 1-5.2 1 5.2 1-1.6 1 .7 1 .9 1-5.7 1 5.7 1 0 1-11.6 1 9.4 1 2.2 1 0 1-6.3 1 6.3 1 0 1 4.9 1-4.9 1-1.6 1 6.5 1-4.9 1-7.3 1 6.5 1 .1 1 .7 1 0 1 0 1-3.9 1 3.9 1 0 1 0 1 0 1 3.9 1 .4 1-4.3 1 0 1 0 1 4.1 1-4.1 1 0 1 0 1 0 1 5.8 1-5.8 1-3.1 1 3.2 1-12.9 1 12.8 1 0 1 0 1-.4 1-9 1 9.4 1 0 1 0 1 0 1 0 1 0 1-10 1 10 1 0 1-7.3 1 7.3 1-7.5 1 10.8 1-3.3 1 0 1 0 1 0 1 0 1-12.9 1 12.9 1-11.2 1 11.2 1 9 1-9 1 0 1 0 1 0 1 4.5 1-4.5 1-9.2 1 2.7 1 6.5 1 0 1 0 1 0 1 0 1 0 1 0 1 0 1-8.5 1 8 1 .5 1 0 1 0 1 4.5 1-4.5 1 0 1 0 1 0 1 0 1 0 1-5.1 1 5.1 1-6.4 1 6.4 1 0 1-10.5 1 10.5 1 2.2 1-2.2 1 0 1-8 1 8 1-1.4 1 4.7 1-3.3 1 0 1 0 1 0 1-5.2 1-1.2 1 3.4 1 3 1 3.5 1-3.5 1 3.8 1-3.8 1 0 1-12 1 3.6 1 8.4 1-8 1 .7 1 7.3 1 0 1 0 1 0 1 0 1 0 1 0 1 0 1-10.9 1 7.2 1-7.6 1 11.3 1 0 1 0 1 0 1-11.6 1 2.5 1 9.1 1 0 1 0 1 3 1-3 1 0 1 0 1 0 1 0 1 0 1 0 1 0 1-1.6 1 1.6 1 0 1 0 1 0 1 0 1-9.9 1 9.9 1 0 1 0 1 0 1 7.1 1-15.4 1 8.3 1-.1 1-3 1 5.2 1-2.1 1 0 1 0 1-.2 1 .2 1 0 1 0 1-2.5 1 2.5 1 3.1 1-8 1 4.9 1 4.8 1-4.8 1 0 1 0 1 3.3 1-3.3 1 0 1 0 1-6.7 1 6.7 1-1.8 1 1.8 1 0 1 0 1 7.2 1-7.2 1 0 1 0 1-.7 1 .7 1 0 1-8.6 1 8.6 1-8.3 1 12.2 1-3.9 1 0 1-9.4 1 9.4 1 0 1 0 1-5.5 1 5.5 1 0 1 3.5 1-3.5 1 0 1 0 1-1.4 1 .5 1 .9 1-3.3 1 3.3 1 0 1 0 1-1.9 1 2 1-.1 1-10.5 1 10.5 1 0 1 0 1-2.7 1 2.7 1 0 1 0 1 8.2V1364.8Z" fill="#86c762" fill-opacity="0.15" stroke="#86c762" stroke-width="0.8" stroke-opacity="1" stroke-linejoin="round" clip-path="url(#cw)"/>
<path d="M47.2 1364.8V1340.3l.6 12.5 .6-8.6 .6 5.7 .6-9.7 .6 11.2 .6-10.9 .6 9.9 .6-6.8 .6-1.6 .6 4.7 .6 2.6 .6-9 .6 7.7 .6-7.8 .6 11.4 .6-7.7 .6-3.8 .6 8.4 .6-7.4 .6 7.8 .6 1.7 .6-10.7 .6 8.6 .6-4.8 .6 4.8 .6-6.6 .6 10.9 .6-3.8 .6-6.5 .6 4.4 .6-4.5 .6 5.7 .6-4.8 .6 9.6 .6-14.1 .6 1.5 .6 8.7 .6-8.5 .6 8.2 .6-5.9 .6 3.9 .6-5.5 .6 11.3 .6-13.2 .6 6.3 .6-1.3 .6 2.4 .6-7.8 .6 .1 .6 5.4 .6 4.1 .6-9.4 .6 13.1 .6-12.6 .6 .1 .6 6.9 .6-3.1 .6 .4 .6 5.3 .6-4.9 .6 6.6 .6-11.2 .6 8.6 .6-15.2 .6 9.9 .6 .7 .6-4.8 .6 7.1 .6-3.4 .6 3 .6-1.4 .6 7.3 .6-7 .6-1.6 .6-.7 .6 5.3 .6 3.7 .6-17 .6 18.2 .6-12.2 .6-7.3 .6 6.9 .6 6.5 .6-6.7 .6 6.2 .6-4.9 .6 11.5 .6-8.4 .6 2.3 .6-11.4 .6 11.5 .6-2.4 .6 6.1 .6-8.7 .6-1.4 .6 11.2 .6-12.6 .6 7.8 .6-2.6 .6 7.9 .6-11.4 .6 0 .6 9.5 .6-10.7 .6 9.3 .6 .3 .6-2.8 .6-2.9 .6-8.2 .6 13.2 .6-13.4 .6 10.4 .6-1.3 .6 4.3 .6-5.2 .6 7.4 .6 1.6 .6-9.7 .6 7.4 .6-6.8 .6-11 .6 10.5 .6-.6 .6 8.9 .6-8.2 .6-8.9 .6 12.7 .6 1.9 .6-8.1 .6 10.2 .6-10.4 .6-5.8 .6 17.6 .6-9.7 .6 9.8 .6-12.6 .6 13.5 .6-9.3 .6 3.9 .6-8.5 .6 5.4 .6 8.1 .6-12.7 .6 8.2 .6-4.3 .6 7.7 .6-11.8 .6 7.2 .6 1.6 .6-7.3 .6 4.6 .6-3.9 .6 4.8 .6-2.7 .6 2.7 .6-1.8 .6 2.7 .6-4.5 .6 9.1 .6-3.4 .6-6.3 .6 6.2 .6-6.3 .6 9.3 .6-3.6 .6-12.1 .6 14 .6-8.5 .6 5.8 .6 2.7 .6-10.7 .6 4.2 .6-1 .6 4.1 .6-5.1 .6 9.9 .6-8.3 .6-7.2 .6 16 .6-9.3 .6 3.7 .6-7 .6 7.2 .6-6.4 .6 5.8 .6 3.6 .6-7.6 .6 5.1 .6-7.4 .6 12 .6-11.1 .6 12.6 .6-10.2 .6 3.7 .6-3.6 .6 9.1 .6-11.4 .6-.3 .6 12.5 .6-13 .6 6.2 .6-1.6 .6 8.1 .6-9.5 .6 2.9 .6-2.3 .6-3.7 .6-8.1 .6 21 .6-8.4 .6 2.7 .6 3.6 .6-11.1 .6 9 .6-1.3 .6-3.3 .6 7.9 .6-10.1 .6-2 .6 6.7 .6-3.1 .6-2.5 .6 .6 .6 6.8 .6-7.7 .6 12.4 .6-12.4 .6 9 .6-6.1 .6-.9 .6 5.5 .6-3.4 .6-2.9 .6 5.1 .6-5.8 .6 8.3 .6-5.7 .6 2 .6-2.2 .6 2.4 .6-3.4 .6 5.3 .6-4.9 .6 7.5 .6-16.3 .6 18.1 .6-10.3 .6 8.8 .6-10.4 .6 12.1 .6-1.4 .6-7.8 .6 5.5 .6-8 .6 5.6 .6-2.7 .6 4 .6-3.9 .6 3.8 .6-4.5 .6 .8 .6 1.9 .6-1 .6 2.3 .6-8 .6 5.8 .6 8.6 .6-9.3 .6 8.9 .6-3.5 .6-17.3 .6 15.8 .6-3.5 .6 4.1 .6-2.9 .6-6.8 .6 14 .6-9.5 .6 4.7 .6-4 .6 5.4 .6-.8 .6-4.3 .6 7.6 .6-9.7 .6 3.5 .6-12.6 .6 13.7 .6 4.8 .6-10 .6 10.4 .6-11.7 .6 8.7 .6-8.4 .6 9.3 .6-7.8 .6 4 .6 5.1 .6-11.4 .6 11.9 .6-6.9 .6 3.3 .6-1.5 .6-2.3 .6 8.6 .6-9.2 .6 5.4 .6-7.2 .6-1 .6 7.7 .6-2 .6-7.2 .6 7.6 .6-4.6 .6 9.8 .6-9.8 .6 3.4 .6-12.7 .6 13.5 .6-6.9 .6 11.7 .6-6.8 .6 3.6 .6-4.9 .6 .5 .6 3.7 .6-7.2 .6 6.8 .6-7.2 .6 8 .6-4.7 .6-7.2 .6 14.9 .6-7.8 .6 8.4 .6-7.7 .6 1.6 .6-2.5 .6-9.1 .6 9.6 .6 6.3 .6-6.4 .6 3.5 .6-4.2 .6 9.3 .6-11 .6 5.9 .6-6.8 .6 9.8 .6-7.6 .6 3.1 .6 6.4 .6-10 .6 9.3 .6-11.9 .6 2.4 .6 4.3 .6-4.8 .6 .2 .6 8.8 .6 1.1 .6-17.2 .6 12.3 .6-4.2 .6 2.1 .6 3.9 .6-5.5 .6-2.9 .6 10.3 .6 2.3 .6-8.4 .6 .6 .6 4.4 .6 4.3 .6-9.4 .6 3.9 .6-8.3 .6 12.5 .6 .3 .6-9.8 .6 6.6 .6-9.3 .6 9.8 .6-9.5 .6 7.7 .6 .1 .6-7.6 .6 8.6 .6-5.3 .6-2.8 .6 8.2 .6-9.2 .6-.6 .6 8 .6-15.6 .6 15.1 .6-4.3 .6 10.4 .6-9.4 .6 8.4 .6-16.4 .6 17.8 .6-2.8 .6-10.3 .6 4.8 .6 1.8 .6-4.2 .6 10.2 .6-9.4 .6 9.7 .6-13.5 .6 .1 .6 12.3 .6-1.2 .6-2.3 .6-3.8 .6 5.5 .6-7.9 .6 3.6 .6-5.6 .6 2.4 .6 5.3 .6-8.4 .6 12.3 .6-8.7 .6 4.7 .6-1.6 .6-5.7 .6 9.1 .6-9.4 .6 8.7 .6 2.7 .6-17.9 .6 14.5 .6 4.7 .6-.4 .6-12.3 .6 6.1 .6 6.8 .6-.3 .6-9.8 .6 .3 .6 4.5 .6-4 .6 2.9 .6-15.2 .6 11.3 .6 4.8 .6 3.6 .6-8.9 .6 7.4 .6-4.9 .6 4.9 .6-8.5 .6 5.3 .6-6.3 .6 8.6 .6-9.7 .6 8.1 .6-5 .6 8 .6-3.8 .6 2.9 .6-9.7 .6 10.6 .6-5.4 .6 2 .6-7.8 .6 13.6 .6-12.5 .6 9.7 .6-9.4 .6 12.1 .6-10.1 .6 5.1 .6-3.3 .6 2.1 .6-7 .6 8.5 .6 3.3 .6-5.2 .6-6.4 .6 11.7 .6-1.3 .6-5.4 .6-2.9 .6 8.3 .6-5.2 .6-.6 .6 9.2 .6-11.4 .6 9.5 .6-12.4 .6 2 .6 .3 .6 8.6 .6-9.3 .6 7.1 .6-4.1 .6 9.7 .6-14 .6 9.6 .6-5.4 .6 9.4 .6-13.5 .6 1.1 .6 12 .6-12.7 .6 6.1 .6 7.1 .6-12.7 .6 9.6 .6-5.2 .6 3.7 .6 3 .6-8.4 .6 1 .6 9.3 .6-12.4 .6 11.1 .6-17.2 .6 12.7 .6-6.4 .6 9.7 .6-7.7 .6 9.2 .6-4.6 .6-7.6 .6 6.1 .6-4.5 .6 5.7 .6-7.9 .6 7.1 .6-3.4 .6 4 .6-2.8 .6 3.1 .6-.6 .6-1.9 .6 5.4 .6-11.3 .6 12.8 .6-5.5 .6-7.3 .6 14.1 .6-1.1 .6-12.3 .6 12.6 .6-7.5 .6 1.1 .6-4.3 .6 4.5 .6-6.1 .6 1 .6 6.1 .6-2.6 .6 2.6 .6 6.1 .6-11.1 .6 5.1 .6-4.1 .6 4.9 .6-11 .6 9.3 .6 1.9 .6-5.1 .6 7.3 .6-6.8 .6 8.5 .6-11.3 .6 7.3 .6-7.7 .6 12.2 .6-11.4 .6 8.4 .6-6.5 .6-2.4 .6 7.5 .6-3.8 .6 5.6 .6-9.7 .6 2.4 .6 1.9 .6 2.4 .6-7.7 .6 10.7 .6-5.5 .6 7.1 .6-12.2 .6 13.5 .6-9 .6 1.7 .6 .5 .6-5.2 .6 11.2 .6-1 .6-8.6 .6 5.6 .6-5.8 .6-1.3 .6-2 .6 9.6 .6-9.6 .6 11.9 .6-7.5 .6-9.4 .6 13.2 .6-3.7 .6 8.2 .6-5.4 .6-5.8 .6 7.6 .6-6.7 .6 6.9 .6-4.3 .6 2.2 .6-11.8 .6 12.2 .6-2.1 .6-5.2 .6 3.4 .6 5.1 .6-4.5 .6 7.4 .6-.7 .6-9 .6 7.9 .6 2.8 .6-7.5 .6 1.6 .6-1.1 .6 3.9 .6-9.4 .6 7.6 .6-3.4 .6 1.4 .6 3.8 .6 .3 .6-6.6 .6 4.9 .6-5.8 .6 6.8 .6-10.8 .6 15.3 .6-13.4 .6 13.2 .6-12.8 .6 12 .6-4.3 .6-3.5 .6 .5 .6-5.1 .6 13.2 .6-12.3 .6 12.7 .6-9.1 .6 7.7 .6-12 .6 4.3 .6 3.1 .6-2.7 .6 7.3 .6-9.9 .6 1.1 .6 6.2 .6-6.6 .6 10.4 .6-8.4 .6-8.1 .6 2.7 .6 10.3 .6-.9 .6-7.7 .6 6.6 .6-6.5 .6 8 .6 .7 .6 3.4 .6-8.2 .6 1.9 .6-5.4 .6 1.2 .6 5.5 .6-8.4 .6 9.7 .6-10.1 .6 13.6 .6-5.2 .6-6.5 .6 10.6 .6-6.9 .6-5.1 .6 11 .6-6.6 .6 6.1 .6-8 .6 5.9 .6-4.8 .6 3.3 .6-5.3 .6 5.7 .6-5.6 .6 5.5 .6-7.3 .6 13.6 .6-10.9 .6 5.2 .6-7.9 .6 2.3 .6 8.2 .6 2.6 .6-9.3 .6 8 .6-11.2 .6 2 .6-5.9 .6 5.2 .6 4.3 .6 1.6 .6-7.8 .6 .1 .6 8.9 .6 1.1 .6-10.2 .6 13.6 .6-10.2 .6 6.6 .6-6.7 .6 7.2 .6-6.8 .6 .3 .6-1.9 .6 7.7 .6-5.5 .6 7.7 .6-8.9 .6-.2 .6 5.5 .6-7 .6-1.4 .6-4.2 .6 5.3 .6 9 .6-4.9 .6 2.2 .6 5.8 .6-11.6 .6 8.4 .6-7.1 .6 4.3 .6-14.7 .6 3.6 .6 8.2 .6-1.7 .6 5.3 .6-5.7 .6 4.3 .6-6.3 .6 4.6 .6 8.7 .6-9.9 .6 6 .6-9.8 .6 12.9 .6-12 .6 7.3 .6-8.2 .6 13.4 .6-8.4 .6 4.9 .6-5.7 .6 5.6 .6-7.3 .6 11.3 .6-3.4 .6 3.7 .6-.2 .6-8.9 .6 2.2 .6 6.4 .6-10.6 .6 10.7 .6-3.4 .6-4.7 .6 8.4 .6-11.5 .6 11.1 .6-11.3 .6-.2 .6 7.9 .6-5.9 .6 4.5 .6 1.4 .6-9.9 .6 11.1 .6-11 .6 13.5 .6-8.7 .6-.5 .6 4.6 .6-5.8 .6 8.3 .6-9.8 .6 5.7 .6-6.6 .6 6.5 .6-2.2 .6-2.7 .6 6.2 .6-15 .6 9.4 .6-8.6 .6 8 .6 8.4 .6-8.7 .6 4.8 .6-5.7 .6 11.4 .6-16.4 .6 16.5 .6-3.4 .6-5.9 .6-.5 .6-.5 .6-2.2 .6 2.6 .6 7 .6-9.2 .6 9.1 .6-5.7 .6 1.2 .6 .3 .6 8.3 .6-11 .6 8.1 .6-10 .6 2.8 .6-1.4 .6 6.5 .6-4.4 .6-4.2 .6 7.2 .6-4.1 .6 5.5 .6-3.8 .6 7.3 .6-7.1 .6 2.1 .6-4.9 .6 6.9 .6 1.1 .6-6.6 .6 0 .6 3 .6-5.2 .6 6.8 .6 .5 .6-4.5 .6 9.4 .6-13.8 .6 6.3 .6-5 .6 12.1 .6-9.4 .6 1.1 .6 4.9 .6-5.7 .6 .8 .6 7.5 .6-12.7 .6 13.3 .6-9.5 .6 8.8 .6-11.4 .6 4.6 .6 6.2 .6 1.8 .6-11.9 .6 7.5 .6-.2 .6-8.6 .6 10.8 .6 2.6 .6-9.3 .6-3.6 .6 10.5 .6-8.4 .6 3.8 .6-6.5 .6 8.8 .6 1.4 .6-.4 .6-6.4 .6 7.2 .6 2.9 .6-8.4 .6 5.7 .6-6.8 .6-1 .6 3.7 .6-2 .6 4.9 .6-4.9 .6 1.2 .6-3.9 .6-.5 .6-8.5 .6 11.4 .6 5.5 .6-9.1 .6-5.3 .6 6.8 .6 5.4 .6-5.3 .6 6 .6 5.3 .6-16 .6 2.8 .6 11.2 .6 .1 .6-7.7 .6 .3 .6 6.1 .6-9.9 .6 1 .6-5.4 .6 6 .6 4.7 .6 6 .6-13 .6 13.2 .6-13.3 .6 7 .6-7.3 .6 13.8 .6-9.4 .6-11.4 .6 10.6 .6-2.5 .6 9.9 .6-7.9 .6 5.8 .6-4.6 .6-11.7 .6 11.3 .6 2.7 .6 3.5 .6-6.4 .6 6.2 .6-6.7 .6 5.3 .6 2.8 .6-8.9 .6 11.8 .6-13.1 .6 12.3 .6-13.5 .6 14 .6-13.8 .6 0 .6-4.5 .6 7.2 .6 3.7 .6-2.5 .6 2.8 .6 .2 .6-4.7 .6 10.4 .6-7.6 .6 6.4 .6-10.4 .6 .5 .6-.9 .6 6.9 .6 1.9 .6-8.8 .6 9.9 .6-13 .6 7.6 .6 5.9 .6-6.2 .6 5 .6-5.8 .6 1.4 .6 2.7 .6-6.9 .6 1.8 .6 7.9 .6 .5 .6-6.7 .6 7.2 .6-14 .6 10 .6-7.7 .6 10.7 .6-7.5 .6-5.8 .6 11.4 .6-5.7 .6-3.4 .6 2.5 .6 8.8 .6-6.3 .6-1 .6 5.6 .6-4.9 .6 8.4 .6-13.1 .6 11.8 .6-8.1 .6 1.7 .6 .9 .6 7.4 .6-12.5 .6 9.3 .6-5.4 .6-7.4 .6 9.1 .6-1.4 .6 7.8 .6-13.4 .6 13 .6-20.4 .6 21.5 .6-11.8 .6 12.1 .6-9.6 .6-3 .6 7.4 .6-5.6 .6 2.2 .6 8.5 .6-10.5 .6 9.6 .6-19.5 .6 14.1 .6-3.1 .6-.7 .6 8 .6-19.7 .6 15.6 .6-4.2 .6 .8 .6 4.3 .6 .8 .6 2.4 .6-1.5 .6 3.3 .6-11.4 .6 .5 .6 7.6 .6-5.3 .6 6.3 .6-8.1 .6 10.9 .6-10.2 .6 4.4 .6 .4 .6 1.3 .6-5.5 .6 8.5 .6-9 .6 7.1 .6-9.1 .6 5.5 .6-6.1 .6 9.2 .6-6.2 .6 9.4 .6-9.2 .6 2.8 .6-7.7 .6 12.2 .6-6.4 .6-4.8 .6 6.1 .6-6.5 .6 11.6 .6-4.9 .6-5.1 .6 9 .6-9.3 .6 6.6 .6-2.7 .6 6.9 .6-8.6 .6 5.6 .6-9.3 .6 4.4 .6 5.1 .6 2.1 .6-2.2 .6-5.7 .6 3.8 .6 3.9 .6-10 .6 3.3 .6 7.2 .6-11.1 .6-.7 .6 12.3 .6-17.7 .6 11.7 .6-4.5 .6 4.2 .6-3.8 .6-2.8 .6 2.4 .6 10.7 .6-11.7 .6 7.8 .6-5 .6 7.1 .6-16 .6 9.7 .6-2.6 .6 8.4 .6-6.6 .6 5.3 .6-8.5 .6 2.2 .6 8.9 .6-10 .6 7.2 .6-8.3 .6 .9 .6 6.9 .6-4.6 .6 7.7 .6-6.8 .6 8.8 .6-13.8 .6 12.8 .6-9.6 .6 10.1 .6-2.8 .6-8.7 .6 2.7 .6 5.6 .6-5 .6 6.5 .6-2.4 .6-4.6 .6 7.8 .6-8.1 .6 .3 .6 6.4 .6-8.8 .6 10.6 .6-11.2 .6-.5 .6 6.2 .6-5 .6 12 .6-1.3 .6-11.8 .6 5.7 .6-4 .6 11 .6-12.9 .6 9.3 .6 3.5 .6-5 .6-16.4 .6 10.6 .6 6.2 .6 2.3 .6-10.9 .6 9.6 .6-14.8 .6 7.7 .6-2.7 .6 13 .6-10.8 .6 7.5 .6-7.1 .6-.9 .6 7.5 .6-6.5 .6 5.8 .6-4.4 .6 5.6 .6-4.4 .6 8.2 .6-3.5 .6-8 .6 5 .6 4.1 .6-1.5 .6-1.4 .6-7.5 .6 7.7 .6-3.9 .6-.9 .6 5.4 .6-9 .6 9.7 .6-5.5 .6 4.2 .6-3 .6 1.1 .6-12 .6 19.3 .6-14.1 .6 7 .6-3.5 .6-.9 .6 1.3 .6 10.3 .6-6.5 .6-5.1 .6 5.8 .6-7.1 .6 8.6 .6-6.2 .6 4.4 .6-8.2 .6-7.5 .6 7.6 .6 11.8 .6-10.1 .6 5.7 .6-4.9 .6 2 .6-2.4 .6 7.1 .6-.4 .6-5.4 .6-2.4 .6 12.3 .6-5.2 .6-5.7 .6 11.4 .6-9.8 .6 7 .6-8.3 .6 5.2 .6-5.7 .6 7.2 .6-5.6 .6-1.6 .6 6.6 .6-5.7 .6 2.1 .6 9.1 .6-12.9 .6 7.8 .6-6.3 .6 7.6 .6-13.2 .6 7.2 .6 6.6 .6-9.1 .6 5 .6-6.5 .6 10.9 .6-10.8 .6-.4 .6 8.9 .6-8.7 .6 10.5 .6-6.1 .6 4.7 .6-5.4 .6 3.5 .6-3.6 .6-3.4 .6 6.4 .6-1.6 .6 8.7 .6-13.5 .6 .9 .6 7.8 .6-7.7 .6-7.3 .6 12.6 .6-2.3 .6 3.6 .6-7.5 .6 12.8 .6-11.4 .6 6.6 .6-8.2 .6 10.5 .6-4.5 .6-1.3 .6 6.5 .6-7.7 .6 5.7 .6-9.2 .6 7.8 .6-1.1 .6-2.6 .6 6 .6-9 .6 3 .6-2.8 .6 12.2 .6-13 .6 7.3 .6-13.1 .6 12.4 .6-4.6 .6 4.1 .6-2.5 .6 2.8 .6-5.2 .6-.9 .6 6 .6-2.7 .6-.3 .6 .5 .6 6.4 .6 .4 .6-8.6 .6-5.1 .6 5.5 .6 9.6 .6-12.1 .6 8.9 .6-6.2 .6-.5 .6-.4 .6-.4 .6 1 .6-10.7 .6 13.1 .6 5.5 .6-11 .6 6.4 .6 5.4 .6-7.1 .6 4.3 .6-4.9 .6 3.8 .6-6.3 .6 7.7 .6-7.9 .6 10.7 .6-8.9 .6-2.9 .6 13.2 .6-12.5 .6 12.7 .6-12.2 .6 8.5 .6-5.6 .6 6.8 .6-6 .6 3.6 .6-6.3 .6 9.8 .6-11.5 .6 9.7 .6-5.4 .6 3.5 .6-3.6 .6-2.6 .6 7.8 .6-7.1 .6 6.3 .6 4.6 .6-9.7 .6-1.2 .6 6.8 .6-6.9 .6 7.9 .6-10.7 .6 7.4 .6 3.5 .6 1.2 .6-3.9 .6-7.3 .6 .3 .6 10.9 .6-3.8 .6 3.6 .6 .1 .6-7 .6-3.6 .6-4.4 .6 3.9 .6 6.7 .6-6.2 .6 1.1 .6-2.5 .6 8 .6-7.6 .6 13.1 .6-8.2 .6 6.8 .6-7.8 .6 2 .6 .7 .6-4.2 .6 6 .6-7.2 .6 10.7 .6-11.6 .6 7.7 .6-4.1 .6 2 .6 .5 .6-3.8 .6 6.4 .6-6.9 .6 8.8 .6-9 .6 7 .6-5.8 .6 2.7 .6-2.2 .6-.1 .6 6.4 .6 .2 .6-8.6 .6 7 .6-16.1 .6 8.5 .6 3.5 .6 4.5 .6-5.3 .6 5.1 .6-4.8 .6-3.6 .6 4.5 .6-3.4 .6 6.7 .6-5.3 .6 6 .6-8.6 .6 2.5 .6 5.1 .6-3.8 .6-2.9 .6 .3 .6 5.4 .6-2.3 .6 3.5 .6-8.4 .6 8.8 .6-8.2 .6 9.5 .6-8 .6-10.1 .6 15.5 .6-4.1 .6 4.2 .6-8 .6 3.6 .6 4.3 .6-5.5 .6 8.4 .6-7.6 .6 4.2 .6-6.9 .6-2.9 .6 5.4 .6 7.8 .6-11 .6 13.7 .6-8.7 .6 7.6 .6-10.5 .6 8.3 .6 .6 .6-7 .6 7.6 .6-6.6 .6 5.6 .6-17.1 .6 13.1 .6-3.3 .6 8.4 .6-9.5 .6 .7 .6 3.7 .6-1.3 .6 7.1 .6-6.9 .6 9 .6-12.5 .6 7.7 .6-6 .6 7.2 .6-7 .6-10.7 .6 2.7 .6 14.5 .6-4.7 .6 2.6 .6 4 .6-8.6 .6 6.5 .6-7.8 .6 11.6 .6-13.1 .6 10.4 .6 1.4 .6-8.1 .6 8.9 .6-6.8 .6-5.1 .6 .6 .6 10.2 .6-5.5 .6-1 .6 8.6 .6-11.1 .6 6.2 .6-7.3 .6 7.7 .6-8.2 .6 10.9 .6-11.1 .6-1.2 .6 9.9 .6-7.8 .6 10.1 .6-2.1 .6-5.1 .6 4 .6-4.5 .6-4 .6 11.5 .6-11.8 .6 13 .6 .4 .6-2.2 .6-11.8 .6 1.2 .6 3.2 .6 5.1 .6 1.2 .6-7.5 .6-.8 .6 6.5 .6 3.4 .6-7.6 .6-2 .6-.9 .6 10.6 .6-6.8 .6 4.9 .6 1.7 .6-10.4 .6 12.4 .6-3.6 .6 .2 .6-10.7 .6 14.4 .6-4.7 .6-4.5 .6 2.6 .6-3.8 .6 4.4 .6-2.9 .6 3.5 .6-1.7 .6-4.8 .6 11.1 .6-12 .6-.7 .6 8.7 .6-7.8 .6 7.8 .6-9 .6 13.5 .6-14.1 .6 3.4 .6 9.5 .6-5.5 .6 2.2 .6 .7 .6-4.6 .6 2.8 .6-5.7 .6 8.2 .6-8.2 .6 6.7 .6-9.6 .6 6.6 .6-5.1 .6 10.6 .6-9.2 .6 4 .6-5.5 .6 4.2 .6 6.2 .6-7.9 .6-3.7 .6 12.8 .6-10.4 .6 11.3 .6-10.2 .6 3.6 .6-2.8 .6 5.5 .6-5.4 .6 6.5 .6 1 .6-6.7 .6 6.6 .6-10.3 .6 11.6 .6-12.8 .6 10.6 .6-2 .6-9.1 .6 9.8 .6-8.4 .6 7.9 .6-1.8 .6-5.7 .6 1 .6 6.8 .6 4.7 .6-7.3 .6-3.8 .6 5.8 .6-5.4 .6 1.2 .6 8.7 .6-11.6 .6 9.6 .6-5.6 .6 .6 .6-1.1 .6 7.1 .6-11.3 .6 6.4 .6-13.6 .6 10.1 .6 7.1 .6 1.1 .6-8 .6 9.8 .6-11.7 .6 12.1 .6-12.1 .6 6.1 .6 5.3 .6-8.7 .6 6.1 .6-9.3 .6 8.8 .6-8.7 .6 11.7 .6-6 .6-2.6 .6 4.4 .6-9.1 .6 10.8 .6-9.7 .6 7.9 .6-5.3 .6 10.3 .6-12.4 .6-6.1 .6 5.4 .6 2.2 .6 7.2 .6-6.6 .6 6.2 .6-9.9 .6 8.9 .6-6.1 .6 8 .6-8.1 .6-9.1 .6 8.8 .6 5.8 .6-5.5 .6 10.7 .6-.6 .6-3.3 .6-4.1 .6-1.1 .6 1.9 .6-6.4 .6 12.4 .6-12.3 .6 11.3 .6-5.7 .6-4.6 .6 9.5 .6-8.3 .6 9.3 .6-6.1 .6 3.3 .6-6.3 .6-4.4 .6 14.8 .6-16.3 .6 14.8 .6-6.2 .6 8.6 .6-13.1 .6 11.2 .6-11.9 .6 13.7 .6-13.9 .6 6.9 .6-1.4 .6-3.3 .6 4.8 .6-6.9 .6 1.4 .6 6.1 .6-7.1 .6 13.4 .6-12.7 .6 7 .6-6.1 .6 9 .6-16.8 .6 13.4 .6-10.3 .6 14.9 .6-9.4 .6 1.1 .6 10 .6-10.9 .6 3.9 .6 .9 .6-2.1 .6 5.5 .6-5.5 .6 1.4 .6-5.9 .6-.1 .6 2.8 .6 .2 .6 4.5 .6-8.2 .6-5.5 .6 10 .6 2.7 .6-5.4 .6 8.8 .6-8.6 .6 7.2 .6-8.5 .6 6 .6-3 .6 7.6 .6-9.1 .6 7.8 .6-15.1 .6 7.6 .6 11 .6-12.8 .6 10.3 .6-6.3 .6 3.5 .6-8.6 .6 10.9 .6-3.4 .6 5.9 .6-5.4 .6-3.2 .6 3.4 .6-2.8 .6 8.1 .6-8.1 .6 1.9 .6-6.1 .6 6.6 .6-6.4 .6 10.3 .6-5.9 .6 8.5 .6-13 .6 9.7 .6 3.2 .6-11.3 .6 6.5 .6-5.8 .6-2.2 .6 7.1 .6-6.5 .6 4.5 .6-1.2 .6 2.3 .6-2.7 .6 7.9 .6 .2 .6-3.6 .6-5.9 .6-1.2 .6 10.7 .6-12.5 .6 6.7 .6-5.8 .6 12.8 .6-11.2 .6 9.2 .6-9 .6 8.9 .6-6.6 .6 7.8 .6-10.4 .6 8.1 .6 .7 .6-8.6 .6 10 .6-8.5 .6 2.6 .6-4.7 .6 9.1 .6-15.7 .6 8.1 .6 9.2 .6-11.4 .6 5.8 .6-2.6 .6-5.1 .6 8.4 .6-7.4 .6 12.3 .6-12.9 .6-3.4 .6 15.3 .6-9.2 .6 5 .6-3.9 .6-2 .6 5.5 .6 .5 .6 5.1 .6-7.9 .6-7.5 .6 7.1 .6-2.6 .6 1.2 .6 10.8 .6-11.1 .6 10.3 .6-8.6 .6 2.3 .6-6.7 .6 13.4 .6-8.9 .6 4.7 .6-4.6 .6 1.6 .6-4.5 .6 9.7 .6-11.9 .6 7.1 .6-6.9 .6 9.8 .6-8.7 .6 2.9 .6 7.6 .6-9.9 .6 1 .6 2.7 .6 7.1 .6-15.8 .6 6.8 .6 6.9 .6-8.6 .6 12.2 .6-14.2 .6 7.2 .6 .7 .6-6.1 .6 7.3 .6-6.5 .6-7.2 .6 4.9 .6-.3 .6 2.7 .6-6.1 .6 6.9 .6 3.1 .6-6.6 .6-5.8 .6 9.8 .6 6.5 .6-6.8 .6 6.2 .6-8.2 .6 11.7 .6-8 .6-2 .6 9.1 .6-1.5 .6-10.8 .6 7.9 .6-4.6 .6 7.4 .6-6.1 .6 3.5 .6-5.3 .6 11.1 .6-11.8 .6 10.9 .6-12.6 .6 11 .6 .8 .6-8 .6 7.3 .6-1.7 .6-4.2 .6 5.1 .6-6.9 .6 .9 .6 3 .6-6.8 .6 10.3 .6-11 .6 7.7 .6-7.7 .6-2.7 .6 8.9 .6-4.8 .6 5.2 .6-.1 .6-6.6 .6 8.4 .6-5.5 .6 3.5 .6-3.7 .6 7.3 .6-6.8 .6 4.7 .6-15.7 .6 7.6 .6 12.6 .6-11.2 .6 12.7 .6-11.5 .6 5.6 .6 3.7 .6-11.9 .6 6.3 .6-2.7 .6 8 .6-8.7 .6 7.6 .6-3.3 .6-4.4 .6 8.9 .6-4.8 .6 7.1 .6-9.6 .6 8.4 .6-11.8 .6 3.9 .6 4.2 .6-4.2 .6 5.7 .6-5.4 .6 8.6 .6-7.3 .6-1.8 .6 2.8 .6-6.8 .6 11.6 .6-9.4 .6 6.8 .6-7.3 .6-6.3 .6 10.2 .6-4.5 .6 11.1 .6-12.9 .6 14 .6-10.8 .6-6.5 .6 11.1 .6-1.2 .6 6.1 .6-7.4 .6 7.3 .6-8.5 .6 5.8 .6-6.4 .6 3.9 .6-6.6 .6 10.7 .6-6.2 .6 5.3 .6-8.1 .6 5 .6-3.7 .6-.6 .6 .9 .6 4.6 .6-5.7 .6 1.6 .6 9.5 .6-11.2 .6 6.5 .6-2.5 .6-5.1 .6 0 .6 5.2 .6 4.9 .6-9.2 .6-6.1 .6 11.4 .6-2.5 .6-4.8 .6 12.3 .6-1.7 .6-2.1 .6 4.3 .6-1.6 .6-11.8 .6 7.8 .6-5.3 .6 6.8 .6-7.2 .6 7.7 .6-9.3 .6 11 .6-11.2 .6-4.7 .6 17.6 .6-15 .6 1.9 .6-3.2 .6 4.1 .6 11.4 .6-1.3 .6-3.3 .6-6.9 .6 7 .6-3.7 .6 6.4 .6-10.6 .6 7.1 .6-5.3 .6 5 .6-3.9 .6 7.8 .6 1.5 .6-8.2 .6 3.8 .6 2.4 .6-5.3 .6 3.5 .6-7.6 .6 7.6 .6 2.8 .6-9.9 .6 7.8 .6-5.9 .6 3.2 .6 4.5 .6-6.5 .6 2.3 .6-4.3 .6 5.8 .6-6.1 .6-.1 .6 10.3 .6 1.2 .6-5.9 .6-2.6 .6-1.8 .6 3.4 .6-1.4 .6-4.7 .6 10 .6-5.7 .6 3.4 .6-8.1 .6 2.9 .6 7.7 .6-10.9 .6 13.7 .6-8.7 .6 .8 .6 5 .6 .9 .6-7.4 .6 8.3 .6-9.7 .6 5.8 .6-8.3 .6 9.7 .6-5.5 .6 7.5 .6-4.5 .6-3.7 .6 7 .6-8.4 .6 9.7 .6-7 .6 6.4 .6-4.9 .6-1.3 .6 7.4 .6-12 .6 13.3 .6-6.1 .6-4.3 .6 1.7 .6 6.2 .6-8.3 .6 9.5 .6-8.6 .6 7.6 .6-6.2 .6 3.3 .6 1.3 .6-9.3 .6 12 .6-4.9 .6-3.3 .6 3.6 .6-7.6 .6 13.2 .6-11.2 .6 6 .6-2.9 .6-4 .6 4.8 .6-.7 .6 3.1 .6-7.6 .6 12 .6-11.2 .6 6.1 .6-3.7 .6 4.2 .6-8.6 .6 2.2 .6 8.8 .6-8.1 .6 10.9 .6-11.3 .6 3.7 .6-1.4 .6-2.9 .6 8.3 .6-9.2 .6 3.9 .6 2.5 .6-6.7 .6 10.5 .6-10.7 .6 11.1 .6-9.2 .6-5.1 .6 8 .6 3.9 .6-5.9 .6-.7 .6 8.9 .6 2.4 .6-1.8 .6-11 .6 9.1 .6-8 .6 6.9 .6-9.2 .6 10 .6 1.7 .6-2.6 .6-2.2 .6-6.2 .6 .9 .6 8.5 .6-7.8 .6 8.2 .6-5.6 .6-7.1 .6 5.1 .6 10.2 .6-11.6 .6 6.4 .6-.1 .6-3.5 .6 2.2 .6 3.6 .6-5.8 .6 9.2 .6-6.9 .6-4.2 .6 4.6 .6-4.3 .6-1.3 .6 10.5 .6-9.5 .6 8.3 .6-5.7 .6 6.4 .6-2.6 .6-15.7 .6 18.8 .6-2.7 .6-7.3 .6 11.5 .6-7 .6-6.5 .6 12.4 .6-15.6 .6 12 .6-6.9 .6 12.1 .6-2.6 .6-7.5 .6-.8 .6 9.5 .6-6.7 .6-10.7 .6 7.9 .6 8.1 .6-6.8 .6 6.3 .6-7 .6 1.8 .6 7.6 .6-12 .6 7.8 .6 4.2 .6-8.5 .6 7.5 .6-7.1 .6 1.6 .6 4 .6-9.8 .6 8.7 .6-14.1 .6 8.5 .6 5.9 .6-6 .6 7.3 .6-10.6 .6 10.7 .6-9.2 .6 10.2 .6-6.5 .6 1.1 .6-10.3 .6 13.6 .6-12.7 .6 14.5 .6-6.3 .6 1.9 .6-6.7 .6 11.3 .6-11.7 .6 8.1 .6-3 .6 2.5 .6-1.3 .6-3.1 .6 3.7 .6-4 .6-6.9 .6 13.8 .6-4.3 .6 5.5 .6-1 .6-6.4 .6 8.8 .6-.3 .6-9.2 .6 .5 .6 4.4 .6-7 .6 5.9 .6 3.6 .6-2.2 .6-3.2 .6-11.6 .6 1.8 .6 4.7 .6 9.9 .6-9.6 .6 10.2 .6-6.7 .6-.5 .6 1 .6 2 .6-3 .6 4.7 .6-2.9 .6 2.6 .6 6.2 .6-11.1 .6 3.9 .6-4.6 .6 10.7 .6-12.6 .6 9.1 .6-7.1 .6 2.6 .6 4.2 .6-7.6 .6 11.7 .6-7.6 .6 8.6 .6-16.8 .6 3.8 .6-7.3 .6 7.8 .6 6.5 .6-7.6 .6 9.5 .6-9.2 .6 7.3 .6-8.3 .6 5.4 .6 4.3 .6 1.3 .6 1.3 .6-9.9 .6 8.9 .6-5.6 .6 3.6 .6-9 .6 9.9 .6-9.1 .6 7.8 .6 2 .6-6.8 .6 6.9 .6-7.2 .6 6.6 .6-10.4 .6 9.4 .6-4.3 .6 9.2 .6-2.2 .6-6.9 .6 2.4 .6-5.8 .6 11 .6-10.1 .6 11 .6-1.4 .6-11.3 .6 9.6 .6 1.7 .6-2.6 .6-5.3 .6 3.4 .6-7.7 .6 8.1 .6-2.5 .6 2.5 .6-6 .6 11.9 .6-13.6 .6 12.9 .6-12 .6 11.6 .6-10.3 .6 2.9 .6 2.4 .6-4.3 .6 5.5 .6-9.1 .6 12.5 .6-7.7 .6-8 .6 17.3 .6-9.6 .6-2.9 .6-1.1 .6-6.2 .6 8.5 .6-2.4 .6 12 .6-4.4 .6-4.2 .6 9.3 .6-8.3 .6 8.5 .6-11 .6 10.9 .6-11.5 .6 .2 .6-1.6 .6 3.9 .6 3 .6-4.1 .6 5.8 .6-7.9 .6 3.3 .6-3.9 .6 12.2 .6-12.3 .6 12.1 .6-11.5 .6 7.1 .6-6.6 .6 5.9 .6-3.9 .6 8.5 .6-2.1 .6-7 .6 8.2 .6-11.2 .6 7.2 .6-6.7 .6 8.8 .6 3.5 .6-5.7 .6-4.1 .6 6.7 .6-1.4 .6-6.8 .6 9.5 .6-6.2 .6 2.7 .6-6.7 .6 8.4 .6-8.9 .6 14 .6-18.9 .6 15.8 .6-.3 .6-6.1 .6 5.2 .6-9.3 .6 9.2 .6-15.5 .6 14.6 .6-6.9 .6 11.8 .6-10.6 .6 5.1 .6-3.5 .6 7.6 .6-10.5 .6 9.1 .6-16.5 .6 12.1 .6-3 .6 4 .6-6.9 .6 6.1 .6-4.4 .6 5.1 .6-7.1 .6 12.6 .6-12.6 .6 8.5 .6-3.8 .6 4.8 .6-7.7 .6 8.3 .6-10.2 .6 11.9 .6-18.4 .6 13.2 .6-4.1 .6 7.8 .6-7.6 .6 6.8 .6 2.4 .6-19.3 .6 20.3 .6-11.2 .6 12.2 .6-.1 .6-6.9 .6-2.7 .6 8.7 .6-11.9 .6 7.3 .6-1.1 .6-3.7 .6 6.9 .6 .1 .6-6.5 .6 5 .6 1.3 .6-10.5 .6 8.3 .6-3.8 .6 5.2 .6-8.3 .6 12.7 .6-9 .6 4.2 .6-3.6 .6 3.8 .6-4.9 .6 2 .6-3.2 .6-3.4 .6 9.4 .6-6.3 .6 6 .6-.1 .6 3.6 .6 1 .6-7.2 .6-1.1 .6-5.2 .6 9.6 .6-7.5 .6 5.3 .6-7.2 .6 11.1 .6-8.4 .6 3.9 .6-5.1 .6 5.3 .6-1.7 .6 6.9 .6-7 .6 5.2 .6-4.9 .6-11.6 .6 19.7 .6-11.2 .6 2.6 .6 3.1 .6-4.7 .6-1.7 .6 2.7 .6 4.3 .6-7.5 .6 9.1 .6-15 .6 16 .6-8.5 .6 10.7 .6-8.8 .6 1.7 .6 .4 .6-12.2 .6 7 .6 10.8 .6-9.1 .6-1.9 .6 5.3 .6 .3 .6-1.7 .6 .3 .6 3.6 .6-3.8 .6 7.5 .6 .7 .6 .2 .6-13.7 .6 13.2 .6-9.2 .6 6.6 .6-8.9 .6 5.4 .6-5.1 .6-1.3 .6 8.3 .6-6.6 .6 7 .6-5.7 .6 7.5 .6-3.6 .6-.2 .6-3.7 .6-2.7 .6 8.8 .6-7 .6 7.1 .6-9.8 .6 8.3 .6-8.7 .6 4.5 .6 4.1 .6-6.9 .6 9.7 .6-7.1 .6 7 .6-4.5 .6-2.5 .6 4.5 .6 3.2 .6-.6 .6-11.3 .6 13.2 .6-13.2 .6 9.5 .6-5.2 .6 2.2 .6-6.2 .6 7.1 .6-1.8 .6-5.4 .6 13.6 .6-11.1 .6 6.5 .6-5.5 .6 9.2 .6-11.8 .6 10.4 .6-11.2 .6 7.5 .6-5.3 .6 11.1 .6-10.6 .6 7.3 .6-8.2 .6 7.5 .6-7.5 .6 10.6 .6-1.3 .6-9.8 .6 12.1 .6-17.6 .6 14.9 .6 1.7 .6-9.7 .6 6.7 .6-6.2 .6-3 .6 8.4 .6-3.8 .6 6.2 .6-7.1 .6-10.8 .6 8.3 .6 9.1 .6 .2 .6-6.8 .6 7 .6-10.4 .6 11.5 .6-8.6 .6 8.2 .6-10.1 .6 8.4 .6-9.4 .6 8.4 .6-6.4 .6 6.6 .6-8.7 .6 11.4 .6-10.2 .6 1.4 .6 8.6 .6-9.5 .6 10.5 .6-9.3 .6 8.4 .6-10 .6-6.3 .6 4.4 .6 6.6 .6-13.3 .6 18.7 .6-5.6 .6-3.8 .6 9 .6-3.2 .6-5.4 .6 8.3 .6 .3 .6-7.4 .6 3.7 .6-2.4 .6 7.2 .6-12.3 .6 10.4 .6-9.1 .6 9.8 .6-10.7 .6 4.6 .6 6.7 .6-3.6 .6-8.8 .6 4.1 .6 9.2 .6-5.5 .6 1 .6-6.1 .6 9.5 .6-8.5 .6 7 .6-13.5 .6 11.8 .6-8.2 .6 7.1 .6-4.7 .6 5.7 .6 1.4 .6-10.2 .6 7.7 .6-4.4 .6-2.3 .6 7.6 .6-8.3 .6 13 .6-13.4 .6 9.3 .6-13 .6 17.7 .6-11 .6 9 .6-8.8 .6 6.6 .6-1.2 .6-6.8 .6 9.6 .6-8.1 .6 3.5 .6-2.7 .6 7 .6-10.1 .6 10.4 .6-11.5 .6 8.7 .6-6.2 .6 10.3 .6-9.1 .6 2.1 .6 2.3 .6 6.3 .6-8.8 .6 4.6 .6-7.5 .6 5.4 .6 4.6 .6 .2 .6-12.1 .6 12 .6-10.9 .6 1.3V1364.8Z" fill="#86c762" fill-opacity="0.35" stroke="#86c762" stroke-width="0.9" stroke-opacity="1" stroke-linejoin="round" clip-path="url(#cw)"/>
<rect x="49.2" y="1347" width="1631.8" height="13.8" fill="#86c762" fill-opacity="0.4"/>
<text x="1718.6" y="1093.6" font-size="9.3" fill="#6e9fff" textLength="22.6" lengthAdjust="spacingAndGlyphs">Name</text>
<text x="1875.6" y="1093.6" font-size="9.3" fill="#6e9fff" textLength="16.4" lengthAdjust="spacingAndGlyphs">Last</text>
<path d="M1894.3 1090.4 l1.3 1.3 l1.3 -1.3" fill="none" stroke="#6e9fff" stroke-width="0.7"/>
<path d="M1699.3 1099.5H1902.8M1699.3 1115.5H1902.8M1699.3 1132.5H1902.8M1699.3 1148.5H1902.8M1699.3 1164.5H1902.8M1699.3 1180.5H1902.8M1699.3 1197.5H1902.8M1699.3 1213.5H1902.8M1699.3 1229.5H1902.8M1699.3 1245.5H1902.8M1699.3 1261.5H1902.8M1699.3 1278.5H1902.8M1699.3 1294.5H1902.8M1699.3 1310.5H1902.8M1699.3 1326.5H1902.8" stroke="#ccccdc" stroke-opacity="0.12" stroke-width="1"/>
<rect x="1704" y="1106.3" width="9.1" height="2.2" rx="0.7" fill="#e6c82e"/>
<text x="1718.6" y="1109.9" font-size="9.3" fill="#ccccdc" textLength="97.5" lengthAdjust="spacingAndGlyphs">Bedroom 1/Network Rack</text>
<text x="1873.7" y="1109.9" font-size="9.3" fill="#ccccdc" textLength="23.3" lengthAdjust="spacingAndGlyphs">218 W</text>
<rect x="1704" y="1122.52" width="9.1" height="2.2" rx="0.7" fill="#c3d040"/>
<text x="1718.6" y="1126.12" font-size="9.3" fill="#ccccdc" textLength="80.6" lengthAdjust="spacingAndGlyphs">Kitchen Plugs/Fridge</text>
<text x="1876.7" y="1126.12" font-size="9.3" fill="#ccccdc" textLength="20.3" lengthAdjust="spacingAndGlyphs">98 W</text>
<rect x="1704" y="1138.74" width="9.1" height="2.2" rx="0.7" fill="#86cc60"/>
<text x="1718.6" y="1142.34" font-size="9.3" fill="#ccccdc" textLength="84.5" lengthAdjust="spacingAndGlyphs">Master Bedroom/Bath</text>
<text x="1871.5" y="1142.34" font-size="9.3" fill="#ccccdc" textLength="25.5" lengthAdjust="spacingAndGlyphs">16.8 W</text>
<rect x="1704" y="1154.96" width="9.1" height="2.2" rx="0.7" fill="#7bc862"/>
<text x="1718.6" y="1158.56" font-size="9.3" fill="#ccccdc" textLength="86.9" lengthAdjust="spacingAndGlyphs">Laundry Room/Garage</text>
<text x="1872.9" y="1158.56" font-size="9.3" fill="#ccccdc" textLength="24.1" lengthAdjust="spacingAndGlyphs">11.3 W</text>
<rect x="1704" y="1171.18" width="9.1" height="2.2" rx="0.7" fill="#7bc862"/>
<text x="1718.6" y="1174.78" font-size="9.3" fill="#ccccdc" textLength="31.1" lengthAdjust="spacingAndGlyphs">Furnace</text>
<text x="1869.6" y="1174.78" font-size="9.3" fill="#ccccdc" textLength="27.4" lengthAdjust="spacingAndGlyphs">9.50 W</text>
<rect x="1704" y="1187.4" width="9.1" height="2.2" rx="0.7" fill="#7bc862"/>
<text x="1718.6" y="1191" font-size="9.3" fill="#ccccdc" textLength="41.8" lengthAdjust="spacingAndGlyphs">Microwave</text>
<text x="1870.6" y="1191" font-size="9.3" fill="#ccccdc" textLength="26.4" lengthAdjust="spacingAndGlyphs">5.75 W</text>
<rect x="1704" y="1203.62" width="9.1" height="2.2" rx="0.7" fill="#7bc862"/>
<text x="1718.6" y="1207.22" font-size="9.3" fill="#ccccdc" textLength="20.6" lengthAdjust="spacingAndGlyphs">EVSE</text>
<text x="1869.6" y="1207.22" font-size="9.3" fill="#ccccdc" textLength="27.4" lengthAdjust="spacingAndGlyphs">4.50 W</text>
<rect x="1704" y="1219.84" width="9.1" height="2.2" rx="0.7" fill="#7bc862"/>
<text x="1718.6" y="1223.44" font-size="9.3" fill="#ccccdc" textLength="131.3" lengthAdjust="spacingAndGlyphs">Dining Room/Kitchen/Living Room</text>
<text x="1869.8" y="1223.44" font-size="9.3" fill="#ccccdc" textLength="27.2" lengthAdjust="spacingAndGlyphs">4.25 W</text>
<rect x="1704" y="1236.06" width="9.1" height="2.2" rx="0.7" fill="#7bc862"/>
<text x="1718.6" y="1239.66" font-size="9.3" fill="#ccccdc" textLength="47.4" lengthAdjust="spacingAndGlyphs">Living Room</text>
<text x="1882.1" y="1239.66" font-size="9.3" fill="#ccccdc" textLength="14.9" lengthAdjust="spacingAndGlyphs">2 W</text>
<rect x="1704" y="1252.28" width="9.1" height="2.2" rx="0.7" fill="#7bc862"/>
<text x="1718.6" y="1255.88" font-size="9.3" fill="#ccccdc" textLength="81.1" lengthAdjust="spacingAndGlyphs">Disposal/Dishwasher</text>
<text x="1883.5" y="1255.88" font-size="9.3" fill="#ccccdc" textLength="13.5" lengthAdjust="spacingAndGlyphs">1 W</text>
<rect x="1704" y="1268.5" width="9.1" height="2.2" rx="0.7" fill="#7bc862"/>
<text x="1718.6" y="1272.1" font-size="9.3" fill="#ccccdc" textLength="36.4" lengthAdjust="spacingAndGlyphs">Unknown</text>
<text x="1865.2" y="1272.1" font-size="9.3" fill="#ccccdc" textLength="31.8" lengthAdjust="spacingAndGlyphs">500 mW</text>
<rect x="1704" y="1284.72" width="9.1" height="2.2" rx="0.7" fill="#7bc862"/>
<text x="1718.6" y="1288.32" font-size="9.3" fill="#ccccdc" textLength="36.4" lengthAdjust="spacingAndGlyphs">Unknown</text>
<text x="1881.6" y="1288.32" font-size="9.3" fill="#ccccdc" textLength="15.4" lengthAdjust="spacingAndGlyphs">0 W</text>
<rect x="1704" y="1300.94" width="9.1" height="2.2" rx="0.7" fill="#7bc862"/>
<text x="1718.6" y="1304.54" font-size="9.3" fill="#ccccdc" textLength="50.8" lengthAdjust="spacingAndGlyphs">Panel Outlets</text>
<text x="1881.6" y="1304.54" font-size="9.3" fill="#ccccdc" textLength="15.4" lengthAdjust="spacingAndGlyphs">0 W</text>
<rect x="1704" y="1317.16" width="9.1" height="2.2" rx="0.7" fill="#7bc862"/>
<text x="1718.6" y="1320.76" font-size="9.3" fill="#ccccdc" textLength="36.4" lengthAdjust="spacingAndGlyphs">Unknown</text>
<text x="1881.6" y="1320.76" font-size="9.3" fill="#ccccdc" textLength="15.4" lengthAdjust="spacingAndGlyphs">0 W</text>
<rect x="11.5" y="1384.5" width="1897" height="323" rx="1.4" fill="#181b1f" stroke="#2e3036" stroke-width="1"/>
<text x="17.5" y="1399.6" font-size="10" fill="#ccccdc" textLength="77.5" lengthAdjust="spacingAndGlyphs" stroke="#ccccdc" stroke-width="0.22">All Circuits Amps</text>
<g fill="none" stroke="#9d9dae" stroke-width="0.85" stroke-linecap="round" stroke-linejoin="round">
<path d="M107.5 1399.8L115.4 1391.8" stroke-width="0.95"/>
<path d="M108 1393.5Q108.5 1391.5 110.5 1391.4H113.3"/>
<path d="M115.8 1394V1395.7"/>
<path d="M115.4 1398.3Q114.9 1400.3 112.9 1400.4H110.1"/>
<path d="M107.6 1397.8V1396.1"/>
<circle cx="108.2" cy="1393.5" r="0.75" fill="#9d9dae" stroke="none"/>
<circle cx="115.1" cy="1398.6" r="0.75" fill="#9d9dae" stroke="none"/>
</g>
<path d="M39.5 1418.3V1693M93.5 1418.3V1693M147.5 1418.3V1693M201.5 1418.3V1693M255.5 1418.3V1693M309.5 1418.3V1693M363.5 1418.3V1693M417.5 1418.3V1693M471.5 1418.3V1693M525.5 1418.3V1693M580.5 1418.3V1693M634.5 1418.3V1693M688.5 1418.3V1693M742.5 1418.3V1693M796.5 1418.3V1693M850.5 1418.3V1693M904.5 1418.3V1693M958.5 1418.3V1693M1012.5 1418.3V1693M1066.5 1418.3V1693M1120.5 1418.3V1693M1174.5 1418.3V1693M1228.5 1418.3V1693M1283.5 1418.3V1693M1337.5 1418.3V1693M1391.5 1418.3V1693M1445.5 1418.3V1693M1499.5 1418.3V1693M1553.5 1418.3V1693M1607.5 1418.3V1693M1661.5 1418.3V1693" stroke="#ccccdc" stroke-opacity="0.1" stroke-width="1" fill="none"/>
<path d="M36.3 1418.5H1693.9M36.3 1484.5H1693.9M36.3 1548.5H1693.9M36.3 1603.5H1693.9M36.3 1690.5H1693.9" stroke="#ccccdc" stroke-opacity="0.08" stroke-width="1" fill="none"/>
<text x="22.89" y="1419.9" font-size="9.3" fill="#c7c7d6" textLength="12.11" lengthAdjust="spacingAndGlyphs">8 A</text>
<text x="22.89" y="1486.3" font-size="9.3" fill="#c7c7d6" textLength="12.11" lengthAdjust="spacingAndGlyphs">4 A</text>
<text x="22.89" y="1549.9" font-size="9.3" fill="#c7c7d6" textLength="12.11" lengthAdjust="spacingAndGlyphs">2 A</text>
<text x="22.89" y="1604.9" font-size="9.3" fill="#c7c7d6" textLength="12.11" lengthAdjust="spacingAndGlyphs">1 A</text>
<text x="22.89" y="1690.9" font-size="9.3" fill="#c7c7d6" textLength="12.11" lengthAdjust="spacingAndGlyphs">0 A</text>
<text x="39.3" y="1701" font-size="9.3" fill="#c7c7d6" text-anchor="middle" textLength="22.52" lengthAdjust="spacingAndGlyphs">00:00</text>
<text x="93.38" y="1701" font-size="9.3" fill="#c7c7d6" text-anchor="middle" textLength="22.52" lengthAdjust="spacingAndGlyphs">00:05</text>
<text x="147.45" y="1701" font-size="9.3" fill="#c7c7d6" text-anchor="middle" textLength="22.52" lengthAdjust="spacingAndGlyphs">00:10</text>
<text x="201.52" y="1701" font-size="9.3" fill="#c7c7d6" text-anchor="middle" textLength="22.52" lengthAdjust="spacingAndGlyphs">00:15</text>
<text x="255.6" y="1701" font-size="9.3" fill="#c7c7d6" text-anchor="middle" textLength="22.52" lengthAdjust="spacingAndGlyphs">00:20</text>
<text x="309.68" y="1701" font-size="9.3" fill="#c7c7d6" text-anchor="middle" textLength="22.52" lengthAdjust="spacingAndGlyphs">00:25</text>
<text x="363.75" y="1701" font-size="9.3" fill="#c7c7d6" text-anchor="middle" textLength="22.52" lengthAdjust="spacingAndGlyphs">00:30</text>
<text x="417.82" y="1701" font-size="9.3" fill="#c7c7d6" text-anchor="middle" textLength="22.52" lengthAdjust="spacingAndGlyphs">00:35</text>
<text x="471.9" y="1701" font-size="9.3" fill="#c7c7d6" text-anchor="middle" textLength="22.52" lengthAdjust="spacingAndGlyphs">00:40</text>
<text x="525.97" y="1701" font-size="9.3" fill="#c7c7d6" text-anchor="middle" textLength="22.52" lengthAdjust="spacingAndGlyphs">00:45</text>
<text x="580.05" y="1701" font-size="9.3" fill="#c7c7d6" text-anchor="middle" textLength="22.52" lengthAdjust="spacingAndGlyphs">00:50</text>
<text x="634.12" y="1701" font-size="9.3" fill="#c7c7d6" text-anchor="middle" textLength="22.52" lengthAdjust="spacingAndGlyphs">00:55</text>
<text x="688.2" y="1701" font-size="9.3" fill="#c7c7d6" text-anchor="middle" textLength="22.52" lengthAdjust="spacingAndGlyphs">01:00</text>
<text x="742.27" y="1701" font-size="9.3" fill="#c7c7d6" text-anchor="middle" textLength="22.52" lengthAdjust="spacingAndGlyphs">01:05</text>
<text x="796.35" y="1701" font-size="9.3" fill="#c7c7d6" text-anchor="middle" textLength="22.52" lengthAdjust="spacingAndGlyphs">01:10</text>
<text x="850.42" y="1701" font-size="9.3" fill="#c7c7d6" text-anchor="middle" textLength="22.52" lengthAdjust="spacingAndGlyphs">01:15</text>
<text x="904.5" y="1701" font-size="9.3" fill="#c7c7d6" text-anchor="middle" textLength="22.52" lengthAdjust="spacingAndGlyphs">01:20</text>
<text x="958.57" y="1701" font-size="9.3" fill="#c7c7d6" text-anchor="middle" textLength="22.52" lengthAdjust="spacingAndGlyphs">01:25</text>
<text x="1012.65" y="1701" font-size="9.3" fill="#c7c7d6" text-anchor="middle" textLength="22.52" lengthAdjust="spacingAndGlyphs">01:30</text>
<text x="1066.72" y="1701" font-size="9.3" fill="#c7c7d6" text-anchor="middle" textLength="22.52" lengthAdjust="spacingAndGlyphs">01:35</text>
<text x="1120.8" y="1701" font-size="9.3" fill="#c7c7d6" text-anchor="middle" textLength="22.52" lengthAdjust="spacingAndGlyphs">01:40</text>
<text x="1174.88" y="1701" font-size="9.3" fill="#c7c7d6" text-anchor="middle" textLength="22.52" lengthAdjust="spacingAndGlyphs">01:45</text>
<text x="1228.95" y="1701" font-size="9.3" fill="#c7c7d6" text-anchor="middle" textLength="22.52" lengthAdjust="spacingAndGlyphs">01:50</text>
<text x="1283.02" y="1701" font-size="9.3" fill="#c7c7d6" text-anchor="middle" textLength="22.52" lengthAdjust="spacingAndGlyphs">01:55</text>
<text x="1337.1" y="1701" font-size="9.3" fill="#c7c7d6" text-anchor="middle" textLength="22.52" lengthAdjust="spacingAndGlyphs">02:00</text>
<text x="1391.17" y="1701" font-size="9.3" fill="#c7c7d6" text-anchor="middle" textLength="22.52" lengthAdjust="spacingAndGlyphs">02:05</text>
<text x="1445.25" y="1701" font-size="9.3" fill="#c7c7d6" text-anchor="middle" textLength="22.52" lengthAdjust="spacingAndGlyphs">02:10</text>
<text x="1499.32" y="1701" font-size="9.3" fill="#c7c7d6" text-anchor="middle" textLength="22.52" lengthAdjust="spacingAndGlyphs">02:15</text>
<text x="1553.4" y="1701" font-size="9.3" fill="#c7c7d6" text-anchor="middle" textLength="22.52" lengthAdjust="spacingAndGlyphs">02:20</text>
<text x="1607.47" y="1701" font-size="9.3" fill="#c7c7d6" text-anchor="middle" textLength="22.52" lengthAdjust="spacingAndGlyphs">02:25</text>
<text x="1661.55" y="1701" font-size="9.3" fill="#c7c7d6" text-anchor="middle" textLength="22.52" lengthAdjust="spacingAndGlyphs">02:30</text>
<clipPath id="ca"><rect x="39.3" y="1412.3" width="1641.7" height="277.7"/></clipPath>
<path d="M37.3 1694V1542.5l.9-.7 1 22.4 .9-29.6 1 37.6 .9-43.8 1 47.1 .9-37.3 1 27.5 .9-34.5 1 29.1 1-23.1 .9 19.4 .9-17.4 1 25.4 .9-34.3 1 36.2 .9-30.7 1 27.4 .9-35.6 1 32.1 .9-33.4 1 48.9 .9-39.7 1 33.9 .9-39.6 1 30.6 .9-31.2 1 31.1 .9-19.7 1 24.5 1-1 .9 8.6 .9 2.2 1-50.4 .9 37.8 1-2.4 .9 5.3 1-4.2 .9-17.5 1 28.6 .9-38.8 1 24 1 14.4 .9-37.1 .9 30.5 1-36 .9 28.9 1-27.1 .9 28.8 1-21.9 1 24.3 .9-25.3 .9 33.3 1-30.7 .9 25.6 1-38.8 .9 43.1 1-28.6 .9 16.3 1-21.8 .9 36.1 1-37.9 .9 28.2 1-30.1 .9 41.7 1-45.1 .9 44.4 1-40 .9 29.5 1-24.2 1 27.1 .9-34.9 .9 44.3 1-33 .9 19.2 1-24.4 .9 33.5 1-39.6 .9 .8 1 36.8 .9-34 1 37.3 .9-45.1 1 44.9 .9-36.7 1 32.7 .9-31.4 1 23.5 .9-17.8 1 15.3 1-31.4 .9 45.6 .9-43.6 1 47.3 .9-42.3 1 38.2 .9-27.8 1 30.3 .9-14.8 1-33.4 .9 48.8 1-39.8 .9 31.2 1-24.2 1 23.8 .9-37.5 .9 32.2 1-26.4 .9 31.1 1-22.4 1 27.6 .9-29.9 .9-8.7 1 26.2 1 17 .9-33.9 .9 35.7 1-36.7 .9 26.8 1-33.2 .9 37.6 1-29.2 .9 27.2 1-37.4 1 36.8 .9-26.7 .9 16.2 1-20.1 .9 27.3 1-7.4 1-23.8 .9 26.6 .9-27.6 1 43.7 1-31.8 .9 18.3 .9-32.3 1 34.5 .9-28.2 1 29.4 .9-39.8 1 47.7 .9-42.9 1 30.8 1-26.4 .9 34.5 .9 1.5 1-36.7 .9 26.3 1-16.9 1 16.9 .9-18.2 .9 20.2 1 .5 1-20.3 .9-16.2 .9 48.2 1-34.5 .9 17 1-22.7 .9 30.3 1-1.4 .9-35.2 1 33.5 1-21 .9 31.3 .9-34.4 1 19.2 .9-16.3 1 24.4 1-24.6 .9 33.2 .9-42.1 1 34.7 1 1.9 .9-42.1 .9 37 1-22 .9 19.3 1-33 .9 37.4 1-.6 .9-29.6 1 31.5 1-29.7 .9 4.1 .9 30.7 1-30.2 .9 16.5 1 16.4 1-42.2 .9 34.8 .9-5.4 1-31.6 1 29.3 .9-31.1 .9 43.9 1-35.2 .9 3.6 1 33.4 .9-36.2 1 30.4 .9-24.5 1 18.6 1-21.6 .9 34.6 .9-40.6 1 34.3 .9-36.4 1 41 1-29.6 .9 15.9 .9-20.9 1 23.4 1-24.8 .9 6.4 .9 14.6 1-27.5 .9 35.5 1-2.2 .9-26.9 1-4.4 .9 32 1-33.2 1 45 .9-45.8 .9 36.3 1-23.8 .9 20.2 1-33.2 1 34.3 .9-20.1 .9 14.6 1-32.4 1 36.2 .9-19.6 .9-4.8 1 6 .9 17.7 1-22.8 .9 26.5 1-24.1 .9 27.5 1-28.7 1 35 .9-48.5 .9 32.4 1-32.7 .9 43.3 1-30.3 1 22.3 .9-20.3 .9 17 1-28.4 1 31 .9-22 .9 20.9 1-22.7 .9 29.7 1-24.2 .9 24.9 1-25.5 .9 30.5 1-30.6 1 32.2 .9-9.5 .9-24.2 1 25.5 .9-29.4 1 24 1-32.1 .9 47.9 .9-32.7 1 29.1 1-43.9 .9 34.7 .9-35.2 1 44.5 1-30.3 .9 23 .9-26.8 1 30.2 .9-44.1 1 45 1-32.9 .9 22.1 .9-19.3 1 34.7 1-48.4 .9 47.5 1-32.2 .9 25.1 .9-25.9 1 34.9 1-51 .9 39.4 .9-39.5 1 45.7 1-45 .9 32.2 .9-19.6 1 21.8 .9-25.4 1 26.4 1-22.1 .9 18.5 .9-26.3 1 41.3 1-29.4 .9 16.5 1-23.2 .9 22.5 .9-32 1 45.6 1-45.3 .9 38.5 .9-35.4 1 44.8 1-32.1 .9 17.9 .9-21.3 1 22.5 .9 9.7 1-40 1 29.6 .9-18.4 .9 14.9 1 15.9 1-48.3 .9 40.8 1-36.9 .9 38.4 .9-2.4 1-26 1 21.5 .9-19.6 .9 24.9 1-32 1 23.8 .9-26.2 .9 28.1 1 3.5 .9-20.9 1 23.1 1-22.9 .9 30.3 .9-47.3 1 35.6 1-31.8 .9 43.6 1-41.2 .9 31.3 .9-31.6 1 26.6 1-27.1 .9 39.6 .9-29.3 1 21.2 1-26.2 .9 28.5 .9-27.6 1 24 .9-28.1 1-4.6 1 45.9 .9-47.7 .9 48.4 1-37.8 1 30.9 .9-5.9 1-19.2 .9 17.6 .9-28.2 1 29.2 1-33.8 .9 42.6 .9-43.3 1 46.9 1-48.8 .9 39.1 .9-20.5 1-4 .9 22.9 1-32.4 1 46.1 .9-39.8 .9 25.2 1-31.4 .9 41.7 1-37.5 1 24.8 .9-27.4 .9-5.6 1 32.7 1-27.2 .9 29.7 .9-31.5 1 33.6 .9-28.6 1 4.1 .9 26 1-28.1 .9 19.7 1-16.2 1 28.7 .9-39.8 .9 38.5 1-33 .9 28.8 1-28.5 1 24.2 .9-21.5 .9 30.8 1-30.4 1 37 .9-49.5 .9 43.7 1-35.7 .9 38.2 1-41.5 .9 36.4 1-41 .9 41.8 1-30.4 1 19.9 .9-16 .9 34.7 1-35.4 .9 18.2 1-15.2 1 25 .9-33.1 .9 37.6 1-45.4 1 47.3 .9-44.3 .9 36.7 1-42.2 .9 45.9 1-35.5 .9 40.1 1-18.3 .9-19.4 1 33.8 1-41.7 .9 37.6 .9-38.3 1 10.8 .9 16.7 1-15.1 1 17.1 .9-16.7 .9 26.7 1-28.5 1 33.7 .9-45.8 .9 45.9 1-43.4 .9 27.9 1-18.7 .9 30.4 1-40.9 .9 41.8 1 4.5 1-46.4 .9 46.6 .9-36.7 1 34.6 .9-48.7 1 16 1 18.3 .9-22.2 .9 27.8 1-23.2 1 23.7 .9-39.6 .9 43.7 1-25.2 .9 29.2 1-39.2 .9 36.8 1-27.6 .9 22.1 1-26 1 21.3 .9-33.3 .9 29.2 1-14.1 .9 21.2 1-24.6 1 30.1 .9-2.8 .9-25.7 1 30.1 1-42.2 .9 39 .9-30.2 1 38 .9-48.7 1 40.6 .9-42.6 1 48.6 .9-31.9 1-5.5 .9 34.8 1-32.8 .9 4 1 31.9 .9-45.3 1 37.7 1-34.8 .9-1.1 .9 42.9 1-46.1 .9 48.9 1-35.4 .9 29 1-29 .9 23.4 1-33.2 .9 40.5 1-36.6 .9 37.9 1-47.7 .9 48.4 1-32.7 .9 22.9 1-37.6 .9 35.2 1-30.5 1 31.7 .9-30.2 .9 33.4 1-38.2 .9 30.6 1-30 .9 36 1-30.3 .9 30 1-30.4 .9 1.1 1 35 .9-32.5 1 37.3 .9-41.8 1 32.1 .9-29.9 1 22.4 .9-27.3 1 33.6 .9-34 1 36.6 .9-24.5 1 29.2 .9-37 1 39.9 .9-45.4 1 34.4 .9-35.8 1 45.8 .9-47.4 1-.2 .9 35.5 1-19.6 .9 20.2 1-19.5 .9 19.3 1-31.2 .9 43.5 1-38.2 .9 32.1 1-24 .9 21.8 1-22.6 .9 23.5 1-38.2 .9 36.5 1-36.5 .9 43.1 1-29.6 .9 17.5 1-25.9 .9-3.3 1 37.8 .9-40.6 1 31.4 .9-18.6 1 18 .9-23.5 1 28.8 .9-37.7 1 10.5 .9 30.3 1-39.1 .9 30.6 1-26.8 .9 26.7 1-26.3 .9 42.3 1-47.2 .9 48.4 1-34.7 .9 33.7 1-31 .9 28.7 1-28.6 .9 24.6 1-35.4 .9-1.7 1 36.8 .9-26.8 1 36.6 .9-33.8 1 29.9 .9-45.5 1 39.4 .9-32.7 1 29 .9-18.8 1 22.6 .9-36.2 1 26.9 .9-30.2 1 41 .9-24.1 1 18.5 .9-19.9 1 18.6 .9-22.3 1 29.8 .9-31.8 1 27.7 .9-30.3 1 34.6 .9-43.1 1 47.6 .9-41.4 1 .5 .9 5.8 1-.8 .9 3.1 1 35.8 .9-6.7 1-26.1 .9-8.6 1 29.7 .9-38.3 1 50 .9-35 1 17.9 .9-25.7 1 33.3 .9-38.1 1 38.1 .9-31 1 29.4 .9-37.1 1 33.1 .9-.1 1-28 .9 32.4 1-6.1 .9-21.2 1 20.4 .9 9.9 1-39.4 .9 29.7 1-17.8 .9 20.1 1-26.7 .9 36 1 5.9 .9-13.3 1 5.3 .9-32.9 1 28.4 .9-27.3 1 39.3 .9-50.9 1 4 .9 1.6 1 39.1 .9-41.6 1 43.1 .9-12.7 1-14.8 .9-16.4 1 45 .9-41.7 1 34.2 .9-33.7 1 40.1 .9-41 1-3.5 .9 44.8 1-40.8 .9 30.8 1-32.2 .9 40 1-37.6 .9 33.2 1-36.9 .9 43.3 1-28.3 .9 32 1-31.8 .9 25 1-33.8 .9 22.4 1 9.6 .9-28.4 1 23.1 .9-33.2 1 38.2 .9-29.5 1 34.9 .9-41.2 1 36.1 .9-26.5 1 21.9 .9-27.1 1 32.4 .9-38.4 1 30.7 .9-26.5 1 37.7 .9-8.7 1-27.1 .9 34.4 1-32.7 .9 26.5 1-28.1 .9 28.8 1-23.4 .9 31.2 1-30.7 .9 24 1-33.4 .9-4.1 1 49 .9-50.3 1 36.8 .9 10.3 1-29.3 .9 29.6 1-47.9 .9 34.3 1-33 .9 39.6 1-38.2 .9 45.3 1-47.2 .9 33.1 1-26.7 .9 34.2 1-26 .9-10.3 1 40.3 .9-35.9 1 29.3 .9-29.4 1 29.1 .9-19.9 1 22.2 .9-38.6 1 43.9 .9-33 1 28.7 .9-34.6 1 9.5 .9 27.5 1-27.6 .9-16.7 1 43.1 .9-30.7 1 31.3 .9-4.8 1-26.1 .9 30 1-40 .9 40.7 1-40.3 .9 35.7 1-32.3 .9 28.7 1-23.7 .9 34.8 1-46.2 .9 38.6 1-27.5 .9 23 1-29.2 .9 40.1 1-37 .9 .6 1 30 .9-30.1 1 32.7 .9-29 1 38.7 .9-43.7 1 40 .9-44.7 1 41.9 .9-3.1 1-38.1 .9 31.3 1-30.8 .9 45.5 1-33.5 .9 21.3 1-20.5 .9-5.8 1 26.1 .9-29.8 1 35.6 .9-27.3 1 24.7 .9-3.8 1-27.7 .9 37 1-43 .9 33.2 1 6.7 .9-35.1 1 28.4 .9-35.5 1 36.1 .9-21.2 1-9.6 .9 44.5 1-32.1 .9 26.5 1 6.4 .9-50.7 1 45.4 .9-29.1 1 23.8 .9-31.1 1 30.8 .9-22.1 1 27.8 .9-27.8 1 26.1 .9-28.6 1 23.9 .9-28.4 1 36.6 .9-30 1 20.3 .9-31.6 1 29.2 .9 10.5 1-38.1 .9 25.8 1 4 .9-36.4 1 49.4 .9-40.1 1 22.8 .9-20.5 1 32.1 .9-39.2 1 32.2 .9-32.4 1-1.4 .9 39.2 1-37.2 .9 27.5 1-31.4 .9 47.8 1-48.7 .9 34.5 1-29.9 .9 34.8 1-27.6 .9 18.9 1-32.8 .9 42.8 1-33.5 .9 42 1-36.2 .9 19.4 1-21.5 .9 38.4 1-45.8 .9 32.2 1-34.2 .9 31.6 1-28.7 .9 26.1 1-22.7 .9 28.8 1-23.1 .9 31.7 1-41.2 .9 43.3 1-36.7 .9 25.9 1-29.9 .9 38.7 1-28.3 .9 20 1-30.7 .9 42.6 1-42.7 .9 24.7 1-32.9 .9 45.3 1-45.6 .9 38.8 1-32 .9 42.3 1-48.7 .9 35.1 1-17.4 .9 17.9 1 3 .9-22.8 1 27.2 .9-41.7 1 49 .9-12.2 1 .7 .9-29.2 1 40.1 .9-46.7 1 42 .9-37.2 1 32.1 .9-36.7 1 39.3 .9-42.3 1 3 .9 44.9 1-32.9 .9 16.7 1-14.8 .9-11 1-1 .9 39.9 1-32.8 .9 32.9 1-39.9 .9 39.6 1-32.1 .9 21.2 1-24.6 .9 41.2 1-37.5 .9 29.8 1-25 .9 28.6 1-46.6 .9 44.8 1-31 .9 29 1-40.6 .9 42.5 1-26.1 .9 24.1 1-26.5 .9 1.6 1 27.3 .9-44.6 1 42.6 .9-24.4 1 13.8 .9-30 1 46.9 .9-36.4 1 25.5 .9-25.4 1 26.5 .9-22.6 1 27.5 .9-42.8 1 45.3 .9 2.4 1-31.8 .9 21.8 1-30.8 .9 41.8 1-38.8 .9 29.8 1-25.6 .9 19.3 1-25.3 .9 22.2 1-19.6 .9 35.7 1-32.5 .9 33 1-36.4 .9 22.6 1-31.2 .9 39.9 1-40.9 .9 46.7 1-39.1 .9 38 1-44.8 .9 48 1-48.6 .9 39.3 1-33.6 .9 42.1 1-49.6 .9 32.7 1-32.7 .9-.9 1 48.7 .9-32.5 1 17.1 .9-31.2 1 41.8 .9-26.9 1 17.3 .9-33.9 1 45.7 .9-30.9 1 34.9 .9-39.7 1 35.9 .9-29.2 1 32.7 .9-48 1 33.6 .9-23 1-6.8 .9 9.8 1 32.6 .9-42.5 1 45.9 .9-38.1 1 20.2 .9-28.8 1 34 .9-21.9 1 22.3 .9-37.7 1 46.9 .9-29.2 1 22.9 .9-38.8 1-2.2 1 44.3 .9-34.4 .9 29.3 1-20.9 1 23 .9-23 .9 22.4 1-22.2 .9 31.4 1-48.6 1 48.7 .9-7.5 .9-38.6 1 27.1 .9-15 1 25.1 .9-31.1 1 38.2 .9-45.4 1 46.9 1-39.3 .9 21.2 .9-25.8 1 34.8 1-34.7 .9 40.3 .9-13.2 1-19.9 .9-4.8 1 29.4 1-30.2 .9 23.3 .9-18.6 1 30.3 .9-26.4 1 32.8 .9-33 1 20.5 .9-31.3 1 43.5 .9-33.6 1 24.8 .9-25.1 1 31.7 1-28.1 .9 18.3 .9-21.7 1 27.9 .9-11.8 1-25.5 .9 12.5 1 25.5 .9-38.5 1 39.6 .9-36.2 1 23.8 .9-24.5 1 27.1 .9-27.7 1 28.8 .9-30.3 1 41.7 .9-34.2 1 26.2 1-33.5 .9 43 .9-33 1 18.7 .9-21.1 1 30.4 .9-44.7 1 45.2 .9-41 1 28.1 .9-28.5 1 30.2 .9-22.7 1 22.6 .9-23 1 37.6 .9-1.7 1-42.8 .9 42.3 1-41.8 1 1 .9 7.3 .9-3.9 1 39.7 .9-46.4 1 44.5 .9-33.8 1 30.5 .9-41.7 1 48.2 .9-34.8 1 24.5 .9-37 1 42.9 .9-9.8 1-32.5 .9 40.8 1-34.8 .9 36.5 1-45.5 1 41.6 .9-4.5 .9-32.4 1 29.2 .9-16.3 1 27.8 .9-43.8 1 47.7 .9-6.2 1-24.4 .9-2.9 1 28.1 .9-29.4 1 18.1 .9-14.7 1 23.6 .9-36.2 1 36.1 .9-36.8 1 39 1-43.2 .9 37.5 .9-20.6 1 32 .9-33.7 1 34.6 .9-46 1 35.7 .9-22.8 1 21.6 .9-28.3 1 35 .9-36.9 1 33.4 .9-24.6 1 15.1 .9-19.5 1 33.8 .9-34.2 1-8.3 1-.7 .9 39.2 .9-31 1 23.6 .9-21.2 1 22.4 .9-34.3 1 34.1 .9-17.6 1 17.1 .9-17.5 1 22.4 .9-33.1 1 43.6 .9-50.4 1 31.3 .9-26 1 44.6 .9-41.8 1 40.6 1-36.9 .9 32.7 .9-31.5 1 28.5 .9-31.5 1 4.6 .9 30.5 1-33 .9 30.2 1-1.3 .9-32.9 1 38.1 .9-36.8 1 31.1 .9-24.7 1 33.3 .9-47.3 1 43.4 .9-32.1 1 19.9 1-25.1 .9-5.4 .9 47.5 1-41.6 .9 7.6 1 31.9 .9-43.7 1 31.6 .9-28.4 1 36.3 .9-43.5 1 36 .9-31.7 1-1.6 .9 46.3 1-13.8 .9-29.3 1 41.2 .9-39.4 1 31.9 1-24.6 .9 32.8 .9-47.1 1 40.7 .9-23.3 1 24.8 .9-31.7 1 28.9 .9-35.7 1 33 .9-21 1 26.8 .9-43.1 1 49 .9-47.5 1 39 .9-30.6 1 34 .9-25.9 1 30.7 1-35.9 .9 18.8 .9-31.7 1 31.1 .9 2.3 1-16.6 .9 25.2 1-43.3 .9 43.7 1-41.4 .9 44.3 1 1.4 .9-37.9 1 25.8 .9-.9 1-28.2 .9 26.6 1-26.3 .9 25.1 1-13 1 32.3 .9-34.6 .9 17.4 1-33.6 .9 2.2 1 14.6 .9 32.6 1-45.7 .9 32.3 1-28.3 .9 26.4 1-34.6 .9 37.7 1-23.1 .9 20.7 1-26.4 .9 36.7 1-33.6 .9 27.5 1-20.4 1-11.3 .9 41.7 .9 1 1-42 .9 24.4 1-.9 .9 19.1 1-42 .9 25.3 1-19.9 .9 33 1-33 .9 35.6 1-39 .9 30.9 1-23.1 .9 21.2 1-40.4 .9 45 1 5.9 1-11.2 .9-25.1 .9 21.6 1-19.2 .9 18 1-18 .9 24.8 1-35.7 .9 42.8 1-48.7 .9 46.2 1-44.8 .9 39 1-34.8 .9 34.9 1-40 .9 41.5 1-41.9 .9 .3 1 42.9 1-41.7 .9 33.8 .9-27.6 1 37.9 .9-43.8 1 42.2 .9-41.3 1 40.9 .9-39.1 1 38.7 .9-34.9 1 26.4 .9-26.1 1-3.3 .9 44.4 1-30.3 .9-13.8 1 41 .9-31.5 1 16.5 1 4.9 .9-35.6 .9 18 1 27.4 .9-29.7 1 24.8 .9-38.1 1 30.3 .9-26.7 1 42.9 .9-44.5 1 40.3 .9-32.7 1 19.4 .9-16.2 1 17.6 .9-18.1 1 34.9 .9-33.9 1-4.4 1 31.8 .9-36.7 .9 27.5 1-26.5 .9 42.3 1-41.4 .9 22.5 1-27.6 .9 10.5 1 22.3 .9-25.2 1 34.4 .9-38.1 1-1 .9 37.9 1-44.1 .9 7 1 36.2 .9-37.4 1 34.2 1-31.3 .9 24.9 .9-28.9 1 28.5 .9-19.3 1 21.8 .9-30.3 1 34.4 .9-22.6 1 20.5 .9 5.4 1-43.1 .9 34.7 1-25.5 .9 32.5 1-24.4 .9 32.5 1-41.3 .9 28.9 1-33.8 1 38.9 .9-33.3 .9 32.1 1-38.5 .9 30.2 1-15.6 .9-13.1 1 28.5 .9-32.2 1 44.6 .9-41.3 1 27.6 .9-16.6 1-8 .9 41.8 1-34.8 .9 34.3 1-33.8 .9 22.2 1-29.7 1 39.2 .9-7.7 .9-21.5 1 32.6 .9-48.9 1 48 .9-37.1 1 20.5 .9-23.3 1 8.2 .9 20.3 1-21.5 .9 25.9 1-24.7 .9 .3 1 29.2 .9-36.6 1 40.3 .9-5.1 1-27.3 1 18.5 .9-23.4 .9 21.7 1-30.9 .9-1.6 1 30.1 .9-26.6 1 41.9 .9-31.5 1-10 .9 35.2 1-40.1 .9 45 1-.8 .9-46.1 1 33.1 .9-15.5 1 24.3 .9 6.1 1-32.5 1 18.5 .9-17.4 .9 23.8 1-26.5 .9 35.8 1-42.2 .9 37 1-34.4 .9 41.2 1-46.2 .9 36.3 1-40.4 .9 35.9 1-21.7 .9 35.8 1-37.8 .9 27.1 1-39.1 .9 44.1 1-27.2 1 32.5 .9-37.8 .9 30.4 1-27.6 .9 30.2 1-42.1 .9 36.1 1-23 .9-8.7 1 31 .9-.4 1-26.5 .9 20.6 1-15 .9 16.9 1-22.1 .9 30.6 1-36.7 .9 44.2 1-35.7 1 22.4 .9-26.1 .9 28.8 1-37.4 .9 32.9 1-27 .9 41 1-37.2 .9-4.6 1 35.5 .9-23.9 1 15.6 .9-21.3 1 19.9 .9-33.6 1 50.3 .9-46.9 1 45.9 .9-36.5 1 28.7 .9-29.6 1 20.3 .9-14.5 1 17.8 .9-16.4 1 30.4 .9-43.3 1 31.4 .9-19 1 31.5 .9-13.2 1-36.5 .9 37.1 1-19.2 .9 26.3 1-36.4 .9-4.1 1 34.7 .9-19.5 1-16.1 .9-1.9 1 48.7 .9-32.3 1 19.7 .9-19.4 1 19.3 .9-32.6 1 36 .9-24.4 1 23.3 .9 8.7 1-48.2 .9 .7 1 49.2 .9-35.7 1 26.5 .9-37.9 1 37.7 .9-33.2 1 37.4 .9-32.9 1 20.8 .9-20.6 1 36.5 .9-46.8 1 41.6 .9-28 1 24 .9-25.2 1 29.6 .9-30.6 1 35.7 .9-30.8 1 25.9 .9-11 1-23 .9 28 1-20.7 .9 16.6 1-20.1 .9 31.5 1-37.1 .9 25.9 1-26.8 .9 33.8 1-24.5 .9 24.4 1-28.9 .9 25.3 1 6.8 .9-33.5 1 28.4 .9-22.8 1 25.6 .9-23.8 1 32.4 .9-43.8 1 8.7 .9 17.3 1-24.8 .9 4.7 1 38.5 .9-46.3 1 27.6 .9 8 1-23.1 .9-13.9 1 43.8 .9-47.1 1 50.6 .9-49.1 1 40.4 .9-41.2 1 48 .9-43.7 1 35.5 .9 .1 1-31.9 .9 28.7 1-30.1 .9 43.7 1-39 .9 38.3 1-32.7 .9 18.2 1-28.4 .9 37.4 1-25.7 .9 16.5 1-29.4 .9 36.2 1-34.9 .9 40.9 1-36.3 .9 23.9 1-25.8 .9 40.1 1-18 .9-23.2 1 41.9 .9-39 1 26.2 .9-25.1 1 33.8 .9-38.3 1 42.3 .9-33.9 1 32.5 .9-49.4 1 40.7 .9-40.2 1 45.5 .9-43.6 1 35.4 .9-36.9 1 31 .9-24.1 1 42.2 .9-44 1 31.9 .9-2.8 1-33.7 .9 40.9 1-40.7 .9 36.5 1-18.7 .9 12.4 1-30.8 .9 40.7 1-34 .9 35.7 1-29.4 .9 28.7 1-3.5 .9-31.7 1 38.9 .9-41.4 1 5.5 .9 28.1 1-25.5 .9 26.4 1-29.9 .9 35.4 1-27.7 .9 25.3 1-40.8 .9 30.4 1-25.7 .9 38.1 1-38.3 .9 32.7 1-23.3 .9 35.1 1-42.7 .9 33.5 1-30.2 .9 32.3 1-41.6 .9 46.3 1 .3 .9-13.5 1-26.7 .9 36.1V1694Z" fill="#c6d23b" fill-opacity="0.15" stroke="#c6d23b" stroke-width="0.8" stroke-opacity="1" stroke-linejoin="round" clip-path="url(#ca)"/>
<path d="M37.3 1694V1592.6l1 0 1 1.2 1-.4 1 .6 1 .3 1-1.9 1 .7 1-.4 1-.7 1 1.8 1-2 1 .7 1-2.5 1-3.3 1-1.4 1 1.3 1-.7 1 .6 1-1 1 .7 1 4.1 1 3.3 1 1 1-2 1 .6 1-.8 1-.3 1 1.2 1 .7 1 .4 1-.8 1 0 1 .5 1 0 1-1.8 1 0 1 2.2 1-2 1 .4 1 1.1 1-.9 1 .7 1-1.4 1 .8 1-.6 1 1.3 1-1.2 1 2 1-1 1 .7 1-1.4 1 1.6 1-.2 1 .2 1-.7 1 .4 1-1.1 1 .7 1-1.2 1 0 1 .1 1 1.8 1-.2 1-2.4 1 0 1-2.6 1-1.7 1 0 1-.6 1 1.8 1 .3 1-2 1 2.3 1-1.2 1-.4 1 .3 1 1.5 1 3 1 .1 1-.1 1-1.5 1 2.1 1-.6 1 23.1 1 34.2 1 8.1 1 2.4 1 2.1 1 1.9 1 .9 1 .8 1 1.5 1 .3 1 1.7 1 .6 1 0 1 .5 1 .9 1 0 1 .5 1 .4 1 1 1 .4 1 .1 1 .4 1 .9 1-.1 1-.4 1-.1 1 .7 1-.4 1 .5 1-.1 1 .4 1-.3 1 .4 1 .1 1-.5 1 .1 1 .4 1-6.9 1-1.9 1-.3 1 .1 1-.4 1 .1 1 .1 1 .3 1 4.2 1 4.5 1 0 1-.3 1 .1 1-.3 1 .8 1 0 1-.1 1-.5 1 .1 1 .1 1 .1 1 .2 1-.6 1 .4 1-.2 1-.1 1 .3 1-.5 1 .1 1 0 1 .3 1 .4 1-.4 1-.2 1 0 1 .6 1-.6 1 .3 1-.1 1 0 1 .2 1 0 1-.7 1-.6 1-.5 1-.8 1-.9 1-1.1 1-1 1-.7 1 .2 1 .1 1 0 1-.6 1 .2 1-.4 1 0 1-.1 1 .2 1-.5 1 1.1 1 1.3 1 1.8 1 1.8 1 .7 1-.2 1-.1 1 .4 1 .2 1-.6 1 .5 1 .1 1-.3 1 0 1 .1 1-.2 1 .1 1-.2 1 .1 1 .1 1 .4 1-.5 1 .5 1-.3 1-.2 1 .1 1 0 1 .5 1-.3 1-.3 1 .1 1 .5 1-.5 1 .5 1-.3 1 .5 1-.8 1 .5 1-.4 1 .7 1-146.4 1 35.4 1 22 1 11.8 1-.6 1-2 1-5.8 1-2.7 1-3.9 1-.1 1-1.6 1 1.4 1-1.7 1-.3 1 1.4 1 1.3 1 3.3 1 .7 1 .5 1-.2 1-.4 1-.1 1-.3 1 .7 1 1.5 1-.3 1-1.2 1-.7 1 .1 1 1.8 1-1.8 1 .9 1 1.5 1-1.7 1 1.9 1-.6 1-1.3 1 .1 1 1.7 1 .2 1-1.6 1 0 1 2 1-1.5 1 .3 1-.9 1 .1 1 0 1 1.2 1 .9 1-2 1 2.3 1-1.1 1-.2 1 1.3 1 0 1-.1 1-.6 1 1 1-.8 1-1.2 1 .7 1-4.2 1-1.6 1-.1 1-.3 1 .1 1-.2 1 0 1 0 1 1 1 5.6 1 .5 1 .8 1-2.3 1 1.1 1 .2 1 .4 1 .8 1-.7 1-.6 1-.7 1 1.1 1 .3 1-1 1 .1 1-.4 1 .7 1 .3 1-.2 1 .2 1 1.2 1-.5 1-.5 1 1.2 1-.3 1 0 1 .6 1-.4 1 .7 1-.8 1 .8 1-2 1 1.3 1 .9 1-1.5 1 1.7 1-.5 1-.1 1 .6 1-.6 1-.6 1 1.5 1-.1 1-1.3 1-1.8 1-2.5 1-1.4 1-.8 1-1 1 .2 1 1.7 1-1.1 1 .2 1 3.4 1 2.7 1 1.9 1-1.5 1-.5 1 .7 1 1.5 1-2.4 1 .2 1 .2 1 .6 1-.1 1 1.4 1-.7 1 1.1 1-1.3 1 .9 1 0 1-.1 1-.4 1-.3 1-.5 1 1.7 1 .3 1-1.8 1 1.6 1 .2 1-.3 1-.6 1 1.4 1-1.6 1 .2 1 .1 1-.1 1 0 1-.6 1 1.6 1 0 1 .3 1-.3 1 .4 1 .4 1-1.6 1 0 1 1.1 1-2.8 1-3.2 1-.2 1-1.2 1 .9 1-.3 1 .6 1-1.6 1 .2 1 3.4 1 2.7 1 1.7 1-.7 1 1.1 1 .4 1-2.2 1 1.1 1-.1 1 .4 1-.3 1-.4 1 1.3 1-1.8 1 2.6 1-.2 1-1 1 .9 1-.3 1-1.1 1-.2 1 1.3 1 .2 1 .4 1-.6 1 0 1 .6 1-.2 1-.4 1-.2 1 .2 1 .2 1-.3 1 1.4 1-1.6 1 .2 1-.7 1 0 1 .5 1 1.4 1 .4 1-.5 1 .5 1-1.6 1-.3 1-1.7 1-4.5 1 .4 1 .8 1-1.1 1-.5 1 1.9 1 .6 1 1.4 1 1.9 1 1.3 1-.2 1 1.3 1 .8 1-.7 1-.7 1 1.3 1 0 1-.8 1-1.1 1 2 1-1.2 1-.6 1 .7 1 .7 1-1.2 1 0 1 1.8 1-1.1 1 .2 1 1 1 .5 1-.2 1-2.1 1 2.4 1-.9 1 .2 1-1.1 1 1.8 1-1.3 1-.2 1 .6 1 1.5 1-1.8 1 .7 1 .5 1 .7 1-2.1 1 1.3 1 .8 1-2.1 1 1.2 1-.6 1 .6 1 .2 1-5.3 1-.2 1-.4 1-1.4 1 1.4 1-1 1-.1 1 .3 1 3.7 1 3.3 1-.2 1-1.2 1 .8 1-.8 1 .9 1 .8 1-1.2 1 .9 1-1.1 1 1.6 1-1.2 1 .2 1 1.1 1-.5 1 .2 1 .2 1-1.3 1 .2 1 .9 1 .2 1-.8 1 1.2 1-.1 1-.6 1-.4 1 2.1 1-.2 1-1.4 1 .1 1 1.7 1-1.8 1 1.4 1-1.3 1 1.2 1 .5 1 0 1 15.8 1 28.8 1 12.4 1 2.3 1 2.6 1 1.7 1 1 1 .5 1 1.4 1 .4 1 .8 1 .9 1 .9 1 .1 1 .8 1 .7 1 0 1 .3 1 1 1 .3 1 .1 1 .4 1 .9 1-.4 1-.1 1 .2 1-.2 1 .6 1-.7 1 .2 1 .5 1-.6 1 .4 1 .1 1-.5 1 .3 1 .2 1-.4 1 0 1 .2 1-.1 1 .2 1 .2 1-.2 1 .2 1-.4 1-.2 1 .5 1-.4 1 .5 1 0 1 .1 1-.2 1-.2 1 .4 1-.4 1 .3 1-.5 1 .4 1 0 1-.4 1 .2 1 0 1-.3 1 .2 1 .6 1 0 1-.6 1 0 1 .2 1 .1 1-.1 1 0 1 .2 1 .2 1-.2 1 .1 1-.1 1-.2 1 .4 1 0 1 0 1-.3 1 0 1 0 1-.3 1 .2 1 .3 1-.5 1 .3 1-.3 1 .6 1-.2 1-.3 1 .3 1-.4 1 .2 1 0 1-.1 1 .2 1-.3 1 .1 1 .4 1 0 1-.3 1 .3 1-.3 1 .2 1-.3 1 .1 1 .3 1 0 1-.5 1 .6 1-.4 1-.1 1 0 1 .4 1-.2 1 0 1-.2 1 .5 1 .1 1-.2 1 .3 1-.7 1 .5 1-.4 1 .3 1 .3 1-.2 1-.2 1 .2 1-.5 1 .5 1-.3 1 0 1 .4 1 .2 1-69.6 1-9.5 1 .1 1-1.3 1 1.6 1-1.8 1-1.5 1-4.5 1-.2 1-.8 1 .7 1 .5 1 .8 1-2 1 .1 1 .3 1 1.9 1-1.4 1 .4 1-.4 1 .2 1 1.1 1-1.3 1 .1 1 .2 1 .1 1-.4 1 .4 1 .3 1-1.3 1 1.5 1-1.4 1 .8 1-4.4 1-2.1 1 .8 1-.2 1 .2 1-1.4 1 .3 1 .2 1 2.6 1 3.8 1 .8 1 1.1 1-1.4 1-.3 1 2 1-2.3 1 2.1 1-.8 1 .6 1-1.1 1 .7 1-.6 1 .9 1-.2 1-.7 1 1.4 1-1.8 1 1.3 1-1.2 1 .3 1 1 1-1.1 1 1.4 1 .5 1 .1 1-1.8 1 .9 1 1.2 1-1.1 1-.1 1 .2 1-.2 1-.5 1 .2 1 1.5 1 .2 1-1.4 1 .5 1-1.2 1 .4 1 .9 1 .8 1-.8 1-.2 1-5.5 1 .3 1-1.3 1 0 1 .3 1-.2 1-.6 1 1 1 .9 1 4.3 1 1.9 1 0 1 .4 1-.8 1-.3 1-1.1 1 2.3 1-.2 1 .5 1-1.4 1 .1 1 1.2 1-1.4 1-.5 1 .5 1-.1 1 1.3 1 .6 1-2.2 1 2.1 1-2.2 1 2.4 1-.1 1-1.5 1 .3 1 .6 1 .6 1 .2 1-1.3 1 .2 1 1 1-.7 1-1.2 1 1.7 1-1.4 1 1.1 1-.3 1 .1 1-.7 1-.1 1 0 1 2.4 1-.9 1-.5 1-5 1-.4 1 .3 1-2 1 2 1-1.9 1 .6 1 1.3 1 2.1 1 2.1 1 1.2 1-.9 1 .9 1-.3 1 1.1 1 .6 1-.9 1 .6 1 .5 1-2.1 1-.1 1 .6 1 .1 1 1.6 1-.1 1-2.2 1 2.3 1-1 1 1.1 1-.3 1-.7 1-.6 1 .2 1 .5 1 .8 1-.2 1-.1 1-.4 1-.7 1 .6 1 .2 1-.5 1 1 1 .2 1-.1 1-1.3 1 0 1 2.1 1-.9 1 1.3 1-.8 1 .3 1-1.7 1-1 1-2.7 1-2.5 1 1.4 1-1.5 1-.3 1 .6 1 .3 1 0 1 2 1 3.7 1 1.9 1-1.5 1 1.6 1-.8 1 1.2 1-.3 1-.4 1-1.1 1 .7 1 .5 1-1.3 1-.1 1 .4 1 1 1-.6 1-.5 1 1.5 1 .4 1-.3 1-.1 1 .2 1 .3 1 .1 1-1.7 1 .4 1-.3 1 1.1 1-.1 1 .6 1-.9 1 .9 1 .7 1-1.4 1 0 1-.7 1 0 1 .2 1 1.8 1-1.9 1 .2 1 .6 1 1 1-.8 1-.4 1-1.6 1-3.9 1 .5 1-.3 1-1 1 1 1 0 1 .1 1-.2 1 1.9 1 5.4 1-1 1 .7 1-.7 1-.2 1-.6 1 1.8 1-.6 1-.5 1-.5 1 .8 1 .7 1-1.4 1-.3 1 2.1 1 .4 1 0 1-2.2 1 1.5 1-1.4 1 .3 1 1.7 1-.6 1 .1 1-.3 1-.1 1-.7 1 .2 1 1.7 1-.1 1-1.4 1 1.4 1-.9 1 1.1 1-.8 1-.4 1 1.9 1-1 1 0 1 1 1-2.1 1 1.8 1-.1 1-.7 1 .8 1-4 1-2 1-.9 1-.5 1-.6 1 .4 1 0 1 1.2 1 1.2 1 4.1 1 22 1 32.1 1 5.6 1 2.9 1 2 1 1.8 1 .5 1 1 1 1.2 1 .5 1 1 1 .6 1 1 1 .3 1 .3 1 .4 1 .3 1 .5 1 .8 1 .7 1 .2 1 .8 1 0 1-.4 1 .5 1-.4 1-.2 1 .7 1-.4 1 .4 1-.6 1 .5 1-.4 1 0 1 .1 1 .2 1 .3 1-.6 1 .3 1 0 1-.2 1 .4 1-.4 1-.3 1 .4 1-.1 1 .4 1-.4 1 0 1 0 1-.2 1 .6 1 0 1-.3 1-.3 1 .5 1-.4 1 0 1 .1 1 .2 1-.1 1-.1 1 .3 1 .3 1-.5 1-.2 1 .1 1-.2 1 0 1 .4 1 .2 1 .2 1-.6 1 .3 1 .3 1-.2 1-.1 1 .3 1-.3 1-.3 1 .3 1 .2 1-.1 1 .1 1-.1 1-.2 1-.2 1 .3 1 .1 1 0 1 .1 1 0 1-.1 1 .2 1-.3 1 .1 1 .1 1 0 1 .2 1-.2 1-.1 1 .3 1-.6 1 .4 1-.4 1 .1 1 .2 1 .1 1-.2 1 .2 1-.2 1-.1 1-.1 1 .1 1 .1 1 .2 1-.2 1 0 1 .4 1-.4 1-.1 1 .2 1 .3 1-.6 1 .1 1 .6 1-.4 1 .2 1-.4 1 .2 1-.1 1 .5 1-.1 1-.1 1-.3 1 .5 1-.4 1-18.3 1-119.6 1 30.3 1 24.6 1 5 1-1.3 1-2 1-3.8 1-5.1 1-3.9 1 .2 1-.6 1 1.1 1-.7 1 1.3 1 .6 1 .9 1 1.6 1-2.3 1-2.1 1 .9 1-.8 1 3 1 3.6 1 1 1 .8 1 .1 1-1 1-.1 1 .4 1 1.2 1-1.7 1 .3 1-.1 1-.6 1 1.2 1 .4 1 .8 1 0 1-.7 1 .8 1-1.1 1-.8 1 1.8 1-1.4 1 .5 1-.4 1 1.3 1-1.2 1 1.6 1 .4 1-2.4 1 1 1 1.4 1-2.3 1 2.4 1-1.1 1-1.3 1 .2 1 1.4 1 1.1 1-1.2 1 .9 1-.3 1-1.5 1 1.5 1 0 1-.9 1-3.9 1-1 1 .1 1-1.9 1 1.4 1-1 1 1.3 1-1.8 1 3.5 1 3.5 1-.4 1-.3 1 .3 1 .5 1-.5 1 1.2 1 1.2 1-1 1 .2 1-.6 1-.3 1 .9 1 .8 1-.4 1-.2 1-1.4 1 2.2 1-1.8 1 1.1 1 .1 1-1.6 1 1.8 1 .4 1-1.2 1-.2 1 .5 1 .2 1 1.1 1-1.4 1 1.2 1 .6 1-.3 1-1.8 1 1.9 1 .3 1-2.2 1 .5 1-.2 1 .7 1 .3 1 0 1 .1 1-.4 1 .3 1-3.4 1-3.8 1 1.1 1-1.4 1 2.2 1-1.1 1-.3 1-.5 1 2.6 1 3.1 1 1 1-.2 1 .4 1 .1 1 .5 1 .5 1-1.1 1 1.9 1-1.7 1 .6 1-.8 1 .6 1 .5 1-.4 1 1 1-.3 1 .5 1-1.8 1 1.4 1-.9 1 1.3 1-.8 1 1.4 1-1.4 1 1.5 1-1.6 1 1.4 1-1.9 1 1.5 1-.5 1 1.6 1-.5 1-1.4 1 1.3 1 .2 1-.7 1-1.2 1 1.1 1 1.3 1-1.6 1 .6 1-.8 1 1 1-.1 1-3.7 1-1.5 1-1.8 1-.5 1 0 1 .7 1 .6 1 .4 1 2.2 1 2.6 1 2.5 1-.9 1 .2 1 .4 1-1.5 1-.5 1 2.2 1-.4 1 0 1-1.2 1 .4 1-.1 1 1.8 1-2.2 1 .1 1 2.1 1-1.7 1 0 1 1.9 1-2.1 1-.2 1 .2 1 1.1 1 .8 1-1.5 1-.3 1 .9 1 1.5 1-.2 1-1.9 1 1 1 1.5 1-.9 1 .7 1-2.2 1 1.1 1-.6 1 2.1 1-2.3 1 .1 1 .7 1 1.2 1-.4 1-5.7 1-.9 1 .7 1-1.8 1 .7 1 1.1 1-1.6 1 1.9 1 1.2 1 3.3 1 1 1-.8 1 1.1 1 .7 1 .2 1-1.9 1 0 1 2.1 1-.8 1 .3 1-1.8 1 1 1 0 1 .1 1-1 1 0 1 1.2 1 1.4 1 .1 1 .1 1-.8 1-1.5 1 1.2 1 .1 1 .3 1-.2 1 1.1 1-.5 1-.4 1-.2 1 .1 1 1.1 1-1.4 1 1.4 1-1.3 1 1.7 1-.6 1 .1 1-.3 1-.2 1 .2 1-.3 1-.6 1 2 1-2.6 1-3.8 1-1 1 .4 1-1.1 1 1.6 1-1.3 1 .2 1-.7 1 3.3 1 2.5 1 .5 1 1.6 1-1.5 1 .5 1-.4 1 6.4 1 20 1 32 1 2.6 1 2.3 1 1.9 1 1.2 1 1.1 1 .7 1 1.4 1 .3 1 1 1 .7 1 .6 1 .9 1 .4 1 .5 1 .5 1 .4 1 .1 1 .6 1 .8 1 .1 1 .3 1-.4 1 0 1 .2 1-.1 1 .3 1 .2 1-.5 1 .4 1-.2 1 0 1 .4 1-.3 1 0 1-.2 1 .2 1-.1 1 0 1 .4 1-.5 1 .4 1 0 1-.1 1-.5 1 .3 1 .3 1 0 1-.1 1-.5 1 .3 1 .3 1-.1 1-.1 1 .4 1-.1 1-.5 1 0 1 0 1 .6 1-.3 1-.1 1-.2 1 .5 1-.2 1-.3 1 0 1 .1 1 .4 1-.5 1 .7 1-.1 1-.4 1 .3 1-.3 1 .5 1-.4 1-.1 1-.1 1 .2 1 .1 1-.1 1 .2 1 0 1-.2 1-.1 1 0 1-.1 1 .3 1-.1 1 .2 1-.1 1-.3 1 0 1 .3 1-.2 1 .6 1-.5 1 .5 1-.3 1-.2 1 .3 1 0 1-.2 1-.3 1 0 1 .1 1 .5 1-.3 1-.2 1 .1 1 .3 1 .1 1 0 1-.1 1-.2 1-.2 1 .2 1 0 1-.1 1-.1 1 .2 1 .5 1-.5 1-.1 1 .6 1-.4 1 0 1 0 1-.1 1-.2 1 .4 1-.1 1-.2 1 .4 1-.4 1-.1 1-9.2 1-68.1 1-.2 1-.2 1 .4 1-.6 1-.5 1-3.9 1-10.3 1 .7 1 .9 1-.2 1-1.7 1 1.5 1-.7 1 1.4 1 5.5 1 .6 1-.5 1 .5 1-.6 1 .7 1-1.3 1 0 1 .9 1-1.7 1 .2 1 2.2 1-.8 1-1.4 1 1.8 1-1.1 1-.8 1 .5 1 .1 1 .3 1 1.7 1-2.2 1 1.8 1-1.1 1-.7 1 1.9 1 .2 1-1.1 1 .3 1 .7 1-2.2 1 2 1-1.6 1 .4 1-.6 1 1 1-.6 1-.3 1 0 1 1.2 1 .3 1 .7 1-.9 1-.7 1-.5 1-.1 1 .1 1-3.2 1-1.3 1 .2 1-2.3 1 1.7 1 .1 1 0 1-.5 1 2.7 1 2.3 1 2.6V1694Z" fill="#c2cf3c" fill-opacity="0.15" stroke="#c2cf3c" stroke-width="0.8" stroke-opacity="1" stroke-linejoin="round" clip-path="url(#ca)"/>
<path d="M37.3 1694V1683.1l1-2.4 1 2.2 1 .6 1 .7 1-3.6 1 3.5 1-3.5 1 2.3 1-1.9 1 .9 1-.8 1 2.3 1-1 1 0 1-2.4 1 0 1 1.6 1 2.4 1 .1 1-1 1-2.5 1 2.6 1-.1 1-1.1 1 1.8 1 .2 1-.3 1-.6 1-.1 1-2.5 1 .5 1 2.9 1 .2 1-1.2 1-2.6 1 2 1-.2 1-1.5 1 3.5 1-2.8 1 1.4 1-1.8 1 1 1-1.5 1 3.2 1-3 1 2.5 1-1.3 1-.1 1-.8 1-.8 1 4.1 1-2.7 1-1.6 1 2.1 1-2 1 .6 1 .6 1 0 1 2.1 1-2.9 1 2.3 1-1.5 1 2.2 1-2.8 1 .8 1 1.7 1-1.2 1 .5 1 .9 1-2.5 1 1.5 1 .2 1-.4 1 .7 1-.5 1-1.8 1 2.9 1-.5 1-2 1-.8 1 1 1 1.9 1-1.9 1 .4 1 2.6 1-.4 1-.4 1 .1 1-1.4 1-.2 1-.4 1-.6 1-.8 1 2.2 1 .5 1 0 1 1.4 1-.8 1 .5 1-.7 1 .8 1-2.8 1 .7 1 .9 1 1.4 1-1.3 1 .3 1-2.2 1 3.3 1-2.9 1 2.2 1-2.5 1 1.1 1 .3 1-1.5 1 0 1 2.6 1 .2 1 .4 1-4.1 1 3.8 1-1.5 1-1.4 1 2.9 1-.5 1-3.4 1 1.6 1 1.5 1-1.8 1 1.5 1-1.7 1 1.5 1 .5 1 .8 1-2.2 1 2 1-2.9 1 1 1 1.3 1-3.1 1 2.9 1-1.7 1 2.5 1-.8 1-2.7 1 1.7 1 1.1 1-2.6 1 1 1 .5 1 1.8 1-1.4 1-1.8 1 3.7 1-2.6 1-.8 1 2.4 1 .1 1-2.9 1 3.1 1-3.1 1 .1 1 2.7 1-2.8 1 3.5 1-1.1 1-.1 1-1.4 1-1.4 1 .7 1 1.9 1 .2 1 .2 1-1.8 1-.3 1 1.7 1-2 1 3.6 1-3.5 1 3.3 1-.8 1-1.4 1 1.2 1 .7 1-.1 1 .5 1-.2 1-1.5 1 1 1-1.2 1-1.7 1 .2 1-.2 1 3.7 1-.4 1 .5 1-3.1 1-.2 1 1.4 1-.9 1 1.5 1 .8 1-2.5 1-.6 1 1.4 1 .5 1-2.6 1 .2 1 3.8 1-1.8 1-.3 1 2.4 1-3.6 1 1.5 1 .9 1-2.8 1 .6 1 1.7 1-2.5 1 3.7 1-1.5 1-.5 1 .4 1 1 1-1.8 1 1.1 1 .6 1 .2 1-2.8 1 1.1 1 0 1 1.8 1-.7 1-1.7 1 3.2 1-.4 1-2.8 1 1.8 1 .3 1-.9 1-2.1 1 .7 1 .7 1-.7 1 1.1 1-1.1 1 1.1 1 2.3 1 0 1-3.4 1 2.9 1-3.7 1 2.2 1 2.1 1-4 1-.1 1 4.2 1-1.2 1-1.1 1 2.3 1-2.8 1-1.2 1 .9 1 2.7 1-1.9 1 1.8 1 .2 1-3.6 1 1.6 1 .4 1 0 1 1.4 1-3.2 1 .1 1 3.4 1-3.1 1 3.1 1-1.6 1-2.5 1 .5 1 2.7 1-.8 1 0 1 1.6 1-.9 1-2.4 1 .6 1-.3 1 .8 1 .4 1-2.2 1 3.6 1-3.4 1 .9 1-.7 1 3.5 1-1.9 1-1.8 1 2.1 1 .3 1-1.2 1 1.4 1-2.1 1 1.7 1 1 1-1.1 1 1.9 1-.3 1-.4 1 .5 1-3.1 1-.7 1 1 1 2.5 1 0 1 .6 1-3.3 1 0 1 1.8 1-.3 1-1.9 1 1.2 1 1.6 1-.1 1-2.2 1 .6 1 1.2 1 .7 1-.1 1-2.5 1 2.8 1-.2 1-3.6 1 .5 1 2.7 1-.6 1-1.7 1 .3 1 .3 1 1.9 1 0 1-.2 1-.8 1-1.1 1-.1 1 2 1-2.1 1 1.6 1-.6 1 1.8 1-.6 1-2.9 1 2.6 1-2.5 1 3.7 1-1.4 1-.4 1-1.7 1 1.6 1-1.6 1 2.8 1 .6 1-1.4 1-.5 1-1.4 1-.7 1 3.3 1-1.8 1 2.4 1-.8 1 .3 1-.8 1-.7 1-2.1 1 1.4 1-1 1 3.4 1-2.8 1 2.1 1 1.2 1-4.3 1 .2 1 3.5 1 .2 1-.8 1 .2 1 .7 1-.1 1-2 1 1.5 1-.2 1-3.2 1 4 1-1.7 1-.9 1 1.7 1 .9 1-1.8 1 2 1-.1 1-2.3 1-.5 1 .7 1 2.2 1-4.2 1 .2 1 3.1 1 .1 1-3.2 1 2.2 1-2.4 1 3.3 1-1.2 1 1.7 1 .5 1-4 1 3.8 1-1.7 1-1.1 1 .5 1-.7 1 1.9 1 .7 1 .3 1-.3 1-2.9 1 .1 1 3 1-3.1 1 2.8 1 .1 1-1.3 1 1.1 1-1.4 1 .5 1-1.1 1 0 1 2.3 1 .3 1-2.3 1 1.5 1-3.1 1 3.6 1-.7 1-.4 1 .5 1 .6 1-1.4 1-2.1 1 2.7 1-1.2 1 1.9 1-3.4 1 2.1 1-1.8 1 2 1-2.4 1 4 1-2.4 1-1.1 1 3 1 .3 1-.6 1-.2 1-.3 1 .5 1-1.2 1-1.9 1 .9 1 .3 1-.8 1 .5 1 2 1 .7 1-.6 1-2.7 1-.3 1 3.3 1 .2 1-2.6 1 2.6 1-2.6 1 1.8 1 .8 1-3.6 1 4.1 1-.3 1 .4 1-1.6 1-2.1 1 .8 1 1.9 1-.9 1-1.2 1 3.1 1-2 1-.9 1 1 1-1.1 1 .9 1-1 1 2.8 1-3.2 1 1.2 1 2 1-.5 1 .7 1-3 1 .6 1-1.7 1 .3 1 3 1-2.7 1-.6 1 3.3 1-2.6 1-.7 1 2.3 1-2.2 1 1.1 1 .7 1-1.9 1 .2 1 .2 1 1.7 1-1 1 .1 1 3 1-2.1 1-.2 1 .3 1 1.6 1-1 1 .1 1-2.8 1 3.5 1-.8 1 .3 1-3.1 1 0 1-.1 1 .7 1 .7 1 .7 1 .3 1-1.8 1 2.1 1-.2 1 .2 1-.4 1 1.5 1-.1 1 0 1-2 1-1.6 1-.2 1 3.2 1 .8 1-1.9 1 1.8 1-2.1 1 1.3 1 .8 1-1.1 1 .2 1 .1 1 1.2 1-1.5 1-1.5 1-.1 1-1.2 1 3.8 1-2.5 1 1.1 1 .9 1-.9 1-1.8 1-.5 1 3 1-.1 1-2.9 1 3.3 1-1.2 1 .3 1-.9 1 1.6 1-.4 1-2.6 1 1 1 3 1-2.5 1 2.6 1-1 1-.9 1 0 1-1.3 1-.7 1 .9 1-.6 1 2.9 1 .7 1-.7 1-.7 1 1.3 1-4.1 1 4.3 1-3 1 .9 1-1 1 1.4 1 .3 1-.6 1 .9 1 .9 1-3.5 1 2.1 1-1.9 1 2 1-.8 1-1.8 1 .2 1 2.2 1 1.2 1-3.1 1 .3 1 1.6 1 .2 1 .7 1-.7 1-2.5 1 .8 1-.3 1 1.3 1 .5 1-1.6 1 .4 1 .1 1 .1 1-.1 1 1.2 1-1.3 1 1.2 1 1.5 1-3.9 1 2.4 1 .8 1 .5 1-1.3 1-1.8 1 3.4 1-1.3 1-1.2 1-1.2 1 .9 1 .4 1 .7 1-2.2 1 .9 1-.4 1 .1 1 .8 1 .9 1-1.3 1 0 1 1.2 1-1.1 1 2 1-1 1 .5 1-1.3 1 1.4 1 1.1 1-3 1 3.1 1-2.5 1 1.8 1 .5 1-2.2 1-1.3 1 .8 1-1.4 1 .5 1 2.6 1 .5 1-3 1 3.1 1-2.7 1 3 1-1.5 1-1.5 1 1.7 1 .3 1-2 1 1.3 1 1.4 1-3.1 1 3.8 1-4 1 .3 1 1.2 1-.4 1-.6 1 3.4 1-3.5 1 .1 1 1.9 1-.5 1 .5 1-2.2 1 .7 1-.3 1 2.6 1-2.6 1-.2 1 2.1 1-1 1-1.7 1 1.7 1-.3 1 1.2 1-1.6 1 1.8 1-1.5 1 .1 1-1.2 1-.3 1 3.7 1-1.5 1-.9 1-.3 1 .8 1 2.5 1-2.4 1 .9 1-1.6 1-.1 1 2.2 1-.8 1 .9 1-2.7 1-.3 1 2.9 1-1.7 1-.4 1 1.6 1-2.4 1-.2 1 0 1 .7 1 3.2 1-2.2 1 1.7 1 0 1-1.1 1 1.2 1-.1 1-.9 1 0 1-.5 1-1.9 1 1.2 1-.3 1 .7 1 2.4 1-2.5 1 .7 1 .1 1-1.1 1-.4 1 3 1-3.7 1 1.4 1 2 1 .2 1-3.4 1 0 1 .6 1-.8 1 1.9 1-.7 1 1.7 1 0 1-2.1 1 .4 1 2.2 1-2 1-.2 1 1.5 1-.3 1 1.5 1-2.3 1 .2 1-.5 1 2.5 1-2.8 1 .4 1-.7 1 1.2 1 .1 1-1.1 1 0 1-.6 1 2.7 1-1.7 1-.3 1 1.8 1-.9 1-2.4 1 1.7 1 1.8 1-.7 1-.1 1-1.2 1 2.8 1-2.8 1 .2 1 1.4 1-2.7 1 1.2 1 1.8 1-1.4 1 .2 1-1.1 1 2.5 1-.8 1-2 1 1.3 1 1.2 1-3 1-.2 1 4.2 1-2.2 1 .2 1 1.6 1-.6 1-.5 1-2.5 1 3.7 1 .2 1-1 1-2.9 1 1.9 1 0 1-1.7 1 3.1 1-.1 1-3.1 1 1 1 2.2 1-.7 1 .5 1-.3 1-2.1 1 3.4 1-3.9 1 2.2 1 1.4 1-.6 1 0 1-2.7 1 .8 1 1.1 1-2.7 1 4 1-1.9 1 1.8 1-.2 1-3.1 1 .3 1 2.8 1-.2 1 .8 1-2.1 1 1.3 1-1 1-.9 1 .5 1 .8 1-.3 1-2.4 1 3.9 1-4.1 1 1.1 1-.8 1 .6 1 3.4 1-2.2 1-1.4 1 2 1-.6 1-.1 1-.9 1 .7 1-1.2 1-.1 1 3 1-1.5 1-1.7 1 3.2 1-1 1-.6 1 2.5 1-.6 1-2.6 1 .9 1-129.3 1 4.5 1 .7 1 1 1 0 1 .4 1-.1 1 .1 1-.2 1 .2 1 0 1 .1 1-.1 1 .1 1-.3 1 .2 1 0 1-.1 1 .1 1-.2 1 .3 1 .3 1-.1 1-.3 1 .4 1-.2 1-.2 1 .3 1-.1 1 0 1 .2 1-.3 1 .5 1-.1 1 .1 1-.1 1 .2 1-.3 1 .3 1-.1 1 0 1-.2 1 .4 1-.3 1-.1 1 .3 1-.3 1 .1 1 .2 1 0 1 .2 1 0 1 .1 1-.1 1-.1 1-.1 1 .1 1 .2 1 .2 1-.1 1-.2 1-.2 1 .4 1 0 1-.1 1 .1 1-.3 1 .2 1 0 1-.2 1 0 1 .5 1-.3 1 .4 1-.5 1 .5 1-.3 1-.1 1 .4 1-.1 1-.1 1 .2 1 0 1 .1 1 0 1-.1 1-.1 1 .4 1 0 1-.2 1 .1 1 .1 1-.1 1-.3 1 .4 1 0 1-.1 1 0 1 0 1 .3 1-.1 1 .2 1-.2 1-.1 1 0 1 .4 1 0 1-.5 1 0 1 .2 1-.1 1 .5 1-.4 1 .4 1-.3 1-.2 1 .5 1-.2 1-.2 1 .1 1 .4 1 .1 1 0 1-.2 1 .1 1 .2 1-.5 1 .5 1-.4 1 .1 1 .2 1 .1 1-.5 1 .4 1-.1 1 .3 1-.2 1 .2 1-.2 1 0 1-.2 1 .4 1 0 1 .2 1-.3 1 .3 1 0 1 0 1-.2 1 .2 1-.1 1-.1 1 .2 1 .2 1-.2 1 .1 1-.2 1 .1 1 .1 1-.3 1 .3 1 0 1 .2 1-.4 1 .5 1-.4 1 .1 1 .3 1-.4 1 .3 1-.1 1-.1 1 0 1 .4 1-.3 1 .2 1 0 1-.4 1 .1 1 .2 1 .1 1 0 1 .1 1-.4 1 .4 1-.1 1 0 1 .1 1 .1 1-.2 1-.2 1 .5 1-.4 1 0 1-.1 1 0 1 .1 1 0 1 .2 1 .2 1 0 1-.3 1 .2 1 .1 1 .1 1-.1 1-.2 1 .2 1 .2 1-.5 1 .4 1-.2 1 .3 1-.3 1 .2 1-.1 1 0 1-.1 1 .2 1-.3 1 .6 1-.5 1 .1 1 .4 1-.5 1 .3 1 0 1-.1 1-.1 1 .4 1-.2 1 .2 1-.4 1 .5 1 0 1-.5 1 .5 1-.4 1 .4 1-.4 1 .3 1 .2 1-.2 1 .3 1-.4 1 .4 1-.1 1 0 1-.1 1 0 1 0 1-.2 1 .2 1 .2 1 0 1-.1 1-.3 1 .4 1-.3 1 .4 1-.2 1 .1 1-.2 1-.1 1 .3 1 0 1-.1 1 .1 1 .3 1-.5 1 .5 1-.3 1 .2 1-.1 1 0 1 .2 1 0 1 0 1-.4 1 .3 1 .2 1-.5 1 .6 1-.4 1 .4 1 0 1-.2 1-.2 1 .4 1 0 1 0 1 .1 1-.3 1-.3 1 .5 1-.3 1 .2 1-.3 1 .1 1 .1 1-.1 1 .1 1 .2 1-.2 1 0 1 .2 1 .3 1-.1 1-.1 1-.3 1 0 1 0 1 .2 1-.1 1 0 1 .1 1-.1 1 .4 1-.4 1 .4 1 .1 1-.1 1 0 1-.1 1 .1 1-.1 1 .2 1 .1 1-.4 1 .2 1 .2 1-.1 1 .1 1 .1 1-.1 1-.2 1 .2 1 0 1-.1 1 .1 1 .1 1-.3 1 .2 1-.2 1 .4 1-.5 1 .5 1-.1 1-.4 1 .6 1-.1 1 0 1-.1 1 .1 1-.3 1 0 1 .1 1 .1 1 .2 1-.4 1 0 1 .4 1 .1 1-.4 1 .4 1-.4 1 .4 1-.3 1-.1 1 .2 1 .4 1-.4 1-.1 1 0 1 .4 1 0 1 0 1-.1 1 .1 1-.2 1-.1 1 .4 1-.2 1 0 1-.2 1 .2 1 .2 1 0 1 0 1 .1 1-.5 1 .1 1 0 1 0 1 0 1 .3 1-.1 1 0 1 .2 1-.3 1 .1 1 .4 1-.5 1 .3 1-.1 1-.2 1 0 1 .4 1-.2 1-.2 1 .5 1-.4 1 .2 1-.2 1 .5 1-.4 1-.1 1 .3 1 .3 1-.1 1 .1 1 0 1-.4 1 0 1 .4 1 0 1-.1 1-.2 1-.1 1 .3 1-.1 1 .2 1 0 1 0 1-.4 1 .3 1-.1 1 .2 1-.3 1 0 1 .2 1-.1 1-.1 1 .4 1-.2 1-.1 1 .3 1 .2 1 .3 1 0 1 0 1 0 1 .2 1 .2 1 .3 1 0 1-.1 1 .1 1 .3 1 .3 1-.2 1 .2 1 .4 1 .3 1 .4 1 .1 1 .4 1 .3 1 0 1 .7 1 0 1 .6 1-.1 1 .2 1 .5 1 0 1 .7 1 .2 1 .2 1 .4 1 .4 1 .2 1 .5 1 0 1 1 1 .3 1 .4 1 .3 1 .7 1 .3 1 .2 1 .9 1 .5 1 .1 1 .9 1 .5 1 .6 1 .6 1 .5 1 .6 1 .5 1 .9 1 .8 1 .6 1 .7 1 .6 1 .5 1 .8 1 .7 1 1 1 .7 1 .6 1 1 1 1.3 1 .6 1 .8 1 1.3 1 1.8 1 1.7 1 1.6 1 1.2 1 2 1 1.9 1 2.3 1 2.6 1 2.6 1 3 1 4.6 1 4 1 4.8 1 6.3 1 8.5 1 15.7 1 20.7 1 2.2 1 .1 1-.9 1-1.2 1-1.6 1 1.2 1-1 1 .2 1 .6 1 .6 1 1.6 1-2.5 1 .1 1 1.6 1-1.8 1 1.4 1-1.8 1 1.2 1-2 1 .6 1 .4 1-.1 1 1.8 1 1.3 1-1.5 1 1.6 1-.7 1-.8 1 1.8 1-1.8 1-.4 1 .1 1-1 1-.7 1 3 1-.3 1 .8 1-2.1 1 1.7 1-.8 1-.3 1-1.5 1 .3 1 .6 1 1.2 1 .3 1-.4 1 .9 1 .1 1-1.1 1-1.8 1 2.7 1-1 1 1.4 1-.4 1-.5 1-1 1 1.3 1 .1 1 .2 1-.9 1 .8 1-1.1 1 .2 1-1.6 1 .4 1 2 1-1.2 1-.5 1-1.4 1 2.7 1-2.4 1 2.3 1-1.9 1-.5 1 1.6 1-1.9 1 4 1-3.4 1 3.5 1-3 1 2.7 1-1.5 1 .4 1-1.4 1 .4 1-.4 1 .6 1-1.8 1 1.4 1 .5 1 1.6 1-.1 1-3.4 1 .1 1 .4 1 2.9 1-.1 1-1.2 1-.2 1-1 1 3.1 1-3.6 1 .5 1-1 1 1.1 1-.3 1 2.1 1-2.8 1 1.4 1-1.3 1 2.6 1-2.9 1 3.6 1-3.3 1 1.9 1 1.4 1-3.5 1 .3 1 1.1 1 2.6 1-1.9 1-1.2 1 2 1-.4 1 .6 1-2.9 1 .3 1 2.4 1-1.5 1 1.3 1-2.8 1 3.8 1-2.4 1-1 1 3.7 1 .3 1-3.9 1 3.3 1 .5 1-.5 1-.6 1-1.6 1 2.7 1-4.2 1 2.6 1 .4 1-.1 1 .6 1-3.4 1 3 1-2.5 1 .6 1 1.7 1-2.2 1 1.6 1-2 1 3.7 1-2.7 1-.2 1 3 1-3.7 1-.2 1 1.6 1-.9 1 2.8 1 .6 1-2.8 1 .7 1-.6 1-.6 1-.6 1 .3 1 3.7 1-3.8 1 .6 1 2.7 1-1.5 1 2.1 1-2.1 1-.2 1-.2 1 .9 1 .2 1-1.5 1-.8 1 1 1-.3 1 .9 1-1.4 1 2.6 1-2.3 1 2.7 1-.1 1-2 1-.5 1 2.7 1-3.8 1 3.5 1-.7 1-.7 1 .1 1 .5 1 1 1-1.8 1-1.4V1694Z" fill="#a5cb55" fill-opacity="0.15" stroke="#a5cb55" stroke-width="0.7" stroke-opacity="0.55" stroke-linejoin="round" clip-path="url(#ca)"/>
<path d="M37.3 1694V1653l1 .6 1-.9 1 .6 1-.9 1 .6 1-.8 1 2.4 1-1.7 1 .7 1-1.5 1-1.1 1 3.1 1-1.1 1-4.8 1 3.9 1 .5 1 1 1-.5 1 1.8 1-1.4 1-1.2 1 .6 1 1 1 2 1-1.2 1-1.1 1 .8 1-3.6 1-3.1 1 4.9 1 .3 1 .7 1 .1 1 1.2 1-.7 1-2.1 1 .9 1-1 1 2.8 1-1.5 1-2.7 1 4.1 1-1.5 1-.5 1 .4 1 1 1-.2 1 0 1-1.6 1-1.8 1 2.3 1 1.4 1-1.2 1 .2 1 1.2 1-1.5 1 .6 1 .6 1-.7 1-1.4 1 .6 1 1.3 1 1 1-2.8 1 1.4 1 .9 1-.1 1-.6 1-1.4 1 2.6 1 .1 1-8.1 1 5.4 1 .7 1-.4 1 .8 1 1.6 1 .6 1-.6 1-2 1 1.7 1-.3 1-.4 1-.8 1 2 1-1.1 1 1.3 1-1.7 1-1.1 1 2.3 1-.8 1-1.8 1-.1 1-.8 1 2.7 1-.5 1-.1 1-.8 1-.9 1 .2 1 4 1-4.3 1-.1 1 2.5 1-2 1-.2 1 2.2 1-.2 1 .2 1-.7 1-.7 1-.5 1 0 1 .7 1 0 1-.5 1 2.6 1-.4 1 .5 1-1 1-.3 1 .7 1-3 1 .1 1 .4 1-.1 1-2.1 1-1.6 1 3.1 1 .2 1 2.5 1 .1 1 .8 1-2.8 1 2.4 1-.8 1 1 1-.2 1-2.2 1 .1 1-.3 1 0 1 1.7 1 1.2 1-2.6 1 1.1 1 .9 1-2.4 1 1 1-.5 1-.5 1 .5 1 1.8 1 .5 1-1 1 .8 1-1.6 1-.6 1-.3 1 .1 1 0 1 1.5 1-1.6 1 .2 1-4.1 1 5 1 .5 1-1.3 1 1.8 1-2.8 1 1.5 1 .3 1-.4 1-2.7 1 1.2 1-1.7 1-.2 1 .5 1 .9 1-.7 1 1.7 1-.3 1-1.1 1 .5 1 1.1 1 1.3 1-.6 1-.3 1 .3 1 1.4 1-.7 1-.8 1 1.6 1-1 1-.4 1 2.1 1-2.4 1 2.8 1 .1 1-1.7 1 .1 1-1 1 1.6 1-1 1 1.9 1-.6 1 0 1 0 1-2.1 1 2 1 .3 1-2.1 1-.3 1 2.1 1 .3 1-2.2 1 0 1 2.3 1-1.9 1 .8 1 .5 1 1.1 1-2.6 1 1.8 1 .3 1-1.2 1 .2 1 1.4 1-1.3 1-1.2 1-.3 1 1.2 1-.2 1 .3 1-.2 1 0 1-.8 1 1.9 1-.4 1-1.8 1 2.2 1-1.8 1 2.2 1-3.4 1 1.6 1-.9 1 2.7 1-.6 1-2.6 1 3.2 1-2.2 1 2.4 1-2.2 1-.1 1 .7 1 1.2 1-2.3 1 4 1-3.2 1 .8 1 .6 1-2.1 1 .8 1-.3 1-.4 1 0 1 2.1 1 .5 1-.1 1-1.2 1 1.3 1-1.7 1 1.5 1-1.5 1-.6 1 .7 1 1.4 1-3.8 1 1.1 1 0 1 1.1 1 .1 1-.8 1 1.1 1-1.6 1 2.3 1-.3 1 .6 1-2.5 1-.2 1 1.1 1 .4 1 .5 1 0 1-.2 1 .9 1-2.6 1 2.7 1-1.6 1 1 1-2 1 2.2 1 .3 1-2.6 1 1.9 1-1.2 1-.7 1 .8 1-.6 1 1 1-.4 1-.6 1 .1 1 1.4 1-1.7 1 .1 1-.1 1 2 1-1.8 1 2.5 1-.4 1-1.6 1 .8 1-.6 1-.8 1 1.5 1-1.2 1 .5 1 1.9 1-2.2 1 .2 1 1.2 1-1.8 1-.1 1-.1 1 .8 1-.4 1 3.2 1-1.6 1 0 1 .9 1-1.7 1-.3 1-.5 1 1.1 1-.2 1-.8 1 2.2 1-1.3 1 1.3 1-2.3 1-.2 1 .8 1-.7 1 .2 1 1.5 1-1.7 1 1.3 1-1.1 1 2 1-1.6 1 0 1 2 1-.8 1 .4 1-1 1 .1 1-.8 1 .5 1 .3 1-.2 1-.9 1 1.1 1-.6 1-.6 1 1.8 1 .4 1-1.6 1 .4 1 1.3 1-2.3 1 .5 1 .7 1-.8 1-.3 1-.3 1 .1 1 1.6 1 .8 1 0 1-1.4 1 1.3 1-1.8 1-.7 1 2.4 1-.7 1 .5 1-1.2 1-.4 1 1 1 1.1 1-2.3 1 .4 1 .5 1-.5 1 1.6 1-.6 1-.6 1 1.5 1-1.4 1 .5 1-.5 1 1.6 1-2.7 1 1.9 1-1 1-.2 1 1.3 1-1.5 1-.6 1 2.7 1 1.7 1-2.3 1 .6 1-2.5 1 .3 1-.2 1 .7 1-.7 1 2.4 1-.5 1 .1 1 0 1-2.1 1 1.8 1-.4 1 .4 1-1.5 1 1.3 1-.9 1-.2 1-.7 1 .1 1 2.5 1-1.2 1 .4 1-1.6 1 .7 1-.9 1 1.2 1 .2 1-1.4 1 .6 1 .6 1 .4 1 .2 1 .9 1-.6 1-2.1 1 1.1 1 1.6 1-.6 1 .6 1-2.4 1 1.3 1 .7 1-.4 1-1.4 1 2.4 1-.7 1-.5 1 1.1 1-2.3 1 .4 1 .8 1 .9 1-.5 1-1.5 1 1.1 1-1.1 1-.7 1 1.2 1-1.2 1 1.5 1 1.2 1-2.1 1 1.6 1-2 1 1.7 1-.9 1-.4 1 1.6 1-2.3 1 2.7 1-1.5 1-1 1 2.1 1-.3 1-1.6 1 1.2 1-1.2 1 1.4 1-1.4 1 2.4 1-1 1-1.4 1 2.2 1 .3 1-1.4 1 .8 1-.3 1 .2 1-1.7 1 .5 1 .4 1-.2 1 .4 1 .5 1-1 1 .6 1-.1 1-.9 1 1.8 1-.1 1-.5 1-.5 1 .1 1 1.4 1-.3 1-.3 1-.7 1-1 1 2.3 1-2.7 1 .5 1 2.1 1-.7 1-1.4 1 .7 1 .2 1-1.5 1 .2 1 1.8 1-2.9 1 1.6 1-.3 1-.2 1-.4 1 .5 1-3 1 1.1 1 .6 1 0 1 .6 1-1.2 1-1.9 1 2.1 1-.2 1 2.4 1-.5 1 .3 1 1.6 1 .1 1-.1 1 0 1-.5 1 .4 1 .6 1 1.8 1-.9 1-.6 1 .8 1-1.6 1 .4 1 1.6 1-.6 1-.7 1-1 1 .2 1-.8 1 1.2 1 1 1 1.1 1-2.6 1 2.6 1-3.7 1 2.7 1-.6 1 .6 1-1.4 1 .9 1-.4 1 .7 1 .5 1-1.8 1 .6 1-.1 1 0 1-.9 1 4 1-2.7 1-1.4 1 1.1 1 0 1 1.8 1-.5 1 .2 1-.6 1-.3 1 1.1 1-2.4 1 1.7 1 .5 1-2 1 1.5 1-.1 1 .6 1-2.1 1 1.2 1 1.1 1-1.8 1 .8 1-1.1 1 1.8 1-1.3 1-.1 1 1 1 .2 1 .5 1-.6 1-2.9 1 .8 1 1 1 .2 1-.7 1-.2 1 .6 1 1 1-.2 1 .9 1-.9 1-.9 1 1.9 1-.3 1-.3 1-1.2 1 .4 1 .9 1-.5 1-1.6 1 2.4 1-1.5 1 0 1 .6 1 .2 1-.9 1 .8 1 1.8 1-2.9 1 .7 1 .4 1 .8 1-1.1 1-.5 1 1.2 1-.8 1-.2 1 0 1-.9 1 1.8 1-1.3 1-.3 1 2.3 1-1.3 1-2.8 1 2 1-.6 1 2.8 1-2.8 1 1.2 1 1.6 1-2.3 1 .5 1 1.4 1 .4 1-2.6 1 1.2 1 1.3 1-1.3 1-.8 1 1.6 1-1.5 1 .6 1-.8 1 1.1 1 .7 1 0 1-.8 1-1.4 1 1.9 1 0 1-.4 1-1 1 2.3 1 1.5 1-2.5 1-.9 1-.6 1 2.1 1-2.2 1 1.2 1 .6 1-1.4 1-1.4 1-.6 1-2 1 2.1 1-2.5 1 1.2 1 .4 1 1.3 1-1 1-1 1 .8 1 4.3 1-2.2 1 1.8 1-.6 1 .4 1-1.2 1 .7 1 1.2 1-2 1 1 1-1.5 1-.3 1 1.3 1 1.6 1-1.2 1 1.1 1-.1 1-2.3 1-.1 1 .7 1 2.1 1-2.7 1 1.8 1-.9 1 .5 1-1.3 1 .4 1 .4 1 .6 1 .9 1 .4 1-2.2 1-.7 1 2.6 1-.9 1-1.4 1 1.2 1-.8 1 2 1-3.4 1 3 1-.7 1 1.2 1-1.3 1-.7 1-4.5 1 3.1 1 0 1 2.5 1 2.1 1-3.1 1-1.6 1 1.6 1-.4 1 .2 1-1.2 1 .1 1 1.1 1 .6 1 1.3 1-.6 1 .8 1-.1 1-.8 1 .5 1-.5 1 .1 1-1.5 1 .5 1 1.8 1-2.7 1 2.4 1-2.2 1 .8 1-.7 1-.1 1 .8 1 1.2 1-.9 1 1 1 .4 1-2 1 .2 1 1.8 1-1.8 1 .6 1 1 1-1.4 1 1.4 1 0 1-.6 1 .9 1-1.3 1 1.3 1-1.8 1-.3 1 1.2 1 .2 1-.2 1-.4 1 1.3 1-1.8 1 1.8 1-2.6 1 1.2 1 .2 1-1.4 1 1.4 1-1.5 1 1.3 1-.7 1 .4 1-.5 1 1.1 1 .8 1-1.7 1 .1 1 1.7 1 1.7 1-2.8 1 1.2 1 .1 1-.4 1 .4 1-2 1-.7 1 .5 1 1 1 .1 1-1.7 1 2.2 1-1.9 1 1.6 1-2 1 2.7 1-.3 1-.2 1-1.4 1 1.3 1-1.2 1-.8 1 .9 1 1.2 1-1 1-1.1 1-.7 1-2.4 1 2 1-.1 1-.5 1-.6 1 2.2 1 .3 1 .9 1 .9 1 0 1-.1 1-1.5 1 1.4 1-.2 1 1.1 1-.6 1 .2 1-.2 1-1.1 1 .8 1 .8 1-1.7 1 .6 1-3.1 1 2.2 1 1.4 1 .6 1-.3 1-1.1 1 1.6 1-.4 1 .1 1-.4 1-1.4 1 1.8 1-1.5 1-.8 1 1.2 1 .7 1-1.9 1-1.6 1 1.6 1 2.7 1-2.9 1 .5 1 2 1-1.1 1 1.4 1-2.7 1 .3 1 1.6 1-2.1 1 1.9 1-1.7 1 .6 1 1.4 1 .7 1-1.3 1-.7 1 0 1 1.3 1 .3 1-.5 1 .7 1-1.2 1 1.2 1 0 1-1.1 1-.2 1 1.3 1-1.5 1-.3 1 1.5 1-.8 1-.3 1 .8 1-1 1-.3 1-.6 1 2.2 1-.5 1-1.4 1 .5 1 0 1-.5 1 1.3 1-1.8 1 2.5 1-1.7 1 2.1 1-.7 1 .7 1-1.5 1 .6 1-1.4 1 1.4 1-.1 1 1 1-.8 1-.1 1-1.9 1 1.2 1 .5 1-.6 1-.2 1-.4 1 1.9 1 .1 1-.2 1-1 1 1.4 1-.3 1-.9 1-1.7 1 1.8 1-.5 1 1.7 1-.8 1-1.2 1-.1 1 .8 1 .4 1-.4 1 .4 1-.3 1 1.2 1-2.3 1 2 1-.7 1-1.3 1 1.6 1-.9 1 1.3 1-.2 1-.1 1-1.2 1 .7 1-1.8 1 2.8 1-.9 1-1.8 1 2.4 1-2.2 1 2.3 1-1.9 1 .2 1 .1 1 .9 1-.7 1-.8 1 2.3 1-.9 1-1.5 1 1.4 1-.3 1 .3 1-.9 1-.2 1 .8 1-.2 1-2.3 1 1.5 1 .6 1 1.5 1-1.2 1 1 1-3.6 1 1.5 1 0 1-.1 1-2.4 1 1.7 1 .4 1 .2 1 .4 1-.7 1 .4 1-.3 1-.2 1 1 1 .7 1-.9 1 0 1 1.5 1-1.8 1 1.5 1-.4 1 1.1 1-1.5 1 1.9 1-2.2 1 1.6 1-2 1 1.3 1-1.1 1 2.5 1-1.9 1 .7 1-.6 1 1.4 1-1.6 1 1 1 .2 1-1.2 1-.2 1 1.1 1-.4 1 1.6 1-2.9 1 .6 1-.2 1 .2 1-.4 1 3.8 1-3 1 2 1-.7 1-.7 1 .1 1 1 1-1.4 1 .8 1-.7 1-.8 1 2 1-2.1 1-2.2 1 2.6 1 .9 1 .1 1-.5 1-.4 1-.5 1 1.7 1 .2 1-2.2 1 2 1-1.9 1 .6 1-.2 1-.5 1 .4 1 1 1 .7 1-.2 1-.8 1 1.6 1-2.3 1 .7 1 .9 1 .1 1-.4 1-.4 1 .4 1-1.6 1-.1 1 2.5 1 0 1 .2 1-2.9 1 1.2 1 0 1 .1 1 .4 1-1.5 1 1.9 1-1.3 1 .1 1-.6 1 0 1 .5 1 1.7 1 .3 1-2.2 1 .1 1-.3 1 2.1 1 .1 1-1.8 1 2 1-2 1 1.8 1-.2 1-2.2 1 .7 1-.6 1-.2 1-.1 1 .9 1-1.1 1 3.5 1-.8 1-1.2 1 .3 1-1.2 1 1.9 1-1.8 1-.4 1 1.3 1-.8 1-.1 1 .4 1-.2 1 1.3 1-1.9 1 1.2 1 .1 1 1 1-2 1 2.1 1-.1 1-1 1-1.4 1 2.3 1-.1 1-.7 1-.5 1 2 1-1.1 1 .3 1-.4 1-1.2 1-1.2 1-3.3 1 3.6 1-.6 1 1.3 1-.8 1 .4 1-1.7 1 2.6 1-2.1 1 1.8 1-1.3 1 1.5 1-.7 1-.9 1 1.3 1 1.4 1-1.2 1 .9 1 1.1 1-.2 1 .1 1-1.2 1 .4 1-.2 1 .7 1-.8 1 0 1-.4 1 1.5 1-.3 1-.9 1-.1 1-.2 1 .2 1 .2 1-.3 1-.7 1-.2 1-.2 1 1.7 1-.9 1-.6 1 2.6 1-1.4 1 .4 1 .2 1-1.6 1 .6 1 1.3 1-1.6 1 1.6 1-1.5 1 .3 1-.5 1 .3 1 1.5 1 .2 1-.4 1 .4 1-1.6 1 1.6 1-2 1 2 1-3.2 1 3.1 1-1.9 1 .7 1 .3 1-1.3 1 2.2 1-2.3 1 1.4 1 .1 1-1 1-.6 1 1.9 1-.4 1 .9 1-1.2 1-.6 1 .3 1 .6 1-.5 1-.9 1 .5 1-.8 1 4.2 1-3.7 1 .7 1 1.5 1-.9 1-1 1 .4 1-1.1 1 2.5 1-1.5 1 .1 1 .3 1-.8 1 .9 1 .9 1-1.6 1-.2 1 1.7 1-2.4 1 2.8 1-1.7 1-.2 1-.1 1-.1 1-.2 1 .2 1 1.2 1-1.5 1 .3 1 1.1 1 .1 1-.5 1-.2 1 1 1-.6 1-.2 1 .6 1 .7 1-.7 1 .1 1-1 1-1 1 1.3 1-.3 1 .2 1-.8 1 2.3 1 0 1-2.4 1 .9 1 .3 1 .2 1 .6 1-.7 1-.4 1-.4 1 1.3 1 .8 1-1.1 1-1.6 1 2.6 1-.6 1-1.4 1 .2 1-.6 1 1.4 1 1.1 1-.5 1-.1 1-.1 1-1.6 1 1.6 1-1.3 1 1 1-.4 1-1 1 2.4 1-.2 1-1.1 1 .1 1-.7 1-.8 1 .5 1-.3 1 1.3 1 .5 1 .3 1-2 1-.3 1 2.2 1-.9 1-1.3 1 .6 1 1.2 1 .8 1-.8 1-2.9 1-3.2 1 2.3 1 0 1 0 1 .3 1 .9 1-.9 1 .9 1 .9 1-.2 1-1.5 1 2.1 1-.1 1 0 1-1 1-.3 1 .1 1 .2 1 1.4 1 1.7 1-2.1 1 1 1-1.6 1 .6 1 1.7 1-1.2 1-.8 1-.3 1 2 1-1.2 1 1 1-.8 1-.5 1 2.4 1 0 1-.1 1-2.6 1 .3 1 .4 1 1.3 1-1.7 1-.6 1 .8 1 .9 1 .7 1-.4 1-1.8 1 1.2 1 1.4 1-2.1 1 0 1 1.1 1 1 1-1.6 1 .7 1-1.6 1 .4 1 .5 1 .5 1-.9 1 .2 1-.5 1 2 1-.7 1-1.8 1 2.2 1-1.7 1-.4 1 2.7 1-.9 1-1 1 1.7 1-2.3 1 2.4 1-1 1 0 1-1.3 1 .1 1 1.4 1-1.6 1 1.2 1-.2 1 .3 1-.3 1-.6 1 1.9 1-1.4 1 1.4 1-1.5 1 .5 1 .8 1-1.5 1-.1 1-.3 1 1.5 1 .5 1-2.4 1 .3 1 1.8 1-.2 1 1 1-1.4 1 .2 1-.3 1 .3 1 .5 1-1.1 1-1.1 1 .6 1 .8 1 1.3 1-.4 1-1.9 1 1.8 1-1.1 1 1 1-1.7 1-.2 1 2.3 1-.9 1 .6 1-1 1 1.1 1 .4 1-1.9 1-.9 1 2.2 1-1.1 1-.5 1 1.9 1-2.4 1 0 1 .2 1 2.5 1-2.1 1 2.1 1 0 1-1.7 1 .1 1 .8 1-2.1 1 .7 1-1.7 1-.1 1 1.6 1 1.3 1-1.5 1 .9 1 .1 1-1.1 1 2.5 1-1.4 1 1.3 1-1.2 1-.5 1 2.2 1-2.2 1 .4 1 .8 1-1.6 1 1 1 1.5 1-2.2 1-.4 1 .1 1 1.7 1 .2 1 .1 1-.4 1-1.5 1 .5 1 .3 1-.5 1-.4 1 1.1 1-1.1 1 1.3 1 .9 1-1.3 1 1 1-2 1 1.8 1 .1 1-1.9 1 1.9 1 .7 1-.8 1-1.6 1-1.2 1 2.3 1-1.2 1 1.7 1-1.6 1 2.3 1-1.8 1 1.7 1-.1 1 .3 1-2 1 2.9 1-3.6 1 1.8 1-.1 1-.5 1-1.1 1 1.2 1 1.1 1-.5 1-1.1 1-.5 1 1.7 1-1.8 1-.1 1-.1 1 .3 1-.1 1 1.4 1-.5 1 1.6 1-1.9 1-.6 1 1.4 1-.1 1 .6 1-.9 1 1.4 1-2.1 1-.2 1 2 1-.9 1-.8 1-.5 1 2 1 1.3 1-2.1 1 .3 1-.1 1-1 1-.4 1 .2 1 .9 1-.7 1-.1 1 .6 1 1.6 1-1.1 1 1.3 1-1.8 1 .3 1-1.5 1 3.6 1-2.5 1 1.7 1 0 1-.8 1 .7 1-2.4 1-.2 1 1.5 1-1.4 1 2.5 1 0 1-2.4 1 2.4 1 .1 1-.3 1-.9 1-.5 1 1.3 1-2.4V1694Z" fill="#86c762" fill-opacity="0.15" stroke="#86c762" stroke-width="0.85" stroke-opacity="1" stroke-linejoin="round" clip-path="url(#ca)"/>
<path d="M37.3 1694V1666.4l.6 4 .6-3.3 .7 3.1 .6-4.3 .6 5 .6-3.8 .6 2.7 .7-3 .6 3.2 .6-3.3 .6 2.6 .6-2.6 .7 .1 .6 2.2 .6-1.7 .6 3.3 .6-3.8 .7 2.6 .6-2.6 .6 2.8 .6 .9 .6-3.6 .7 2.7 .6-3.2 .6 3.3 .6-2 .6 1.3 .7-1.3 .6 2.1 .6-3.7 .6 4.1 .6-4 .7 3.3 .6-3.2 .6 3.8 .6-1 .6-1.9 .7 3.1 .6-4.3 .6 3.5 .6-3.3 .6 3.5 .7-2.5 .6 1.8 .6-1.3 .6 2.7 .6-3.1 .7 2.3 .6-2.9 .6 3 .6-2.5 .6 2.2 .7-2.8 .6 2.8 .6-.1 .6-3.1 .6 4.6 .7-3.9 .6 3.4 .6-4 .6 3.3 .6-3.7 .7 1.5 .6-1.6 .6 3.8 .6-3.7 .6 4 .7-2.5 .6 2.4 .6-3.9 .6 3.7 .6-2.2 .7 1.8 .6-2.8 .6 3.4 .6-3.2 .6 3.8 .7-3.8 .6 2.9 .6-3.5 .6 4.4 .6-3.5 .7 2.7 .6-2.2 .6 1.8 .6-1.4 .6 2.1 .7-3.8 .6 3.2 .6-1.6 .6 3.1 .6-.4 .7-4.5 .6 4.8 .6-4.8 .6 4.5 .6-.5 .7-4 .6 3.6 .6-3.5 .6 3.3 .6-.1 .7-2.1 .6 2.9 .6-3.7 .6 4.4 .6-3.3 .7 3.1 .6-3.5 .6 2.6 .6-2.6 .6 3.1 .7-3.9 .6 1.2 .6 1.7 .6-2.8 .6 3.1 .7 .3 .6-3.6 .6 0 .6 4.7 .6-4.9 .7 4.9 .6-4.9 .6 3.6 .6-1.9 .6 2.8 .7-3.2 .6 .2 .6 .3 .6-1.8 .6 .1 .7 3.1 .6-3.3 .6 5 .6-3.3 .6 1.9 .7-2.8 .6 3.3 .6-3.1 .6 2.5 .6-1.9 .7 2.9 .6-2.8 .6 3 .6-4 .6 4.1 .7-4.6 .6 .4 .6 2.8 .6-.1 .6-3.3 .7 4.5 .6-3.2 .6 2.9 .6-2.7 .6 3 .7-.8 .6-2.2 .6 3.1 .6-2.9 .6 2.5 .7-3.4 .6 2.7 .6-1.6 .6 2.7 .6-2.8 .7 1.7 .6 1.5 .6-4.8 .6 4.5 .6-4.2 .7 1.1 .6 3 .6-3.5 .6 3.4 .6-3.2 .7-.3 .6 3.6 .6-4.4 .6 .3 .6 3.7 .7-3.7 .6 4.1 .6-4.1 .6 4.2 .6-3.7 .7 3.4 .6-3.3 .6 2.9 .6-2.3 .6 3.4 .7-3.4 .6 2.9 .6 .3 .6-3.7 .6 2.6 .7-3.6 .6 4.4 .6-1 .6-3.1 .6 3.3 .7-3.8 .6 3.4 .6-1.8 .6 1.8 .6-2.2 .7 2.8 .6-3.8 .6 3.9 .6-.8 .6-2.8 .7 1.4 .6 1.3 .6-1.6 .6 1.8 .6-3.1 .7 4.5 .6-2.9 .6 3.1 .6-3.6 .6 1.8 .7-2.3 .6 3.8 .6-.9 .6-2.5 .6 .4 .7 3.1 .6-3.1 .6 1.9 .6 .6 .6 .7 .7-1.4 .6-2.3 .6-.3 .6 4.1 .6-1.7 .7-2.3 .6 2.6 .6-3 .6 3.7 .6-2.6 .7 3 .6-3.8 .6 3.6 .6-3 .6 1.8 .7-1.8 .6 2.8 .6-3.8 .6 3 .6 1.1 .7-3.1 .6 2.8 .6 .8 .6-4.2 .6 2.5 .7-2.5 .6 2.5 .6-2.3 .6-.7 .6 4.3 .7-2.8 .6 1.6 .6 0 .6-2 .6 2 .7-3.2 .6 4.3 .6-3.3 .6 3.6 .6-3.4 .7 2.2 .6-2.7 .6 3.1 .6 .8 .6-3.8 .7 4 .6-3.4 .6 3.5 .6-4.2 .6 3.3 .7-3.9 .6 4.2 .6-3.8 .6 4.1 .6-4.1 .7 2.5 .6-1.7 .6 3.5 .6-4.2 .6 .8 .7 2.9 .6-2.9 .6 1.8 .6-1.9 .6 3 .7-3.3 .6 2.9 .6-3.9 .6 3.8 .6 .2 .7-4 .6 4.8 .6-4.2 .6 3.1 .6-2.4 .7 2.3 .6-3.5 .6 3.6 .6-3.5 .6 4.4 .7-4 .6 3.9 .6-3.2 .6 1.9 .6-2.2 .7 2.7 .6-3.4 .6 3.1 .6-2.1 .6 3.4 .7-4.5 .6 4.5 .6-.3 .6-3.2 .6-1.5 .7 1.6 .6 3.6 .6-5.2 .6 5.2 .6-4.3 .7 2.8 .6 .4 .6-3.9 .6 4.4 .6-.3 .7-3.1 .6 .1 .6 3.8 .6-5.1 .6 5.1 .7-3.7 .6 .3 .6 .2 .6 2.7 .6-3.3 .7 3.6 .6-3 .6 1.6 .6-3.4 .6 3.8 .7-3.4 .6 3.5 .6-3.2 .6 .8 .6 3.6 .7-3.5 .6 1.8 .6-3.3 .6 3.9 .6-3 .7 3.8 .6-4.6 .6 4.1 .6-3.1 .6 .2 .7 2.1 .6-2.7 .6 .2 .6 2.9 .6-3.5 .7 4.5 .6-5 .6 4.5 .6-4.5 .6 3.2 .7-2.2 .6 3.5 .6-3.9 .6 2.9 .6-2.9 .7 .3 .6-.4 .6 3.5 .6-2.4 .6 2.4 .7-2.9 .6-.6 .6 4.3 .6-3.9 .6 3.1 .7 1.1 .6-4.3 .6 3.8 .6-3.7 .6 4 .7-3 .6 2.9 .6-4.1 .6 2.9 .6-1.9 .7 3.4 .6-.1 .6-4.1 .6 3.7 .6-3.3 .7 3 .6-4 .6 4.4 .6 .2 .6-3 .7 2.3 .6-2.9 .6 3 .6-3.2 .6-.1 .7 2.4 .6 1.2 .6-3.6 .6 4.1 .6-4.4 .7 2.8 .6-2.5 .6-.2 .6 3 .6-3.2 .7 3.4 .6-3.7 .6 4 .6 0 .6-4 .7 3.1 .6-2.1 .6 2.2 .6-1.6 .6-.6 .7 2.3 .6 .6 .6-2.4 .6 3.1 .6-4.2 .7 3.8 .6-4.5 .6 4.1 .6-.1 .6-2.6 .7 3.6 .6-4.4 .6 3.5 .6-3.4 .6 3.2 .7 1.2 .6-4.3 .6-.7 .6 3.9 .6-3.7 .7 3.1 .6-2.3 .6 .7 .6 2.7 .6-4.1 .7 4.6 .6 .2 .6-5.2 .6 3.5 .6 1.4 .7-3.7 .6 0 .6 3.8 .6-3.4 .6-.3 .7 3.3 .6-3.7 .6 3.9 .6-3.4 .6 3.7 .7-3.4 .6 2.4 .6-3.6 .6 4.3 .6-4.5 .7 4.4 .6 .3 .6-4.5 .6 3.5 .6-2.6 .7 2.4 .6-2.1 .6 3.2 .6-1.5 .6-2.9 .7 4.2 .6-3.3 .6 3.4 .6-4.5 .6 3.6 .7-3.7 .6 3.6 .6-3.1 .6 2.9 .6-3.1 .7 2.7 .6-3.1 .6 3.2 .6-2.1 .6 2.4 .7-1.7 .6 2.7 .6-3 .6 2.1 .6-1.9 .7 2.1 .6-2 .6 2.6 .6-2.8 .6 3.5 .7-3.7 .6-.1 .6 2.9 .6-2.4 .6 2.3 .7-3.7 .6 3.7 .6 .8 .6-3.4 .6 3 .7-1.2 .6-3.4 .6 3.9 .6-3.3 .6 4 .7-3.5 .6 2.2 .6 1.5 .6-.4 .6-3.9 .7 3 .6-2.2 .6 1.9 .6-1.7 .6 1.9 .7-2.6 .6 3.6 .6-2.9 .6 2.1 .6-1.9 .7 3.4 .6-3.8 .6 2.8 .6-3 .6 4 .7-4.6 .6 4.1 .6-3.6 .6 3.6 .6 .3 .7-3.7 .6 3.9 .6-3.2 .6 2.9 .6-.1 .7-3 .6 2.3 .6-2.4 .6 2.6 .6-2.4 .7 2.2 .6-2.5 .6 3.5 .6-4.1 .6 2.6 .7-3.4 .6 4.8 .6-3.6 .6 2.4 .6-3.1 .7 4.2 .6-2.8 .6 1.2 .6 1.7 .6-4.3 .7 4.5 .6-4.6 .6 4.6 .6-4.2 .6 4 .7-3.8 .6 3.9 .6-4.6 .6 3.7 .6-3.1 .7 3.5 .6-3.5 .6 2.9 .6 .8 .6-4.7 .7 4.9 .6-3.7 .6 3.3 .6-3 .6 3.5 .7-4.8 .6 4.6 .6-3 .6 3.4 .6-5 .7 4.2 .6-3.2 .6 2.9 .6-4.1 .6 4.6 .7-2.8 .6-.8 .6 3.3 .6-2.8 .6 1.9 .7-3.1 .6 3.2 .6-2.8 .6 3 .6-3 .7-.3 .6 4.2 .6-4.4 .6 4.7 .6 .3 .7-5 .6 4.6 .6-1.3 .6-2.7 .6 3.3 .7-2.9 .6 2.1 .6-2.6 .6 2.9 .6 1.1 .7 .3 .6-1.2 .6-1.8 .6 1.9 .6-3.1 .7 3.2 .6-3.2 .6 4.3 .6-4.9 .6 3 .7-1.5 .6 1.8 .6-2.5 .6 3.7 .6 .4 .7-3.3 .6 1.4 .6-2.6 .6 .9 .6 3.6 .7-3.2 .6 3.1 .6-4.5 .6 4.5 .6-3.8 .7 2.2 .6-2.6 .6 2.5 .6-3 .6 4.7 .7-3 .6 1.4 .6-3 .6 4.7 .6-1.8 .7-3.1 .6 1.7 .6 2.3 .6-2.3 .6-.7 .7 3 .6-2.7 .6 2.8 .6-2.4 .6 3 .7-4.6 .6 1.5 .6 2.4 .6-3.7 .6 1.1 .7 3.5 .6-4.5 .6 4 .6-3.2 .6 1.8 .7-1.5 .6 2.2 .6-2.4 .6 3.1 .6-4.5 .7 4.8 .6-3.1 .6 3.3 .6-4.3 .6-.2 .7 4.4 .6-4.3 .6 3.6 .6-4.1 .6 3.5 .7-2.1 .6 3.3 .6-1.6 .6-3.2 .6 4.2 .7-3.6 .6 3 .6-3.7 .6 .7 .6 4.5 .7-4.8 .6 3.8 .6-3.3 .6 3.6 .6-4.1 .7 3.2 .6-2.7 .6 4.1 .6-3.6 .6 1.8 .7-2.9 .6 4.4 .6-3.3 .6 .2 .6 3.5 .7-5 .6 4.9 .6-4.1 .6 2.5 .6 1.8 .7-3.2 .6 2.2 .6-2.6 .6-.9 .6 4.2 .7-3.9 .6 4.1 .6-4.7 .6 4.2 .6-4.2 .7 3.4 .6-3.4 .6 3.4 .6-2.1 .6 3 .7-4.4 .6 3.1 .6-2.5 .6 2.9 .6-3.1 .7-.7 .6 3.6 .6-2 .6 2.8 .6-3.6 .7 4.1 .6-3.2 .6 1.6 .6 .8 .6-2.7 .7 2 .6-3.1 .6 4.8 .6-1.6 .6-3.3 .7 3.8 .6-3.6 .6 3.4 .6-3.3 .6 3.7 .7-2.3 .6-.6 .6 2.2 .6-3.1 .6 3.8 .7-2.7 .6 0 .6 3.7 .6-4.2 .6 3.4 .7-2.7 .6 2.4 .6-3.6 .6 3.2 .6-3.2 .7 3.5 .6-3.7 .6 4.4 .6-3.3 .6 3.6 .7-3.8 .6-1 .6 3.8 .6-3.8 .6 4.9 .7-4.1 .6 3.3 .6 .8 .6-4.9 .6 3.1 .7-2.1 .6 2.3 .6-3.1 .6 3.5 .6-2.1 .7 2.8 .6-3.5 .6 .5 .6 2.2 .6-2.6 .7 3.5 .6-2.9 .6 2.5 .6-3.3 .6 2.8 .7-.4 .6 .5 .6-2 .6 1.4 .6-1.6 .7 1.6 .6-2 .6 3.8 .6-4.8 .6 3.6 .7-2 .6 3.2 .6-4.3 .6 2.9 .6-2.4 .7 2.2 .6-2 .6 3.1 .6-2.8 .6 2.9 .7-3.4 .6-1.3 .6 4.9 .6 0 .6-1.5 .7-1.4 .6 3.2 .6-3.6 .6-.5 .6 3.1 .7-3.7 .6 3 .6-2.2 .6 3.1 .6 .3 .7-3.3 .6 2.6 .6-3.8 .6 5 .6-3.5 .7-.9 .6 3.9 .6-3.3 .6 .2 .6 3.3 .7-4.6 .6 .5 .6 2.6 .6-2.9 .6 3.6 .7-4.1 .6 4.1 .6-3.6 .6 4 .6-3.7 .7 .9 .6 2.5 .6-3.8 .6 4.1 .6-3.6 .7 2.7 .6-2 .6 2.7 .6-3.5 .6 4.3 .7-4.7 .6 4.4 .6-4.2 .6 4.4 .6-1.6 .7-2.8 .6 2.9 .6-2.6 .6 3.5 .6-3 .7 2.3 .6-3.4 .6 3.4 .6-3.4 .6 3.1 .7-3.1 .6 .8 .6 2.9 .6-2.7 .6 3.5 .7-3.3 .6 2.8 .6-2.3 .6 1.7 .6-1.9 .7 2.9 .6-2.9 .6 2.4 .6-3.4 .6 0 .7 3.4 .6-2.7 .6 3 .6-3.7 .6 4.3 .7-1 .6-.4 .6-3.1 .6 3.4 .6-2.4 .7 2.3 .6-3.8 .6 3.2 .6-2.1 .6 2.5 .7-2.6 .6 3.6 .6-3.3 .6 2.2 .6-2.6 .7 2.8 .6-1.9 .6 1.9 .6-3.6 .6 3.2 .7-2.8 .6 3.6 .6-.5 .6-2.1 .6 2 .7 1.2 .6-4.7 .6 3.1 .6-1.7 .6 1.8 .7-1.8 .6 2.3 .6-1.9 .6 1.6 .6-1.7 .7 2.9 .6-4.3 .6 4.3 .6-.1 .6-2.8 .7 2.7 .6-2.9 .6 3.4 .6-3.4 .6 2.1 .7-.2 .6-2.6 .6 2.5 .6-2.9 .6 3.7 .7-4.1 .6 3.3 .6-1.7 .6 1.8 .6-3.1 .7 4.4 .6-3.2 .6 2.2 .6-3 .6 4.3 .7-4.3 .6 3.8 .6-4 .6 2.6 .6-2.5 .7 2.9 .6-2 .6 2.3 .6-2.2 .6 2.1 .7-2 .6 2.9 .6-1.2 .6-2.4 .6 2.3 .7-1.9 .6 2.6 .6-3.3 .6 3.1 .6-3.2 .7 4 .6-4.1 .6 .8 .6 1.9 .6-2.8 .7 2.8 .6-2.8 .6 2.8 .6 .2 .6-2.2 .7 3.5 .6-4.3 .6 3.3 .6-2.6 .6 2.4 .7-2.9 .6 3.1 .6-3.7 .6 4.6 .6-.3 .7-4.3 .6 4.6 .6-4.5 .6 3.9 .6-2.5 .7-.2 .6 2.6 .6-3.6 .6 3.6 .6-.7 .7-3.1 .6 4.6 .6-.6 .6-3.6 .6 2.8 .7-3 .6 2.9 .6-1.4 .6 1.3 .6-1.8 .7 2.5 .6-2 .6 1.7 .6-3.4 .6 .4 .7 2.7 .6-2.8 .6 4 .6-4.2 .6 3.3 .7 1.6 .6-4 .6 2 .6-1.9 .6 2.2 .7-2.5 .6 3.4 .6-2.4 .6 1.6 .6-1.6 .7 2.2 .6-2.6 .6 1.8 .6-2.6 .6 4.3 .7-3.6 .6 3.3 .6-3.1 .6 1.6 .6-2.2 .7 2.8 .6-.7 .6-2.4 .6-.5 .6 4.3 .7-3.1 .6-.2 .6 3.8 .6-4.7 .6 3.5 .7-2.9 .6-.9 .6 4.2 .6-2.6 .6 3.4 .7-1.2 .6-3.3 .6 3.6 .6-.4 .6-3.2 .7 4.3 .6-4.2 .6 3.1 .6-3.4 .6 3.4 .7-3.2 .6 3.2 .6-2.9 .6 3.3 .6-2.4 .7-1.1 .6 3 .6 1.3 .6-4.9 .6 3.4 .7-2.1 .6 3 .6-4.1 .6 4.7 .6-3.9 .7 4 .6-4.4 .6 4.4 .6-3.5 .6-.6 .7 2.9 .6 .7 .6-.2 .6-3.9 .6 1.1 .7 2.4 .6-3.8 .6 5 .6-.4 .6-.1 .7-4.5 .6 3.5 .6-1.8 .6 2.4 .6-3.9 .7 3.4 .6-2.6 .6-.7 .6 4.2 .6-3.3 .7 3 .6-3.4 .6 2.7 .6 .2 .6-2 .7 2.4 .6-3.3 .6-.8 .6 4.6 .6-4.6 .7 4.3 .6-4.4 .6 4.4 .6-4.1 .6 3.6 .7-3.3 .6 2.7 .6-3.4 .6 4.7 .6-3.2 .7 3.2 .6-3.4 .6 2.5 .6-3.5 .6 4 .7 .4 .6-4.5 .6 3 .6-1.6 .6-1.1 .7 4.4 .6-3.7 .6 2.4 .6-3.2 .6 4.7 .7-4.9 .6 3.1 .6-2.7 .6 2.8 .6-2.1 .7 2.6 .6-2.9 .6 2.9 .6-3 .6 3 .7-2.8 .6 3.2 .6-3.7 .6 4 .6-3.3 .7 3.3 .6-.5 .6-3 .6-.1 .6 3.1 .7-4.1 .6 3.6 .6-2.8 .6 2.5 .6-3.2 .7 3.2 .6-2.4 .6 3.4 .6-2.6 .6 2.6 .7-2.8 .6 2.2 .6-1.9 .6 2.5 .6-3.1 .7 2.8 .6-.6 .6-2.4 .6 3.1 .6-4.1 .7 4.7 .6-3.1 .6 2.2 .6-3.2 .6-.1 .7 3 .6-2.2 .6 2.3 .6-1.8 .6 2.7 .7-3.6 .6 2.6 .6-1.8 .6 2.2 .6-3.5 .7 3.3 .6-3.2 .6 3.5 .6-3.5 .6 2.8 .7 .8 .6-4 .6 5 .6-3.5 .6-1.1 .7 4.1 .6-3.9 .6 3 .6-3.5 .6 3.6 .7-2.6 .6 2.6 .6-3.4 .6 3.8 .6-4.1 .7 5.1 .6-1.6 .6 .8 .6-3.3 .6 .2 .7 2.4 .6-3.5 .6 4.4 .6-.5 .6-4 .7 3.7 .6-3 .6 4.2 .6-4.5 .6 3 .7-2.3 .6 3.2 .6-3.7 .6 3.2 .6-2.7 .7 2.4 .6-2.5 .6 3.4 .6 .1 .6-4.1 .7 3.9 .6-2.5 .6 1.4 .6 1.2 .6-3.8 .7 1 .6 1.7 .6 .7 .6-2.2 .6 2.5 .7-4.2 .6 3.8 .6-3.3 .6 2.6 .6-2.1 .7 3.3 .6-3.9 .6 2.7 .6-1.9 .6-.3 .7 3.2 .6-3.5 .6 4.2 .6-4.4 .6 4.6 .7-3.9 .6 2 .6-1.6 .6 2.6 .6-3.8 .7 4.4 .6-3.8 .6 4 .6-3.1 .6 2.4 .7-1.2 .6 .7 .6-2.3 .6-.7 .6 .3 .7 3.1 .6-.2 .6-2.4 .6 2.8 .6 .2 .7-4.5 .6 4.7 .6-3.9 .6 2.4 .6-1.9 .7 2 .6-3.3 .6 4.1 .6-3.1 .6 3.9 .7-5.1 .6 4.7 .6-3.3 .6 3.3 .6-3 .7 2.2 .6-2.8 .6 3.2 .6-3.7 .6 3.6 .7 0 .6-2.2 .6 2.2 .6-3.9 .6 3.3 .7-3.2 .6 3.2 .6-2.5 .6 3 .6-2.4 .7 2.4 .6-2.6 .6 3.5 .6-3 .6 2.1 .7-.5 .6-2.3 .6 3.2 .6-4.1 .6 4.2 .7-2.8 .6 3 .6-3.7 .6 2.6 .6-3.5 .7 3.8 .6-3.1 .6 2.9 .6-.3 .6-2.2 .7 3.8 .6-.2 .6-3.1 .6 2.5 .6-2.7 .7 3.2 .6-.3 .6-3.7 .6 2.7 .6-2.5 .7 2.7 .6-.2 .6-3 .6 2.8 .6-2 .7 3.6 .6-3.5 .6 3.2 .6-4.1 .6 3.9 .7-3.7 .6 3.4 .6 .8 .6-3.8 .6 2.8 .7 1 .6-4.1 .6 4.2 .6-3.5 .6 .2 .7-1 .6 4.4 .6-.8 .6 .8 .6-4.3 .7 2.8 .6 1.3 .6-3.8 .6 2.9 .6-3.7 .7 3 .6-3.1 .6 3.5 .6-2.8 .6 4.1 .7-4.2 .6 .4 .6 3.5 .6-1.2 .6-1.5 .7 2.1 .6-3.1 .6-.9 .6 4.2 .6-3.7 .7 4 .6-3.6 .6 2.8 .6-3.4 .6 4.1 .7-3.8 .6 3.6 .6-4.1 .6 4 .6 .7 .7 .2 .6-4.3 .6 3.3 .6-3.4 .6 2.8 .7-2.2 .6 3.3 .6-3.8 .6 2.9 .6-2.4 .7 2.2 .6-3.2 .6 2.9 .6-2.9 .6 3 .7-2.6 .6 0 .6 .5 .6 3.5 .6-3.1 .7 2.2 .6-3.5 .6 .9 .6 3.6 .6-3.9 .7 2.8 .6 1.2 .6-3.1 .6 2.3 .6-3.4 .7 3 .6-1.9 .6 2 .6-2.3 .6 3.6 .7-3.8 .6 2 .6 .7 .6-2.2 .6 3 .7-3.1 .6 1.8 .6-2.3 .6 2.6 .6-.1 .7-2.8 .6 3 .6-2.7 .6 2.3 .6-1.6 .7 2.6 .6-3 .6 3.3 .6 0 .6-3.6 .7-.8 .6 3.7 .6-2.4 .6-1.6 .6 4.1 .7 .1 .6-2.6 .6 3 .6-3.7 .6 3.3 .7-4 .6 3.9 .6-3.1 .6 3 .6-2.7 .7 2.7 .6-.6 .6-.3 .6-2 .6 4 .7-4.6 .6 4.5 .6-3.6 .6 3.5 .6-3.9 .7-1.1 .6 3.8 .6-2.9 .6 3.3 .6-2.3 .7 3.3 .6-5.2 .6 1.6 .6 2.4 .6-.4 .7-3.2 .6 3 .6 .8 .6 .3 .6-3.9 .7 2.7 .6-2.4 .6 2.5 .6-3 .6 1.1 .7 3 .6-3.4 .6 3.1 .6-3.4 .6 3.7 .7-.4 .6-3.3 .6 4.3 .6-5 .6 3.1 .7-2.3 .6 2.5 .6-2.6 .6-.2 .6 3.1 .7-2.7 .6 .5 .6-.5 .6 3.3 .6-3.4 .7 2.5 .6-2.9 .6 4.4 .6-4.8 .6 4.2 .7-3.2 .6 3.5 .6-4.5 .6 4.5 .6-3.2 .7 1.9 .6-2.9 .6 4.5 .6-3.8 .6 3.4 .7-3.9 .6 3.6 .6-4.2 .6 3.6 .6-2.9 .7 2.6 .6-1.3 .6 2 .6-3.8 .6 4.7 .7-3.7 .6 3.4 .6-.1 .6-3 .6 .2 .7 3.2 .6-4.5 .6 3.2 .6-2.8 .6 4.2 .7-4.2 .6 0 .6 .9 .6 1.7 .6-3 .7 4.8 .6-1.8 .6-1.5 .6 2.7 .6-4.5 .7 3.4 .6-3.5 .6 3.6 .6 0 .6-2.6 .7 4.1 .6-3.5 .6-.7 .6 3.2 .6-3.8 .7 4.7 .6-3.5 .6 2.5 .6-2.3 .6 2.5 .7-2.5 .6 3.1 .6-4.4 .6 3.7 .6-2.9 .7 3.9 .6-4.1 .6 3.6 .6-3.6 .6 2.8 .7-3.5 .6 3.1 .6 .7 .6-3.1 .6 0 .7 3.7 .6-3.9 .6 4 .6-4.6 .6 .8 .7 2.2 .6 .8 .6-2.3 .6 2.7 .6-4.2 .7 3.9 .6-3.7 .6 4.5 .6-2.9 .6 3.2 .7-3.5 .6-.9 .6 4 .6-3 .6 2 .7 .7 .6-4 .6 4.1 .6-2.7 .6 2.6 .7-2.7 .6 1.9 .6-3.6 .6 3.4 .6-2.9 .7 2.7 .6-2.8 .6 4.5 .6-4.6 .6 3.1 .7 .7 .6-2.2 .6 2.9 .6-4.5 .6 4.7 .7-4.7 .6 3 .6-3.3 .6 5 .6-.4 .7-4.4 .6 4.4 .6-4.3 .6 3.9 .6-2.9 .7 2.4 .6-3.5 .6 4.4 .6-3 .6 1.6 .7-2.1 .6 3.4 .6-4 .6 1.2 .6-.4 .7 2.7 .6 0 .6-2.9 .6 3.8 .6-4.1 .7 2.6 .6-2.5 .6 3.3 .6-3 .6-.9 .7 3.3 .6-2.9 .6 3.7 .6 .1 .6-3.4 .7 3.4 .6-.4 .6-3.7 .6 1.2 .6 3.3 .7-4.5 .6 3.9 .6-2.7 .6 3 .6-3.8 .7 3.9 .6-4.7 .6 4.1 .6-3.8 .6 3.8 .7 .8 .6-4.4 .6 3 .6-2.6 .6 2.2 .7-1.7 .6 2.8 .6-2.8 .6 2.1 .6-3.2 .7 3 .6-3.2 .6 3.6 .6-1.9 .6 3.3 .7-4.7 .6 3.5 .6-2.4 .6 2.5 .6-3.8 .7 3.7 .6-2.6 .6 .2 .6 2.8 .6-1.1 .7-1.4 .6 1.6 .6-2.4 .6 3.1 .6-3.7 .7 3.8 .6-2.5 .6 3 .6-3 .6 2.8 .7-2.6 .6 2 .6-3.7 .6 3.3 .6 1 .7-4.1 .6 3.4 .6-3.6 .6 4.4 .6-3.4 .7 3.1 .6-3.2 .6 .5 .6 1.9 .6-2.7 .7 3 .6 .3 .6 .1 .6-.8 .6-2.1 .7-.5 .6 2.5 .6-1.6 .6-1.1 .6-.5 .7 3.3 .6-2.8 .6-.1 .6 4.2 .6-1.3 .7-.3 .6-2.7 .6 4.1 .6-3 .6 2.4 .7-2.9 .6 3.5 .6-.1 .6 .2 .6 .1 .7-.2 .6-2.7 .6 1.6 .6-3.3 .6 4.8 .7-4.4 .6-.2 .6 4.6 .6-3.6 .6 3.3 .7-3.6 .6 3.7 .6-3.1 .6 2.8 .6-4.3 .7 4.8 .6-3.5 .6-.1 .6 2.1 .6-.1 .7-2.8 .6 3.7 .6-3.3 .6 2.3 .6-1.8 .7 1.9 .6 1.6 .6-1.2 .6-2.5 .6 2.7 .7-3.3 .6 4.4 .6-4.4 .6 3.2 .6-2.7 .7 3.8 .6 0 .6-4.4 .6 4.5 .6-1.6 .7-3.4 .6 4.6 .6-4.3 .6 3 .6-1.5 .7 1.6 .6 .9 .6-4.4 .6 4.8 .6-4.1 .7 3 .6-3 .6 2.5 .6-1.2 .6-.8 .7 3.7 .6-4.3 .6 3.1 .6 1.2 .6-4.2 .7 2.9 .6-2.1 .6 3.4 .6-4.2 .6 3 .7-2 .6 3.2 .6-3.8 .6 2.5 .6 0 .7-2.6 .6 3.9 .6-.5 .6-3.3 .6 3.6 .7-2.9 .6 1.6 .6-2.9 .6 2.8 .6-2.9 .7 4.7 .6-3.4 .6 2.1 .6-1.9 .6 2.3 .7-3 .6 3 .6-2.5 .6 0 .6 .1 .7 2 .6-1.9 .6 2 .6-3.4 .6 .9 .7 2.9 .6-3.8 .6 .1 .6 1.4 .6 1.4 .7-1.7 .6 1.6 .6-1.4 .6-1.1 .6 3.3 .7-3.4 .6 2.8 .6-2.7 .6 .7 .6 2.1 .7-3 .6 4.1 .6-2.7 .6 3 .6-5 .7 4.5 .6-3.5 .6 2.5 .6-1.7 .6 1.7 .7-3.3 .6 3.4 .6 .3 .6-3 .6 3 .7-3.8 .6 4.2 .6-4 .6 4.2 .6-4.4 .7 4.8 .6 0 .6-3.1 .6 2.2 .6-2.1 .7 2.9 .6-1.1 .6-2.7 .6 3.9 .6-3.1 .7 3.1 .6-3.8 .6 3.8 .6-3.6 .6 3 .7-4.1 .6 4.2 .6-2.4 .6 1.9 .6-3.4 .7 4.3 .6-4 .6 4.2 .6-3.7 .6 2 .7-2.4 .6 3.9 .6 .1 .6-4.8 .6 5.1 .7-1.5 .6 .7 .6-2.6 .6 1.8 .6-2.9 .7 3.9 .6-.6 .6-2.4 .6-1.4 .6 3.5 .7-3.5 .6 4.1 .6-2.3 .6 2.7 .6-4.4 .7 4 .6-2.8 .6 3 .6-4 .6 4.2 .7-4.4 .6 4.5 .6-3.4 .6 3.1 .6-3.2 .7 2.9 .6 .7 .6-4.1 .6 3.1 .6-3.2 .7 4.1 .6-4 .6-.1 .6 2.6 .6-1.4 .7 2.6 .6-2.6 .6-1.3 .6 3.1 .6-3.4 .7 4.8 .6-.8 .6-3.9 .6 3.5 .6-3.4 .7 3.8 .6-.4 .6-3.3 .6 2.7 .6 .1 .7-.1 .6-1.8 .6 3 .6-4.5 .6 1.9 .7 3 .6-3.1 .6 1.9 .6-3.3 .6 4.5 .7-4.2 .6 3.6 .6-2.4 .6 0 .6-.5 .7 1.9 .6-2 .6 3.3 .6-2.9 .6 3.4 .7-4.6 .6 3 .6-2.2 .6 2.7 .6-3.2 .7 2.5 .6-2 .6 2.4 .6-2.8 .6 4.1 .7-4.8 .6 3.4 .6-1.7 .6 2.9 .6-3.2 .7 2.1 .6-3.4 .6 2.9 .6-2.6 .6 3.2 .7-.3 .6 1 .6-2.6 .6-.1 .6 2.3 .7-3.5 .6 4 .6-3.8 .6-.4 .6 4.6 .7-3.3 .6 2.6 .6-3.5 .6 3.2 .6-2.8 .7 2.6 .6 .2 .6-3.1 .6 3.6 .6-2.6 .7 1.3 .6-3 .6 4.2 .6-2.8 .6-.1 .7 2.2 .6-2.8 .6 4.2 .6-.6 .6-2.8 .7 2.8 .6-3.3 .6 3.4 .6-4.1 .6 3.6 .7-2.3 .6 2.9 .6-4.5 .6 3.2 .6-2.9 .7 2.9 .6-3.2 .6 3.7 .6-2.9 .6 3.8 .7-4.4 .6 4.5 .6 0 .6-4 .6 2.5 .7-3.1 .6 3.5 .6-1.8 .6 2.2 .6-2.7 .7 2.5 .6-.4 .6-2 .6-1.2 .6 3.5 .7-2.7 .6 3.2 .6-3.6 .6 3.2 .6-2.5 .7-.5 .6 3.7 .6 .5 .6-1.8 .6-2.1 .7 2.4 .6-3.4 .6 3.3 .6-2.9 .6 3.9 .7-3.8 .6 3 .6-3.2 .6 3.7 .6-2.3 .7 2.6 .6-4.2 .6 2.9 .6-2 .6 3.8 .7-4.6 .6 4.3 .6-3.6 .6 2.3 .6 .5 .7-3.1 .6 3.5 .6-3.7 .6 2.6 .6-1.9 .7 3.6 .6-3.8 .6 3.1 .6-3.5 .6 3.4 .7-2.8 .6-.4 .6 3 .6-3.6 .6 4.4 .7-4.4 .6 3.1 .6-1.9 .6 2.8 .6-2.5 .7 0 .6 2.6 .6-3.3 .6 3 .6-3.1 .7 3.8 .6-3.6 .6 3.5 .6-4.3 .6 4.3 .7-4.3 .6 3.3 .6-.6 .6-1.4 .6 3.1 .7-3 .6 1.7 .6-1.8 .6-.5 .6 2.5 .7-3.4 .6 4.3 .6-3.1 .6 3.3 .6-3.1 .7 1.5 .6-2.8 .6 3.8 .6-3.5 .6 3.5 .7-3.1 .6 2.3 .6-1.6 .6 .1 .6 2 .7-2.5 .6 2.4 .6-2.6 .6 2 .6-1.5 .7 2.3 .6-2.4 .6 3.1 .6-3 .6-.3 .7 3.6 .6-5 .6 4.3 .6-2.7 .6 1.8 .7-1.9 .6 3.1 .6-2.9 .6 .1 .6 2.9 .7-1.2 .6-2.1 .6 2.8 .6-4.1 .6 .6 .7 .4 .6 2 .6-3.1 .6 1.7 .6 2 .7 1.2 .6-1.1 .6-2.2 .6 2.5 .6-2.8 .7 3.3 .6-2.9 .6-1 .6 3.2 .6 .9 .7-3.5 .6 1.9 .6-1.9 .6 2 .6 1.3 .7-3.5 .6 3.6 .6-3.4 .6 2.4 .6-2.6 .7 2.7 .6-2 .6 1.5 .6-3.2 .6 3.5 .7-2.4 .6 2.3 .6-2.1 .6 1.8 .6-2.3 .7 4 .6-4 .6 0 .6 3.5 .6-4.1 .7 3.9 .6-3.8 .6 3.1 .6-2.5 .6 2.7 .7-2.1 .6-1.5 .6 3.1 .6-2.4 .6 2.8 .7 .3 .6-2.7 .6 3.8 .6-4.6 .6 4.1 .7-3.2 .6 2.9 .6-3.9 .6 3.6 .6-2.9 .7 3.6 .6-3.3 .6 2.3 .6-3.2 .6 4.2 .7-3.5 .6 2.6 .6-3.6 .6 4.6 .6-3.9 .7 3.6 .6-3.2 .6-1.2 .6 4.5 .6-3.5 .7 2.9 .6-3.6 .6 3 .6-2.2 .6-1 .7 3.6 .6-3 .6 3.6 .6-2.8 .6-.3 .7 3 .6-2.7 .6 .1 .6 3.3 .6-3.7 .7 2.3 .6-2.6 .6 3.5 .6-1.3 .6-2 .7 3.5 .6-2.8 .6 1.8 .6-2.9 .6 3.4 .7-2.5 .6 1.9 .6-3.4 .6 4.8 .6-4.5 .7 4.6 .6-4.7 .6 3.6 .6-2 .6 2.6 .7-1.4 .6 1.7 .6-4.9 .6 3.5 .6-3.2 .7 3.5 .6-.3 .6-2.2 .6 2.3 .6-1.9 .7 3.5 .6-3.9 .6 3.3 .6-3.8 .6 3.1 .7-2.6 .6 3.4 .6-4.3 .6 3.8 .6-3.7 .7 3.6 .6-3.7 .6 3.8 .6-3.7 .6 3.4 .7 .4 .6-3 .6 2.4 .6-1.7 .6-.8 .7 .5 .6 1.8 .6-2.4 .6 2.8 .6-3.7 .7 3.1 .6-1.7 .6 2.6 .6-3.4 .6 3.4 .7-.8 .6 1 .6-3.6 .6 4.3 .6-3.2 .7-.5 .6 2.2 .6-3.3 .6 4.2 .6-4.4 .7 3.1 .6-1.3 .6-1.4 .6 4.6 .6-3.6 .7 3.6 .6-4.6 .6 2.8 .6 1.5 .6-4.8 .7 3.8 .6-1.8 .6 1.5 .6-3.4 .6 5 .7-3.5 .6 2.4 .6 .1 .6-4 .6 .6 .7 2.6 .6-1.5 .6 2.4 .6-2.6 .6 2.3 .7-3.3 .6-.4 .6 3.7 .6-2.4 .6 1.9 .7 1 .6-2.5 .6-.7 .6 3.6 .6-.8 .7-3.7 .6 4.8 .6-4.1 .6 4.1 .6-3.8 .7 2.4 .6 .8 .6-.8 .6-3.6 .6 3.2 .7-3.3 .6 5.1 .6-3.7 .6 3.8 .6 0 .7-4.8 .6 4.6 .6-3.5 .6 2.2 .6-2.7 .7 3.9 .6-3 .6 2.7 .6-4.2 .6 3.7 .7-2.5 .6 2.2 .6-3.7 .6 .9 .6 3.6 .7-3.3 .6 3.1 .6-4 .6 3.9 .6-2.6 .7 1.7 .6-2.5 .6 3 .6-2.6 .6 2.5 .7-2.5 .6 3.1 .6-2.7 .6 3.1 .6-3.6 .7 3.9 .6-3.9 .6 3 .6-3.6 .6 3.2 .7-3.1 .6 4.3 .6 .1 .6-3.8 .6 2.9 .7-2.3 .6 2.1 .6-2.9 .6 3 .6-2.6 .7-1 .6 2.8 .6-3 .6 1.4 .6 1.7 .7-3.3 .6 3.8 .6-2.3 .6-1.1 .6 4.2 .7-4.5 .6 3.1 .6-1.9 .6 2.1 .6-2.3 .7 2.3 .6-.2 .6-1.9 .6 .3 .6 2.1 .7 .5 .6-2.5 .6 1.5 .6-2.5 .6 3.8 .7-.5 .6-2.5 .6 2.1 .6-2.6 .6 3.7 .7-2.9 .6 2.4 .6 0 .6-1.1 .6-3 .7 4.1 .6 .4 .6-.3 .6-3.2 .6 2.9 .7-3.8 .6 4 .6-3.5 .6-.5 .6 4.1 .7-4 .6 3.9 .6-3.3 .6 3.1 .6-3.5 .7 .1 .6 1.2 .6-1.2 .6 3.2 .6-3.7 .7 3.3 .6-2 .6 2.1 .6-1.8 .6 3.2 .7-4.8 .6 3.9 .6-2.6 .6 2.9 .6-2.5 .7 1.5 .6-1.7 .6 2.6 .6-3.2 .6 3.9 .7-4.5 .6 4.5 .6-4.8 .6 4.2 .6 .3 .7-4.2 .6 4.5 .6-4.2 .6 3.4 .6-3.3 .7 2.4 .6-3.1 .6 3.8 .6-3.3 .6 2.9 .7-3.2 .6 4.1 .6-3.1 .6 .6 .6 2.5 .7-2.9 .6 .1 .6 2 .6-2.1 .6 2 .7 1 .6-4.1 .6 3.9 .6 .8 .6-4.2 .7 3.7 .6-1.1 .6-2 .6 2.7 .6-3.2 .7 2.3 .6-2.3 .6 3.5 .6-3.5 .6 3 .7-3.3 .6-.3 .6 3.4 .6-.6 .6-1.4 .7 2.9 .6-3.1 .6 2.5 .6-3.9 .6 3.9 .7 .3 .6-2.9 .6 1.7 .6 .1 .6 .2 .7-1.9 .6 .1 .6 .1 .6-1.7 .6 4.3 .7-4.5 .6 4.2 .6-2.6 .6 1.8 .6-2.1 .7 2.7 .6-2.8 .6 3.4 .6-3.4 .6-1.2 .7 4.3 .6-3.9 .6 3.9 .6-3.8 .6 1.3 .7 1.7 .6-2 .6 3.3 .6-3.1 .6 .2 .7 1.7 .6-1.7 .6 1.8 .6-3 .6 .2 .7 2.8 .6-3.2 .6 3.4 .6-3.8 .6 4.7 .7-3.4 .6 2 .6-2.3 .6 0 .6 3.8 .7-3.3 .6 3.6 .6-3.3 .6 3.1 .6-.3 .7 .5 .6-4 .6 2.6 .6-.6 .6-1.9 .7 2.5 .6-2.4 .6 3.1 .6-2.9 .6 2.2 .7-.1 .6-3.2 .6 2.7 .6-1.4 .6 1.8 .7-3.3 .6 1.1 .6 3.1V1694Z" fill="#86c762" fill-opacity="0.15" stroke="#86c762" stroke-width="0.9" stroke-opacity="1" stroke-linejoin="round" clip-path="url(#ca)"/>
<path d="M37.3 1694V1668.7l1-1.2 1 3.4 1-1.3 1-1.8 1-.8 1 3.7 1-1.2 1-2 1 .9 1-.7 1 1.6 1-.7 1 1.8 1-2.2 1 .6 1 1.3 1-3 1 1.7 1-1.2 1 1 1-1 1 2 1-1.3 1 1.5 1-2.6 1 2.8 1 .5 1-3.3 1 2.5 1 1.1 1-3.5 1 1.4 1-.9 1-.3 1-.1 1 1.6 1 .6 1 .1 1-2.1 1 1.8 1-1.4 1 .1 1 1.5 1 1.3 1-2 1 .8 1 .3 1 1 1-3.7 1 1.3 1 2 1-3.5 1 1.5 1-1.1 1 .1 1 0 1-.4 1 .5 1 2.4 1-1.4 1 .4 1-.6 1 .3 1-.9 1 3 1-2.2 1 1.4 1-2.4 1 0 1 3.2 1 .1 1-.3 1-.6 1-2.6 1 2.8 1-1.3 1 .7 1-.4 1 1 1-1.3 1 1.8 1-1.6 1 .2 1-1.5 1 2.9 1-1.1 1-2.6 1 2.1 1-1.3 1 .4 1-.6 1 .8 1 0 1-.5 1-.5 1 3.5 1-3.8 1 2.5 1-2.2 1-.3 1 1.4 1 1.2 1 1 1-1.2 1-1.6 1-1 1 4 1-1.4 1-1.5 1 .5 1 1 1-.1 1 .1 1-1 1-1.6 1 1.5 1 1 1-2.2 1 0 1 1.4 1-1.3 1 2.2 1-.1 1-1.3 1 .4 1-.5 1 2 1 .1 1 .3 1-1.9 1-1.1 1 1 1 1.8 1-2.4 1 2 1-2.1 1 2.7 1-2.7 1 2.8 1-2.6 1-.6 1 .6 1 1.4 1 1 1-1 1-1.6 1 1.7 1-1.8 1 2.8 1 .2 1-1.4 1 .1 1-.5 1 .4 1-.6 1-.6 1 .1 1-.3 1-.1 1 1.6 1 1.3 1-1.4 1 1.7 1 0 1-3.3 1 2.8 1-.9 1-2.2 1 1.1 1 .6 1-.8 1 2 1 .2 1-.3 1 .5 1-2.7 1 .8 1 1.8 1-1 1-1.2 1-1.3 1 2.8 1-.8 1 1.6 1-2.1 1-1.5 1 .2 1 1.7 1-.7 1-1.1 1 1.2 1-.4 1 2.9 1-3.5 1 .9 1-.7 1 2.3 1-1.4 1-1.5 1 3.8 1-.9 1 .7 1-1.7 1-.1 1-1.3 1 1.3 1-.3 1 1.4 1-1.9 1 2.2 1 .1 1-2.8 1 1.6 1-1.6 1-.2 1 2.7 1 1 1-2.4 1 .2 1 1.2 1-2.7 1 .2 1 1 1 .7 1-1.4 1 .4 1-.1 1 0 1 2.7 1-.9 1 .7 1-1.2 1 1.3 1-2.3 1-1.3 1 2.9 1-.6 1-1.2 1 2.3 1-2.5 1 2 1-2.9 1 .1 1 1.8 1 1 1-1 1 1.5 1-2.6 1-.4 1 2.7 1-.6 1-2.1 1 2.3 1-2.3 1 2.4 1 0 1-.2 1 1 1 .1 1 .2 1-1.6 1-.5 1 .5 1-2 1 1.3 1 .7 1 .1 1-.5 1 1.3 1-1.5 1-.3 1-1 1 2.3 1 1 1-2 1-.5 1-1.2 1 2.1 1-.2 1-.7 1-.1 1 2 1-.9 1 .3 1-2.1 1 .5 1-.3 1 2.3 1-.8 1-.8 1-.8 1 2.1 1-.3 1-.2 1 1.1 1-2.5 1 1 1-1.6 1 2.5 1-.7 1-1.2 1 1.6 1 .5 1-1.6 1 2.7 1-2.7 1 .5 1 0 1 2 1-3.2 1 2.7 1-2.2 1 2.8 1-2.5 1 1.1 1-.9 1 1.6 1-1.5 1 1.9 1-3.5 1 2.3 1-.1 1 .3 1-.3 1 .7 1 .6 1-1.6 1-.8 1 .6 1-1.6 1 3.2 1-3.3 1 2.8 1-1.4 1-1 1 1 1 1.6 1-2.4 1 .6 1 0 1 1.9 1-1.1 1 1.6 1-3 1 2.8 1-1.2 1-2.1 1 3.4 1-1.7 1-1.2 1 1.3 1 1 1 1 1-3.5 1 .9 1-1.3 1 0 1 1 1 .4 1 .2 1 .1 1 0 1 .5 1 .4 1-1.1 1 2.3 1-2.4 1 1.1 1-1.5 1 .9 1 1.1 1-1.3 1-.8 1 2.1 1-1.3 1 2.2 1-3.1 1 2.9 1-2.1 1-1.4 1 1.8 1-1.3 1-.5 1 3.2 1-.1 1-3 1 .5 1 .3 1 2.6 1-1.9 1 .7 1 1.2 1-1.4 1-2.2 1 1.4 1 1.9 1-1.4 1 .3 1 .7 1-2.4 1 .5 1 2.7 1-3.1 1 1.8 1-1.6 1 2.9 1-2 1 1.6 1-.2 1-2.3 1 .4 1 .9 1 .9 1-2.7 1 0 1 2.3 1-2.5 1 2.5 1 .8 1-.5 1-2.1 1 2.2 1-1.3 1-1.1 1 1 1-.4 1-.5 1 2 1 .9 1-3.1 1 .1 1 .4 1 2.7 1-3.8 1 3.7 1-1.7 1-2 1 1.7 1 1 1-1.7 1 .9 1 1 1-2.6 1-.2 1 2.3 1-.1 1-1.7 1 3.1 1-1.4 1 .8 1-2.2 1-.7 1 3.6 1-2.6 1 .6 1-1.5 1 1.7 1-1.6 1 .4 1-.6 1 3.1 1 .3 1-1.9 1 2.2 1-3.6 1 3.4 1-.5 1-1.6 1-1.6 1 3.6 1-.8 1-2 1 1.9 1 .2 1-.3 1-1.5 1 2.1 1-.6 1-2.4 1 .1 1-.3 1 3.3 1-3.3 1 2 1 0 1 1.2 1-.6 1 .8 1-1.2 1 1.1 1-1.7 1-1.6 1 .7 1 1.4 1 .8 1 .5 1-2.6 1 .3 1 .6 1-.4 1 .5 1-.6 1 2.5 1-1.5 1 1.6 1-2 1 1.6 1-.4 1-3.1 1 2.4 1-1.5 1-.2 1 1.2 1-1.4 1-.1 1 .6 1-.7 1 2.1 1 .9 1-1.6 1-1 1 3.2 1-1.8 1 1.2 1-2.1 1 2.3 1-1.2 1-1.4 1 1.3 1 .4 1-1.9 1 1.5 1 1.8 1-2.6 1 2.3 1 .1 1 .1 1-3.7 1 1.7 1 .5 1-1.4 1-.1 1 2.9 1-2 1-.1 1 1.7 1 .2 1-1 1-2.1 1 1 1-.2 1 .1 1 2.2 1-2.9 1 1.1 1-.6 1 2.4 1-1.6 1 .1 1 .7 1-.5 1-20.5 1-50.2 1-30.4 1 .9 1 .9 1 8.3 1 10.7 1 10.9 1 2.2 1-.4 1-19.4 1-65.5 1-58.7 1 .2 1-.1 1 .1 1 0 1 .3 1-.3 1-.2 1 .3 1-.2 1 .2 1 .3 1-.1 1-.2 1-.3 1 .4 1-.3 1 0 1 0 1 .5 1-.1 1-.4 1 .4 1 0 1-.4 1 .2 1-.1 1 .1 1-.3 1 .2 1 .3 1-.2 1 .1 1 0 1 .1 1-.5 1 .5 1-.3 1 .2 1-.1 1-.1 1-.1 1 0 1 .1 1-.1 1-.1 1 3.6 1 1.8 1 .1 1 .2 1 .2 1-.5 1 .4 1-.4 1 .1 1 .4 1 0 1-.4 1 0 1 .3 1 0 1-.2 1 .1 1 14.9 1 45.3 1 78.6 1 72.2 1-4.5 1-.8 1 .6 1 .3 1 .6 1-3.5 1 2.8 1-1.7 1 1.4 1-2.3 1 2.5 1-.9 1-1.5 1 .8 1 1.8 1 .3 1-.9 1-.7 1-1.9 1 .7 1 .6 1 .6 1-.3 1-.8 1 1.3 1-1.9 1 3.1 1-.2 1 .2 1-2.7 1 .8 1-.8 1 1.1 1-.8 1 1.4 1 0 1 .3 1-1 1-1.2 1 2.8 1-.6 1-1.4 1-.6 1 .3 1 2.7 1-1.6 1 .4 1 .5 1-1.6 1 1.1 1-2.4 1-.1 1 2.5 1-1.6 1 2.3 1 .2 1-1.3 1-1.1 1 2.3 1-3.4 1 3.9 1-1 1-1.7 1 1.7 1-.2 1-1.8 1-.1 1 1.1 1-.8 1-.1 1-.3 1 2 1-2.6 1 3.6 1-.1 1-3.5 1 2.3 1 .7 1-2.6 1 1.5 1 .3 1 1.1 1-3.1 1 2.4 1-1.2 1-1 1 2.8 1-.1 1-2.1 1-.7 1 .8 1 0 1 1.2 1-1 1 1 1-.1 1-.3 1 1.4 1-3.1 1 .4 1-.1 1 .9 1-.9 1-.4 1 1.8 1 .6 1 0 1-1.1 1-1.3 1 1.6 1 1.3 1-1.2 1 .8 1-.9 1 1.2 1-.8 1-1.6 1 .1 1 3 1-.9 1-2.5 1 1.3 1-1.2 1 1.6 1 .5 1 .1 1-.2 1 .5 1-2.7 1 .8 1 2.7 1-.2 1 .4 1-2.9 1 1 1 .4 1-1.6 1 .3 1 2.9 1-3.6 1 2 1-.4 1-1 1 1.1 1 .7 1-1.3 1-.2 1 .7 1-1.3 1-.2 1 1.6 1-1 1 2.7 1-.8 1-1.3 1 1.1 1 .7 1-.5 1-2.7 1 2.2 1 1 1-3.2 1 3.3 1-.6 1-2.5 1 1.7 1-1.4 1 1.5 1-1.4 1 .7 1-.2 1-1.2 1 3.8 1-3.4 1 .4 1 1.2 1 1.2 1-.6 1 .8 1-2.3 1 0 1-1 1 1.8 1-.6 1 .8 1 1.2 1-.3 1 .4 1-3.4 1 .2 1 2.6 1-2.4 1-.3 1 .3 1 1.9 1 1.1 1-1.1 1 .5 1 .8 1-3.2 1 2.2 1-1.2 1-.2 1 .8 1-1.7 1 2.2 1-1.1 1-.9 1 2.6 1-.5 1 .7 1 .1 1-2.6 1 1.9 1 .1 1-1.3 1 .1 1 1.8 1-2.5 1 .3 1-1.2 1 2.1 1 .9 1-3 1 1.3 1-.7 1 1 1-.1 1 1.4 1-1.8 1 1.5 1-.1 1-1.2 1 .3 1-1.3 1 .5 1 1 1 1.3 1-1.2 1 0 1 1.1 1-.9 1-2 1 .1 1 1.9 1-.2 1 .6 1-1 1-.8 1 2.2 1 .1 1 .7 1-2.7 1 .1 1-1.2 1 1.9 1 1.2 1-1.5 1 1.6 1-2.2 1-.9 1 1.5 1 .1 1-.6 1 1.3 1-.5 1 1.9 1-2.4 1-.2 1 1.6 1-2.6 1 .5 1-.6 1 1.5 1 1.3 1-1.4 1 2 1-3.3 1 0 1 .8 1 1.7 1-1.1 1-.3 1-.5 1 2.5 1-3.3 1 1.6 1 1.1 1 .1 1 1 1-3.9 1 .6 1 2.4 1 .5 1-.8 1-.7 1-30.5 1-50.3 1-18.8 1 9.2 1 10.4 1 10.6 1 2.3 1 .2 1-.1 1-.2 1-6.5 1-65 1-65.4 1-6.3 1 0 1-.1 1-.1 1-.1 1 .3 1-.2 1 0 1 .3 1-.4 1 .1 1 .1 1 0 1 .1 1 .1 1-.2 1-.3 1 .3 1-.2 1 0 1 .3 1-.1 1 0 1-.3 1 .4 1-.5 1 0 1 .3 1-.1 1 .3 1-.1 1-.4 1 .2 1 .3 1-.2 1 .2 1-.3 1 .3 1 0 1-.1 1-.2 1 .2 1-.4 1 .5 1-.4 1 .3 1 .1 1-.2 1 .2 1 .1 1-.6 1 .5 1 .1 1-.6 1 .5 1-.2 1 0 1-.2 1 .2 1-.1 1 .3 1-.2 1 0 1 .1 1-.3 1 .5 1-.2 1 0 1 3.2 1 1.8 1 .3 1 0 1 .1 1-.3 1 .3 1-.3 1 .1 1 .2 1-.3 1 0 1 0 1 .1 1-.3 1 .1 1 0 1 12.1 1 44.8 1 102.6 1 49 1-1.9 1-1.8 1 1.1 1-1.1 1 .1 1 2.5 1-3.7 1 3.4 1 .4 1-.7 1-1.5 1-.2 1-.7 1 0 1-.4 1 1.4 1-.5 1 .5 1 .6 1 .3 1-2.4 1 .6 1 2.7 1 .2 1-.1 1-1.7 1 1 1-1.4 1-.2 1 .6 1-1.7 1 3.3 1-.9 1 1.2 1-.7 1-2.1 1 2.6 1-.9 1-.1 1-1.4 1 .7 1-1.9 1 3.5 1-2.6 1-.5 1-.5 1 1.2 1 2.4 1-3.5 1 1.6 1-.6 1-.4 1 1.1 1 2.1 1-2.6 1 1.9 1 .5 1-.6 1-2.8 1 2.5 1-.8 1 .2 1-2.3 1 1 1 2 1-.1 1 .1 1-1.8 1 2.2 1 .1 1-1 1 1.3 1 .1 1-3.5 1 .9 1-.6 1 1.7 1-2 1 3.4 1-1.8 1-1.1 1-.2 1-.1 1 2.3 1 .1 1 .6 1-2.7 1 .5 1-.5 1 .8 1-1.7 1 1.3 1 .8 1 1.7 1-1.7 1-2 1 1.9 1-.9 1-1 1 .1 1 1.6 1 .8 1-1.6 1 2.4 1-3.3 1 .6 1 2 1 1.1 1-1.3 1 .7 1-1.5 1-1.3 1 1.1 1 1.7 1-.4 1-1.8 1 .5 1-.5 1 2.7 1-3.4 1 1.5 1-1.2 1 2.6 1-.7 1-1.6 1 .5 1-.7 1 3.3 1-3.5 1 .1 1 .1 1-.3 1 3.4 1-3.6 1 .6 1 2.1 1-1.7 1 2.7 1-2.6 1-.4 1-.4 1 2.3 1 .7 1-.6 1-2.1 1 .9 1-.6 1 1.1 1-1 1 0 1-.4 1-.2 1 1.9 1 1.1 1-.5 1-1.7 1 .1 1 2.1 1 .3 1-1.9 1-.7 1 1.6 1-.3 1-1.6 1-.4 1-.4 1 2.4 1 1.3 1-2 1 1.2 1 .2 1-2.2 1 1.4 1-1.6 1 1.9 1-.6 1-1.2 1 2.3 1 0 1 .1 1-.9 1-2.2 1 1.2 1 .2 1 2 1-1.7 1-1.4 1 .7 1 .5 1 1 1-.7 1-.3 1 .5 1-2 1 3.1 1-1 1-1.6 1 2.1 1-2.7 1 3.6 1-1.3 1 .2 1-1.2 1 .2 1 .1 1 .5 1 .8 1-1.9 1 2.7 1-3.1 1 2.5 1-.6 1-2.7 1 3.2 1-.8 1-2.1 1-.1 1 2.3 1-.5 1-1.3 1-.4 1 3.2 1-1.7 1 1.8 1 .4 1-4 1 3.9 1-1.7 1 .9 1 .3 1-.7 1 1.1 1-2.6 1-.8 1 3 1-1.5 1 1.8 1-1 1 .9 1-2 1 0 1-1.2 1 1.8 1-.9 1-.2 1 1.3 1 1.5 1-1.8 1 .6 1 .6 1 .6 1-1.3 1-.8 1 .6 1-.3 1 1.1 1-1.3 1 .6 1 1.2 1-1.2 1 1.1 1-1 1-2 1 1 1-1.2 1 .2 1 .5 1-.2 1 .4 1 1 1 .4 1-2 1-.5 1 .4 1 3.3 1-2.4 1 .8 1 1.5 1-3.5 1 1.7 1-1.5 1 2.2 1-1.8 1 .4 1 .6 1-.7 1 0 1 .8 1-.2 1-.4 1 2.5 1-.4 1-3.1 1 2.8 1-2.9 1 .6 1 3.1 1-3.7 1 2.5 1-1.6 1 1.9 1-2.3 1 1.4 1 1.2 1-1.2 1-2.1 1 3 1 .7 1-3.6 1 3.5 1-.3 1-2.6 1 0 1 2 1-1.3 1 2 1-1.8 1-.3 1 .6 1 .2 1-1.7 1 0 1 2.6 1 .8 1-.2 1-2.1 1-.6 1 2.9 1-3 1-.5 1 .6 1-.6 1 .1 1 3.3 1-1.7 1-.3 1-.4 1 2.4 1-2.7 1 0 1 2.4 1 .3 1-1.6 1-1.8 1 1.3 1 .3 1-.3 1 2.1 1-2.4 1 2.1 1-.5 1 .8 1-2.3 1 .1 1-1.5 1 3.1 1-1.9 1-.7 1-.4 1 3.7 1-1.4 1-2.3 1 1.9 1-1.2 1 2.9 1-1.9 1-.3 1 .7 1 1.6 1-.4 1-3.3 1 .3 1-.4 1 .8 1-.4 1 .4 1 .3 1 2.2 1-3.1 1 3.5 1-1.3 1 1 1-2.2 1-.4 1 2.1 1-.3 1-.7 1-1 1 1.9 1-26.7 1-50.1 1-24.1 1 3.9 1 11.1 1 10.7 1 7.3 1 .1 1-19.5 1-65.5 1-58.4 1-.2 1-.1 1 0 1 .3 1-.6 1 .4 1-.3 1 .5 1 0 1-.5 1 .2 1 .1 1-.2 1-.1 1 0 1 0 1 0 1 .4 1-.4 1 .5 1-.1 1-.2 1 .3 1-.2 1 0 1 .1 1-.4 1 .3 1-.1 1-.1 1 .1 1 .1 1 .2 1-.5 1 .2 1-.1 1 .1 1-.2 1 .2 1-.2 1 .1 1 .2 1-.1 1 .3 1-.3 1-.2 1 .3 1 .1 1 .8 1 3.9 1 .5 1-.1 1 .2 1-.4 1 .4 1-.3 1 .1 1-.2 1 .1 1-.1 1 .3 1-.4 1 0 1 .6 1 4 1 14.1 1 23 1 99.3 1 68.5 1-3.5 1-.6 1 2 1-3.6 1 .6 1 3.2 1-1.2 1-.9 1 .6 1 1.4 1-1.1 1 .2 1-.9 1-1.9 1 3.7 1-.3 1-.3 1-1.9 1-1.1 1 2.8 1 .5 1-3.4 1 .7 1 2.2 1-2.8 1 .1 1-.1 1 .1 1 1.5 1 .8 1 1.1 1-.8 1-.5 1 1 1 .5 1-1.5 1 .6 1-1.5 1 1.6 1-1.1 1-.5 1 .1 1-.6 1-1 1 3.7 1-.7 1-.3 1-1.8 1 .4 1 .8 1 1.6 1-1.8 1 1.1 1-2.1 1 2.9 1-1 1 .8 1 .1 1-.7 1-1.5 1 1.3 1-1.5 1 2.2 1-2 1 .9 1 .5 1 .7 1-2.8 1 .7 1 .5 1-.5 1 1.4 1-.7 1-1.3 1-.1 1 2.8 1-1.7 1 0 1-1.8 1 1.5 1 1.5 1-.1 1-.9 1-2 1 3.2 1-.1 1-2.1 1-.9 1 1 1-.4 1 1.4 1 .4 1-.3 1-1.3 1 2.6 1-2.7 1 1.5 1-.1 1-1 1 1.7 1 .2 1-1.8 1 2.3 1-2 1-1.7 1 3.8 1-.3 1-3.1 1 2.1 1-.3 1-.9 1-.4 1 .5 1 .4 1 1.4 1-.5 1 .2 1 .5 1-1.1 1-1.4 1 .2 1 1.5 1-1.8 1 2 1-2.1 1 1.3 1-.3 1-.1 1 1.6 1-3 1 .5 1 3 1-2.8 1 0 1 1.8 1-2.3 1 2.2 1-1.7 1 .8V1694Z" fill="#73bf69" fill-opacity="0.15" stroke="#73bf69" stroke-width="0.8" stroke-opacity="1" stroke-linejoin="round" clip-path="url(#ca)"/>
<path d="M37.3 1694V1675.4l1-.4 1 .2 1 .1 1-.6 1 .5 1 .2 1-.6 1 .9 1-.1 1-.5 1-.1 1-.3 1 0 1 .1 1 .6 1-.2 1-.3 1-.1 1 .7 1 .2 1-1 1 .8 1-.4 1 .3 1-.6 1 .1 1 .4 1-.5 1 .5 1 .3 1-.2 1-.1 1 .2 1-.4 1 .4 1-.1 1 .2 1-.8 1 .1 1 .6 1-.2 1 0 1 .4 1-.2 1-.6 1-.1 1 .2 1 .2 1-.3 1 .4 1-.3 1 .4 1-.1 1-.2 1 .3 1 .3 1-.9 1 .6 1-.2 1 .3 1-.3 1-.2 1 0 1 .5 1-.2 1-.1 1 .3 1 .1 1-.1 1-.1 1-.2 1 .4 1-.8 1 .7 1 .1 1-.4 1 0 1-.3 1 0 1 .7 1-.4 1 .3 1-.4 1 0 1 0 1 .3 1-.2 1-.1 1 .1 1 .3 1-.1 1-.2 1-.4 1 .6 1-.1 1 .1 1-.4 1 .2 1 .4 1-.8 1 .1 1-.2 1 .3 1 0 1-.2 1 .2 1 .2 1 .5 1-.6 1 .3 1-.6 1-.1 1 .3 1 .4 1-.3 1 0 1 .1 1-.3 1-.2 1 .7 1-.2 1-.2 1 .3 1-.1 1-.3 1-.1 1 .5 1-.1 1-.3 1 .1 1-.2 1 .1 1 .7 1 0 1-.7 1 .2 1 .3 1-.4 1 .4 1-.6 1 .2 1 .5 1-.3 1 .5 1-.1 1-.1 1-.7 1 .8 1-.5 1 .5 1 0 1-.4 1-.1 1 .5 1-.3 1-.1 1-.2 1-.1 1 0 1 .5 1 .3 1-.4 1-.1 1-.1 1 .5 1-.3 1 .3 1-.3 1-.1 1 .2 1-.5 1-.1 1 .3 1 .1 1 .3 1-.6 1 .3 1 0 1-.4 1 .3 1 .5 1-.7 1 .1 1-.1 1 .1 1-1.2 1 1.3 1 .5 1-.5 1 0 1 .4 1-.5 1 .7 1-.5 1 .5 1-.6 1 0 1 .4 1-.3 1-.3 1-.1 1 .4 1 .2 1-.1 1-.4 1 .1 1 .6 1 .1 1-.9 1 .5 1-.2 1 .4 1-.5 1-.2 1 .3 1 .3 1-.6 1 0 1 .5 1-.3 1 .4 1-.3 1 0 1-.1 1-.2 1 .8 1-.2 1 .3 1-.2 1-.8 1 .5 1-.1 1 .1 1-.2 1 .3 1-.5 1 .3 1-.2 1 .7 1-.8 1 .9 1-.2 1 .1 1-.4 1 .2 1 .2 1-.2 1-.3 1-.2 1-.1 1 .5 1-.1 1-.2 1 .6 1-.5 1-.2 1 .7 1-.6 1 .5 1 0 1-.1 1-.2 1-.1 1-.2 1 0 1 .3 1-.1 1 .1 1 .5 1-.9 1 0 1 .8 1-.6 1 .3 1-.1 1-.4 1 .8 1-.3 1 0 1-.2 1 .6 1-.5 1-.3 1 .5 1-.5 1 0 1 .5 1-.2 1 .4 1-.8 1 .8 1-.1 1-.7 1 .2 1-.2 1 .6 1 1.5 1-1.9 1 .6 1-.6 1 .6 1 .1 1-.3 1-.1 1-.2 1 .1 1-.1 1 .4 1-.2 1 .3 1-.7 1 .3 1 .1 1-.4 1 .7 1-.4 1 .1 1-.4 1 .3 1 .3 1-.3 1-.3 1 .8 1-.5 1 .3 1-.5 1 .3 1-.4 1 .5 1-.7 1 .1 1 .5 1 .2 1 0 1-.7 1 .1 1-.1 1 .3 1 1.1 1-1.4 1 .5 1-.1 1 .4 1-.5 1 .6 1-.8 1 .4 1 .1 1-.3 1 .6 1-.8 1-.1 1 .2 1 .4 1-.4 1 .7 1-.7 1-.2 1 .1 1 0 1 .6 1-.2 1-.2 1 .2 1-.5 1 .5 1 .1 1-.4 1-.3 1 .6 1 .1 1 0 1 .1 1 0 1-.6 1 .5 1 .2 1-.8 1 .5 1 .3 1-.1 1 .1 1-.9 1 .5 1 .2 1-.5 1 .4 1-.6 1 .1 1-.1 1 1 1-.9 1 .7 1-.1 1 .3 1-.8 1 .1 1 0 1 .3 1-.4 1-.1 1 .2 1 .6 1-.7 1 .4 1 .2 1-.3 1-.1 1 .3 1 .1 1-.5 1 0 1 .5 1-.3 1-.5 1 .6 1-.5 1 .7 1 0 1-.3 1 0 1-.4 1 .6 1-.4 1 .3 1-.1 1-.2 1 .6 1-.4 1 0 1 0 1 .3 1-.4 1 .6 1-.7 1 0 1-.1 1-.2 1 .4 1 .4 1-.8 1 .6 1-.4 1 .2 1 0 1 .2 1-.4 1 .2 1-.3 1 .9 1-.5 1-.2 1 .1 1 .4 1-.1 1 .3 1-.9 1 .5 1-.5 1 .1 1 .2 1-.3 1 .5 1-.5 1-.1 1 .2 1 .1 1 .2 1 .4 1-.1 1-.5 1-.3 1 .8 1-.2 1 0 1-.5 1 .1 1 .1 1 .4 1-.7 1 .9 1-.5 1-.3 1 .5 1-.2 1-.2 1 .8 1-.7 1 .5 1-.5 1-.2 1 0 1 .1 1 0 1 .2 1-.3 1 .7 1 .1 1-.8 1 .4 1 .3 1-.8 1 .6 1 .1 1-.4 1 .1 1-.1 1 .7 1-.5 1-.2 1 .4 1-.6 1 .6 1 .2 1-.8 1 .2 1 .7 1-.4 1-.4 1 .6 1-.3 1 .2 1-2 1 1.5 1 .6 1-.4 1 0 1 .3 1 0 1 .2 1-.5 1 .1 1-.2 1-.3 1 .8 1-.1 1 .1 1 .1 1-.6 1 0 1 0 1 .6 1-.4 1 .5 1-.8 1 .5 1-.3 1 .3 1-.5 1 .7 1-.8 1 .8 1 0 1-.1 1-.4 1 .2 1 .2 1 .1 1-.1 1 0 1-.7 1 .2 1 .3 1-.6 1 0 1 .1 1 .7 1-.8 1 .2 1 .3 1-.4 1 .4 1-.3 1 .2 1 0 1 .4 1-.8 1 .8 1-.4 1-.1 1 .2 1-.1 1-.3 1 0 1 .8 1-.5 1 .4 1-.3 1 .5 1-1.6 1 1.2 1 .1 1-.5 1 .6 1-.4 1 .1 1 .4 1-.3 1 .3 1-.4 1 .5 1-.6 1 .5 1 0 1-.4 1-.5 1 .4 1-.4 1 .3 1-.2 1 .4 1-.3 1 .8 1-.4 1 .3 1-.8 1 .6 1-.1 1 .2 1-.4 1 0 1 .3 1-.7 1 .7 1 0 1 .1 1-.3 1 0 1-.5 1 .2 1 .8 1-.7 1 .1 1 .1 1-.2 1 .7 1-.7 1 .2 1-.1 1-.2 1-.1 1 .6 1-.3 1-.2 1 .1 1 0 1-.3 1 .8 1-.4 1 .4 1-.6 1 .1 1 .6 1-.5 1 .3 1 .1 1-.3 1-.1 1 .3 1-.6 1-.1 1 .4 1 0 1 .6 1-.9 1 .3 1 .6 1-.7 1-.2 1 0 1 0 1 .7 1-.7 1 .7 1-.4 1 .2 1 .3 1 0 1-.5 1 0 1 .6 1-.4 1 .2 1 0 1-.3 1-.2 1-.3 1 .9 1-.2 1-.3 1 .4 1-.3 1 .5 1-.4 1-.2 1 0 1-.2 1 .3 1-.1 1 .1 1 .2 1 .3 1-.2 1 0 1-.6 1 .2 1-.3 1 .3 1 0 1 0 1-.3 1 .2 1-.1 1 .3 1 0 1 .5 1-.4 1 1.5 1-1.3 1 .1 1-.4 1 .2 1-.5 1 .2 1 .3 1-.6 1 .7 1-.4 1 .1 1 .4 1-.1 1 0 1-.3 1 .2 1 .3 1-.7 1 .1 1-.2 1 0 1 .5 1 0 1-.7 1 .2 1 .4 1 .1 1-.1 1-.1 1 .2 1-.5 1 .5 1 .3 1-.4 1-.4 1 .3 1 .2 1-.5 1 .3 1 .4 1-.6 1 .1 1-.2 1 .6 1 0 1-.7 1 .1 1 .3 1-.3 1 0 1 .3 1 .2 1 .1 1-.7 1-.1 1 .9 1-.6 1 0 1-.2 1 0 1 .1 1-.1 1 .2 1-.2 1 .4 1 .3 1 .1 1-.7 1 .5 1-.3 1-.1 1 .5 1-.2 1 .3 1-.7 1 .4 1-.4 1 0 1-.1 1 .3 1-.3 1 .2 1 0 1 .4 1-.3 1 .3 1-.4 1 .4 1-.4 1-.3 1 .7 1-.3 1 .2 1 .4 1-.2 1 .8 1-1.1 1-.2 1-.3 1 .9 1-.6 1 .3 1 0 1-.3 1 .3 1 .4 1-1 1 .3 1-.1 1 .4 1-.1 1-.1 1 .3 1-.4 1 .4 1-.5 1 0 1-.1 1 .5 1 .2 1 .2 1-.2 1 0 1-.7 1 .8 1-.6 1 .6 1-.2 1-.5 1 .7 1-.6 1-.2 1 .5 1 .1 1 .2 1-.7 1-.1 1 .7 1-.1 1-.1 1-.5 1 .8 1-.7 1 .4 1 .3 1-.8 1 .5 1-.4 1 0 1 .8 1-.3 1 .1 1-.1 1-.2 1 .1 1 .3 1-.3 1 .2 1-.5 1 .4 1 .1 1-.1 1 .3 1-.9 1 .8 1-.2 1 .2 1-.4 1 .5 1-.3 1-.6 1 .5 1-.5 1 .6 1-.1 1-.3 1 .4 1-.6 1 0 1 .2 1-.1 1 .1 1 .3 1 .1 1-.2 1 .2 1-.5 1 .7 1-.3 1 .3 1-.2 1-.2 1 .2 1-.2 1 .5 1-.8 1 .4 1 .4 1-.2 1-.7 1 .3 1 .2 1-.3 1 .7 1 .8 1-1.5 1-.3 1 .7 1-.7 1 .3 1 0 1 .3 1-.3 1 .4 1-.4 1-.1 1 .2 1-.1 1 .1 1 .3 1-.2 1-.3 1 .3 1 .2 1-.6 1 .7 1-.6 1 .2 1 .1 1 .2 1-.2 1-.1 1-.1 1 .3 1-.5 1 .9 1-.8 1 0 1-.1 1 .7 1-.5 1 .5 1-.4 1 .2 1 .3 1-.5 1-.3 1 .2 1-.1 1 0 1-.2 1 .9 1-.3 1 .3 1 0 1-.6 1 .4 1 .2 1 .1 1-.1 1-.5 1-.2 1-.1 1 .6 1 .1 1 .1 1-.7 1 .3 1-.1 1 .4 1 .1 1-.4 1-.4 1 .3 1-.2 1 .6 1-.5 1-.1 1 .2 1 .5 1-.8 1 .3 1 .3 1-.3 1 .4 1-.1 1-.5 1-.1 1 .4 1-.2 1 .3 1-.1 1 .4 1-.8 1 .6 1-.4 1 .5 1 .1 1-.5 1 .4 1-.8 1 .4 1 .2 1 .2 1 0 1-.7 1 .8 1 0 1-.5 1 .6 1-.3 1 .1 1-.4 1 0 1 .2 1 .3 1 .1 1-.3 1-.3 1 .1 1-.4 1 .2 1 .2 1 .3 1-.5 1 .5 1-.3 1-.5 1 .9 1-.2 1-.7 1 .4 1 .3 1 0 1-.6 1 .6 1-.4 1-.3 1 .9 1-.3 1-.4 1 .6 1 .1 1-.9 1 .9 1-.3 1 .1 1-.1 1-.5 1 2.2 1-1.5 1-.4 1 .4 1-.2 1-.1 1 .1 1 .2 1-.5 1-.2 1 .4 1-.4 1 .3 1-.2 1 .4 1 .4 1-.7 1 .1 1 .5 1 2 1-2.3 1-.6 1 .1 1 .8 1-.6 1 .6 1-.5 1-.3 1 .5 1-.3 1 .2 1-.2 1-.1 1-.1 1 .2 1 .6 1-.7 1 .7 1-.6 1-.1 1 .2 1 0 1 .5 1-.4 1 .2 1-.6 1 .8 1 .1 1-.8 1 .7 1-.6 1 .7 1 0 1-.9 1-.1 1 0 1 .1 1 .4 1-.4 1 .3 1-.6 1 .4 1 .7 1-.6 1 .4 1-.3 1 0 1 .4 1 0 1 .1 1 .1 1-.1 1-.7 1 .3 1 .3 1 0 1-.1 1-.7 1 .2 1 .3 1 .4 1-.6 1 .3 1-.2 1 .2 1 .2 1-.8 1 .7 1-.6 1-1.2 1 1.7 1-.4 1 .4 1 0 1-.4 1 0 1 .4 1 0 1-.4 1 .3 1 .4 1 0 1-.4 1-.1 1 .5 1-.5 1 .1 1 0 1 .5 1-.2 1-.1 1-.3 1-.2 1 .4 1-.2 1 .2 1 .3 1-.8 1 .2 1-.1 1-.1 1 .4 1 .2 1-.3 1 .3 1-.4 1-.1 1 .4 1-.4 1 .4 1 0 1-.3 1 .2 1-.1 1 .6 1-.9 1 .1 1-.1 1 .8 1-.9 1 1 1-.6 1 .2 1 .3 1 .1 1-.6 1 .6 1-.4 1-.4 1 .3 1-.3 1-.2 1 .2 1 .6 1-.6 1 .7 1-.4 1-.3 1-.1 1 .4 1-.2 1 .4 1-.2 1 .1 1-.4 1 .5 1-.6 1 .8 1-.3 1 0 1 .1 1 .2 1-.3 1-.5 1 .3 1 0 1-.2 1 .7 1-.1 1-.5 1 .5 1-.4 1 .4 1-.4 1 .6 1-.1 1 .1 1-.5 1 .4 1 0 1 .1 1-.4 1-.2 1 .6 1-.7 1 .3 1-.5 1 .6 1-.1 1-.1 1 .1 1 .3 1-.7 1 .4 1-.5 1 .4 1-.2 1-.2 1 0 1 .7 1-.2 1-.2 1 .6 1 0 1-1 1 1 1-.4 1-.4 1 .5 1 0 1 .2 1-.8 1 .7 1 .1 1-.8 1 .8 1 0 1-.5 1-.1 1 .1 1 .2 1 .3 1-.3 1-.4 1 .7 1-.3 1-.5 1 .2 1 .4 1-.4 1 0 1 .2 1 .2 1-.5 1 .5 1 .2 1-.1 1-.8 1 .1 1 .5 1 .3 1-.6 1 .2 1-.2 1 .2 1-.1 1 .5 1-.8 1 .1 1 .1 1-.1 1 .8 1-.8 1 .3 1 .1 1-.1 1-.5 1 .8 1 .2 1-.6 1 .1 1 .2 1 .2 1-.7 1 .6 1 0 1 .1 1-.1 1 0 1-.4 1-.4 1 .4 1 .2 1 .3 1-.8 1 .7 1 0 1-.8 1 .2 1 .4 1-.1 1 .2 1 0 1-.7 1 1 1-.8 1 .3 1 .3 1-.4 1 .2 1-.2 1 .6 1 0 1-.5 1 .5 1-.5 1 0 1-.4 1 .5 1-.3 1 .6 1-.5 1 0 1-.3 1 .2 1-.2 1 .9 1-.5 1-.3 1-.1 1 .1 1 .2 1-.1 1 .1 1 .5 1-.7 1 .7 1-.8 1 .3 1-.2 1 .8 1-.3 1-.2 1 .3 1-.6 1 .2 1-.3 1 .3 1-.3 1 .4 1 .2 1 .1 1-.1 1 0 1-.2 1-.4 1 .6 1-.4 1-.2 1 .6 1-.7 1 .7 1-.1 1 0 1 0 1 .3 1-.4 1-.5 1 .1 1-.1 1 .9 1 0 1 0 1-.9 1 .8 1 .1 1 0 1-.4 1 .1 1-.3 1 .5 1-.2 1-.6 1 .3 1 .3 1-.1 1 .3 1-.3 1-.4 1 .3 1-.3 1 .4 1-.2 1 .3 1 .3 1-.2 1-.4 1 .4 1-.1 1-.3 1-.3 1 2.3 1-1.8 1-.1 1 .6 1-.1 1-.3 1 .4 1-.2 1-.6 1-.1 1 .1 1 .2 1 .3 1 .2 1-.5 1 0 1 .4 1-.4 1 .4 1-.5 1-.3 1 .4 1 .4 1-.8 1 .7 1-.4 1 .7 1-.8 1-.2 1 .3 1 .3 1-.5 1 .6 1-.7 1 .5 1 .3 1 0 1-.3 1 0 1 .2 1 .2 1-.2 1-.6 1 .5 1 .3 1 .1 1-.6 1 .5 1 .1 1-.2 1-.7 1 .8 1-.8 1 .2 1-.3 1 .7 1-.7 1 .5 1-.1 1 .1 1 .1 1 .3 1-.2 1 .2 1-.6 1 0 1 .6 1-.8 1 .8 1 0 1-.4 1-.2 1 .2 1-.3 1 .7 1-.8 1 .5 1-.3 1-.2 1 .8 1-.1 1 .2 1-.2 1 .1 1-.6 1 0 1 .3 1 0 1-.1 1-.3 1 .2 1-.1 1 0 1-.2 1 .9 1-.8 1 0 1 .1 1 .3 1 .1 1-.6 1 .8 1-.8 1 .6 1-.3 1-.2 1-.2 1 .6 1 .3 1-.4 1 .3 1-.2 1-.2 1 .3 1-.3 1 .2 1-.3 1 .1 1 .4 1-.2 1-.2 1-.2 1 .1 1 .6 1-.1 1-.3 1 .4 1-.6 1-.1 1 .6 1-.3 1-.2 1 .6 1 0 1-.4 1-.3 1 .4 1-.3 1-.3 1 .4 1-.1 1 0 1-.3 1 .8 1-.5 1 .2 1-.1 1 0 1 .3 1 0 1-.1 1-.5 1 .5 1-.2 1 .2 1 .2 1-.1 1-.1 1 .2 1 .1 1-.2 1-.7 1 .3 1-.2 1 .6 1 0 1-.4 1 .6 1-.7 1 0 1 .1 1-.1 1 .7 1 0 1 0 1-.5 1 .6 1-.7 1 .6 1-.2 1-.7 1 .3 1 .4 1-.2 1-.2 1-.1 1 .7 1-.6V1694Z" fill="#86c762" fill-opacity="0.15" stroke="#86c762" stroke-width="0.7" stroke-opacity="1" stroke-linejoin="round" clip-path="url(#ca)"/>
<path d="M37.3 1694V1676.4l1 .6 1-.4 1-.2 1-.2 1 .3 1 0 1 .3 1-.5 1 .6 1 0 1-.1 1 .2 1-.4 1-.3 1 .2 1 .3 1 .2 1 0 1-.5 1 .4 1-.2 1-.5 1 .7 1-.6 1 .3 1-.4 1 .3 1 .1 1 .1 1 .3 1-.4 1-.1 1 .4 1-.7 1 .4 1-.2 1 .4 1-.4 1-.4 1 .2 1 .6 1-.6 1 .1 1 .3 1 .4 1-.7 1-.1 1 .1 1 .6 1 .1 1-.8 1 .1 1 .1 1 .3 1 .3 1-.8 1 .5 1-.6 1 .8 1-.6 1 0 1 .5 1 .1 1 .1 1-.9 1 .3 1 0 1 .3 1 .1 1-.2 1 .4 1-.1 1-.8 1 .8 1-.5 1 .2 1-.4 1 0 1 .7 1-.7 1 .1 1 0 1-.1 1 .2 1 .6 1-.6 1 .1 1 .3 1 .1 1-.4 1-.2 1 .2 1 .5 1-.4 1-.3 1 .4 1 .1 1-.6 1-.1 1 .1 1 .8 1-.5 1 .5 1 0 1-1.2 1 .9 1-.1 1 1.9 1-2 1-.4 1 .4 1-.1 1 .4 1-.6 1 .9 1-.8 1 .1 1 .5 1-.7 1 .1 1 .6 1 .4 1-.5 1 .2 1-.5 1-.2 1-.1 1 .4 1 0 1-.3 1 .7 1-.9 1 .4 1-.1 1-.1 1 .6 1 .1 1-.8 1 .3 1-.2 1 .4 1-.2 1 .4 1 0 1-.8 1 .8 1-.7 1 .6 1-.2 1-.2 1 .5 1-.8 1 .8 1-.1 1-.2 1-.4 1 .4 1 .3 1-.5 1 .5 1-.6 1 .5 1-.2 1 .4 1-.8 1 .8 1 0 1-.4 1 .1 1-.5 1-.6 1 .9 1 0 1-.2 1 .1 1-.2 1 .7 1-.3 1 0 1 .2 1 .1 1-.2 1 .1 1-.5 1 .4 1 .2 1 0 1-.2 1 .3 1-.3 1 .4 1-.5 1 .2 1 .1 1-.2 1-.1 1 .4 1-.7 1 .5 1-.5 1-.2 1 .2 1 .2 1-.2 1 .2 1 .4 1-.2 1-.5 1 .8 1 0 1 0 1-.6 1-.2 1 .8 1-.4 1 .1 1-.5 1 .1 1 .2 1 .6 1-.2 1 .2 1-.4 1 0 1-.4 1 .1 1 .2 1-.2 1 .6 1-.3 1 0 1-.2 1 0 1 .2 1 0 1 .2 1-.6 1 .7 1-.5 1 .3 1 .2 1-.4 1 .1 1 .2 1-.2 1-.4 1 .2 1 .4 1-.2 1-2.2 1 2.5 1-.8 1 .8 1-.1 1 .2 1-.2 1 0 1-.1 1-.4 1 .3 1-.4 1 .1 1 .4 1 .2 1-.9 1 .6 1-.5 1 .5 1-.1 1 .3 1-.5 1 .4 1-.6 1-.3 1 .3 1 .3 1 .6 1 0 1-.2 1-.6 1 0 1 .3 1 .5 1-.6 1 .2 1 .1 1-.1 1 .3 1-.1 1-.6 1 .5 1-.2 1-.3 1-.1 1 .5 1-.5 1 .1 1 0 1 .5 1-.3 1-.4 1 .7 1 .1 1-.4 1-.4 1 .7 1-.6 1 .6 1-.5 1 .6 1-.7 1 .7 1-.4 1-.1 1 0 1 .5 1-.2 1 .4 1-.7 1 .3 1 0 1 .4 1-.6 1 0 1-.3 1 .5 1 .2 1-.3 1 .1 1-.2 1 0 1-.3 1 0 1 .5 1-.3 1-.3 1 .9 1 0 1-.6 1 .3 1 .1 1 .2 1-.7 1 .5 1-.2 1 .5 1-.7 1-.1 1 .7 1 0 1-.9 1 .4 1 .2 1 .3 1-.2 1-.4 1 .1 1 .3 1 0 1-.4 1 0 1 .1 1-.3 1 .1 1-.1 1 .3 1-.3 1 .7 1-.4 1-.4 1 .8 1 .1 1-.4 1-.2 1-.1 1 .3 1-.2 1 .6 1-.3 1-.2 1 .6 1-.1 1-.5 1 0 1-.1 1 .4 1-.2 1 .4 1-.7 1 .4 1-.6 1 .2 1-.1 1 0 1 .2 1-.1 1 .7 1-.2 1-.1 1 0 1-.5 1 .2 1 .1 1 .4 1-.2 1-.1 1-.4 1 .2 1 .6 1-.7 1 .7 1-.6 1 .1 1-.1 1 .1 1 0 1 .3 1-.1 1 .2 1-.7 1 .1 1 .4 1 .2 1-.5 1 0 1 .7 1-.8 1 .3 1 .3 1-.8 1 .6 1 0 1-.4 1 .5 1 .2 1-.5 1-.1 1-.1 1 0 1 .6 1 .1 1 0 1 .1 1-.6 1 .5 1-.4 1-.1 1 .1 1 .4 1-.3 1-.4 1 .5 1-.4 1-.3 1 .1 1 .6 1-.2 1-.5 1 .4 1 .5 1 .1 1-.8 1-.2 1 .8 1-.7 1 .9 1-.9 1 .8 1 .1 1-.9 1 .6 1-.6 1 .6 1-.2 1 .5 1-.1 1-.4 1-.4 1 .5 1 .1 1 0 1 0 1 .2 1-.2 1-.1 1-.1 1 .4 1-.3 1-.2 1 .3 1-.1 1 0 1-.3 1 .2 1-.4 1 .7 1-.6 1 .4 1-.2 1 .1 1 .4 1-.6 1 0 1 0 1 .6 1-.2 1-.2 1-.3 1 .7 1-.8 1 .8 1-.7 1 .4 1-.2 1 .3 1 .1 1-.8 1 .5 1 .2 1-.5 1 .4 1-.4 1 0 1 .2 1-.1 1 .5 1 0 1 .1 1-.5 1 .1 1-.2 1-.2 1-.1 1 0 1 .1 1 .5 1 0 1 0 1 0 1-.1 1-.2 1 .1 1 .4 1-.3 1 0 1-.1 1 .3 1-.5 1 .7 1 .1 1-.6 1-.1 1 .3 1 .3 1-.8 1 0 1 .7 1-.6 1 0 1-.1 1 .3 1 .3 1-.2 1 .5 1-.8 1 .3 1 .5 1-.7 1 .2 1 .3 1-.1 1-.5 1-.1 1 .1 1-.1 1-.1 1 .2 1 .1 1-.1 1 0 1 .1 1-.2 1 .2 1 .5 1-.7 1 .8 1-.7 1 0 1 0 1 .4 1-.4 1 .1 1 .4 1-.3 1 .5 1-.3 1-.4 1 .4 1-.3 1 .6 1-.7 1 0 1 .1 1 .7 1-.7 1 .7 1-.4 1-.3 1 .1 1 .1 1 .4 1-.6 1 0 1-.1 1 .7 1-.8 1 0 1 .1 1-.1 1 .8 1 .1 1-.6 1 .5 1 0 1-.7 1-.1 1 .6 1-.5 1-.2 1 .3 1-.3 1 .2 1-.1 1 .1 1 .5 1-.1 1-.5 1 .3 1 0 1 .3 1-.4 1-.3 1 .2 1 .7 1 .1 1-.6 1 .6 1-.4 1-.1 1-.4 1 .2 1 .3 1-.2 1 .1 1 .4 1-.8 1 0 1 0 1 .6 1 .1 1-.5 1 .5 1-.2 1-.3 1 .5 1 .2 1-.5 1-.4 1 .7 1-.6 1-.1 1 .1 1 0 1 .6 1-.2 1 .4 1-.9 1 .6 1 .1 1-.8 1 .5 1-.2 1 .4 1-.2 1-.2 1 .1 1-.3 1 .3 1-.2 1 .3 1-.1 1 .2 1 .3 1-.8 1 .4 1 .3 1-.6 1 .7 1-.9 1 0 1 .3 1 .4 1 .3 1-.4 1-.5 1 .6 1 .2 1 .1 1-.1 1-.1 1-.4 1-.3 1 .4 1-.2 1 .6 1 0 1 0 1-.6 1 0 1 .2 1 .4 1-.9 1 .8 1-.4 1 .1 1-.2 1 .6 1-.8 1 .2 1 .5 1-.7 1 .6 1 0 1-.4 1 .3 1 .1 1-.5 1 0 1 .4 1-.2 1-.1 1-.2 1 .8 1-.8 1 .6 1 .3 1-.6 1-.3 1 .6 1-.5 1 .7 1-.4 1 .4 1-.6 1 .7 1-.2 1-.6 1 .3 1 0 1 .4 1-.1 1 .1 1-.4 1-.1 1 0 1 0 1 .2 1 0 1 .2 1 .1 1-.5 1-.2 1 .3 1-.5 1 .5 1-.5 1 .4 1-.4 1 .2 1 .7 1 0 1 .1 1 0 1-.6 1 .5 1-.2 1 .1 1-.5 1-.3 1 .4 1 .1 1 .5 1-.4 1 .2 1-.2 1-.3 1 .3 1-.5 1 .9 1-.1 1-.6 1 .2 1 .4 1-.4 1 .2 1-.1 1-.4 1 0 1 .7 1-.9 1 .8 1-.2 1-.5 1 0 1 .3 1 .1 1 .3 1-.7 1 .3 1-.3 1 .3 1 .1 1 .1 1 .2 1-.1 1 0 1 0 1-.1 1 .1 1-.6 1 .8 1-.7 1-.1 1 .3 1 0 1 .3 1 .1 1 0 1-.2 1-.2 1 .4 1-.1 1-.6 1 .5 1-.5 1 .8 1 .1 1-.4 1-.6 1 .4 1 .1 1 0 1 .4 1-.1 1-.4 1-.2 1 .4 1 .4 1-.9 1 .6 1 .1 1-.2 1 .3 1-.3 1 .4 1-.9 1-.1 1 .8 1-.7 1 .4 1 .2 1 0 1 0 1-.1 1 0 1 .1 1-.2 1-.2 1 .2 1 .2 1-.2 1-.1 1-.4 1 .7 1-.5 1-.4 1 .7 1-.4 1 .6 1-.2 1 .3 1 0 1-.2 1 0 1 .3 1 0 1-.2 1 .3 1-.2 1-.5 1 .6 1-.5 1 .6 1-.7 1 .5 1-.4 1-.4 1 1 1-.7 1-.2 1 .1 1 .6 1 0 1 .2 1-.1 1-.9 1 .4 1 .1 1-.2 1 0 1-.1 1 0 1 .3 1-.1 1 .5 1-.6 1 .3 1-.5 1 0 1 .1 1 .2 1 .5 1-.2 1 .3 1-.2 1-.8 1 .2 1 .6 1-.5 1 .3 1-.1 1 0 1-.1 1 .4 1-.2 1 0 1-.6 1 .4 1 0 1-.3 1 .6 1 0 1-.1 1 .1 1-.3 1 .3 1-.2 1 .4 1-.9 1 .7 1-.2 1-.2 1 .2 1-.2 1 .2 1 .3 1-.6 1 .4 1-.2 1-.3 1 .8 1-.2 1-.1 1-.1 1 .3 1-.3 1-.2 1 .6 1-.8 1 .5 1-.1 1-.4 1 .8 1-.8 1 .5 1-.3 1 0 1 .6 1-.3 1 .3 1 0 1-.5 1 .6 1-.6 1 .5 1-.5 1 .4 1 .2 1-.6 1-.2 1 .5 1 0 1-.3 1 .4 1 .1 1-.1 1-.8 1 .5 1-.1 1 0 1 .1 1 .1 1 .4 1-.9 1 .3 1 .3 1-.7 1 .7 1-.3 1 .4 1-.5 1 .4 1-.5 1 .4 1 .1 1-.2 1 0 1 0 1 .3 1-.1 1-.6 1 .3 1 .5 1 0 1 .1 1-.4 1 .4 1-.6 1-.3 1 .3 1 .3 1-.6 1 .3 1 .1 1 .2 1 .1 1-.4 1 .3 1-.6 1 .5 1-.4 1 .4 1-.4 1 .1 1 .6 1-.3 1 .4 1-.1 1 .1 1-.2 1 .2 1-.7 1 .1 1 .5 1 .1 1-.2 1-.8 1 .6 1 .3 1-.2 1 .3 1-.7 1 .4 1 .1 1 0 1 .1 1-.6 1 .3 1 .2 1 .1 1-.5 1-.3 1 .7 1-.4 1 .5 1 0 1-.1 1-.8 1 .2 1 .8 1-.5 1 .2 1-.3 1 .6 1-.9 1 0 1 .8 1 0 1-.2 1-.2 1-.3 1 .1 1-.3 1 .4 1 .1 1-.3 1 .4 1 .1 1-.3 1 .3 1 .1 1 .1 1-.5 1-.2 1 .1 1 .1 1 .4 1-.3 1 .2 1-.2 1-.2 1-.2 1 .6 1 .2 1-.3 1 .4 1-.6 1 0 1-.4 1 .8 1 .2 1-.3 1-.2 1 .2 1 .2 1-.9 1 .2 1 .6 1 .1 1-.8 1 .3 1 .5 1-.5 1 .1 1 .1 1 .2 1-.4 1 .6 1-1 1 .7 1 0 1-.4 1 .7 1-.8 1 .2 1 .5 1 .1 1-.9 1 .1 1 .6 1-.4 1-.2 1 .5 1 .2 1-.4 1-.2 1 .2 1 .3 1-.3 1 .4 1-.7 1-.1 1 .1 1 .2 1 .5 1-.2 1-.4 1 .5 1-.5 1 .3 1-.6 1 .3 1 0 1 .1 1-.2 1 .7 1-.7 1 .8 1-.1 1-.9 1 .4 1 .3 1 .3 1-1 1 .2 1 .2 1 0 1 .5 1-.1 1 0 1-.6 1 .3 1 0 1 .4 1-.2 1 0 1 .2 1 .2 1-.9 1 .5 1-.2 1 .4 1-.7 1 .4 1-.2 1 0 1 .3 1-.3 1 0 1 0 1 .5 1-.3 1-.1 1 .3 1-.7 1 0 1 .1 1 0 1 .5 1 0 1-.1 1-.4 1 .5 1-.8 1 .3 1 .1 1-.1 1 .5 1-.2 1-.2 1 .5 1-.5 1-.1 1-.1 1 .5 1-.1 1 0 1 .2 1-.6 1 .6 1 .1 1-.7 1 .4 1 .2 1-.5 1 .7 1-.8 1 .4 1-.2 1-.1 1 0 1 .6 1-.5 1-.2 1 .6 1 .2 1-.4 1 .5 1-.5 1-1.3 1 1.1 1 .1 1 .2 1 .2 1 .1 1-.1 1-.4 1 1 1-1.1 1-.2 1 .5 1-.1 1-.2 1 .5 1 0 1-.6 1 .3 1 .3 1 0 1-.1 1-.1 1 .4 1-.8 1 .4 1-.3 1 .1 1 .6 1-.8 1 .3 1-.4 1 .9 1-.1 1-.4 1-.4 1 .7 1-.2 1-.1 1-.1 1 .5 1-.8 1 .6 1 0 1 .1 1-.2 1 .1 1 .2 1-.6 1-.3 1 .4 1 .3 1-.2 1-.1 1 .2 1-.5 1 .1 1 .7 1-.5 1-.4 1 0 1 .5 1-.5 1 .1 1 .3 1 .5 1-.4 1 .5 1-.1 1-.4 1-.2 1 0 1 .3 1-.3 1 .4 1-.5 1 0 1-.1 1 .3 1-.1 1-.3 1 .8 1-.3 1 .4 1-.8 1 0 1 .4 1 .1 1 .1 1-.2 1-.3 1 .3 1-.1 1-.3 1 .6 1-.7 1 .5 1-.1 1 .6 1-.7 1 .1 1 0 1 .2 1-.5 1 .3 1 .3 1 .1 1-.2 1 .1 1-.5 1 .7 1-.3 1-.2 1-.1 1 .3 1-.1 1 .3 1-.7 1 0 1 .2 1 0 1-.2 1 .8 1-.3 1-.2 1 .4 1 0 1-.5 1 .1 1 .3 1-.2 1 0 1-.1 1 .2 1 .3 1-.7 1-.1 1-.1 1 .5 1-.3 1-.1 1 .6 1-.5 1-.2 1 .7 1-.2 1 .3 1-.2 1 0 1 .4 1-.5 1 .2 1-.5 1 0 1 .6 1-.1 1 .2 1-.9 1 .5 1-.4 1 .5 1-.4 1 .5 1 .2 1-.3 1 0 1-.4 1 .6 1-.3 1 0 1 0 1 .4 1-.1 1 .1 1-.7 1-.2 1 .6 1 .3 1-.9 1 .5 1 .4 1-.3 1-.2 1-.1 1-.1 1 .8 1-.3 1-.6 1 .2 1 .1 1-.3 1 .4 1 .4 1 .1 1 0 1-.9 1 .6 1 0 1-.5 1 .1 1 .3 1-.3 1 .2 1-.5 1 .8 1-.7 1 .2 1 .3 1 .3 1-.8 1 .3 1 .2 1 0 1 .1 1-.5 1 0 1 .5 1-.5 1 .4 1-.3 1 .2 1 .1 1 .4 1-.4 1-.2 1-.3 1 .2 1 0 1 .2 1 0 1 .3 1-.7 1 .5 1 .3 1-.1 1-.4 1 .4 1 .2 1-.2 1-.6 1-.2 1 1 1-.1 1 0 1-.7 1 .2 1 .5 1-.3 1-.3 1-.1 1 .2 1 .6 1-.4 1-.1 1-.4 1-.1 1 .4 1 .2 1 .3 1-.5 1 0 1 .2 1 0 1 .1 1 .2 1-.3 1-.4 1-.1 1 .2 1 .6 1-.8 1 .3 1 .3 1 0 1 .3 1-.5 1 .3 1-.2 1-.3 1 .2 1-.2 1 0 1 .1 1-.2 1 .7 1-.8 1 .1 1 .3 1-.2 1 .5 1-.7 1 .1 1 0 1 .2 1-.4 1 0 1 .1 1 .8 1-.3 1 .2 1 .1 1 .1 1-.3 1-.1 1-.5 1 .7 1-.4 1 0 1 .4 1-.3 1 0 1 .3 1-.7 1 .6 1-.4 1 .2 1-.2 1 .6 1-.5 1 .2 1 .2 1 .2 1 0 1-.2 1 .1 1 0 1-.1 1 0 1-.2 1 .2 1-.7 1 .6 1 .2 1-.5 1 .1 1-.2 1 .4 1-.3 1 0 1 .1 1 .3 1-.3 1-.4 1 .4 1-.2 1 0 1-.3 1 .5 1 .5 1-.3 1-.6 1 0 1 .3 1 .1 1 .2 1-.2 1-.1 1-.4 1 .1 1 .7 1-.7 1 .2 1 .5 1-.2 1 .2 1-.4 1 .5 1-.6 1 .6 1-.7 1 .4 1-.4 1-.1 1 .8 1-.8 1 .8 1-.8 1 .5V1694Z" fill="#86c762" fill-opacity="0.15" stroke="#86c762" stroke-width="0.7" stroke-opacity="1" stroke-linejoin="round" clip-path="url(#ca)"/>
<path d="M37.3 1694V1677.6l1 .7 1 .2 1-.2 1-.2 1-.2 1-.4 1 .1 1 .2 1 .7 1-.2 1-.8 1 .1 1 .9 1-.4 1 .3 1-.5 1 .1 1 .1 1 .3 1-.3 1 .2 1-.8 1 1 1-.9 1 .7 1 0 1-.7 1 .5 1 .1 1 .2 1-.7 1-.1 1 .3 1 .5 1-.8 1 0 1 0 1 .7 1-.1 1-.4 1-1.3 1 1.7 1 .2 1 0 1 0 1-.4 1 .4 1-.3 1-.5 1 0 1 .7 1 0 1-.1 1-.5 1 .1 1 .6 1-.5 1 .4 1-.5 1 .6 1-.7 1 .2 1 .5 1-.5 1-.2 1 0 1 .4 1 .1 1-.6 1 .7 1 .1 1-.5 1 0 1 .4 1 .2 1-1 1 .4 1 .4 1-.5 1 .3 1 .3 1 .1 1-.6 1 .5 1-.5 1-.4 1 .9 1-.2 1-.3 1-.4 1 .1 1 .6 1-.1 1 0 1 .2 1-.8 1 .6 1 .2 1-.1 1-.2 1 .2 1-.3 1 .1 1 .1 1 .1 1 .2 1-.6 1-.2 1 .5 1-.5 1 .3 1 .3 1-.6 1-.1 1 .1 1 .3 1-.1 1 .2 1 .1 1-.6 1 .4 1-.1 1 .5 1-.7 1 0 1 .3 1 .1 1 .1 1 .1 1-.4 1 .1 1 0 1 .3 1-.5 1 .4 1 .4 1-.4 1 .4 1-.5 1 .3 1 .1 1-.3 1-.2 1 .3 1 0 1 .1 1-.5 1 .5 1 .2 1-.6 1-.3 1 .9 1-.4 1 .2 1-.6 1 .5 1-.7 1 .6 1-.4 1 .3 1 .4 1-.4 1 .5 1-.6 1-.2 1 .7 1-.8 1 .2 1 .1 1 .5 1-.2 1 .1 1-.5 1 .1 1 .2 1 .2 1 0 1-.2 1-.1 1 0 1-.4 1-.1 1 .5 1 .3 1-.2 1 0 1-.5 1 .7 1-.4 1 .2 1 .3 1-.7 1 .2 1 .6 1-.1 1-.2 1-.2 1 .1 1-.2 1 .1 1-.4 1 .5 1-.5 1 .3 1 .5 1-.5 1-.2 1-.2 1 .4 1 .2 1-.1 1-.2 1-.2 1 .2 1 .3 1 .2 1 .1 1-.9 1 0 1 .8 1-.5 1-.1 1 .2 1 .3 1 0 1-.5 1 .2 1-.3 1 .2 1-.3 1 .5 1-.3 1-.1 1 .8 1-.4 1 .2 1-.6 1 0 1 .8 1-.9 1 .9 1-.8 1 .4 1 .3 1-.3 1-.4 1 .8 1-.9 1 .9 1-.4 1 .1 1 .4 1-.2 1-.3 1 0 1 .1 1-.2 1 .4 1 .2 1-.7 1 .1 1-.3 1 .8 1 0 1-.8 1 .8 1-.1 1-.7 1 .2 1-.1 1 .7 1-.8 1-.1 1 .2 1 .2 1 .1 1 .2 1 .2 1-.4 1-.2 1 .5 1-.4 1 .3 1-.6 1 .5 1 .1 1-.3 1-.3 1 .2 1 .3 1 .1 1-.2 1 .1 1 .1 1 .3 1-.1 1-.2 1-.5 1 .1 1 .3 1-.6 1 .8 1-.6 1 .7 1 0 1 0 1-.6 1 .4 1-.5 1 .6 1 .1 1-.1 1 0 1 0 1-.2 1-.1 1 0 1-.1 1-.2 1 .7 1-.5 1-.3 1 .8 1-.4 1 .4 1-.7 1 .1 1-.1 1 0 1-.1 1 .1 1 .4 1-.1 1-.4 1 .3 1 .6 1-.5 1 .2 1-.5 1-.1 1 .9 1-.1 1-.6 1 .2 1 0 1 .2 1 .1 1-.4 1-.2 1 .2 1-.1 1 0 1 0 1 .6 1-.7 1 .6 1-.8 1 .6 1-.6 1 .4 1-.1 1-.1 1-.1 1 .1 1 .2 1 0 1-.4 1 .2 1 .5 1-.3 1 .2 1 .2 1 .1 1-.4 1-.4 1 .1 1 .7 1-.6 1 0 1 0 1 .3 1-.4 1 .5 1-.7 1 .8 1-.4 1 .5 1-.6 1 .2 1 .1 1-.1 1-.2 1 .3 1-.6 1 .8 1-.4 1 .1 1 .1 1 .1 1-.2 1 .4 1-.2 1 .2 1-.2 1 .1 1-.4 1 .4 1 0 1 .2 1-.5 1-.5 1 1 1-.2 1 .1 1-.8 1 .1 1 .2 1 .3 1 0 1-.5 1 .1 1 .4 1-.7 1 .5 1 .4 1-.8 1 .8 1-.8 1 .1 1 .4 1-.6 1 .3 1 .3 1 0 1 .2 1-.2 1 .2 1-.7 1 .6 1-.1 1 .1 1-.1 1-.5 1 .5 1 0 1-.5 1 .6 1 .2 1-.4 1 .5 1-.4 1-.1 1 .1 1 .1 1 .1 1-.8 1 .5 1-.1 1 0 1 .2 1 .1 1-.6 1 .8 1-.3 1-.5 1 .5 1-.5 1 .8 1-.8 1 .2 1 .3 1-.5 1 .7 1-.2 1-.4 1 .2 1 .6 1-.3 1-.1 1 .4 1-.9 1 .4 1 .2 1-.3 1 0 1-.1 1-1.6 1 1.8 1 .4 1-.4 1-.1 1 .4 1-.7 1 .5 1-.6 1 .7 1 .2 1-.9 1 1 1-.6 1-.3 1 .2 1 0 1 .4 1 .1 1-.1 1-.4 1-.2 1 0 1 .4 1 0 1 .3 1-.6 1-.2 1 .6 1 .2 1-.2 1 .3 1-.2 1 0 1-.4 1-.2 1 .1 1 .6 1-.4 1 .4 1-.7 1 .6 1 .2 1-.5 1 .5 1-.5 1 .1 1-.2 1 .2 1-.3 1 .7 1-.2 1 0 1 0 1 .1 1 .1 1-.2 1 0 1-.3 1-.3 1 .3 1 .5 1-.2 1-.4 1-.1 1-.2 1 0 1 .2 1 .3 1 .2 1-.1 1-.2 1-.3 1 0 1 .6 1-.3 1 .5 1-.3 1-.3 1 .2 1-.3 1 .4 1 .2 1-.4 1 .3 1 .2 1-.4 1-.1 1 0 1-.1 1 .1 1 .1 1 0 1 .1 1-.3 1-.2 1 .3 1 .3 1-.6 1-.1 1 .1 1 .4 1-.2 1 .1 1 .2 1-.1 1-.3 1-.1 1 .7 1-.1 1-.4 1 .7 1-.2 1-.2 1 0 1-.5 1 .7 1 .1 1 0 1-.1 1 0 1-.4 1 0 1 .1 1 .1 1-.5 1 .5 1-.6 1 .3 1-.1 1 .4 1 0 1 .2 1-.6 1 .1 1-.2 1 .3 1 .2 1-.1 1 .4 1-.2 1 .1 1-1.6 1 1.2 1 .5 1-.1 1 0 1-.6 1 .7 1-.5 1-.2 1 .4 1-.1 1-.5 1 .6 1 0 1-.3 1 .1 1-.3 1 .4 1 .2 1-.1 1-.4 1 .5 1-.3 1 .2 1-.6 1 .2 1 .7 1-.6 1-.3 1 .5 1-.5 1 .8 1-.2 1-.1 1-.4 1 .2 1 .6 1-.6 1-.2 1 .8 1-.3 1-.2 1-.3 1 .8 1-.9 1 .6 1-.6 1 .1 1 .4 1-.1 1-.4 1 .8 1-.5 1 .7 1-.6 1 0 1-.2 1 .7 1 .1 1-.8 1-.1 1 .2 1-.1 1 .3 1 0 1-.2 1 0 1 .1 1 0 1 .4 1-.6 1 .7 1-.6 1 .4 1 .1 1 .1 1-.3 1-.3 1 .2 1 .2 1-.2 1 .5 1-.7 1 .2 1-.5 1 .7 1-.6 1 .5 1-.4 1 .5 1 .3 1-.1 1-.2 1 .2 1-.8 1 .2 1 .2 1-.1 1-.1 1-.3 1 1 1-.3 1-.6 1 0 1 .2 1 .4 1-.7 1 1 1-.8 1-.1 1 .3 1 .5 1 0 1-.4 1 .3 1 .2 1-.9 1 0 1-.1 1 .1 1 .1 1 0 1-.1 1 .3 1 .3 1 0 1 0 1-.4 1 0 1 .6 1-.8 1 .3 1 .1 1 .1 1 0 1 0 1 .1 1 .2 1-.8 1 .3 1 .6 1 0 1-.4 1 .2 1-.5 1 .5 1-.4 1 .3 1-.7 1 .2 1-1.2 1 1.8 1-.8 1 .4 1 .1 1 1 1-1 1-.3 1 .7 1-.1 1-.2 1-.3 1 .6 1-.4 1 0 1 .3 1 0 1-.1 1-.1 1 0 1-.4 1-.2 1 .3 1-.3 1 .2 1 .4 1-.5 1 .5 1 .4 1-.2 1-.4 1 0 1 0 1-.4 1 .4 1 .5 1 .1 1-.4 1-.3 1-.1 1 .2 1 .3 1-.6 1-.1 1 .1 1 .4 1-.4 1 .2 1 .1 1-.3 1 .1 1 .5 1-.3 1 0 1-.2 1 .3 1 .1 1-.4 1 .1 1-.1 1 .4 1-.5 1 .5 1-.3 1 0 1 .1 1 .3 1 .2 1-.2 1-.3 1 .4 1 .1 1-.8 1 .5 1-.1 1-.3 1-.1 1 0 1 .5 1-.6 1 .1 1 .7 1 0 1-.1 1-.1 1 0 1-.3 1 .3 1 .3 1-.2 1 .1 1 0 1 .1 1-.4 1 .3 1-.4 1-.2 1 .3 1 .4 1-.6 1-.1 1 .1 1 .1 1 0 1 0 1-.2 1 .3 1-.1 1 .3 1 0 1-.3 1 .1 1-.4 1 .5 1-.2 1 1.2 1-.8 1-.1 1-.3 1 .2 1 0 1-.6 1 .6 1 .2 1-.6 1 .7 1-.3 1 .2 1-.4 1 .2 1 .1 1-.5 1 .2 1 .1 1-.6 1 .2 1 .4 1-.4 1 .1 1 .5 1-.4 1 .6 1-.7 1-.2 1 .5 1-.1 1-.1 1 0 1 .7 1-.6 1 .1 1 .4 1 .1 1-.5 1 .4 1 0 1-.4 1 .4 1 0 1-.4 1-.3 1 .2 1 .3 1 0 1 .2 1-.5 1 .6 1-.5 1 .4 1-.6 1-.1 1 .4 1-.4 1 .6 1-.4 1 0 1 0 1 .4 1-.8 1 1 1-.8 1 .5 1-.5 1 .2 1 .2 1 0 1-.1 1 .1 1-.6 1 .1 1 .3 1 .4 1 .2 1-.7 1 .1 1-.3 1 .7 1-.2 1-.4 1 .8 1-.1 1-.3 1 .1 1-.2 1-.4 1-.1 1 .9 1-.8 1 .5 1 .1 1 0 1-.2 1 .3 1-.4 1-.4 1 .4 1-.2 1 .7 1-.2 1 .1 1-.4 1-.3 1 .6 1-.2 1 .2 1-.2 1 .4 1-.5 1 .4 1-.2 1-.4 1 .2 1 .2 1-.2 1 .1 1 .3 1 .2 1-.4 1 .3 1-.8 1 .3 1-.2 1-.1 1 .2 1 .2 1 .3 1-.6 1 .3 1 .5 1-.5 1-.4 1 .8 1-.3 1 .1 1-.3 1 .5 1-.6 1 .1 1-.3 1 .2 1-.1 1 .4 1-.4 1 .7 1-.6 1 .4 1-.1 1 .1 1 .2 1-.4 1 .1 1-.5 1 .1 1 .7 1-.6 1-.2 1 .4 1-.3 1 .6 1-.6 1-.1 1 .3 1 0 1-.2 1-.2 1 .5 1-.2 1-.2 1 .7 1-.7 1 .5 1 .2 1-.3 1 0 1 .5 1-1 1 .2 1 .2 1 .4 1 .1 1-.2 1 0 1-.2 1-.2 1 .6 1-.3 1 0 1 0 1 .3 1-.4 1-.2 1 .6 1 0 1-.3 1 .1 1-.3 1-.1 1 .1 1-.1 1 .2 1 0 1-.4 1 .2 1 0 1 .5 1-.5 1-.2 1 .4 1 .4 1-.7 1 .1 1-.3 1 .6 1-.2 1 .3 1-.6 1 .3 1-.3 1 .3 1 .1 1-.2 1 .3 1-.5 1 .1 1 .6 1-.4 1 .4 1-.7 1 0 1 .3 1 .2 1 .4 1-.4 1 .1 1-.6 1-.1 1 .2 1 .5 1-.2 1-.1 1-.2 1-.1 1 .2 1 .4 1-.5 1 .2 1-.2 1 .2 1-.2 1 .1 1 .1 1 .4 1-.7 1 0 1 .4 1-.3 1-.2 1 .2 1 2.3 1-1.7 1-.8 1 .8 1-.1 1 .2 1-.5 1 .4 1 0 1-.2 1-.1 1-.4 1 .5 1 .3 1-.1 1-.3 1-.1 1 .6 1-.5 1 .2 1-.6 1 0 1 .2 1 .6 1-.2 1 0 1-.6 1 .3 1 .3 1-.2 1-.1 1 0 1 .1 1-.4 1 .1 1 .5 1 .3 1-.5 1 .4 1 0 1-.2 1-.5 1 .1 1-.2 1 .7 1-.2 1-.1 1-.1 1-.4 1 .5 1-.1 1-.3 1 .9 1-.4 1 .3 1-.8 1 .3 1 .4 1-.5 1 .1 1 .5 1 0 1 .1 1-.9 1 .4 1 .4 1-.6 1-.1 1 .2 1-.1 1 .1 1 .5 1-.3 1-.4 1 .6 1 0 1-.6 1-.1 1 .5 1-.4 1 .1 1 .5 1-.4 1-.3 1 .1 1 0 1 .7 1 .1 1-.5 1 .1 1-.6 1 .6 1 .2 1-.7 1 0 1 .5 1-.3 1 .1 1 0 1 .4 1-.2 1-.3 1 0 1 .3 1-.1 1 .2 1-.5 1 .4 1 .3 1-.1 1-.5 1 .5 1 .1 1-.1 1-.4 1 .1 1 .5 1-.1 1-.1 1 .1 1-.5 1 .6 1-.9 1 .8 1-.8 1 0 1 .3 1 .2 1 .4 1-.7 1 .5 1 0 1-.4 1 .4 1 0 1-.5 1 .7 1-.5 1 0 1 .3 1 .2 1-.1 1-.6 1 .4 1 0 1-.6 1 .1 1 .3 1 .4 1 0 1-.4 1 .1 1-.4 1 .4 1-.1 1 .1 1-.6 1 .2 1 .1 1 .5 1-.7 1 .1 1 0 1-.1 1 .7 1-.6 1-.1 1 .6 1-.6 1 .4 1 0 1 0 1 .5 1-.8 1 .5 1 0 1-.2 1-.2 1-.3 1 .8 1 .1 1-.8 1 .4 1 .4 1-.1 1-.8 1 .2 1 .4 1-.1 1 .2 1 .1 1-.4 1 .5 1-.4 1-.5 1 .2 1 0 1 .7 1-.6 1 0 1-.3 1 .4 1 .5 1 .1 1-.5 1-.4 1 .9 1-.6 1 0 1 .3 1-.1 1 .2 1-.4 1 .5 1-.6 1-.2 1 .5 1-.2 1-.4 1 .8 1-.4 1 0 1 .1 1-.4 1 .2 1-.2 1 .8 1-.8 1 .6 1 .2 1-.1 1 .1 1-.8 1 .3 1 .6 1-.8 1 .6 1-.7 1 .4 1 .4 1-.7 1 .5 1 .1 1-.7 1 .5 1-.2 1-.4 1 .3 1 .3 1-.1 1-.2 1-.1 1 .3 1-.3 1 .6 1 .2 1-.3 1 .2 1-.7 1-.5 1 .5 1 .7 1-.4 1 .1 1 .2 1 0 1-.4 1 .1 1 .4 1-.5 1 0 1 .5 1-.2 1 .1 1-.6 1 .1 1-.2 1 .6 1 .2 1 0 1-.5 1 0 1-.1 1-.3 1 .3 1 .4 1-.6 1 .4 1 .4 1 0 1-.6 1 .3 1-.2 1-.3 1 .8 1-.6 1 .1 1 .1 1-.4 1 .6 1 .1 1-.7 1 .2 1 .4 1-.1 1-.3 1 .6 1-.1 1-.6 1 0 1-.1 1 .9 1-.7 1-.2 1 .2 1 .2 1-.2 1 .5 1 0 1 .2 1-.9 1 .8 1-.5 1 .3 1 .1 1-.6 1 .4 1 .1 1-.2 1-.2 1 .2 1 .1 1-.4 1 .8 1-.5 1-.3 1 .4 1-.1 1-.1 1 .3 1-.6 1 .5 1-.1 1-.2 1-.3 1 .3 1-.2 1 .2 1-.2 1 .5 1-.1 1 .4 1 0 1-.6 1 .3 1-.3 1 .6 1-.1 1-.1 1-.2 1-.4 1 0 1 .3 1-.3 1 .6 1 .2 1-.1 1-.7 1 .2 1 .6 1 0 1-.5 1 .5 1-.9 1 .3 1 .5 1 0 1-.8 1 .3 1 0 1 .2 1 0 1-.2 1 .2 1 0 1-.3 1 0 1 .1 1 0 1 .3 1-.3 1 .7 1-.9 1 0 1 .7 1-.1 1-.4 1 .3 1-.3 1 .6 1-.8 1-.1 1 .7 1 .3 1-.4 1 .2 1-.6 1-.1 1 .4 1-.1 1 .1 1 .4 1-.5 1 .2 1 .2 1-.1 1-.2 1-.2 1 .1 1 0 1-.3 1 .2 1 .7 1-.8 1 .6 1 0 1 0 1-.1 1 .1 1 0 1-.1 1-.6 1-.1 1 .6 1-.4 1 0 1 .7 1-.8 1 .2 1 .4 1-.5 1 2 1-1.3 1-.6 1-.1 1 .6 1-.8 1 .1 1 .4 1 .3 1 0 1-.1 1-.6 1 .4 1-.3 1 0 1 .2 1 .3 1-.4 1 .6 1-.3 1-.4 1 .3 1-.4 1 0 1 .3 1 0 1 .1 1 0 1-.2 1 .6 1-.1 1-.8 1 .4 1-.2 1 .7 1-.8 1 .1 1 .1 1 .1 1 .1 1 .2 1-.2 1-.3 1 .6 1-.8 1 .9 1 .1 1 0 1-.1V1694Z" fill="#86c762" fill-opacity="0.15" stroke="#86c762" stroke-width="0.7" stroke-opacity="1" stroke-linejoin="round" clip-path="url(#ca)"/>
<path d="M37.3 1694V1681.1l.6 .6 .6 .9 .7 1.9 .6-3.2 .6 3.1 .6-3.5 .6 2.7 .7-1 .6-.7 .6 2.9 .6 .3 .6-3.9 .7 3.3 .6 0 .6-1 .6 .5 .6 1.1 .7-3.9 .6 1 .6 4.3 .6-5.4 .6 1.1 .7 2 .6-.7 .6 2.2 .6-.2 .6-2.8 .7 2.6 .6-1.9 .6 1.1 .6-.2 .6 .2 .7-2.3 .6-.3 .6 2.9 .6 .1 .6-2.8 .7 3.1 .6-4 .6 3.7 .6-3.5 .6 4.3 .7-2.8 .6-2.4 .6 2.2 .6-2.4 .6 1.4 .7 4 .6 .1 .6-3.2 .6-.2 .6 1.5 .7 1.1 .6-2.7 .6 2.2 .6 1.7 .6-.5 .7-.7 .6 1.5 .6-.1 .6-4.7 .6 4.6 .7-5.9 .6 2.9 .6-2.9 .6-.1 .6 5.4 .7-1.3 .6 2.1 .6-.8 .6-5.4 .6 5.2 .7-5 .6 5.2 .6 .7 .6 .3 .6-.9 .7-1.2 .6-3.4 .6 5.4 .6-1.5 .6-4 .7 .5 .6 3.6 .6-4.5 .6 5 .6-4.9 .7 3.3 .6-1.4 .6 .1 .6 .2 .6 .9 .7-3 .6 1.4 .6 3.9 .6-4.6 .6 2 .7 2.1 .6-.7 .6 1.6 .6-4.4 .6-1.9 .7 2.7 .6-1.9 .6-.5 .6-.3 .6 5.1 .7-4.2 .6 4.4 .6-3.2 .6 1 .6 2.8 .7-3 .6-.3 .6 1.6 .6 1.3 .6 0 .7-4.8 .6-.6 .6 1.3 .6 .1 .6-.1 .7-1.4 .6 1.3 .6 2.6 .6 1.2 .6-5 .7 2.8 .6 .7 .6-1.9 .6 1 .6 3.3 .7 .2 .6-5.3 .6-.7 .6 1.6 .6 1.6 .7 0 .6-1.2 .6 2.5 .6-3 .6 2 .7-1 .6 1.6 .6 .4 .6 1.1 .6-5.4 .7 2.7 .6-2.2 .6 2.7 .6 1.3 .6-2.2 .7-1.3 .6 4.8 .6-3.8 .6 .8 .6 2.3 .7-5.1 .6 4 .6 1.6 .6-.3 .6-1.4 .7-3.7 .6-.3 .6 2.9 .6-2.8 .6 .2 .7 .3 .6 4 .6-2.2 .6-2.5 .6 6 .7-5.5 .6 5 .6-4.2 .6 .6 .6 .3 .7 .5 .6 .3 .6 1.4 .6 1.3 .6-2.6 .7 1.6 .6 1 .6-3.3 .6-.2 .6-1.9 .7 3.3 .6-3.3 .6 2.7 .6 3 .6-3.5 .7-.9 .6 3.1 .6-.7 .6 1.5 .6-.2 .7-1.2 .6-3.2 .6 .7 .6-1.4 .6 2.3 .7 .4 .6 2.8 .6-2.5 .6-3.2 .6 1.7 .7-1.7 .6 5.6 .6-.1 .6-.1 .6-1.4 .7 1.7 .6-5.4 .6 .5 .6 2.7 .6-3.1 .7 3.2 .6-2.2 .6 2.3 .6-1.7 .6 1.5 .7 1.4 .6 .8 .6-5.1 .6 1.1 .6 1.6 .7-1.8 .6 .1 .6-1.2 .6 4.9 .6-4.6 .7 3.8 .6-1 .6 .4 .6-2.4 .6 .7 .7 .2 .6-1 .6 3.6 .6-2.2 .6-2.8 .7 6.1 .6-4.9 .6 2.2 .6 2.7 .6-4.8 .7 .6 .6-.1 .6 2 .6-3.7 .6-.2 .7 4.7 .6-1.7 .6 2 .6 .7 .6-2.1 .7-.5 .6-.8 .6 .1 .6-1.2 .6 2.1 .7 2.4 .6-5 .6 2.1 .6-1.6 .6 1.3 .7 2.1 .6-2.7 .6-1.4 .6-.3 .6 3.2 .7-2.1 .6 4.2 .6-3.3 .6 1.8 .6-.3 .7 2.4 .6-6.2 .6 .3 .6 .1 .6 2.3 .7 .7 .6 1.4 .6-2.2 .6 2.1 .6-3.2 .7 3.5 .6-1.1 .6-2.3 .6-1.1 .6 3 .7 1.7 .6-4.6 .6 2.6 .6-.5 .6 .3 .7-.7 .6 3.5 .6-2.5 .6 2.1 .6-1.8 .7-1.9 .6-.8 .6 1.1 .6 .8 .6 .4 .7-.2 .6 3 .6-5.5 .6 5.4 .6-3.2 .7 1.9 .6-2.7 .6 .3 .6 .4 .6 2.3 .7 .3 .6-4.7 .6 4.5 .6-2.9 .6 2.4 .7-2.6 .6-.6 .6 2.2 .6-3.4 .6 6.1 .7-.6 .6-1.4 .6 1.9 .6-5.4 .6-.6 .7 4.6 .6 .6 .6-5 .6 3.9 .6-2.9 .7 4.8 .6-3 .6 3.2 .6 0 .6-.7 .7-2.8 .6-.7 .6 2.1 .6-.1 .6-.1 .7 .1 .6 1.9 .6-2.7 .6-1.3 .6-1.4 .7 1.6 .6 1.8 .6-1.8 .6 3.4 .6-3.2 .7-1.2 .6-1.1 .6 6.1 .6-.6 .6-.8 .7-4.3 .6 5.4 .6-4.5 .6 .4 .6 4.1 .7-.9 .6 .7 .6-3.5 .6-1.3 .6 2.7 .7-1 .6 3.4 .6-4.6 .6-.5 .6 2.5 .7 .7 .6 1.2 .6 .9 .6-3.5 .6 3.2 .7-.6 .6-2.3 .6-2.8 .6 1.5 .6 .1 .7 2.3 .6-3.1 .6 3.4 .6-2.2 .6 4.1 .7-3.8 .6 1 .6-2.2 .6 4.8 .6-.1 .7-1.4 .6 1.8 .6-3.1 .6 .4 .6-2 .7 .9 .6 3.7 .6 0 .6-1.8 .6-1.2 .7 2.3 .6-1.8 .6-1.4 .6-1.8 .6 5.6 .7-.5 .6-5.6 .6 2.2 .6 2.3 .6-1 .7-3.3 .6 4.7 .6-3.7 .6-.9 .6 4.9 .7-.7 .6-2.2 .6-.1 .6 1.9 .6-2.2 .7 .3 .6 2.4 .6 .4 .6-4.5 .6 4.6 .7-1.2 .6 .4 .6-1.8 .6 2.7 .6-.5 .7-1.6 .6-1.8 .6 3.8 .6 .1 .6-5.1 .7 1.9 .6 2.7 .6-.3 .6 1.6 .6-4.3 .7 4 .6-3.7 .6-1.4 .6 3.5 .6-1.9 .7 1.1 .6-2.9 .6 5.8 .6-3.9 .6 3.6 .7-3.2 .6-2.1 .6 4.8 .6-.4 .6-5.1 .7 5.3 .6-4.7 .6 .4 .6 1.9 .6 3.1 .7-3.2 .6-1.9 .6 4.1 .6-3.5 .6 2.8 .7 .3 .6-2.4 .6-2 .6 3.7 .6-.2 .7-.4 .6-1.3 .6 .1 .6 3.5 .6-5.5 .7 4.5 .6-1.3 .6 2.6 .6-3.8 .6-1.6 .7 4.8 .6-1.2 .6 .5 .6 1.4 .6-5.4 .7 2.3 .6 1.8 .6 .3 .6 .5 .6 .4 .7-5.4 .6 2.5 .6 2.2 .6 1 .6-4.5 .7-1.1 .6 3.1 .6-1.9 .6 4.4 .6-4.6 .7 .7 .6 3 .6-2.4 .6 2.3 .6-4 .7 .1 .6 .4 .6 2 .6-1.8 .6 2.5 .7-2.9 .6-.5 .6 2.5 .6 1.3 .6 1.3 .7-4.2 .6 4.2 .6-1.5 .6-1.4 .6 .3 .7-2.8 .6 3.8 .6-1.9 .6 .1 .6 0 .7 2.3 .6-3.2 .6 4.6 .6-5.7 .6 4.1 .7-3.5 .6 1.8 .6-.6 .6 1.4 .6-3 .7 .2 .6 4 .6-2.5 .6 3.1 .6-3.8 .7 3.7 .6-2 .6-.5 .6 3.1 .6-4.7 .7 3.4 .6-3.5 .6-.9 .6 3.8 .6-3.8 .7-.1 .6-.2 .6 2.2 .6-.5 .6 1.8 .7-3.2 .6 3.7 .6 2.1 .6 .1 .6-4.4 .7 2.1 .6-2.4 .6 1.4 .6-2 .6 4 .7-4.2 .6 4.4 .6-3.1 .6-.9 .6 2.8 .7 1.2 .6 .8 .6-5.6 .6 3.3 .6-2.9 .7 2.9 .6 1.5 .6-1.8 .6 2.4 .6-2 .7 .9 .6-.4 .6 1 .6-3.3 .6 2.4 .7-2.1 .6 3.9 .6-1.5 .6 .9 .6-4.1 .7-.1 .6 0 .6 4.6 .6-3.7 .6 3.1 .7-.2 .6-.1 .6-1.6 .6-2.6 .6-.2 .7 2.2 .6 .8 .6-.7 .6 .1 .6-1.6 .7 3.5 .6 .1 .6-1.5 .6 0 .6-3.4 .7 5.1 .6-1.2 .6-.7 .6-.9 .6 3.2 .7-1.9 .6-2.9 .6 .1 .6 4.8 .6-5.6 .7 .1 .6 1.8 .6-1.9 .6 1.8 .6 .4 .7-1.5 .6 .2 .6 4.1 .6-1.3 .6-2.4 .7 .7 .6 2.4 .6-4.4 .6 2.5 .6-2.4 .7-.3 .6 .1 .6 1.5 .6 2.4 .6-2.9 .7 2.8 .6 .9 .6-.9 .6-.4 .6-3 .7 4.5 .6-.4 .6-1.1 .6-2.5 .6 4.5 .7-3.7 .6 2.8 .6-2 .6-.8 .6 1.5 .7-2.3 .6-.7 .6 3.3 .6 .1 .6 1.2 .7-4.1 .6 2.2 .6 1.3 .6 1 .6 .4 .7-1.1 .6-2 .6-.9 .6-.6 .6 4.7 .7-3.1 .6 2.4 .6-.5 .6-4.6 .6 3.6 .7-1 .6 0 .6-2.5 .6 1.9 .6-1.7 .7 3.8 .6 2.1 .6-.8 .6-3.9 .6 2.2 .7-2.3 .6 4.4 .6-1.2 .6 .1 .6-3.6 .7 4.5 .6 .3 .6-3.9 .6 1.1 .6 1.7 .7-3.3 .6 1.4 .6 3.4 .6-1.1 .6-3.1 .7-.4 .6-1.3 .6 5.5 .6-1.7 .6 1.8 .7-2.9 .6-1.2 .6 .9 .6 2.1 .6-.8 .7-2.1 .6 1 .6 2.3 .6-1.8 .6-3 .7 4 .6 .9 .6-2.7 .6 3.3 .6-4.1 .7-1.8 .6 .6 .6 3.7 .6-.4 .6-3.6 .7 3.8 .6 .2 .6-3.8 .6 3.6 .6 1.4 .7-4.4 .6 4.3 .6-3.3 .6 3.5 .6-3.8 .7 4.2 .6-3.7 .6 1 .6-2.6 .6 3.6 .7 1.5 .6-1.8 .6-4.1 .6 5.5 .6-1.3 .7 1.8 .6-1.2 .6-4 .6 4.9 .6-5.4 .7 5 .6-.9 .6 .8 .6-5.2 .6 2.4 .7-2.3 .6 3.9 .6 .5 .6 .4 .6-.5 .7 1.5 .6-4.8 .6 .3 .6 2.3 .6 1.2 .7 1.3 .6-2.5 .6-2.4 .6 3.6 .6-3.7 .7 4.9 .6-4.9 .6 .7 .6-1.6 .6 1 .7 3.7 .6-.2 .6-4 .6 2.5 .6 2.6 .7-3.4 .6-1.7 .6-.4 .6 4.4 .6-2.1 .7-.3 .6 3.1 .6-4.7 .6 4.5 .6-5 .7 .7 .6 2 .6 .9 .6 1 .6-1.4 .7 2.3 .6-1.4 .6 .2 .6-2.6 .6-.5 .7 4.1 .6-2.3 .6 2.9 .6-4.8 .6 3.1 .7-2.7 .6 .8 .6 1 .6 1.3 .6-.7 .7-2.9 .6 2 .6 3 .6-5 .6 4.8 .7-3.4 .6 1.4 .6 1.4 .6-.3 .6-2.8 .7 .8 .6 3 .6-.8 .6-2.1 .6-.6 .7 2.9 .6-4.7 .6 1.5 .6 0 .6-1.6 .7-.8 .6 .5 .6 5.5 .6-4 .6 4.1 .7-5.4 .6 2.2 .6 .8 .6-1 .6-1 .7 .1 .6 2.2 .6 .6 .6-3.7 .6 2.5 .7 0 .6 1.5 .6-2.1 .6-2 .6 4.1 .7-3.3 .6 2.7 .6 1.6 .6-5.2 .6-.3 .7-.4 .6 .7 .6 1 .6-.8 .6 4.5 .7-1.1 .6-3.4 .6 2.2 .6 3 .6-1.5 .7-2.3 .6 1.6 .6-2.2 .6 .2 .6 3.4 .7-5.3 .6 5.6 .6 .5 .6-5.1 .6 .2 .7-.7 .6 2.8 .6 1.2 .6-.1 .6-3.8 .7 3.9 .6 .2 .6-.5 .6 2 .6-4.6 .7 2.7 .6-2.8 .6 4.2 .6-.2 .6-.7 .7-2.4 .6-.4 .6 1.2 .6-3.2 .6 4.9 .7-4.7 .6 4.9 .6 .7 .6 .5 .6-5 .7-1.2 .6 3 .6 3 .6-4.6 .6 3.2 .7-2.2 .6-1.4 .6 5.2 .6-2.8 .6 1.8 .7-4.6 .6 .1 .6 4.8 .6 0 .6-1.5 .7-2.3 .6 .3 .6-1.3 .6 1.6 .6-2.2 .7 2.6 .6 2.1 .6-1.5 .6-.3 .6-2.3 .7 .7 .6 .1 .6 0 .6-.8 .6-.1 .7 2.9 .6-1.9 .6 1.7 .6-3.2 .6 4.9 .7 .2 .6-1.6 .6-.3 .6-1 .6 3.5 .7-1.7 .6 1.5 .6 .3 .6-2.7 .6 1.1 .7-1.3 .6-1.4 .6 .4 .6 .2 .6-1.5 .7 3 .6-3 .6 1.1 .6-1.7 .6 1.1 .7 3.9 .6 1 .6-4.1 .6 2.4 .6-.3 .7-.8 .6-2.1 .6 2.3 .6-1.2 .6 .3 .7 3 .6-.4 .6-2.1 .6 3 .6-1.1 .7-1.9 .6 .8 .6-1.9 .6 1.2 .6-.2 .7 .1 .6-2.4 .6 3.4 .6-.9 .6-1.7 .7 2.9 .6 .9 .6-.7 .6-1.8 .6 .2 .7-3.1 .6 3.8 .6 1.5 .6-2 .6-3.1 .7 4.4 .6 1.4 .6-1.9 .6 1.2 .6-.7 .7-2.9 .6 2.4 .6-1.2 .6-.2 .6-2.6 .7 1.7 .6 4.2 .6-1.7 .6 1.1 .6-4.1 .7 4.4 .6-3.2 .6 1 .6-2.6 .6-.7 .7 3.8 .6-2.5 .6-.9 .6 4.6 .6 .2 .7-2.6 .6 1.7 .6-1.3 .6-3.3 .6 3.4 .7-1.5 .6 4.2 .6-4.8 .6 2.5 .6-1.5 .7-.6 .6-1.7 .6 6 .6-4.2 .6 1.5 .7 .7 .6-1.1 .6 .6 .6-1.8 .6-1.5 .7 2.6 .6-2.2 .6 2.2 .6-1.7 .6 .1 .7 4.8 .6-3.9 .6-1.9 .6 4.1 .6-2.7 .7 4.8 .6-5.5 .6 3.8 .6-3.4 .6 2.6 .7 1.2 .6 .1 .6-5 .6 1.2 .6 1.4 .7-2.7 .6 4.6 .6-4.1 .6 2.1 .6-.4 .7 3.1 .6-2.7 .6-2.4 .6 3.2 .6-3.4 .7 .3 .6 5.4 .6-5 .6 2.1 .6-2.5 .7 2.1 .6 2.4 .6-2.3 .6-.6 .6 1.5 .7-3.5 .6 2.2 .6-1.2 .6 5 .6-.7 .7 .5 .6-1.7 .6-2.2 .6-.3 .6 2.7 .7-3.4 .6 1.8 .6 2.6 .6 .4 .6-.9 .7-3.4 .6 3.4 .6-1.3 .6 1.3 .6 .9 .7-5.3 .6 .2 .6 .3 .6 .9 .6 .2 .7 2.8 .6-2.9 .6 3 .6-1.2 .6 1.1 .7 1.1 .6-1.6 .6-.6 .6-2 .6 1 .7-1.9 .6 3.2 .6 2.3 .6-2.8 .6 2.8 .7-1.5 .6-4.1 .6 2.2 .6 1.7 .6-2.5 .7 2.8 .6-1.1 .6-1.1 .6-1.3 .6 1.2 .7-2.6 .6 4 .6 .8 .6-.3 .6-4.2 .7 1.8 .6-.1 .6 3 .6-.4 .6-4.1 .7 3.6 .6-3.6 .6 5.6 .6-4.6 .6 1.1 .7 2.3 .6-3.1 .6 .5 .6 2.9 .6-1.3 .7 .2 .6-3.8 .6 1.4 .6 2.8 .6-4.2 .7 2.5 .6-2.7 .6 3.4 .6 2 .6-2.9 .7 1.8 .6-.1 .6-3.2 .6-.6 .6 4.4 .7 0 .6-2.3 .6-.5 .6-1.7 .6 5.7 .7-2.4 .6-3 .6 1.7 .6 .5 .6 2.9 .7 .3 .6-1.1 .6-3.3 .6 .2 .6-1.5 .7 5.9 .6-4.9 .6 1.6 .6-1.4 .6-1 .7 2.7 .6-2.8 .6 3.2 .6 .8 .6-2.9 .7-1 .6 1.9 .6 1.6 .6-3.7 .6 3.1 .7 2.6 .6-.6 .6-3.4 .6 1.1 .6-1.3 .7-1 .6 5.4 .6-4.2 .6 3 .6 .5 .7-3.5 .6-1 .6 4.5 .6-3.9 .6 4 .7-1.6 .6 1.8 .6-2.6 .6-2.3 .6-.9 .7 3.5 .6 2.7 .6-4.6 .6 2 .6-1.8 .7 .4 .6 1 .6 2.1 .6-2.4 .6-2.2 .7 3.3 .6-3.6 .6 2.5 .6 1.9 .6-2.6 .7-1.7 .6 4.8 .6-2.8 .6 2.2 .6 1.2 .7-2.7 .6-1.2 .6-2 .6 1 .6 3.8 .7-2.9 .6-1.8 .6 1.5 .6 1 .6 2.6 .7-3.1 .6 2.3 .6-1.1 .6-2.1 .6 4.7 .7-.8 .6-2.4 .6 2.5 .6-1.6 .6 2.6 .7-2.1 .6 .5 .6-4.3 .6-.3 .6 2.4 .7 .1 .6 3.4 .6 .4 .6-5.9 .6 3.3 .7 1.4 .6 .4 .6-1.6 .6-3.5 .6 4.6 .7-5 .6 2.4 .6-1.5 .6 2.9 .6-2.3 .7-.1 .6-.5 .6 4.6 .6-5 .6 2.7 .7 .1 .6 .5 .6 .6 .6-2.3 .6 3.3 .7 0 .6 .5 .6-2.2 .6 .7 .6 1.8 .7-.7 .6-3.8 .6 3.2 .6-3.7 .6 5 .7-6 .6 1.2 .6-.6 .6 5.5 .6-5.5 .7 0 .6 5.3 .6-.6 .6-3.7 .6 3.7 .7-1.9 .6-2.6 .6 3 .6 0 .6-3.8 .7 1.6 .6 2 .6 2.5 .6-4.9 .6 2.2 .7 2.5 .6-1.9 .6 .1 .6-1.8 .6 3.3 .7-4.2 .6-1.1 .6 2.6 .6 2.3 .6-4.3 .7 .4 .6-.5 .6 1.7 .6-.7 .6 2.3 .7-3.2 .6 2 .6-.3 .6-1 .6-1 .7 2.1 .6 1 .6-3.8 .6 4.2 .6 .8 .7-5.1 .6 5.6 .6-3.6 .6 2.4 .6-3.4 .7 3 .6 .8 .6-2.3 .6-.9 .6 .8 .7-.1 .6-1 .6 4.7 .6-2.6 .6 2.7 .7-4.5 .6 4.6 .6-5.4 .6 1.6 .6 2.5 .7 .6 .6-.4 .6 .4 .6-4.2 .6 1.1 .7 2.1 .6-2.7 .6 3.2 .6-4.3 .6 .5 .7 0 .6 3.2 .6-4.4 .6 4.6 .6-1 .7 .5 .6-3 .6 3 .6-1.7 .6 .8 .7-.6 .6-.4 .6 3.3 .6-5.5 .6 .8 .7 1.7 .6 1 .6 .9 .6-2.3 .6 1.5 .7-1.2 .6 3.5 .6-5.9 .6 5.1 .6-2.5 .7-1.1 .6-1.1 .6 1 .6-.3 .6 1.5 .7 3.6 .6-2.8 .6-3.4 .6 .7 .6 1.8 .7 2.1 .6-2.9 .6-.8 .6 .6 .6 .4 .7 .4 .6 1 .6 .7 .6-2.4 .6 .2 .7-.8 .6 1 .6 2.8 .6 1.4 .6-4.4 .7 4.5 .6-5.2 .6 .7 .6 3.2 .6-3.9 .7 .9 .6-1.2 .6 1.1 .6 2.2 .6 .8 .7-1.8 .6 2.2 .6 .2 .6-3.6 .6 3.1 .7-2.2 .6 1.9 .6 1.6 .6-6 .6 4.4 .7-2 .6-.8 .6 1.3 .6 2.3 .6-2.6 .7-.5 .6 1.8 .6-3.9 .6 2.7 .6-2.5 .7 .9 .6 .5 .6 .3 .6 1.6 .6-2.7 .7 3.5 .6-.1 .6 .7 .6-4.8 .6 5.7 .7-.4 .6-.4 .6-.3 .6-3.8 .6 3.4 .7-1.8 .6-2.3 .6 3.7 .6 1.6 .6-5.9 .7 .4 .6 5 .6-1.1 .6-2.5 .6-.4 .7 .4 .6 .9 .6-.7 .6 1.6 .6 .3 .7 1.3 .6-3.3 .6 0 .6 2.8 .6-4.6 .7 3.9 .6 .6 .6-4.2 .6 .1 .6 .7 .7-.3 .6-.1 .6-.5 .6 5.8 .6-5 .7 4.1 .6-1.5 .6-.2 .6-1.7 .6 1.3 .7-2.5 .6 5.8 .6-2.6 .6-.3 .6-.1 .7 1.6 .6-2.9 .6 1.8 .6-1.1 .6-.2 .7-.3 .6-2.1 .6 4.3 .6 .3 .6 .3 .7-2.6 .6 .1 .6 2.1 .6 0 .6-.4 .7-2.7 .6-.5 .6 .5 .6 3 .6-3.7 .7 4.4 .6-3.9 .6 1.6 .6 2.5 .6-3.6 .7 2.1 .6 .7 .6-.3 .6-2 .6 1.1 .7-2.7 .6 5.4 .6-2.7 .6 .2 .6 2.4 .7-1.6 .6-.5 .6 1.4 .6-3.1 .6-.9 .7 2 .6-1.3 .6-1.7 .6 2.8 .6-2.9 .7 3 .6-1.4 .6-.3 .6-.1 .6 .9 .7-2 .6 1.1 .6 .1 .6 3.3 .6 .4 .7-2.1 .6-3 .6 1.5 .6 2.4 .6-1.3 .7-.8 .6 1.5 .6-1.5 .6-.7 .6-1.3 .7 6.2 .6-1.6 .6 .4 .6-4.7 .6 4.3 .7 .1 .6-1.6 .6-1.2 .6 4 .6-3.4 .7 1.8 .6-2.2 .6-.1 .6-1.6 .6 3.6 .7 .7 .6-1.2 .6 2.6 .6-3.3 .6 3.4 .7-.8 .6-2.4 .6 2.9 .6-1.6 .6-2.3 .7 .2 .6 1.6 .6 .6 .6-4 .6 1.6 .7-.6 .6 2.8 .6 1.3 .6-4 .6 2.3 .7 .4 .6 2.2 .6-5.6 .6 1.7 .6 1.4 .7-1 .6-2.3 .6 1.1 .6 3.9 .6-4.7 .7 4.1 .6-4.8 .6 3.2 .6 1.4 .6 0 .7-4.8 .6 4 .6-2.9 .6 3.5 .6-1.2 .7-1.8 .6 .8 .6 .8 .6 .8 .6-.1 .7 1.8 .6-4.6 .6-1 .6 1.3 .6-.2 .7 3.7 .6-2.2 .6 3.1 .6-5.3 .6 3.3 .7 2.3 .6 0 .6-4.7 .6-.3 .6 .9 .7 1.4 .6 2.2 .6 .7 .6-5.5 .6 5.1 .7-2.5 .6-1.1 .6 2.5 .6-3.3 .6 1.9 .7 .8 .6 2.1 .6-1.5 .6-1.3 .6 1.2 .7-1.9 .6 .5 .6-1.7 .6 1 .6 .1 .7 0 .6 1.5 .6 0 .6-3.9 .6 4.8 .7-1 .6-4 .6 1.1 .6 .1 .6 1.5 .7 .6 .6 .2 .6 1.1 .6-1.9 .6 1.3 .7-3 .6 3.4 .6 .5 .6-1.2 .6 2.1 .7-1.7 .6-3.8 .6 1.9 .6 1.6 .6-3.5 .7 2.2 .6 .6 .6-.1 .6-.2 .6 2.7 .7-.4 .6-4.2 .6-1 .6 5.1 .6-4.7 .7 1.8 .6-2 .6 1.7 .6-1.5 .6 0 .7 3.7 .6 .5 .6 .1 .6-2.6 .6 1.6 .7-.6 .6-.2 .6-.3 .6 2.6 .6 .9 .7-4.2 .6 4.4 .6-1.8 .6 1.5 .6-3.9 .7 1.3 .6-.4 .6 1.8 .6 1 .6-5.2 .7 .9 .6 3.2 .6-1.1 .6 1.4 .6-.2 .7-1.4 .6 3 .6-.8 .6-2.9 .6 2.1 .7-2.4 .6-1.2 .6 5 .6-3.4 .6 .6 .7 1.7 .6 1.2 .6-1.8 .6-.5 .6-1.3 .7 1.4 .6 1.5 .6-4.5 .6 2.1 .6-1.1 .7-.7 .6 0 .6-.7 .6 .2 .6 .4 .7-.1 .6 .2 .6 4.6 .6-1.7 .6-2.7 .7 1.5 .6 2 .6-4.4 .6-.1 .6 2.2 .7-1.6 .6 .7 .6 .1 .6 2.7 .6-2 .7 1.8 .6-.2 .6-1.1 .6 2.5 .6-.7 .7 .1 .6-2.6 .6-2.1 .6 5 .6-4.6 .7 1.4 .6 .9 .6 .5 .6 1.7 .6 .8 .7-1.4 .6-1.6 .6 1.2 .6-3.7 .6 4.4 .7 1 .6-5.2 .6 2 .6 0 .6-2.4 .7 3.8 .6-2.1 .6 4 .6-4.1 .6 2.6 .7-2.5 .6 1 .6-2 .6-.4 .6 5 .7-5.4 .6 4.4 .6 .9 .6-.5 .6-4.2 .7 5.3 .6-.1 .6-4.6 .6 4.5 .6-4.4 .7 .3 .6 2.1 .6 1.1 .6 .7 .6-.9 .7 .6 .6-5.1 .6 .2 .6-.3 .6 5 .7-4.6 .6 .6 .6 1.8 .6 .1 .6 .8 .7 1.8 .6-1.3 .6-1.7 .6-.5 .6 2.6 .7-1.1 .6-.3 .6-2.7 .6 .9 .6 .6 .7 3.2 .6-2.5 .6 1.6 .6-1 .6 2.2 .7-1.5 .6-3.4 .6 4.8 .6-5.1 .6 1.7 .7 1.8 .6-2.2 .6-1.3 .6 1.7 .6 .4 .7-2.3 .6 1.4 .6-.8 .6 2.4 .6-1.8 .7 .7 .6 1.5 .6-3 .6 4.1 .6-2 .7 3.3 .6-3.7 .6 .4 .6-1.3 .6 .1 .7-.2 .6 .5 .6 0 .6 3.4 .6 .6 .7-5 .6 .4 .6 4.3 .6-2.8 .6 3 .7-2.3 .6-3.5 .6 4.3 .6-4.2 .6 2.1 .7 .5 .6-2.2 .6 3.1 .6 2.2 .6-1.5 .7 .6 .6-3.8 .6 3.3 .6-2.7 .6 2.7 .7-4.3 .6 3.6 .6-.8 .6-.1 .6 .2 .7 1.1 .6 2.1 .6-4 .6 .4 .6-2.1 .7 3.2 .6-.6 .6-.9 .6 2.3 .6-3.8 .7-.6 .6 1.2 .6 .4 .6 0 .6-1 .7 2 .6 .1 .6 .1 .6-2.8 .6 1.5 .7-1.4 .6 2.5 .6 .3 .6-.2 .6-1.2 .7-1.2 .6 3.2 .6-2.8 .6 5 .6-5.1 .7 5.3 .6-.5 .6-1.4 .6-.1 .6-2.1 .7-1 .6 2.6 .6-2 .6 2.3 .6-2.6 .7 2.8 .6-1.5 .6-2.6 .6 .2 .6 2.5 .7 3.7 .6-5.5 .6 .2 .6-1.1 .6 2.6 .7 2.4 .6-3.4 .6-1.5 .6 2.3 .6 1.7 .7 .6 .6 1.4 .6-.3 .6-2.5 .6 2.7 .7-1.1 .6 .9 .6 0 .6-2.3 .6-2.2 .7-1.2 .6 6 .6-1.3 .6-4.2 .6 5.1 .7 .1 .6 .6 .6-5.3 .6-.2 .6 1.6 .7 1.1 .6-3.4 .6 5.2 .6-.8 .6-2.4 .7 1.9 .6-3.7 .6 2 .6 3.3 .6-.8 .7-1.5 .6 1.1 .6-2.5 .6 .7 .6 0 .7-.1 .6-1.9 .6 .8 .6 .7 .6-2.1 .7 .7 .6 4.5 .6-2.8 .6-1.5 .6 .7 .7 4.6 .6-2.3 .6-.7 .6-.7 .6-1.6 .7 2 .6-.4 .6-.4 .6-.9 .6-1.1 .7 2.5 .6 1.1 .6 2 .6-3.5 .6-1.1 .7 1.2 .6 .1 .6 2.5 .6-.8 .6-4 .7 5.2 .6-3.6 .6-.5 .6 .6 .6 2.9 .7-4 .6 3.1 .6-2.8 .6 4.2 .6-1.2 .7-2.5 .6 3.8 .6-3.1 .6-1.7 .6-.4 .7 .3 .6 5.4 .6-3.1 .6 1.3 .6 2.2 .7-.4 .6-4.9 .6 4.3 .6-3.2 .6-.5 .7 4.4 .6-5 .6 1.1 .6-1.2 .6 3.6 .7-1 .6 1.7 .6-1.1 .6-3.7 .6 3.5 .7-2.9 .6-.4 .6 3.3 .6-1.1 .6 1.2 .7-3.5 .6 5.3 .6-1.9 .6-3.3 .6 2 .7 .9 .6 .9 .6 1.1 .6 .7 .6-6.2 .7 1 .6-.5 .6-.3 .6 .2 .6-.2 .7 .1 .6 2.8 .6-.7 .6-2.1 .6 4.6 .7-2.3 .6 .4 .6-1.9 .6 1.3 .6 2.5 .7-1 .6-.4 .6 .4 .6-3.3 .6 1.8 .7-.2 .6-.8 .6 .7 .6-1.2 .6 4.3 .7-4.2 .6 5.1 .6-1.5 .6 .1 .6 .8 .7-1.5 .6 1.3 .6-.5 .6-4.5 .6 4 .7-3.8 .6 3.2 .6-2.8 .6 5.4 .6-.5 .7-1.2 .6-2.1 .6 .1 .6 3.7 .6-.7 .7-.9 .6 .9 .6-3.7 .6-1.7 .6 .7 .7 1.9 .6 1.3 .6-.3 .6 1.1 .6-4 .7 1.4 .6 3 .6-1.2 .6-3.5 .6 5.4 .7-5.7 .6 4 .6 1.1 .6-.4 .6 .5 .7-2.8 .6-2 .6 5.4 .6-4 .6-1.8 .7 3.2 .6 1 .6 1.3 .6-5 .6 0 .7 4.8 .6-.5 .6 0 .6-4.8 .6-.1 .7 .6 .6 2.7 .6-.3 .6 2.8 .6-2.5 .7 .3 .6 1.7 .6-5.5 .6 5 .6 .4 .7-3.1 .6 3 .6-1 .6-.5 .6-.6 .7 .2 .6-1.8 .6 2.5 .6 0 .6-.9 .7-.9 .6-.2 .6 2.8 .6 .8 .6-5.6 .7 1.7 .6 2.4 .6 .2 .6-1.9 .6 1.6 .7 1 .6-3.4 .6 4.5 .6-4.8 .6 4.3 .7-1.4 .6 2 .6-2.9 .6-2.7 .6 2.4 .7-2 .6-.3 .6 2.1 .6-1.6 .6 3.7 .7-4.7 .6 3.7 .6 2 .6-4.9 .6 4.1 .7 1 .6-3.3 .6 1.9 .6-1.3 .6-.5 .7 1.1 .6-1.1 .6 1.1 .6 1.2 .6 .5 .7 .4 .6-5.9 .6 3.3 .6 2.3 .6-4.8 .7 .4 .6 1.7 .6 1.2 .6-1.9 .6 1.6 .7 1 .6-4.9 .6 5.7 .6-1 .6-1.3 .7 1.1 .6-4 .6 2 .6 3 .6-5.4 .7 4.9 .6 .9 .6-5.3 .6 3.2 .6 1.4 .7-3.2 .6-1.5 .6 4.5 .6 .9 .6-2.8 .7-.3 .6 2.6 .6 .2 .6-2.3 .6 2.5 .7 .1 .6-2.2 .6 1.3 .6-2.2 .6 3.3 .7-3 .6-2.4 .6 .4 .6 1.3 .6 3.6 .7-3.3 .6-2.5 .6 3.5 .6-1.1 .6 2.4 .7 1.1 .6-4 .6-1.9 .6 1.7 .6 1.6 .7-1.2 .6 1 .6-1.2 .6-1.1 .6 2 .7 2.3 .6-5.3 .6 .1 .6 3.1 .6 1 .7-1.7 .6-1.8 .6 4.9 .6-.6 .6-3.1 .7-1.2 .6 5.2 .6-6 .6 .7 .6 3.7 .7-4.1 .6 5.3 .6-2.5 .6 2.5 .6-2.2 .7 .6 .6-3.8 .6 5.7 .6-5.4 .6 3.7 .7 .5 .6 1.3 .6-4.6 .6 .6 .6 4.1 .7-1.3 .6-2.9 .6 3.9 .6-3 .6 1.1 .7-.5 .6-3.4 .6 6.1 .6-.5 .6-1.6 .7-1.6 .6-1.1 .6 2.4 .6-2.7 .6 1.6 .7-.8 .6 1.2 .6 2.1 .6-.5 .6-4.6 .7 2.2 .6 .2 .6 3.1 .6-2.4 .6-1.8 .7 2.4 .6 .2 .6 1.3 .6-2.3 .6-2.8 .7 4.3 .6-2.3 .6 1.1 .6-3.1 .6 .6 .7 1.1 .6 0 .6 1 .6 1.7 .6-4 .7 3.9 .6-1.2 .6 2.6 .6-1.9 .6-2.3 .7-1.1 .6 .5 .6 3.5 .6 .1 .6-2.9 .7 2.1 .6 1.5 .6-2.7 .6-1.3 .6 .6 .7 1.2 .6-1.6 .6-.7 .6 .2 .6 1.5 .7-1 .6-1.6 .6 3.4 .6-2.3 .6 3.3 .7-2.2 .6 2 .6 1.6 .6 .1 .6-2 .7-3.6 .6 4.3 .6-.1 .6-.3 .6-.3 .7 1.6 .6-2.3 .6-2.3 .6-.5 .6 2.9 .7 .9 .6 .1 .6-1.8 .6-.2 .6 3.3 .7-1.5 .6 1.6 .6-.6 .6 .2 .6-1.2 .7-1 .6 2.6 .6 .6 .6 .1 .6-.8 .7-5.2 .6 3.5 .6 0 .6-.2 .6 .9 .7-2.1 .6-1.4 .6 2.9 .6-2.4 .6-.5 .7 5.2 .6-4.6 .6 4.4 .6-3.1 .6-.7 .7 1.2 .6-3.1 .6 3.5 .6 1.5 .6-1.5 .7-3.8 .6 5.7 .6-.4 .6-4.7 .6 5.6 .7-2.2 .6 .8 .6-4.8 .6 4.9 .6-4.6 .7 .5 .6 1.5 .6 3.5 .6-1.5 .6-3.7 .7 .8 .6 2.2 .6-1.9 .6 .5 .6-.7 .7 2.5 .6 .8 .6 0 .6 0 .6 .7 .7-1.4 .6 .1 .6 .2 .6 .8 .6-.1 .7-1.3 .6 2.3 .6-3.4 .6 .9 .6 .9 .7-1.9 .6-2.2 .6 4.3 .6 .2 .6-1.7 .7-3 .6 2.5 .6 .2 .6-.2 .6 3.4 .7-2.6 .6-3.3 .6 4.1 .6-1.4 .6-.5 .7 .8 .6-1.3 .6-1.8 .6 3 .6 2.2 .7-3.5 .6-1.8 .6 5.1 .6-4.1 .6 4.1 .7 .1 .6-2.3 .6-2.3 .6 2.3 .6-1 .7 3.1 .6-.3 .6-.5 .6 1.2 .6-2.4 .7-2 .6 3.2 .6-.4 .6 1.3 .6-4.5 .7 5.6 .6-1.1 .6-3.7 .6-.3 .6 4.5 .7-4.8 .6 .7 .6-.6 .6 1.2 .6-1 .7-.9 .6 6 .6-.6 .6-.5 .6-2.6 .7 .8 .6-2.6 .6 .8 .6 4.5 .6-1.3 .7-3.2 .6 .4 .6-1.9 .6 1.9 .6 1.6 .7-.4 .6-1.9 .6 1.9 .6 0 .6-1.5 .7 2.7 .6 1.7 .6-2.7 .6-1.8 .6 1.9 .7 2.8 .6-.8 .6 .4 .6 .3 .6 .1 .7-3.5 .6-2 .6 .2 .6-.9 .6 .8 .7-.5 .6 2.6 .6 .7 .6-2.6 .6 5.1 .7-3.5 .6-1.9 .6 1.9 .6-2.6 .6 1.6 .7 .3 .6-1.8 .6 4.9 .6-4.5 .6 2.7 .7-3.2 .6 5.1 .6 .2 .6-3.4 .6 .7 .7-.8 .6 2.9 .6-4.5 .6 5 .6 .7 .7-4.8 .6 3.4 .6-3.7 .6 4.5 .6-2.9 .7-1.8 .6 5.4 .6-4 .6 3.7 .6-5.1 .7 1.6 .6 1.8 .6 1 .6-4.7 .6 5.3 .7-.7 .6 .6 .6-5.2 .6 5.1 .6-3.7 .7 2.3 .6 1.1 .6-4.2 .6 .7 .6 4.5 .7-2.1 .6-2.6 .6-.6 .6 .5 .6 1.9 .7-1.8 .6 .1 .6 2.2 .6-3.6 .6 4.6 .7 0 .6-1.2 .6 1.7 .6-1.9 .6-2.4 .7 3.2 .6 1.1 .6-3.5 .6 .9 .6-2.6 .7 2.4 .6 2.9 .6-1.9 .6-2.1 .6-1.4 .7 4.9 .6 .9 .6-.1 .6-.3 .6-2.3 .7 1.5 .6-4.6 .6 3.3 .6-3.1 .6 0 .7 1.9 .6-2.1 .6 2.9 .6 1.9 .6-2.7 .7 2.1 .6-4.2 .6 3.6 .6 1.2 .6-.7 .7-3.5 .6 4.2 .6-.7 .6 1.6 .6-3.5 .7 .9 .6 .9 .6-1 .6-2.6 .6 .8 .7 2.5 .6-3.1 .6 1.1 .6 4.3 .6-1 .7 0 .6 1.2 .6-1 .6-4.9 .6 2.9 .7-.5 .6-.4 .6-1.6V1694Z" fill="#86c762" fill-opacity="0.3" stroke="#86c762" stroke-width="0.85" stroke-opacity="1" stroke-linejoin="round" clip-path="url(#ca)"/>
<path d="M37.3 1694V1684l.6-2.1 .6 1 .7 2 .6-1.8 .6 3.5 .6-3.2 .6 3.5 .7 0 .6-2.8 .6-.1 .6 .7 .6 .1 .7 1.3 .6-1.1 .6-1.2 .6-2.3 .6 3.4 .7-1.2 .6-1.3 .6 .2 .6 2.4 .6 1.4 .7-2.9 .6-2.2 .6 6.3 .6-.4 .6-.4 .7-3.6 .6-.4 .6 3.9 .6-.9 .6 1.2 .7-3.6 .6 .5 .6 2.1 .6-4.1 .6 3 .7 .2 .6-3.7 .6 2.6 .6 2.7 .6-4.8 .7-.4 .6 4.4 .6-4 .6 .4 .6-.2 .7-.7 .6 4.2 .6 .7 .6 1.1 .6-5.8 .7 3.9 .6-3 .6-.8 .6 1.5 .6 4.3 .7 0 .6-4 .6-.2 .6 2.4 .6-.2 .7-1.7 .6-.1 .6 .8 .6 1 .6 1.9 .7-3.8 .6 1.9 .6-2.2 .6 .3 .6 3.8 .7 .1 .6-3.9 .6 3.6 .6-3.5 .6-1.9 .7 3.6 .6 .5 .6-2.6 .6-1.4 .6 4.4 .7 1.3 .6-5.8 .6 4.1 .6-4.5 .6 3.8 .7 .6 .6-2.4 .6 .9 .6 2.8 .6-.2 .7-5.1 .6 4.8 .6-.9 .6-1.2 .6-2.7 .7 2.3 .6-2 .6 2.1 .6 3.2 .6-2.7 .7-2.5 .6 2.9 .6 .8 .6 1.8 .6-4.8 .7 1.2 .6-1.1 .6-.9 .6 4.8 .6-1.8 .7-1.3 .6 2.4 .6-4.7 .6 1.4 .6 1 .7-1 .6-1.5 .6 3.8 .6 1.1 .6 1.4 .7-1.9 .6 1.3 .6-.1 .6-1.7 .6-3 .7 5.2 .6-5.7 .6 1.2 .6 4.3 .6-6 .7 2.6 .6 1 .6 2.7 .6-3.4 .6 1.7 .7-.3 .6-1.8 .6 .3 .6-1 .6 3 .7-4.1 .6 .8 .6 2.7 .6-4.1 .6 1.1 .7 3.4 .6-2.2 .6 .7 .6 .3 .6-1.4 .7 4.4 .6-.7 .6-.2 .6-5.4 .6 6.2 .7-5.4 .6-.3 .6-.5 .6 2 .6-1.3 .7-.8 .6 2.9 .6-2.4 .6-.2 .6 5.5 .7-3.8 .6-.3 .6 2.9 .6-2.5 .6 1.1 .7 .5 .6 1.2 .6-3.1 .6 4.5 .6-1.1 .7 1.2 .6-1.5 .6-4.1 .6-.7 .6 3.8 .7-3.7 .6 1.2 .6 4.1 .6-1.7 .6-1.6 .7 4.1 .6-2.2 .6-3.7 .6 .7 .6-.8 .7 1.7 .6 2.9 .6-1.7 .6 2.5 .6-2.8 .7 2.6 .6-4.9 .6 2.2 .6-.3 .6-.6 .7-1.4 .6-.4 .6 4.2 .6-1.8 .6 1.6 .7-2.6 .6 3.1 .6-3.7 .6 4.7 .6-1 .7-1.4 .6-.3 .6-.7 .6 .4 .6 3.6 .7-5.5 .6-.6 .6 3.5 .6 1.6 .6-4.3 .7 1.8 .6-1.5 .6-1 .6 5.9 .6-1.7 .7-.8 .6-1 .6-.9 .6 2.2 .6 .7 .7-.1 .6-4 .6 1.2 .6 3 .6-4.1 .7 1.4 .6 2.9 .6 .4 .6-2.3 .6-.5 .7 1.2 .6-2.4 .6 4.8 .6-1.5 .6-3.1 .7 3.3 .6 .7 .6-2.1 .6 2.9 .6-5.6 .7 2.1 .6 1.7 .6-4.4 .6 5.2 .6 0 .7-3 .6 .9 .6-1.3 .6 3.3 .6 1.1 .7-.7 .6 .7 .6-5.6 .6 3.1 .6-3.7 .7 1.2 .6-1 .6 5.5 .6-3.2 .6-.3 .7-1 .6-.4 .6 2.9 .6 1.4 .6-2 .7-1.5 .6 1.8 .6-.6 .6 3.3 .6-.4 .7-2 .6-1.8 .6-.9 .6 1.1 .6 4 .7-6 .6 4.9 .6-3.9 .6 1.7 .6-1 .7-.4 .6 3 .6-2.8 .6 1.9 .6-3.1 .7-.1 .6 5.8 .6-.1 .6-.4 .6-2.4 .7 .1 .6-.2 .6 .9 .6-3.4 .6 4.1 .7-3.8 .6 4.1 .6-2.6 .6 .5 .6 1.9 .7-1.9 .6-.5 .6-2.4 .6 3.5 .6-3.2 .7-.2 .6 .4 .6 5.2 .6 .3 .6-.7 .7-3.2 .6-.2 .6 0 .6 .6 .6 1.2 .7 .8 .6 1.1 .6-5.1 .6 3.7 .6-3.3 .7 4.5 .6-4.5 .6 3.6 .6-3.1 .6 1.9 .7 .6 .6 2.4 .6-5.9 .6 5.1 .6-3.8 .7 .1 .6-.8 .6-1.1 .6 5.8 .6-3.1 .7 3.4 .6-4 .6-1 .6 1.9 .6 2.2 .7 .4 .6-4 .6 1 .6 .9 .6-.2 .7 2.6 .6 .3 .6-3 .6 2.9 .6-5.7 .7 .5 .6 3.1 .6-.1 .6-.3 .6-.1 .7-1.4 .6 1.3 .6-1.4 .6 2.4 .6-1.4 .7 1.4 .6-1.4 .6 1.7 .6-.9 .6-1.1 .7 3.3 .6-4.4 .6 .3 .6 1.4 .6 2.6 .7 0 .6-2.9 .6-.8 .6 .2 .6 3.4 .7-.4 .6-1.4 .6-3.4 .6 .8 .6-.9 .7 .7 .6 2.6 .6-3.1 .6 2.5 .6-1.9 .7 3.2 .6-1.3 .6-1.1 .6-1.2 .6 3.7 .7-3.2 .6 3 .6-1.9 .6 2.9 .6-.2 .7-2 .6 .7 .6-3.5 .6 1.5 .6 3.8 .7 0 .6-1.1 .6 .1 .6-3.8 .6 1.3 .7 3.8 .6-2.1 .6-.7 .6 1.2 .6 1.3 .7-4.7 .6 4.5 .6-2.2 .6-2.4 .6 5 .7-4.5 .6 0 .6 .6 .6 2.8 .6-2.7 .7-1.9 .6 4.9 .6-1.9 .6 .9 .6-.1 .7-.3 .6 1.4 .6-2.2 .6-1.2 .6 3.3 .7-2.9 .6 .1 .6 3.6 .6-1.2 .6-4.4 .7 .2 .6 3.9 .6-2.5 .6-1 .6 2.3 .7 2.1 .6-1.2 .6 .8 .6 1.3 .6-4.3 .7 1.1 .6 1.6 .6-1.4 .6 2.4 .6-3 .7 3.9 .6-1.3 .6-1.4 .6-.8 .6-.6 .7-.3 .6-1 .6 3.1 .6 2 .6-3 .7-.2 .6 1.8 .6-4.3 .6 5.3 .6-1.8 .7 .2 .6-1.3 .6 1.3 .6-1 .6-1 .7-.4 .6 .7 .6 .3 .6-.8 .6 3.5 .7-4.8 .6 4.1 .6 .2 .6-2.5 .6 1.2 .7-2.2 .6 .3 .6-.2 .6 .5 .6 3 .7-4.1 .6 4.1 .6-4 .6 4.1 .6-4.9 .7 5.9 .6-3.2 .6-1.7 .6-.2 .6 3.3 .7-2.3 .6-1.8 .6-.2 .6 2.6 .6 .7 .7-1.2 .6 2.3 .6 1.6 .6-3.2 .6-2.6 .7 .5 .6 2.3 .6 2.9 .6-3.5 .6-.7 .7 4.3 .6 .2 .6-.3 .6-5.3 .6 .6 .7 1.8 .6-.9 .6-1.7 .6 2.1 .6 .7 .7 .6 .6-1 .6-2.4 .6 2.3 .6 1.7 .7-1.4 .6-1.5 .6 1.5 .6 2.9 .6-2.1 .7-.4 .6 2.3 .6-5.3 .6 .6 .6 2.5 .7 1.3 .6-2.9 .6-.3 .6 3.9 .6-3.5 .7 3.8 .6-2 .6-.2 .6-1.4 .6-1.8 .7 5.3 .6-.4 .6-4.8 .6 2.3 .6 2.4 .7-5 .6 1.6 .6-1.4 .6-.4 .6 4.7 .7-2.6 .6 .5 .6 1.3 .6-1 .6 1.3 .7 2 .6-2.5 .6-2.2 .6 1.6 .6 .9 .7-1.4 .6 2.1 .6-1.4 .6-1.2 .6 3.8 .7-2.4 .6-.1 .6-1 .6 1 .6 2.5 .7-5.1 .6 4.7 .6-3.5 .6-.6 .6 4.7 .7-1.1 .6-4.4 .6 2.2 .6-2.1 .6 1.2 .7 .7 .6-2.3 .6 1.8 .6 4.3 .6-3.3 .7-.3 .6 2.3 .6-3.8 .6 1.2 .6 3.3 .7-4.5 .6 1 .6 3.7 .6-4.5 .6-.5 .7-.9 .6 .2 .6 4.7 .6-2.4 .6 3.7 .7-1.4 .6-4 .6 2.9 .6-2.9 .6-.3 .7-.5 .6 3.2 .6 2 .6-4.2 .6 4.8 .7-3.7 .6 2.6 .6-2.2 .6 3.6 .6-3.7 .7-1.8 .6 1.9 .6-1.6 .6 1.3 .6-2.2 .7 .9 .6 .5 .6 4.3 .6-1.1 .6-2.7 .7 1 .6-2.4 .6 1.7 .6 1.1 .6-2.8 .7 1.2 .6 4.6 .6-2.8 .6-1.6 .6 .5 .7-1 .6 2.1 .6 .8 .6 .8 .6-1.1 .7 1.5 .6-.4 .6 1 .6-3.9 .6 1 .7-2.7 .6 2.7 .6 1.5 .6 .2 .6-4.7 .7 .1 .6-.3 .6 1.2 .6 1 .6-1.9 .7 1.2 .6 3.3 .6-3.8 .6 .6 .6-1.6 .7 1.2 .6 2.4 .6 0 .6-1.2 .6-2.3 .7 1.2 .6 1.2 .6 2.1 .6-2.2 .6-1.4 .7 .8 .6-1.7 .6 .7 .6 2.9 .6 2 .7-5.7 .6 4.7 .6-2.5 .6 3.8 .6-4.8 .7 2.7 .6-3 .6 .8 .6 3.4 .6-2.1 .7 .6 .6 1.4 .6-1.3 .6 1.6 .6-1.4 .7 .4 .6-3 .6-.6 .6 4.2 .6 .8 .7-5 .6-.3 .6 4.2 .6-2.8 .6 3.7 .7-.6 .6 .3 .6-3.2 .6 1.9 .6 .5 .7-.6 .6-3.8 .6 4.9 .6-2 .6-.6 .7 .5 .6 2.4 .6-.2 .6-1.2 .6-2.7 .7 2.6 .6 1.8 .6-1 .6-3.2 .6 4.8 .7-3.2 .6 2.1 .6-1.7 .6 2.1 .6 .7 .7-3.2 .6 .7 .6-.2 .6-.7 .6 0 .7-2.1 .6 1.2 .6 2 .6-1.4 .6-1.1 .7 1.3 .6-1.8 .6 2.1 .6 0 .6 1.1 .7 1.4 .6-4 .6 3.1 .6-3.7 .6 3.4 .7-2.1 .6 1 .6-3 .6 1.3 .6-.2 .7-.2 .6 3.4 .6-3 .6-1.1 .6 2.8 .7-1.6 .6 1.6 .6 1.3 .6-1.9 .6 1.3 .7-2.8 .6 4 .6 1.1 .6-3 .6 2 .7-.5 .6-1 .6-3.3 .6 1 .6-.5 .7 4.4 .6-.6 .6 .4 .6-4.9 .6 5.8 .7-5.8 .6 1.5 .6-.9 .6 0 .6 1.6 .7 2 .6-1.3 .6-.1 .6-2.5 .6 .6 .7 1.6 .6 3.7 .6 0 .6-2.9 .6 .9 .7 1.4 .6-3.3 .6 1.2 .6 2.4 .6-4.4 .7 .7 .6 3 .6-4.4 .6 .1 .6 3.9 .7 .8 .6-5.1 .6 5.5 .6-5.6 .6 1.6 .7 3.8 .6-5.5 .6 5.1 .6-4.4 .6 1 .7 .6 .6 1.2 .6 .9 .6-2.6 .6 1.8 .7 1.2 .6-5.1 .6 3 .6 .1 .6-2.4 .7 1.9 .6-2.3 .6 3.3 .6 1.2 .6 1.2 .7-4.2 .6-.5 .6 2 .6-2.6 .6 4.7 .7-2.4 .6 3.1 .6-5.5 .6 .6 .6 1.1 .7 1.4 .6-1 .6-.7 .6 3.7 .6-3.9 .7 3.9 .6-4.3 .6 4.5 .6-.8 .6-4.6 .7 4 .6-1.3 .6 .5 .6 1.1 .6-3.8 .7 3.3 .6 1.2 .6-2.7 .6-.2 .6 2.1 .7-3.9 .6 2.2 .6 2 .6-2.5 .6-.2 .7 1.3 .6-1.8 .6-1.4 .6 5.7 .6-.7 .7-2.3 .6 2.6 .6-2.3 .6 2.4 .6-5.8 .7 2.1 .6 3.7 .6-4.9 .6-.4 .6 4.7 .7-4.4 .6 3.3 .6-.7 .6-2.6 .6 4.8 .7-4.3 .6-1.1 .6 1 .6 3.7 .6-3.5 .7 3 .6-2.9 .6 4.5 .6-3.8 .6 3 .7-2.7 .6 1.6 .6-2.6 .6-1.5 .6 3.6 .7 1.3 .6-2.2 .6-.6 .6 2.4 .6-4.1 .7 4.7 .6-2.4 .6 1.9 .6-2.8 .6 4.4 .7-4.9 .6 .9 .6 3.2 .6-3.6 .6 1.2 .7 2.4 .6-2.9 .6-2.2 .6 2.6 .6-.4 .7-1.3 .6 .6 .6-.3 .6 2.3 .6-1 .7 1.7 .6-1.1 .6 1.1 .6 1.3 .6-3 .7 3.2 .6-2.5 .6 2.7 .6-.3 .6-4.9 .7 1.7 .6 1.1 .6-2 .6-1.9 .6 1.1 .7 2.7 .6-1.6 .6 1.7 .6-1.8 .6-.6 .7-1.3 .6 2.3 .6 .9 .6 .5 .6-.2 .7 1.6 .6-1.1 .6-.2 .6 1.7 .6-4.3 .7 2.6 .6-1 .6-.6 .6 3.6 .6-3 .7 2.8 .6-4.7 .6 3.8 .6-4.3 .6 4.3 .7-.7 .6 .3 .6-2.6 .6 2.9 .6 1.4 .7-2.7 .6-1.2 .6-1.1 .6-.5 .6 2.9 .7-1.2 .6-.6 .6 3.7 .6-4.1 .6 1.2 .7 1.4 .6-2.5 .6 4.3 .6-2.9 .6-1.6 .7 1.3 .6 1 .6-1.3 .6 1.9 .6-1.2 .7-1.3 .6-1.4 .6 2.6 .6 3.3 .6-4.5 .7 4.4 .6-5.7 .6 .5 .6 3.2 .6-1.7 .7 2.6 .6-2.2 .6 1.6 .6 0 .6-.6 .7-1.4 .6 2.5 .6-1.6 .6-.3 .6-2.3 .7 4.3 .6-1.3 .6-2 .6 .4 .6-.3 .7 2.5 .6-3 .6 2 .6 0 .6-3.2 .7 3 .6 .4 .6 1.5 .6 1 .6-3.5 .7 2.5 .6-5 .6 1.4 .6 4.7 .6-.9 .7-2.5 .6 1.8 .6-2.9 .6 3 .6-2.6 .7 3.3 .6-.4 .6-2.1 .6 2 .6 1.4 .7-4 .6-.6 .6 .6 .6-1.8 .6 3.5 .7 1.3 .6 .8 .6-4.1 .6-.5 .6-1.4 .7 4.4 .6-.6 .6-.8 .6 2 .6-1.5 .7 1.7 .6-4.9 .6 3.9 .6-.1 .6-4 .7 3.3 .6-2 .6 3.3 .6-2.9 .6-1.3 .7 4.7 .6 .2 .6-1.3 .6-.6 .6-.9 .7 .6 .6 1 .6 .8 .6-3.6 .6 1.5 .7-.4 .6-1.1 .6-1 .6 5.9 .6-1.8 .7-.8 .6-3.3 .6 2.3 .6-2.5 .6 .2 .7 5.7 .6-5.1 .6 3.7 .6-2.7 .6 2.2 .7-.9 .6-2.9 .6 1.5 .6 2.8 .6-.3 .7-.4 .6 1.5 .6-4.4 .6 .6 .6 .2 .7 1.8 .6-2.3 .6 0 .6 .7 .6 3.7 .7 .3 .6-3.7 .6-1.7 .6 3.3 .6-3.4 .7 4.5 .6-.1 .6 .3 .6-.6 .6-3.2 .7 3.3 .6-3.5 .6 1.3 .6-1.8 .6 .4 .7 3.3 .6 1.4 .6-2.9 .6-2.8 .6 5.7 .7-4 .6-.3 .6 3.3 .6-1.7 .6 2.4 .7-3.2 .6-.2 .6 2.6 .6-2.8 .6 3.7 .7 .5 .6-5.9 .6 4 .6 .2 .6 0 .7-1.4 .6-1.9 .6 1.6 .6 2.4 .6-4.1 .7-.3 .6 3.9 .6 1 .6-4.3 .6 1.9 .7 2.1 .6-4.7 .6 4.5 .6 .8 .6-5.5 .7 3.9 .6 .4 .6-1.9 .6 .8 .6 .7 .7-2.9 .6 .2 .6 1.5 .6-.3 .6-2.2 .7 .1 .6 1.8 .6 .6 .6-.8 .6-.2 .7-.9 .6 3.4 .6 1.4 .6-2.9 .6 1.3 .7-.2 .6 .7 .6-1.2 .6-3.6 .6 .8 .7 3.4 .6-2.9 .6 4 .6-3.7 .6 4.1 .7-1.2 .6 1.5 .6-1.8 .6-2.1 .6-1 .7 4.7 .6-.6 .6-3.8 .6 4.7 .6-6 .7 3.9 .6-.2 .6-3.9 .6 2.5 .6-1.9 .7 .8 .6 0 .6 .6 .6 .3 .6 .5 .7 1.2 .6 .3 .6-3.8 .6 4.8 .6-5.2 .7 1.8 .6-.2 .6-.7 .6-.4 .6 1.4 .7 3 .6-.9 .6-1.4 .6-.7 .6 2.8 .7-1.1 .6-1.8 .6-1.4 .6 3.3 .6-1.1 .7-2.9 .6 5.3 .6-3.6 .6-.7 .6 .9 .7 1.3 .6 .7 .6 1.5 .6-.9 .6 0 .7-2.2 .6 2.5 .6-2.2 .6 .3 .6-2.9 .7 .5 .6 5.4 .6-2.1 .6-.9 .6-2.4 .7 .5 .6 4.3 .6-5 .6 3.7 .6 2 .7-3.6 .6 2.4 .6-2.9 .6 2 .6-1.7 .7 1.3 .6 .1 .6 2.7 .6-.6 .6-4.8 .7 1.2 .6 2.5 .6-.4 .6-.5 .6-3.7 .7 .9 .6-.2 .6 .8 .6 3.4 .6-4.1 .7 3.2 .6-1.8 .6 1.3 .6-.3 .6-1 .7 .9 .6 2 .6-3.5 .6-.1 .6 .5 .7 1.7 .6-3.1 .6-.6 .6 1.4 .6 1.3 .7 1 .6-3.4 .6 3.9 .6 .3 .6-4.4 .7 0 .6 3.6 .6 1.1 .6-1 .6-2 .7 1.7 .6 1.7 .6-3 .6 1 .6 .1 .7 1 .6 1.3 .6 .5 .6-5.5 .6 2.2 .7 1.2 .6 1.3 .6-1.4 .6-2.7 .6-1.1 .7 3.4 .6 .8 .6-2.2 .6-1.7 .6 5.5 .7-5.7 .6 .4 .6 0 .6 2.3 .6-1.6 .7 4.2 .6 0 .6-1.3 .6-.1 .6-1.1 .7-.6 .6 3.3 .6-5.4 .6 3 .6 1.6 .7 1.3 .6-3.6 .6-2.4 .6 1.1 .6 1.2 .7 2.2 .6-3.4 .6 3.4 .6-.3 .6-3.3 .7 1.6 .6-.3 .6 .1 .6 1.3 .6-1 .7-.6 .6-2 .6 1.5 .6 4.2 .6-4.7 .7 .8 .6 3.4 .6-3.2 .6-1.5 .6 5.6 .7-2.1 .6-2.3 .6 .8 .6-1 .6 4.5 .7-3.4 .6-.8 .6 2.3 .6 1.4 .6-2.2 .7 1.5 .6-1.3 .6-3.7 .6 5.6 .6-5.2 .7 2.5 .6 3 .6-1.8 .6-2.3 .6 3.5 .7-4.2 .6 5.2 .6-1.2 .6-3.5 .6 4.3 .7-4.6 .6 1.2 .6 3.4 .6-4.2 .6 1.6 .7 2.9 .6-1.9 .6-.4 .6 1.5 .6-5 .7 4.5 .6-2.7 .6 .3 .6-1.6 .6 5.2 .7-4.2 .6-.8 .6 3.4 .6-1.3 .6 1.9 .7-3.8 .6-.2 .6 2 .6-2.9 .6 .3 .7 5.5 .6-1.1 .6-3 .6 2.7 .6-1.9 .7 2.3 .6-1.5 .6-.9 .6 0 .6 1.4 .7-2.3 .6 3.3 .6-4.2 .6 0 .6 3.7 .7-1 .6-.4 .6-1.3 .6 3.1 .6-2.5 .7 3.5 .6-4.7 .6-.9 .6 .4 .6 2.8 .7 .2 .6 1.5 .6-5 .6 5.1 .6-4.7 .7 2.7 .6-2 .6 1.5 .6-2.4 .6 2.2 .7 1.6 .6-2.7 .6-1.2 .6 .3 .6 1.1 .7-.7 .6 2.4 .6 1.4 .6-.6 .6-2.4 .7 2.4 .6 2 .6-5.8 .6 .6 .6 1.4 .7 1.3 .6-2.1 .6 1.1 .6-2.3 .6 .3 .7 4.2 .6-3.7 .6 1 .6-.9 .6 4.9 .7-.3 .6-5.6 .6 3.5 .6 .6 .6-.9 .7-2.5 .6 3.3 .6-2.9 .6 .8 .6-.7 .7 0 .6-.9 .6 5.4 .6-5.8 .6 2.5 .7 .7 .6-.6 .6-1.3 .6 .2 .6-1.5 .7 5.5 .6-2.9 .6-2.3 .6 1.6 .6 1.6 .7 1.3 .6-2.5 .6-1.7 .6 5 .6 .5 .7-2.3 .6 1.3 .6-3.9 .6 2.7 .6 1.8 .7-1.5 .6 .6 .6 .2 .6-.3 .6-3.8 .7 .9 .6-1.8 .6 2.4 .6 .9 .6-2.7 .7 0 .6 3 .6-1.1 .6 2.6 .6-5 .7 4.7 .6-1.4 .6 .4 .6-1 .6 .8 .7 .7 .6 1.7 .6-.9 .6-4 .6-.6 .7-.2 .6 5 .6-1.1 .6-2.9 .6 4.7 .7-3.8 .6 1.2 .6-2.1 .6 2.5 .6-2.4 .7 2.6 .6-2.5 .6 2.3 .6-3.4 .6-.6 .7 1.4 .6 4.9 .6-1.2 .6-1.2 .6 1.8 .7-.6 .6 .9 .6-1.4 .6-1.6 .6-.3 .7-2 .6 2.9 .6-1.4 .6-.1 .6 .9 .7 1.1 .6-1.3 .6-1.2 .6-.6 .6-.3 .7 .5 .6 4.5 .6-.8 .6-3.6 .6-.7 .7 .7 .6 1.4 .6 1.3 .6 .7 .6-.4 .7-3.6 .6 3.7 .6 1.9 .6-1.7 .6-2.2 .7 3.2 .6-4.1 .6 .6 .6-1.5 .6 5.2 .7-5.5 .6-.2 .6 3.5 .6 0 .6-1.4 .7-1 .6 2.8 .6 .9 .6-3.6 .6 2 .7 0 .6 2.3 .6-3 .6-.1 .6-.3 .7 .9 .6-2.5 .6 5.1 .6-3.1 .6 2.3 .7 .6 .6-.4 .6-2.2 .6-.7 .6 .6 .7 1 .6 1.4 .6-2.2 .6 .5 .6-3.3 .7 2.1 .6 3.3 .6-1 .6-1.8 .6-2.7 .7 5.6 .6 .6 .6-1.5 .6-.9 .6 .9 .7 .3 .6-1.7 .6 1.8 .6-3.1 .6 2.8 .7-4.3 .6 5.6 .6-2.5 .6 2.4 .6-4.6 .7 3.4 .6-3.3 .6 3.6 .6 .9 .6-1.7 .7-4.1 .6 5.5 .6-2.5 .6 1.4 .6 1 .7-5.4 .6 3.1 .6-.1 .6-1.4 .6 0 .7 .5 .6-1.6 .6 3 .6-1.3 .6-1.4 .7 3.8 .6-4.3 .6 4.2 .6-.5 .6-2.7 .7 1.9 .6 1.8 .6-.3 .6-2.5 .6 2.7 .7 .2 .6-1.3 .6-2.7 .6-.1 .6 2.3 .7 .9 .6 .9 .6-5.3 .6 .1 .6 4.6 .7 .8 .6-4.6 .6 1.6 .6 1.8 .6 1.3 .7-3.6 .6 0 .6 2.1 .6-1.6 .6 1.3 .7-1.8 .6-.4 .6 1.8 .6 .5 .6 .7 .7-1.8 .6 1.2 .6-2.8 .6 1.9 .6 1 .7-3.7 .6 1.1 .6-.4 .6 3.1 .6-.9 .7-1.9 .6 1.4 .6 .8 .6-.9 .6-.6 .7 .5 .6-.7 .6 1.7 .6-1.9 .6 3.1 .7-3.9 .6 .7 .6 3.1 .6-1.1 .6 1.2 .7-2.1 .6 1.8 .6 .4 .6-.3 .6-4.2 .7 .6 .6 2.5 .6 2.2 .6-.1 .6-1.6 .7-1.9 .6 .5 .6 .1 .6 .8 .6-3.3 .7 3.6 .6-1.3 .6-1.6 .6 4.8 .6-2.9 .7 2.7 .6-1.6 .6 .3 .6-1 .6 .2 .7-.8 .6-2.1 .6 .7 .6 1.2 .6-.3 .7 2.4 .6 0 .6 0 .6-3.1 .6 2.1 .7-2.4 .6 .8 .6-.7 .6-.1 .6 3.8 .7-1.2 .6-2.3 .6 3.3 .6-3.4 .6 2.6 .7 2 .6-4.6 .6 3.9 .6-2.6 .6 1.9 .7-2.3 .6-1.7 .6 .1 .6 3.8 .6-3.9 .7 3.7 .6-1.8 .6 .3 .6 1.9 .6-2.8 .7 .6 .6 1.5 .6 .3 .6-1.9 .6 3.4 .7-3.2 .6-1.2 .6 1.3 .6-2.3 .6 4.1 .7-1.6 .6 1.7 .6-2.4 .6 2.2 .6-.1 .7-4 .6 5.2 .6-2.4 .6 .3 .6-2.9 .7-.2 .6 .7 .6 4.8 .6-1.7 .6-.9 .7-1.7 .6 0 .6-.8 .6 3 .6-.1 .7 .5 .6 1.5 .6-.8 .6-.1 .6-3.9 .7 3.4 .6 .2 .6-.5 .6-.4 .6 1.9 .7 .9 .6-4.3 .6 .7 .6 3.2 .6 .5 .7-4.5 .6 2.1 .6-3.1 .6 4.2 .6-1.7 .7-2.7 .6 4.3 .6 1.2 .6-5.2 .6 4.5 .7-4 .6 3.9 .6-.6 .6-.6 .6 .9 .7 .3 .6-2.4 .6 3 .6-3.6 .6 2.1 .7 .5 .6 1.1 .6-4 .6 .3 .6-.3 .7-.4 .6 3.1 .6-3.9 .6 3.6 .6 1.2 .7-3.5 .6-1.2 .6 2.7 .6-.9 .6-2 .7 2.4 .6 .2 .6-.2 .6 2.7 .6-5 .7 4.6 .6-2.7 .6 3.2 .6-1.4 .6-3.4 .7 3 .6-1.9 .6 2 .6 1.9 .6-.5 .7-2.2 .6-2.4 .6 2.8 .6-.8 .6-1.6 .7-1.2 .6 3.7 .6 1.7 .6-2.2 .6 .5 .7 1.2 .6-2.4 .6-2.6 .6 5 .6-2.9 .7 3.4 .6-.4 .6-2.9 .6 3.6 .6-1.9 .7 1.9 .6-5.3 .6 2.9 .6 0 .6 1.6 .7-3.8 .6 .8 .6-1.4 .6 .1 .6 1 .7 .6 .6-.8 .6 1.6 .6-1.4 .6 4.3 .7-3.5 .6-2.3 .6 4.9 .6 .5 .6-2.7 .7-.3 .6 2.3 .6 .1 .6-.7 .6 1.3 .7-3.6 .6 0 .6 1.4 .6-1.8 .6 3.8 .7 0 .6-.3 .6 .2 .6-.7 .6-2.1 .7 1.9 .6 .2 .6 0 .6-3.2 .6 2.1 .7-3 .6 3.6 .6-3 .6-1.1 .6 4.5 .7 .1 .6-.9 .6-2.2 .6 3.8 .6-1.5 .7-.1 .6-2.3 .6 3.8 .6-4.9 .6 1.2 .7 0 .6 .3 .6-.4 .6 .8 .6-1.9 .7 .4 .6-.3 .6 3.2 .6-.7 .6 .4 .7 2.1 .6-5.3 .6 3.4 .6 .5 .6 .9 .7-2.6 .6 3.5 .6-4.5 .6 .5 .6-1.7 .7 1.9 .6 1.3 .6 1 .6-.6 .6-.1 .7 1.8 .6-3.4 .6 2.8 .6 .7 .6-5.5 .7 1.7 .6-1.6 .6 2.3 .6-.2 .6-1.2 .7 .8 .6 1.2 .6 2.5 .6-3.2 .6 3 .7-.7 .6 1 .6-4.6 .6 3.3 .6-.8 .7-2 .6 .8 .6 1 .6-2.1 .6-.3 .7 1.9 .6-2.5 .6-.4 .6 .2 .6 1 .7 2.5 .6-1.5 .6 .2 .6 .1 .6 .2 .7-.8 .6-.6 .6 2.6 .6-.8 .6-1.2 .7 3.5 .6-1.3 .6-.7 .6-2.3 .6 2.6 .7-1.5 .6 3.8 .6-2.7 .6 0 .6-2.1 .7 1.3 .6 .9 .6 .2 .6-2.7 .6 3.7 .7-1.7 .6-.1 .6-2 .6 3.2 .6-1.2 .7 2.8 .6-4.7 .6 3.3 .6-2.6 .6 3.3 .7-.2 .6-.4 .6-.1 .6-.1 .6-3 .7 5.1 .6-3.8 .6 2.3 .6 .3 .6-3.6 .7 1.4 .6 .6 .6-3.3 .6 .7 .6 3.8 .7 .2 .6-4.4 .6 3.9 .6 .5 .6-1.1 .7 .6 .6-3.7 .6 2.6 .6-1.3 .6 1.3 .7-1.9 .6 1.5 .6 0 .6 2.7 .6-2.8 .7-.7 .6 2.2 .6-3.8 .6 1.1 .6-1 .7 .6 .6 5.1 .6-.7 .6 0 .6 .7 .7-2.5 .6 .2 .6-3.1 .6 3.2 .6-2.2 .7-.2 .6 .6 .6 1.9 .6 1.3 .6-3.6 .7 1 .6-1.5 .6 3.7 .6-4 .6 4.7 .7-4.7 .6 3.7 .6-2.9 .6-.5 .6 .4 .7 3.5 .6-.4 .6-4.2 .6 4.3 .6-.3 .7-3.1 .6 1.8 .6-2 .6 4.6 .6-4.1 .7 3.4 .6-1.2 .6 0 .6 .5 .6 .2 .7 0 .6 0 .6-.4 .6-2.5 .6 .5 .7 2.1 .6-2.6 .6 0 .6-.9 .6 5.3 .7-1.8 .6-1.4 .6 0 .6 2.2 .6 .4 .7-2.6 .6-2.5 .6 5.3 .6-5.7 .6 1.9 .7-1.9 .6 1.3 .6-1 .6 3.8 .6-2.8 .7-.2 .6-.4 .6 .6 .6 2.7 .6-4.1 .7 1.6 .6 4.3 .6-.1 .6-3.8 .6-1.7 .7 5.9 .6-4.1 .6 2.9 .6 .6 .6-4.9 .7 3.7 .6-.2 .6-4.2 .6 4.3 .6-3.2 .7 .8 .6-1.1 .6-.3 .6 .4 .6 3.2 .7-3.8 .6 4.8 .6-3 .6 2.4 .6-3.5 .7 3.2 .6-2.8 .6 4.4 .6-5.7 .6 5.6 .7-3.5 .6 .9 .6 3.1 .6-6 .6 4.5 .7-3 .6 2.8 .6-3 .6 1.3 .6-.9 .7 3.6 .6-5.1 .6 .2 .6 2.8 .6-2.7 .7 5.4 .6-5.4 .6 3.8 .6-4.2 .6 .7 .7 1.8 .6 3.2 .6-1.7 .6-4 .6 1.5 .7 3.9 .6-5.7 .6 .5 .6 2.8 .6 .7 .7 1.6 .6 .1 .6-.2 .6-.3 .6-2 .7 1.8 .6-1 .6 .9 .6-2 .6 1.8 .7-.4 .6 .6 .6-2.6 .6 2.1 .6 .8 .7-4.4 .6 0 .6-.7 .6 3.3 .6 1.3 .7-.3 .6-.6 .6-2.6 .6 1.8 .6 3.3 .7-3 .6 1.1 .6-.6 .6-2.9 .6 3.7 .7-3.9 .6 2.9 .6-2.4 .6 1.1 .6 0 .7-1.1 .6 4.7 .6-.6 .6 .9 .6-.3 .7-5.1 .6-.4 .6-.2 .6 5 .6-1.7 .7-3 .6 .7 .6 1.5 .6 3 .6-3.8 .7 .7 .6-2 .6 5.1 .6-1.9 .6-3.6 .7 2.8 .6-2.4 .6 4.9 .6-3 .6 2.7 .7-.5 .6 1 .6-1.1 .6-2.8 .6-1.7 .7 2.4 .6-2.2 .6 1.3 .6 0 .6 3.5 .7 0 .6-1.3 .6 1.3 .6-.3 .6-2.7 .7 .8 .6 1.8 .6-2.4 .6-2.3 .6 1.1 .7 .7 .6 2.3 .6 2.2 .6-.4 .6-2.3 .7 1.9 .6-5 .6 1.4 .6-.3 .6-1.6 .7 5.8 .6-4.4 .6 1.9 .6-1.1 .6 2.9 .7-3.4 .6 .8 .6-.3 .6 2.6 .6-.8 .7-1.5 .6-.7 .6 1.1 .6 2.4 .6-2.5 .7-.4 .6-1.1 .6 3.2 .6-.1 .6-3.9 .7 5.4 .6-.3 .6-4.1 .6-.7 .6 5.3 .7-6.1 .6 2.3 .6 3.1 .6-5.2 .6 .3 .7 .7 .6 1.4 .6-2.5 .6 4.4 .6 1.1 .7-3.5 .6 1.8 .6 2.1 .6-1.8 .6-.3 .7-3.7 .6 3.1 .6 .7 .6 2 .6-4.2 .7-.2 .6-.3 .6-.6 .6 1.4 .6 3.7 .7-4 .6 3.6 .6-1.3 .6-3.6 .6 1.1 .7 3.6 .6-1.1 .6-2.4 .6 3.6 .6-3.6 .7 3.3 .6 .3 .6 0 .6-2.2 .6-2.3 .7 4.5 .6-5.2 .6 1.4 .6 .8 .6 .4 .7 3 .6-3.9 .6 4.4 .6-6.2 .6 6 .7-1.7 .6 .1 .6-1.8 .6 1.9 .6-1.1 .7 2.8 .6-6 .6 5.7 .6-4 .6 1.2 .7 .9 .6-1.9 .6 3 .6-1.7 .6 .3 .7-.7 .6-2.1 .6 3.9 .6-2.5 .6 .6 .7 2.9 .6-2.6 .6 .2 .6-1.5 .6 4 .7-3.5 .6 .6 .6-.4 .6 1.7 .6 1.5 .7-5.5 .6 3.3 .6-3.1 .6 2.5 .6-.4 .7 .2 .6 .4 .6 2.6 .6-3.3 .6 1.7 .7-2.7 .6 4.1 .6-5.6 .6 1.9 .6 .8 .7-2.1 .6-.5 .6 4 .6-2.7 .6 1.5 .7 2.1 .6 .2 .6-1.6 .6 .4 .6-.2 .7-2.2 .6 1.5 .6 1 .6-2.8 .6-1.3 .7 .2 .6 1.5 .6 3.8 .6-.4 .6 1.2 .7-3.3 .6-1 .6 4 .6-5.4 .6 .1 .7 3.1 .6-3.7 .6 3.6 .6-.2 .6-.1 .7-1 .6-1.3 .6 4.4 .6-1.7 .6-3.7 .7 4.6 .6-3.5 .6 2.8 .6 1.4 .6-3.4 .7 .2 .6 1.1 .6 2.7 .6-2.9 .6-2.9 .7 2.7 .6-1.1 .6 1 .6 3.4 .6-1.5 .7-2 .6 1 .6 2 .6-2.4 .6-1.9 .7 1.4 .6 3.3 .6-5.1 .6 .7 .6-.1 .7 .7 .6 3.8 .6-4.6 .6 3.4 .6-4.9 .7 5.4 .6-1.8 .6-3.2 .6 5.2 .6-2 .7 1 .6-2.3 .6 3.3 .6-.8 .6 1.1 .7-2.8 .6-.7 .6-.2 .6 3.1 .6-.6 .7-1.4 .6-.1 .6-1.8 .6 1.6 .6-2.6 .7 5.6 .6-.8 .6-3.4 .6 1.7 .6-2.3 .7 1.6 .6-2.6 .6 5.1 .6 .2 .6-2.8 .7 2.1 .6-3.4 .6 2.7 .6-2.9 .6 2 .7 .5 .6-.1 .6-1 .6 1.7 .6-.6 .7-2.3 .6 2.8 .6-1.9 .6-.8 .6 2.7 .7-.2 .6-2.4 .6 .5 .6 1.2 .6-.4 .7-1.6 .6 .4 .6 3 .6-2.1 .6 1.1 .7 .7 .6-2.9 .6 .4 .6 3.4 .6-.7 .7-2.1 .6 1.9 .6-3.1 .6 4.6 .6-5 .7 2.2 .6-.7 .6 1.3 .6-2.9 .6 1.9 .7 1.9 .6-4.7 .6 1.3 .6 2 .6 3 .7-3.5 .6-1 .6 .9 .6 2.3 .6-3.1 .7 4.3 .6-1 .6-.5 .6-2.3 .6 .6 .7 3 .6-.3 .6-3.4 .6 1.2 .6-1.9 .7-1.3 .6 4.8 .6-1.6 .6-.3 .6 2.8 .7 0 .6-1.1 .6 .7 .6-3.1 .6 3.4 .7-5.4 .6 3.2 .6 2.1 .6-2.1 .6-1.7 .7-1.2 .6-.4 .6 3 .6 1 .6 1.5 .7-2.8 .6-3 .6 3.2 .6 2.2 .6-3.9 .7 0 .6 3.4 .6-.2 .6-1.7 .6-1.4 .7-.4 .6 3.1 .6-.2 .6 .4 .6-2.4 .7-.6 .6 4 .6-4.9 .6 .8 .6 0 .7-.5 .6 3.7 .6-.3 .6-2.4 .6-1.6 .7-.3 .6 4.9 .6-3 .6 2 .6-2.8 .7-.5 .6 5.6 .6-2.9 .6 2.2 .6-1.4 .7-2.8 .6 3.9 .6 .9 .6-4.1 .6 3.2 .7-.4 .6 1.4 .6-4.1 .6-1.2 .6 .8 .7-1 .6-.2 .6 3.6 .6-.8 .6 2.5 .7-4.9 .6 2.9 .6-3.1 .6 1.3 .6-.7 .7 4.7 .6-2.9 .6-3.2 .6 5.8 .6 .5 .7-6 .6 5.5 .6-.1V1694Z" fill="#86c762" fill-opacity="0.3" stroke="#86c762" stroke-width="0.85" stroke-opacity="1" stroke-linejoin="round" clip-path="url(#ca)"/>
<rect x="39.3" y="1685.5" width="1641.7" height="4.5" fill="#86c762" fill-opacity="0.5"/>
<text x="1718.6" y="1422.6" font-size="9.3" fill="#6e9fff" textLength="22.6" lengthAdjust="spacingAndGlyphs">Name</text>
<text x="1875.6" y="1422.6" font-size="9.3" fill="#6e9fff" textLength="16.4" lengthAdjust="spacingAndGlyphs">Last</text>
<path d="M1894.3 1419.4 l1.3 1.3 l1.3 -1.3" fill="none" stroke="#6e9fff" stroke-width="0.7"/>
<path d="M1699.3 1427.5H1902.8M1699.3 1444.5H1902.8M1699.3 1460.5H1902.8M1699.3 1476.5H1902.8M1699.3 1492.5H1902.8M1699.3 1508.5H1902.8M1699.3 1525.5H1902.8M1699.3 1541.5H1902.8M1699.3 1557.5H1902.8M1699.3 1573.5H1902.8M1699.3 1590.5H1902.8M1699.3 1606.5H1902.8M1699.3 1622.5H1902.8M1699.3 1638.5H1902.8M1699.3 1654.5H1902.8" stroke="#ccccdc" stroke-opacity="0.12" stroke-width="1"/>
<rect x="1704" y="1434.8" width="9.1" height="2.2" rx="0.7" fill="#d9d236"/>
<text x="1718.6" y="1438.9" font-size="9.3" fill="#ccccdc" textLength="97.5" lengthAdjust="spacingAndGlyphs">Bedroom 1/Network Rack</text>
<text x="1871.8" y="1438.9" font-size="9.3" fill="#ccccdc" textLength="25.2" lengthAdjust="spacingAndGlyphs">2.24 A</text>
<rect x="1704" y="1451.02" width="9.1" height="2.2" rx="0.7" fill="#c9d43d"/>
<text x="1718.6" y="1455.12" font-size="9.3" fill="#ccccdc" textLength="80.6" lengthAdjust="spacingAndGlyphs">Kitchen Plugs/Fridge</text>
<text x="1873.5" y="1455.12" font-size="9.3" fill="#ccccdc" textLength="23.5" lengthAdjust="spacingAndGlyphs">1.34 A</text>
<rect x="1704" y="1467.24" width="9.1" height="2.2" rx="0.7" fill="#86cc60"/>
<text x="1718.6" y="1471.34" font-size="9.3" fill="#ccccdc" textLength="84.5" lengthAdjust="spacingAndGlyphs">Master Bedroom/Bath</text>
<text x="1866.7" y="1471.34" font-size="9.3" fill="#ccccdc" textLength="30.3" lengthAdjust="spacingAndGlyphs">340 mA</text>
<rect x="1704" y="1483.46" width="9.1" height="2.2" rx="0.7" fill="#7bc862"/>
<text x="1718.6" y="1487.56" font-size="9.3" fill="#ccccdc" textLength="131.3" lengthAdjust="spacingAndGlyphs">Dining Room/Kitchen/Living Room</text>
<text x="1867.3" y="1487.56" font-size="9.3" fill="#ccccdc" textLength="29.7" lengthAdjust="spacingAndGlyphs">240 mA</text>
<rect x="1704" y="1499.68" width="9.1" height="2.2" rx="0.7" fill="#7bc862"/>
<text x="1718.6" y="1503.78" font-size="9.3" fill="#ccccdc" textLength="20.6" lengthAdjust="spacingAndGlyphs">EVSE</text>
<text x="1867.7" y="1503.78" font-size="9.3" fill="#ccccdc" textLength="29.3" lengthAdjust="spacingAndGlyphs">220 mA</text>
<rect x="1704" y="1515.9" width="9.1" height="2.2" rx="0.7" fill="#7bc862"/>
<text x="1718.6" y="1520" font-size="9.3" fill="#ccccdc" textLength="86.9" lengthAdjust="spacingAndGlyphs">Laundry Room/Garage</text>
<text x="1868.9" y="1520" font-size="9.3" fill="#ccccdc" textLength="28.1" lengthAdjust="spacingAndGlyphs">120 mA</text>
<rect x="1704" y="1532.12" width="9.1" height="2.2" rx="0.7" fill="#7bc862"/>
<text x="1718.6" y="1536.22" font-size="9.3" fill="#ccccdc" textLength="41.8" lengthAdjust="spacingAndGlyphs">Microwave</text>
<text x="1868.9" y="1536.22" font-size="9.3" fill="#ccccdc" textLength="28.1" lengthAdjust="spacingAndGlyphs">120 mA</text>
<rect x="1704" y="1548.34" width="9.1" height="2.2" rx="0.7" fill="#7bc862"/>
<text x="1718.6" y="1552.44" font-size="9.3" fill="#ccccdc" textLength="31.1" lengthAdjust="spacingAndGlyphs">Furnace</text>
<text x="1868.9" y="1552.44" font-size="9.3" fill="#ccccdc" textLength="28.1" lengthAdjust="spacingAndGlyphs">120 mA</text>
<rect x="1704" y="1564.56" width="9.1" height="2.2" rx="0.7" fill="#7bc862"/>
<text x="1718.6" y="1568.66" font-size="9.3" fill="#ccccdc" textLength="36.4" lengthAdjust="spacingAndGlyphs">Unknown</text>
<text x="1872.4" y="1568.66" font-size="9.3" fill="#ccccdc" textLength="24.6" lengthAdjust="spacingAndGlyphs">80 mA</text>
<rect x="1704" y="1580.78" width="9.1" height="2.2" rx="0.7" fill="#7bc862"/>
<text x="1718.6" y="1584.88" font-size="9.3" fill="#ccccdc" textLength="81.1" lengthAdjust="spacingAndGlyphs">Disposal/Dishwasher</text>
<text x="1872.4" y="1584.88" font-size="9.3" fill="#ccccdc" textLength="24.6" lengthAdjust="spacingAndGlyphs">80 mA</text>
<rect x="1704" y="1597" width="9.1" height="2.2" rx="0.7" fill="#7bc862"/>
<text x="1718.6" y="1601.1" font-size="9.3" fill="#ccccdc" textLength="36.4" lengthAdjust="spacingAndGlyphs">Unknown</text>
<text x="1884.1" y="1601.1" font-size="9.3" fill="#ccccdc" textLength="12.9" lengthAdjust="spacingAndGlyphs">0 A</text>
<rect x="1704" y="1613.22" width="9.1" height="2.2" rx="0.7" fill="#7bc862"/>
<text x="1718.6" y="1617.32" font-size="9.3" fill="#ccccdc" textLength="50.8" lengthAdjust="spacingAndGlyphs">Panel Outlets</text>
<text x="1884.1" y="1617.32" font-size="9.3" fill="#ccccdc" textLength="12.9" lengthAdjust="spacingAndGlyphs">0 A</text>
<rect x="1704" y="1629.44" width="9.1" height="2.2" rx="0.7" fill="#7bc862"/>
<text x="1718.6" y="1633.54" font-size="9.3" fill="#ccccdc" textLength="36.4" lengthAdjust="spacingAndGlyphs">Unknown</text>
<text x="1884.1" y="1633.54" font-size="9.3" fill="#ccccdc" textLength="12.9" lengthAdjust="spacingAndGlyphs">0 A</text>
<rect x="1704" y="1645.66" width="9.1" height="2.2" rx="0.7" fill="#7bc862"/>
<text x="1718.6" y="1649.76" font-size="9.3" fill="#ccccdc" textLength="47.4" lengthAdjust="spacingAndGlyphs">Living Room</text>
<text x="1884.1" y="1649.76" font-size="9.3" fill="#ccccdc" textLength="12.9" lengthAdjust="spacingAndGlyphs">0 A</text>
<rect x="11.5" y="1714.5" width="1897" height="196" rx="1.4" fill="#181b1f" stroke="#2e3036" stroke-width="1"/>
<text x="17.8" y="1728.8" font-size="10" fill="#ccccdc" textLength="21.9" lengthAdjust="spacingAndGlyphs" stroke="#ccccdc" stroke-width="0.22">Volts</text>
<g fill="none" stroke="#9d9dae" stroke-width="0.85" stroke-linecap="round" stroke-linejoin="round">
<path d="M52.2 1729L60.1 1721" stroke-width="0.95"/>
<path d="M52.7 1722.7Q53.2 1720.7 55.2 1720.6H58"/>
<path d="M60.5 1723.2V1724.9"/>
<path d="M60.1 1727.5Q59.6 1729.5 57.6 1729.6H54.8"/>
<path d="M52.3 1727V1725.3"/>
<circle cx="52.9" cy="1722.7" r="0.75" fill="#9d9dae" stroke="none"/>
<circle cx="59.8" cy="1727.8" r="0.75" fill="#9d9dae" stroke="none"/>
</g>
<path d="M57.5 1747.2V1893.8M117.5 1747.2V1893.8M177.5 1747.2V1893.8M237.5 1747.2V1893.8M298.5 1747.2V1893.8M358.5 1747.2V1893.8M418.5 1747.2V1893.8M478.5 1747.2V1893.8M538.5 1747.2V1893.8M598.5 1747.2V1893.8M659.5 1747.2V1893.8M719.5 1747.2V1893.8M779.5 1747.2V1893.8M839.5 1747.2V1893.8M899.5 1747.2V1893.8M959.5 1747.2V1893.8M1020.5 1747.2V1893.8M1080.5 1747.2V1893.8M1140.5 1747.2V1893.8M1200.5 1747.2V1893.8M1260.5 1747.2V1893.8M1320.5 1747.2V1893.8M1381.5 1747.2V1893.8M1441.5 1747.2V1893.8M1501.5 1747.2V1893.8M1561.5 1747.2V1893.8M1621.5 1747.2V1893.8M1681.5 1747.2V1893.8M1741.5 1747.2V1893.8M1802.5 1747.2V1893.8M1862.5 1747.2V1893.8" stroke="#ccccdc" stroke-opacity="0.1" stroke-width="1" fill="none"/>
<path d="M56.5 1755.5H1898M56.5 1776.5H1898M56.5 1798.5H1898M56.5 1819.5H1898M56.5 1840.5H1898M56.5 1862.5H1898M56.5 1883.5H1898" stroke="#ccccdc" stroke-opacity="0.08" stroke-width="1" fill="none"/>
<text x="31.41" y="1757.3" font-size="9.3" fill="#c7c7d6" textLength="21.09" lengthAdjust="spacingAndGlyphs">123 V</text>
<text x="20.19" y="1778.6" font-size="9.3" fill="#c7c7d6" textLength="32.31" lengthAdjust="spacingAndGlyphs">122.75 V</text>
<text x="24.68" y="1799.9" font-size="9.3" fill="#c7c7d6" textLength="27.82" lengthAdjust="spacingAndGlyphs">122.5 V</text>
<text x="20.19" y="1821.2" font-size="9.3" fill="#c7c7d6" textLength="32.31" lengthAdjust="spacingAndGlyphs">122.25 V</text>
<text x="31.41" y="1842.5" font-size="9.3" fill="#c7c7d6" textLength="21.09" lengthAdjust="spacingAndGlyphs">122 V</text>
<text x="20.19" y="1863.8" font-size="9.3" fill="#c7c7d6" textLength="32.31" lengthAdjust="spacingAndGlyphs">121.75 V</text>
<text x="24.68" y="1885.1" font-size="9.3" fill="#c7c7d6" textLength="27.82" lengthAdjust="spacingAndGlyphs">121.5 V</text>
<text x="57.5" y="1902.5" font-size="9.3" fill="#c7c7d6" text-anchor="middle" textLength="22.52" lengthAdjust="spacingAndGlyphs">00:00</text>
<text x="117.66" y="1902.5" font-size="9.3" fill="#c7c7d6" text-anchor="middle" textLength="22.52" lengthAdjust="spacingAndGlyphs">00:05</text>
<text x="177.82" y="1902.5" font-size="9.3" fill="#c7c7d6" text-anchor="middle" textLength="22.52" lengthAdjust="spacingAndGlyphs">00:10</text>
<text x="237.98" y="1902.5" font-size="9.3" fill="#c7c7d6" text-anchor="middle" textLength="22.52" lengthAdjust="spacingAndGlyphs">00:15</text>
<text x="298.14" y="1902.5" font-size="9.3" fill="#c7c7d6" text-anchor="middle" textLength="22.52" lengthAdjust="spacingAndGlyphs">00:20</text>
<text x="358.3" y="1902.5" font-size="9.3" fill="#c7c7d6" text-anchor="middle" textLength="22.52" lengthAdjust="spacingAndGlyphs">00:25</text>
<text x="418.46" y="1902.5" font-size="9.3" fill="#c7c7d6" text-anchor="middle" textLength="22.52" lengthAdjust="spacingAndGlyphs">00:30</text>
<text x="478.62" y="1902.5" font-size="9.3" fill="#c7c7d6" text-anchor="middle" textLength="22.52" lengthAdjust="spacingAndGlyphs">00:35</text>
<text x="538.78" y="1902.5" font-size="9.3" fill="#c7c7d6" text-anchor="middle" textLength="22.52" lengthAdjust="spacingAndGlyphs">00:40</text>
<text x="598.94" y="1902.5" font-size="9.3" fill="#c7c7d6" text-anchor="middle" textLength="22.52" lengthAdjust="spacingAndGlyphs">00:45</text>
<text x="659.1" y="1902.5" font-size="9.3" fill="#c7c7d6" text-anchor="middle" textLength="22.52" lengthAdjust="spacingAndGlyphs">00:50</text>
<text x="719.26" y="1902.5" font-size="9.3" fill="#c7c7d6" text-anchor="middle" textLength="22.52" lengthAdjust="spacingAndGlyphs">00:55</text>
<text x="779.42" y="1902.5" font-size="9.3" fill="#c7c7d6" text-anchor="middle" textLength="22.52" lengthAdjust="spacingAndGlyphs">01:00</text>
<text x="839.58" y="1902.5" font-size="9.3" fill="#c7c7d6" text-anchor="middle" textLength="22.52" lengthAdjust="spacingAndGlyphs">01:05</text>
<text x="899.74" y="1902.5" font-size="9.3" fill="#c7c7d6" text-anchor="middle" textLength="22.52" lengthAdjust="spacingAndGlyphs">01:10</text>
<text x="959.9" y="1902.5" font-size="9.3" fill="#c7c7d6" text-anchor="middle" textLength="22.52" lengthAdjust="spacingAndGlyphs">01:15</text>
<text x="1020.06" y="1902.5" font-size="9.3" fill="#c7c7d6" text-anchor="middle" textLength="22.52" lengthAdjust="spacingAndGlyphs">01:20</text>
<text x="1080.22" y="1902.5" font-size="9.3" fill="#c7c7d6" text-anchor="middle" textLength="22.52" lengthAdjust="spacingAndGlyphs">01:25</text>
<text x="1140.38" y="1902.5" font-size="9.3" fill="#c7c7d6" text-anchor="middle" textLength="22.52" lengthAdjust="spacingAndGlyphs">01:30</text>
<text x="1200.54" y="1902.5" font-size="9.3" fill="#c7c7d6" text-anchor="middle" textLength="22.52" lengthAdjust="spacingAndGlyphs">01:35</text>
<text x="1260.7" y="1902.5" font-size="9.3" fill="#c7c7d6" text-anchor="middle" textLength="22.52" lengthAdjust="spacingAndGlyphs">01:40</text>
<text x="1320.86" y="1902.5" font-size="9.3" fill="#c7c7d6" text-anchor="middle" textLength="22.52" lengthAdjust="spacingAndGlyphs">01:45</text>
<text x="1381.02" y="1902.5" font-size="9.3" fill="#c7c7d6" text-anchor="middle" textLength="22.52" lengthAdjust="spacingAndGlyphs">01:50</text>
<text x="1441.18" y="1902.5" font-size="9.3" fill="#c7c7d6" text-anchor="middle" textLength="22.52" lengthAdjust="spacingAndGlyphs">01:55</text>
<text x="1501.34" y="1902.5" font-size="9.3" fill="#c7c7d6" text-anchor="middle" textLength="22.52" lengthAdjust="spacingAndGlyphs">02:00</text>
<text x="1561.5" y="1902.5" font-size="9.3" fill="#c7c7d6" text-anchor="middle" textLength="22.52" lengthAdjust="spacingAndGlyphs">02:05</text>
<text x="1621.66" y="1902.5" font-size="9.3" fill="#c7c7d6" text-anchor="middle" textLength="22.52" lengthAdjust="spacingAndGlyphs">02:10</text>
<text x="1681.82" y="1902.5" font-size="9.3" fill="#c7c7d6" text-anchor="middle" textLength="22.52" lengthAdjust="spacingAndGlyphs">02:15</text>
<text x="1741.98" y="1902.5" font-size="9.3" fill="#c7c7d6" text-anchor="middle" textLength="22.52" lengthAdjust="spacingAndGlyphs">02:20</text>
<text x="1802.14" y="1902.5" font-size="9.3" fill="#c7c7d6" text-anchor="middle" textLength="22.52" lengthAdjust="spacingAndGlyphs">02:25</text>
<text x="1862.3" y="1902.5" font-size="9.3" fill="#c7c7d6" text-anchor="middle" textLength="22.52" lengthAdjust="spacingAndGlyphs">02:30</text>
<clipPath id="cv"><rect x="57.5" y="1747.2" width="1823" height="146.6"/></clipPath>
<path d="M57.5 1767.4l1 6 1 6 .7-3 .7-3 .9 4.3 .8 4.2 .8-5.5 .7-5.6 1.1 6.9 1.1 6.8 .6-8.6 .7-8.5 1.1 6.4 1.2 6.4 1.1-4.7 1.1-4.7 1.2 .2 1.1 .5 1.1 .7 1.2 1 1.1 1.2 1.2 1.3 1.1 1.3 1.1 1.3 1.2 1.2 1.1 1 1.2 .8 1.1 .5 1.1 .1 1.2 .1 1.1 .2 1.2 .2 1.2 .4 1.1 .4 1.2 .4 1.1 .3 1.2 .3 1.1 .2 1.2 .1 .7-6.8 .6-6.9 1.1 4.3 1 4.3 .8-4.3 .8-4.3 .9 9.8 .8 9.8 1.2-.2 1.2-.6 1.2-1 1.2-1.3 1.2-1.5 1.2-1.5 1.2-1.5 1.2-1.3 1.1-1 1.2-.7 1.2-.2 .9 6.5 .9 6.4 1-4.7 .9-4.6 1.1 6.8 1 6.9 .9-7.6 .9-7.7 1 12 1.1 12 .8-11.1 .9-11 1.1 7.7 1.1 7.7 .8-6.3 .7-6.4 .8 5.6 .8 5.5 1.1-8.4 1.2-8.5 1 8.6 1 8.5 .8-5.5 .8-5.5 1.1 5.6 1 5.6 1-6.8 1-6.8 .7 6.9 .6 6.8 .8-6.8 .9-6.8 1.1 .1 1.1 0 1.1 .1 1.1 .1 1.1 .2 1.2 .1 1.1 .2 1.1 .2 1.1 .2 1.1 .2 1.1 .1 1.1 .2 1.2 .1 1.1 .1 1.1 .1 1.1 0 .8-6.8 .7-6.9 .7 6.9 .7 6.8 .7-7.7 .7-7.7 .9 8.6 .8 8.5 1.4-2.3 1.3-5.4 1.4-5.4 1.3-2.3 1 6.9 1 6.8 1.1-6.8 1-6.9 .8 6.9 .7 6.8 .7-8.5 .6-8.6 .7 8.6 .8 8.5 1-6.8 1-6.9 1.1 6.9 1.1 6.8 1.2-.8 1.1-2.1 1.1-3.1 1.1-3.4 1.1-3.1 1.1-2.1 1.1-.8 1.2 .2 1.1 .6 1.1 .8 1.1 1.2 1.2 1.4 1.1 1.5 1.1 1.5 1.1 1.5 1.2 1.4 1.1 1.1 1.1 .9 1.1 .5 1.2 .2 1-5.5 1.1-5.6 1 5.6 1 5.5 1.1 .1 1.1 .1 1.1 .1 1.2 .3 1.1 .2 1.1 .3 1.1 .3 1.2 .3 1.1 .3 1.1 .3 1.1 .1 1.1 .1 1.2 .1 .9-5.6 1-5.5 .9 4.3 .9 4.2 1-4.2 .9-4.3 1.2 .2 1.1 .4 1.1 .8 1.1 1 1.1 1 1.2 1.1 1.1 .9 1.1 .8 1.1 .4 1.2 .2 .7-3.4 .7-3.4 .9 3.4 1 3.4 1.1-3.4 1.1-3.4 1.1 .1 1.1 .4 1.1 .6 1.1 .8 1.1 .9 1.2 1.1 1.1 1.2 1.1 1.3 1.1 1.2 1.1 1.2 1.1 1.1 1.2 1 1.1 .8 1.1 .6 1.1 .4 1.1 .1 1-6.4 .9-6.4 1.1 5.5 1.1 5.6 1.2-1.7 1.1-4.2 1.1-5.3 1.1-4.2 1.2-1.7 .6 9.4 .7 9.4 .7-7.7 .7-7.7 1.1 4.7 1.1 4.7 1.1-6.4 1.1-6.4 1.1 8.6 1.1 8.5 1.1-.3 1.1-.6 1.1-1.1 1.1-1.3 1.1-1.7 1.1-1.8 1.1-1.8 1.1-1.8 1.1-1.7 1.1-1.3 1.1-1.1 1.1-.6 1.1-.3 1.5 4.3 1.5 8.5 1.4 4.3 1.1-.2 1.1-.7 1.1-1.1 1.1-1.3 1.2-1.7 1.1-1.8 1.1-1.8 1.1-1.8 1.1-1.6 1.1-1.4 1.1-1.1 1.1-.6 1.1-.3 1.1 5.6 1.1 5.5 1-6.4 .9-6.4 .7 4.3 .7 4.3 .8-2.2 .9-2.1 .7 5.5 .6 5.6 .9-8.5 .9-8.6 1.2 3.7 1.2 7.2 1.2 3.6 .8-5.5 .8-5.6 .8 7.7 .8 7.7 .9-6.4 .9-6.4 .6 5.5 .6 5.6 1.1-7.7 1.2-7.7 1.1 1.3 1.2 3.2 1.2 3.9 1.2 3.2 1.2 1.2 1-5.5 1-5.6 .8 6.9 .9 6.8 .7-6.8 .8-6.9 .9 6.9 .8 6.8 .9-5.6 .9-5.5 1.1 3.4 1 3.4 1-3.4 1-3.4 .6 3.4 .7 3.4 1.1-4.7 1.1-4.7 .8 5.6 .9 5.5 .7-7.2 .6-7.3 1 6.4 1 6.4 .6-5.5 .7-5.6 .8 7.7 .9 7.7 .8-6.8 .8-6.9 .7 7.7 .8 7.7 1.1-9.4 1.1-9.4 .6 7.3 .6 7.2 .9-5.5 .9-5.6 1.2 1.3 1.1 3.4 1.2 4.3 1.1 3.4 1.2 1.3 .9-5.6 1-5.5 1.1 6.4 1 6.4 1.1-8.5 1.1-8.6 .9 8.6 .9 8.5 .7-8.5 .6-8.6 .7 7.7 .7 7.7 .9-6.8 .9-6.9 1.2 6.9 1.1 6.8 .9-6.8 1-6.9 1.2 1.3 1.1 3.4 1.2 4.3 1.1 3.4 1.1 1.3 .9-6.8 1-6.9 .6 5.6 .6 5.5 1.1-8.9 1.1-9 1.1 10.2 1.1 10.3 .7-6.8 .7-6.9 1.2 .7 1.1 1.9 1.1 2.7 1.1 3.1 1.1 2.7 1.1 1.9 1.1 .7 .8-6.8 .7-6.9 .7 4.7 .6 4.7 .8-3.4 .7-3.4 .9 4.3 .8 4.2 .8-5.5 .8-5.6 .7 4.7 .7 4.7 .9-4.7 .9-4.7 .8 4.7 .8 4.7 .7-4.7 .7-4.7 .6 7.7 .7 7.7 1.2-.7 1.2-1.8 1.2-2.8 1.2-3.2 1.2-3.3 1.2-2.8 1.2-1.8 1.3-.7 1 9.6 1.1 9.6 1.1-.1 1.1-.4 1.1-.6 1.1-.8 1.1-1 1.1-1.1 1.1-1.2 1.1-1.2 1.1-1.2 1.1-1.1 1.1-1 1.1-.8 1.1-.7 1.1-.3 1.1-.2 1 5.5 .9 5.4 .7-5.5 .6-5.6 1.1 6.3 1 6.3 .9-7.4 .8-7.3 1.2 .9 1.3 2.2 1.2 3 1.2 3 1.3 2.3 1.2 .8 1.3-1 1.3-2.5 1.3-3.1 1.3-2.5 1.3-.9 .8 6.7 .8 6.7 .9-5.7 1-5.6 .8 4.1 .8 4.2 .9-5.7 .9-5.6 .6 4.6 .7 4.6 1-6.5 1.1-6.5 .8 11.4 .9 11.4 1.1-8.7 1.1-8.6 .8 2.8 .8 2.9 1-1.8 1-1.8 1.1 .2 1.2 .6 1.1 .9 1.1 .8 1.2 .6 1.1 .3 .7-5.7 .8-5.6 .7 6.3 .8 6.3 .8-4.3 .7-4.4 .6 7.6 .7 7.6 1.1-1.8 1.1-4.6 1.2-5.8 1.1-4.6 1.2-1.8 .7 6.7 .7 6.7 .8-6.9 .8-6.9 1.2 .6 1.2 1.6 1.2 2.1 1.1 2.2 1.2 1.6 1.2 .5 1-4.6 .9-4.7 1.2 0 1.1 0 1.2 0 1.1 .1 1.2 0 1.1 0 1.2 .1 1.1 0 1.2 0 1.1 .1 1.2 0 1.1 0 1.2 .1 1.1 0 1.2 0 .9 5.5 .9 5.6 1.1-7.2 1.1-7.2 .6 7.2 .6 7.3 .7 0 .6 0 1.1 1.3 1.1 1.3 1-6.8 1.1-6.8 1 5.6 1 5.5 1.2-.5 1.3-1.6 1.2-2 1.3-2.1 1.2-1.6 1.3-.5 .7 4.3 .7 4.2 .7-4.2 .6-4.3 1.1 5.6 1.1 5.6 .9-5.6 .9-5.5 .6 6.4 .6 6.4 1.1-6.3 1-6.4 .8 5.5 .8 5.6 .9-7.6 1-7.7 1.2 .9 1.1 2.4 1.2 3.4 1.1 3.8 1.2 3.5 1.1 2.4 1.2 .8 1-7.6 1-7.7 1.1 5.6 1 5.6 .6-5.6 .7-5.5 1.1 .7 1.2 1.9 1.2 2.8 1.1 3 1.2 2.8 1.2 1.9 1.1 .7 1.3-1.6 1.2-4 1.2-4.1 1.2-1.6 1 7.8 1 7.7 1-7.4 1.1-7.5 .9 7.2 .9 7.3 1.1 0 1.1-.1 1.2-.2 1.1-.2 1.2-.3 1.1-.3 1.2-.3 1.1-.3 1.1-.3 1.2-.2 1.1-.2 1.2-.1 1.1 0 1 6.4 1 6.4 1.3-1.6 1.4-4.2 1.3-5.2 1.3-4.2 1.3-1.6 1.1 .8 1.1 2.1 1.2 3.1 1.1 3.5 1.1 3.1 1.2 2.2 1.1 .8 .7-6.8 .8-6.8 1.1 4.7 1.1 4.7 .8-3.4 .7-3.3 .9 6.4 1 6.4 .8-9.4 .8-9.3 .9 6.4 .8 6.4 1.1-.1 1.2-.5 1.1-.7 1.2-.9 1.1-1 1.2-1 1.1-.9 1.1-.7 1.2-.5 1.1-.1 .9 5.5 .9 5.6 1-6.8 .9-6.8 .9 7.9 .9 7.9 1-7.8 1.1-7.8 1 8.4 1 8.4 .9-4.9 1-4.9 .9 4.1 1 4.1 .7-4.1 .8-4.2 1.2 .6 1.2 1.5 1.1 2.3 1.2 2.5 1.2 2.2 1.1 1.6 1.2 .6 1.2-1.4 1.1-3.2 1.1-3.2 1.2-1.3 .9 4.7 1 4.8 1.2-.2 1.2-.6 1.1-1 1.2-1.2 1.2-1.4 1.2-1.6 1.1-1.5 1.2-1.5 1.2-1.2 1.2-.9 1.1-.6 1.2-.2 .6 8.5 .6 8.6 1.2-.2 1.1-.5 1.2-.9 1.1-1 1.2-1 1.1-1 1.2-.9 1.1-.5 1.1-.2 1.2 0 1.1-.1 1.1-.2 1.1-.3 1.2-.3 1.1-.4 1.1-.4 1.1-.4 1.2-.3 1.1-.4 1.1-.3 1.1-.3 1.2-.2 1.1-.1 1.1 0 .9 6.5 .8 6.5 .8-1.7 .8-1.8 .8 6.1 .9 6 .7-5.5 .6-5.6 .7 4.1 .7 4 .9-8.6 .8-8.6 1 4.8 1.1 4.8 .9-9 .9-8.9 1.1 4.8 1.1 4.8 .9-5.4 .8-5.4 1.1 5.5 1.1 5.6 .8-8.6 .8-8.5 1.1 9.3 1.1 9.4 .6-8.6 .6-8.5 1.1 2.3 1.2 5.9 1.1 7.3 1.1 6 1.2 2.2 1.4-5.5 1.5-11.2 1.4-5.5 1.1 0 1.2-.1 1.1-.1 1.1-.1 1.1-.2 1.2-.1 1.1-.2 1.1-.2 1.2-.2 1.1-.2 1.1-.2 1.2-.2 1.1-.1 1.1-.1 1.1-.1 1.2-.1 1.1 0 .8 5.5 .8 5.6 .7-5.6 .7-5.6 .6 7.7 .6 7.7 .6-7.7 .6-7.7 .7 6.4 .7 6.3 .9-4.2 1-4.3 .7 5.5 .8 5.5 .7-8.5 .8-8.6 .9 8.5 1 8.5 1.2-1.4 1.3-3.9 1.2-4.8 1.3-3.9 1.2-1.4 .9 11.9 .9 11.9 .7-12 .7-11.9 .6 6.4 .6 6.3 .9-1.3 1-1.3 .8 2.6 .8 2.5 .8-5.6 .9-5.5 1.3 1.8 1.4 4.5 1.3 4.5 1.4 1.8 .9-9.1 .9-9.1 .7 4.6 .7 4.7 .7-7.3 .7-7.3 1.3 1.8 1.3 4.3 1.2 4.4 1.3 1.8 .8-7.5 .9-7.5 .7 8.9 .7 8.9 1.1-11.2 1.1-11.1 .7 5.5 .8 5.5 1-5.6 1.1-5.6 .7 6.8 .7 6.8 1.2-.7 1.1-2 1.2-2.8 1.1-3.1 1.2-2.8 1.1-1.9 1.2-.7 1 6.8 1.1 6.8 .7-8.6 .6-8.5 1.3 4.6 1.2 9.3 1.3 4.6 .9-8.5 .9-8.6 1.1 5.5 1.1 5.5 .9-3.4 .9-3.5 1 6.4 .9 6.3 1-7.7 .9-7.7 .8 6.8 .7 6.8 1.3-2.3 1.3-5.5 1.3-5.5 1.3-2.3 .7 7.7 .7 7.6 .9-4.3 .8-4.2 .9 12.4 .8 12.4 .7-4.6 .7-4.5 1.1 10.5 1.1 10.5 .8 .4 .8 .3 1.4 30.7 1.4 30.7 1.3-28.6 1.4-28.5 1.2-.9 1.2-2.3 1.3-2.9 1.2-2.4 1.2-.9 1.1 6.8 1 6.8 .9-8.6 .8-8.6 1 6.4 .9 6.3 .7-4.7 .6-4.7 .6 7.6 .7 7.7 1-7.7 1-7.8 1.1 .7 1.1 1.8 1.1 2.7 1.1 2.9 1.2 2.7 1.1 1.8 1.1 .7 .8-7.7 .9-7.7 .7 5.5 .7 5.5 1.2-.7 1.2-1.8 1.2-2.2 1.2-1.7 1.2-.7 .8 6.3 .9 6.4 .9-7.7 1-7.7 1.2-.1 1.2-.4 1.1-.5 1.2-.7 1.2-.8 1.2-.8 1.1-.9 1.2-.8 1.2-.6 1.2-.6 1.1-.3 1.2-.1 .7 7.2 .6 7.2 .8-9.1 .7-9 .8 8.4 .7 8.4 .9-7.7 1-7.7 1 7.6 1.1 7.6 1-8.6 1.1-8.5 1 8.4 1.1 8.5 .9-8.6 1-8.5 .9 6.3 .9 6.4 1.1-4.4 1.1-4.3 .8 3.4 .7 3.4 .9-4.7 .8-4.8 .8 6.8 .7 6.8 .9-8.6 .9-8.5 .8 9.3 .8 9.3 1.1-.9 1.1-2.7 1.2-3.8 1.1-4.2 1.1-3.9 1.1-2.6 1.1-1 .8 8.5 .8 8.5 .8-6.9 .8-6.8 1.2 8.1 1.1 8.2 1-11.6 1.1-11.7 1.1 .3 1.2 1 1.1 1.2 1.2 1.3 1.1 .9 1.2 .4 .7-8.6 .8-8.6 .9 6.4 .9 6.4 .9-.5 .9-.5 .6 1.3 .7 1.2 .9-6.4 .8-6.4 1 6.3 .9 6.4 1.2-1.7 1.1-3.9 1.2-4 1.1-1.7 .9 6.8 .9 6.8 .6-8.6 .7-8.5 .8 6.4 .9 6.3 .6-1.3 .6-1.3 .7 2.1 .7 2.1 1-6.4 1.1-6.5 1 8.5 1 8.5 1.3-1.8 1.3-4.8 1.3-5.8 1.4-4.8 1.3-1.8 .8 9.3 .9 9.4 .7-6.5 .8-6.4 1.1 .8 1.1 1.8 1.2 1.7 1.1 .8 .7-3.9 .7-3.9 .6 8 .7 8 .8-7.3 .8-7.3 1.1 .4 1.2 .9 1.1 1.4 1.1 1.9 1.1 2.2 1.1 2.2 1.1 2.1 1.2 1.9 1.1 1.5 1.1 .9 1.1 .3 1.1-.6 1.2-1.5 1.1-2.2 1.2-2.1 1.1-1.5 1.2-.6 1.2 .7 1.3 2 1.2 2.8 1.2 2.8 1.3 2 1.2 .8 1.3-1.5 1.2-3.8 1.3-4.8 1.3-3.8 1.2-1.5 .9 5.6 1 5.5 1-4.7 1.1-4.7 .8 5.6 .8 5.5 .9-6.4 .9-6.4 1 7.7 1 7.7 1.3-1.7 1.3-3.9 1.3-3.9 1.3-1.6 1.1 6.4 1.2 6.4 1.2-2.8 1.2-6.6 1.2-6.6 1.2-2.8 1.3 1.8 1.3 4.7 1.4 5.8 1.3 4.7 1.3 1.8 .9-6.4 .9-6.4 1 3.4 1.1 3.4 .6-6.4 .7-6.4 .7 7.3 .8 7.2 1.2-.7 1.3-2.1 1.2-2.7 1.2-2.8 1.2-2 1.3-.8 1.1 4.7 1.1 4.7 1.1-.9 1.2-2.5 1.1-3.4 1.2-3.4 1.1-2.5 1.2-.9 .7 8.9 .8 9 .6-8.6 .7-8.5 .6 8.5 .7 8.6 .8-6.9 .8-6.8 1.2 0 1.2 0 1.1 0 1.2 0 1.2 0 1.1 0 1.2 0 1.1 0 1.2 0 .8 6.8 .8 6.9 .8-5.6 .9-5.5 1.2 1.6 1.3 3.9 1.3 3.9 1.3 1.7 .7-8.6 .8-8.5 1.1 8.5 1.1 8.6 .8-7.7 .8-7.7 .8 5.6 .8 5.5 .9-6.4 .9-6.4 .7 12.8 .7 12.8 1-9.8 1-9.8 .9 5.5 .9 5.6 .9-6.9 .8-6.8 1 7.7 1 7.7 .8-8.6 .9-8.5 .8 7.7 .9 7.7 .8-6.9 .9-6.8 1.1 4.7 1.1 4.7 1.2-.5 1.2-1.3 1.2-1.8 1.2-2.1 1.2-1.9 1.2-1.3 1.2-.5 1.3 1.3 1.2 3.4 1.2 4.2 1.3 3.5 1.2 1.3 .9-7.7 .8-7.7 .7 7.6 .6 7.6 .9-8.8 .8-8.8 .7 5.8 .7 5.7 .6-6.4 .7-6.4 .7 6.1 .8 6.1 1.3-3.8 1.2-7.7 1.2-3.8 .9 4.7 .9 4.7 1.1-.2 1.2-.6 1.2-.8 1.1-1.2 1.2-1.2 1.2-1.4 1.1-1.3 1.2-1.1 1.1-.9 1.2-.5 1.2-.2 .6 5.5 .7 5.6 .7-4.3 .6-4.2 1.1 6.3 1.1 6.4 1.2-1 1.3-2.8 1.2-3.8 1.2-3.9 1.3-2.8 1.2-1 .8 6.8 .7 6.8 .9-5.5 .9-5.5 .7 3.4 .7 3.4 1.1-6.4 1.1-6.4 .7 5.1 .6 5.1 .7-2.1 .7-2.1 .7 6.3 .7 6.4 1.2-1.2 1.2-3.4 1.2-4.7 1.2-4.7 1.2-3.4 1.2-1.3 .8 8.5 .8 8.5 1.3-.9 1.2-2.5 1.2-3.4 1.3-3.4 1.2-2.5 1.2-.9 1 5.5 .9 5.6 .7-5.6 .8-5.5 1 5.5 .9 5.6 .7-5.6 .7-5.5 1 7.7 1 7.6 1.1-1 1.1-2.8 1.1-3.8 1.1-3.9 1.1-2.8 1.1-1 .9 7.7 .9 7.6 .9-9.3 .9-9.4 1.1 14.3 1.1 14.4 .9-9.3 1-9.4 1.1 1 1.1 2.8 1.1 4 1.1 4.4 1.1 4 1.1 2.8 1.1 1 .8-9.4 .9-9.3 .9 6.4 .9 6.4 .9-4.6 .9-4.7 .8 6.9 .9 6.8 .9-8.5 1-8.5 1.1 8.6 1.1 8.5 .9-7.6 .9-7.7 1.1 7.8 1 7.7 1.2-7.7 1.1-7.6 .9 7.7 .9 7.7 .8-8.5 .8-8.5 .7 8.5 .6 8.6 1-6.8 1-6.8 1 6.8 .9 6.9 .9-8.5 .9-8.5 1 8.6 1 8.5 1-6.8 .9-6.8 1.1 4.8 1.1 4.7 .9-3.4 .8-3.4 .9 6.4 .8 6.5 .7-6.4 .7-6.4 .8 4.3 .8 4.3 .8-6.4 .8-6.3 .9 7.7 1 7.7 1.1-.2 1.1-.4 1.1-.7 1.1-.9 1.1-1.1 1.1-1.2 1.1-1.2 1.1-1.2 1.1-1 1.1-.9 1.1-.7 1.2-.5 1.1-.1 .9 6.4 .9 6.4 .7-4.7 .7-4.7 1.1 5.5 1 5.6 .9-6.4 .8-6.4 .8 11.9 .7 12 .7-11.1 .7-11.1 1.2 0 1.2 0 1.2 0 1.2 0 1.2 0 1.1 0 1.2 0 1.2 0 1.2 0 1.2 0 1.2 0 .7 7.7 .7 7.6 .7-6.4 .7-6.3 .7 4.2 .7 4.3 1.1 .1 1.1 .2 1.1 .3 1.1 .4 1.1 .5 1.2 .4 1.1 .3 1.1 .3 1.1 0 1.1-8.5 1-8.5 1.1 6.4 1 6.4 .7-4.7 .6-4.7 1.2 0 1.1-.2 1.1-.2 1.1-.3 1.2-.3 1.1-.4 1.1-.4 1.1-.4 1.2-.5 1.1-.4 1.1-.4 1.1-.3 1.1-.3 1.2-.2 1.1-.1 1.1-.1 .9 7.4 .8 7.5 1.2-.2 1.2-.3 1.1-.6 1.2-.8 1.2-.7 1.2-.7 1.1-.6 1.2-.4 1.2-.1 .6-4.7 .7-4.7 .8 5.5 .8 5.6 .9-5.6 .9-5.5 .6 7.7 .6 7.6 1-7.6 1-7.7 1.1 .7 1.1 1.9 1.2 2.7 1.1 3 1.1 2.8 1.2 1.8 1.1 .7 1.2-1 1.2-2.8 1.2-3.4 1.2-2.8 1.2-1.1 1.1 6.4 1.1 6.4 .6-8.5 .7-8.5 .6 7.7 .6 7.6 1.5-3.4 1.4-6.8 1.5-3.4 .8 5.5 .9 5.6 1.1 0 1.1 .1 1.2 .2 1.1 .2 1.1 .3 1.1 .3 1.1 .4 1.1 .4 1.2 .4 1.1 .4 1.1 .3 1.1 .4 1.1 .3 1.1 .2 1.1 .2 1.2 .1 1.1 0 1.1-7.6 1.1-7.7 1.3 2 1.2 4.8 1.3 4.8 1.2 2 1.3-.9 1.3-2.5 1.3-3.4 1.2-3.4 1.3-2.5 1.3-.9 .9 6.8 1 6.8 .8-6.8 .8-6.8 1.3 2 1.4 4.8 1.4 4.8 1.3 2 .8-6.8 .9-6.9 1.1 4.7 1.1 4.6 1-5.5 1-5.6 .9 5.5 .8 5.6 .8-3.5 .7-3.4 .8 4.2 .7 4.3 .8-5.6 .7-5.5 1.1 4.6 1.1 4.7 .6-5.6 .7-5.5 .8 8.5 .7 8.5 1-7.7 1-7.7 1.2 .3 1.2 .7 1.1 1.2 1.2 1.6 1.1 1.8 1.2 1.9 1.1 2 1.2 1.8 1.1 1.5 1.2 1.2 1.1 .8 1.2 .2 1-9.4 1.1-9.4 .7 6.4 .6 6.4 1-3.5 1-3.4 1.3 1.1 1.2 2.7 1.3 3.4 1.2 2.7 1.3 1 1.4-4.2 1.4-8.6 1.4-4.3 1.1 .4 1.1 1.2 1.2 1.9 1.1 2.3 1.2 2.6 1.1 2.6 1.1 2.3 1.2 1.9 1.1 1.2 1.2 .4 1.3-1.3 1.3-3.5 1.3-4.3 1.3-3.4 1.3-1.3 1.2 2.5 1.3 6 1.2 6.1 1.3 2.5 1-5.6 1-5.6 1.1 .1 1.2 .1 1.1 .2 1.1 .3 1.2 .3 1.1 .3 1.1 .4 1.2 .4 1.1 .3 1.2 .3 1.1 .3 1.1 .2 1.2 .1 1.1 .1 1.1 6.4 1 6.3 .8-6.3 .8-6.4 .7 5.1 .7 5.1 .9-3.4 1-3.4 1.1 .2 1.1 .6 1.2 1.1 1.1 1.4 1.1 1.6 1.2 1.8 1.1 1.9 1.1 1.8 1.2 1.6 1.1 1.4 1.1 1 1.2 .7 1.1 .2 1.2-.3 1.1-.9 1.2-1.5 1.2-1.9 1.2-2.4 1.1-2.6 1.2-2.7 1.2-2.8 1.2-2.6 1.1-2.4 1.2-1.9 1.2-1.5 1.2-.9 1.1-.3 1.1 4.3 1 4.2 .7-4.2 .7-4.3 .9 5.5 1 5.6 .9-6.8 .9-6.9 1.2 .4 1.2 .9 1.1 1.5 1.2 1.9 1.2 2.2 1.2 2.1 1.2 1.9 1.2 1.5 1.1 .9 1.2 .4 .7-6.8 .6-6.9 1.1 7.7 1.1 7.7 .7-8.5 .7-8.6 .6 5.6 .6 5.5 1.2-.1 1.2-.3 1.2-.6 1.1-.6 1.2-.9 1.2-.9 1.2-.9 1.1-.9 1.2-.8 1.2-.7 1.2-.5 1.1-.3 1.2-.1 1.3 3.5 1.3 8.4 1.3 8.4 1.3 3.5 1.1-.1 1.1-.4 1.1-.6 1.2-.8 1.1-.9 1.1-1.2 1.1-1.2 1.1-1.3 1.1-1.3 1.1-1.3 1.1-1.2 1.1-1.1 1.2-1 1.1-.8 1.1-.6 1.1-.4 1.1-.1 1 .4 .9 .4 1.3-1 1.2-2.8 1.3-3.5 1.2-2.8 1.2-1.1 1 4.7 .9 4.7 .7-3.4 .7-3.4 1.4 2.2 1.4 4.2 1.5 2.2 1.1-1.1 1.2-2.7 1.1-3.4 1.1-2.8 1.2-1.1 .7 5.6 .7 5.5 1.1-5.5 1.2-5.5 1 7.7 1.1 7.6 1.3-2.2 1.3-5.4 1.3-5.4 1.3-2.3 .7 9.8 .7 9.8 1-10.6 1.1-10.6 .9 7.6 .9 7.7 1.2-4.2 1.3-8.5 1.3-4.3 .8 6.4 .7 6.4 1.1-3.4 1.1-3.4 .9 3.4 .8 3.4 .7-3.4 .7-3.4 .7 5.6 .7 5.5 1-6.8 .9-6.8 1.1-.1 1.2-.2 1.1-.4 1.1-.5 1.2-.5 1.1-.5 1.1-.4 1.1-.4 1.2-.2 1.1-.1 1 8.5 1 8.5 .6-5.5 .6-5.5 1.1 4.2 1 4.3 1.2-2.1 1.1-5.1 1.1-5.1 1.1-2.1 1.1 8.5 1.2 8.5 .9-6.8 1-6.8 .7 5.5 .7 5.6 1.1-7.2 1.1-7.3 1.2 .2 1.1 .6 1.2 .9 1.1 1.2 1.2 1.4 1.1 1.7 1.2 1.7 1.2 1.8 1.1 1.8 1.2 1.6 1.1 1.5 1.2 1.2 1.1 .9 1.2 .5 1.1 .2 .7-6.8 .7-6.8 1.1 .5 1.2 1.6 1.2 2.3 1.1 2.6 1.2 2.3 1.2 1.6 1.1 .6 1.3 .1 1.2 .2 1.2 .4 1.3 .3 1.2 .3 1.2 .1 .7 6.8 .8 6.8 .9-8.9 1-9 .8 9.9 .8 9.8 1-9.4 1-9.4 1 9.4 1 9.4 1-8.5 1-8.5 .7 7.7 .6 7.6 1-6.8 1.1-6.8 1.1 .1 1.1 0 1.1 .1 1.1 .2 1.1 .2 1.1 .2 1.1 .2 1.1 .3 1.1 .2 1.1 .3 1.1 .2 1.1 .3 1.2 .1 1.1 .2 1.1 .1 1.1 .1 1.1 0 .8 5.5 .8 5.6 1.1-.1 1.2-.4 1.1-.5 1.1-.8 1.2-.9 1.1-1.1 1.1-1.1 1.2-1.1 1.1-1.1 1.2-1.1 1.1-.9 1.1-.7 1.2-.6 1.1-.4 1.2-.1 .9 4.3 .9 4.3 1-5.6 .9-5.5 .7 6.8 .8 6.9 1.1-7.7 1.2-7.7 .9 5.6 .9 5.5" fill="none" stroke="#56a64b" stroke-width="0.85" stroke-linejoin="round" clip-path="url(#cv)"/>
<rect x="1918" y="0" width="2" height="1923" fill="#000"/>
<rect x="0" y="1921.1" width="1920" height="2" fill="#000"/>
</svg>
</body></html>
